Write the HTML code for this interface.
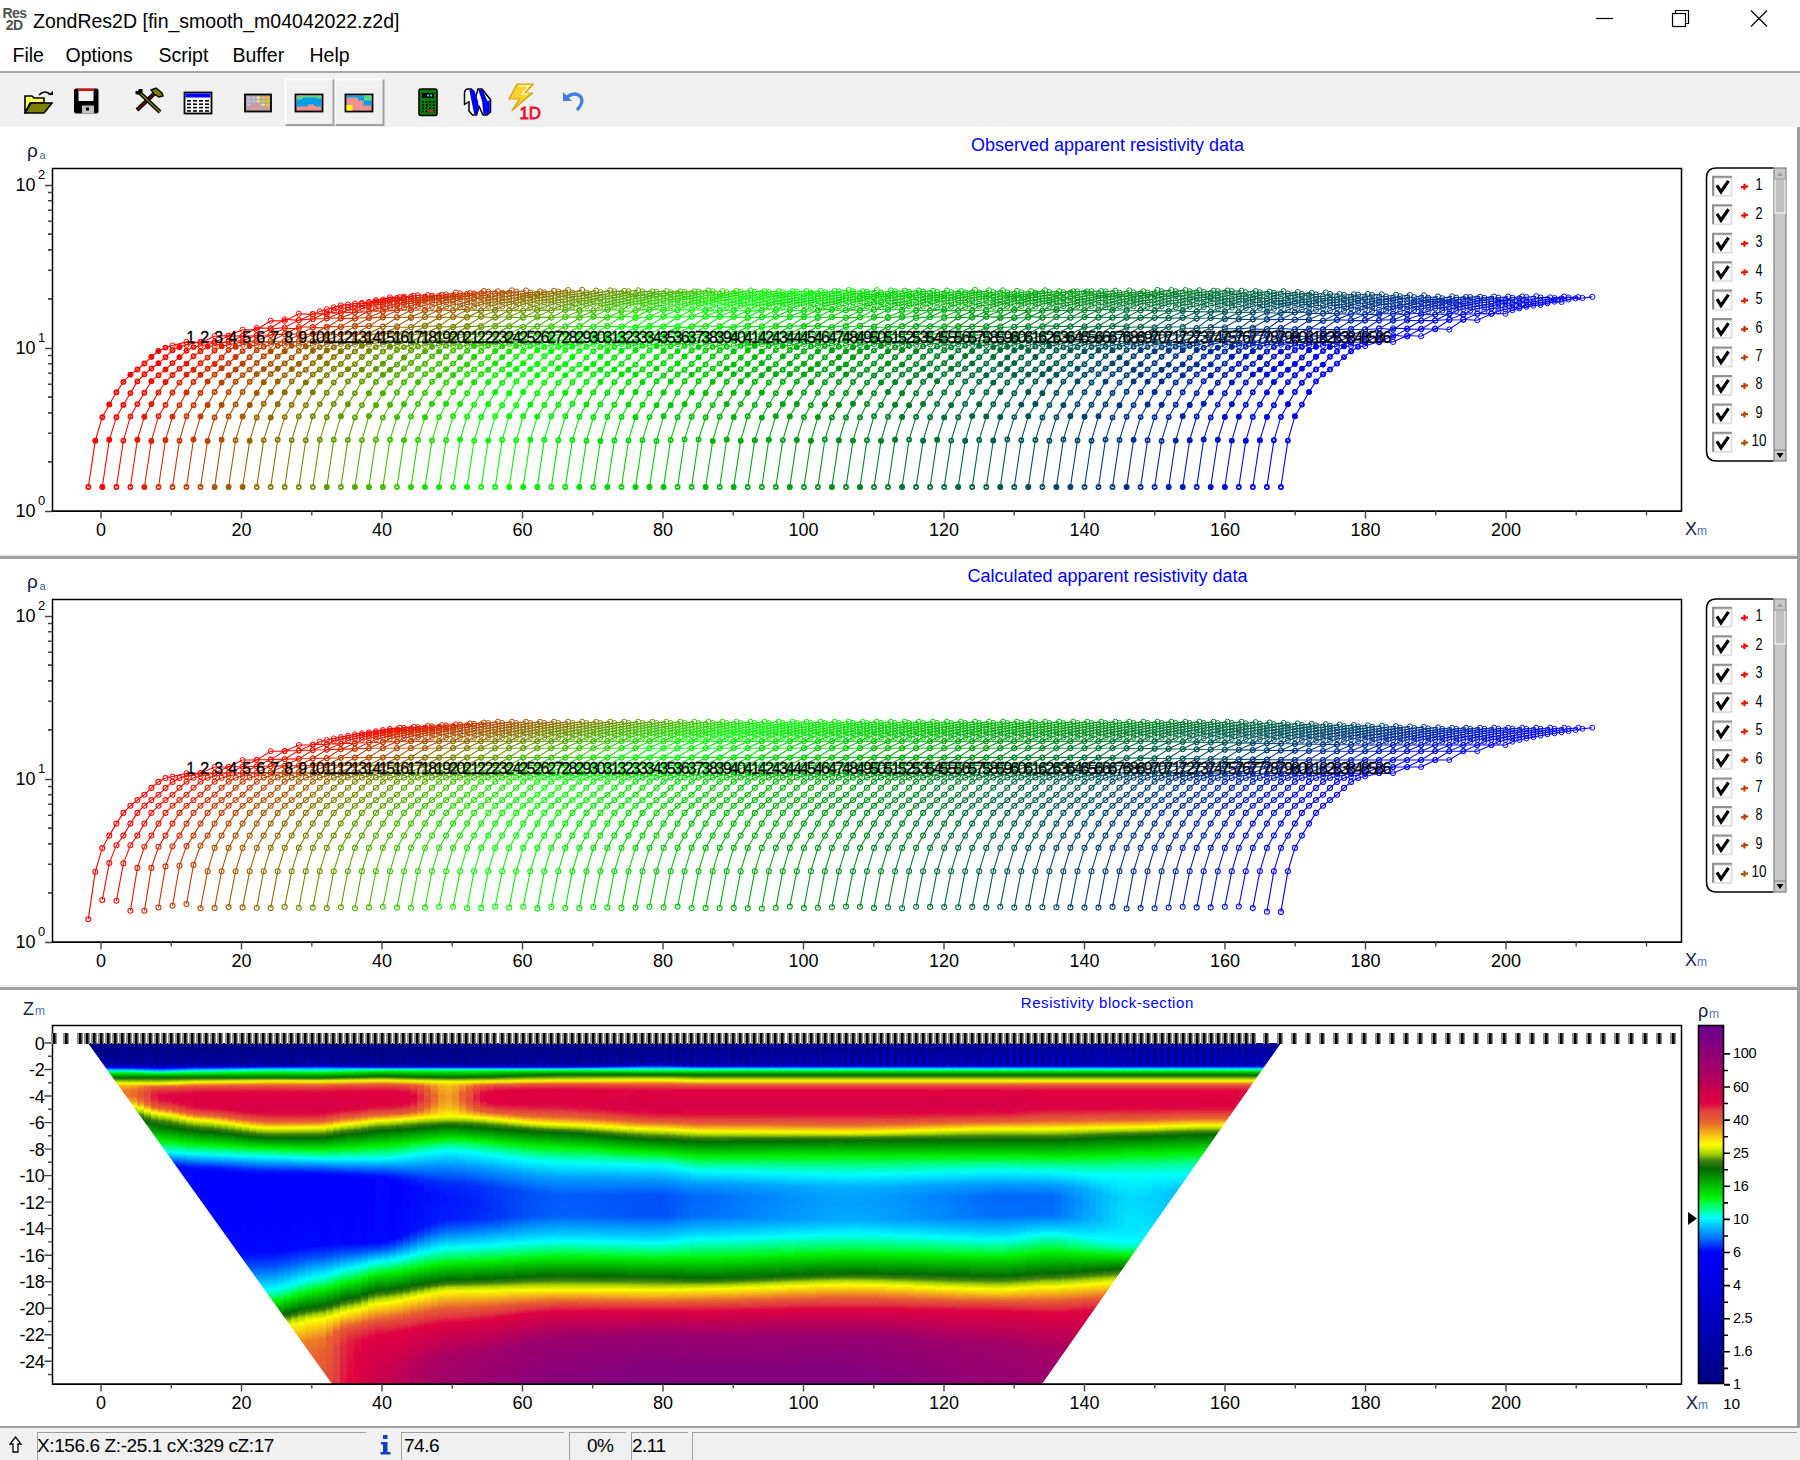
<!DOCTYPE html><html><head><meta charset="utf-8"><style>
html,body{margin:0;padding:0;width:1800px;height:1460px;overflow:hidden;background:#fff;}
body{position:relative;font-family:'Liberation Sans', sans-serif;}
.a{position:absolute;white-space:pre;}
svg{position:absolute;left:0;top:0;}
</style></head><body>
<div class="a" style="left:2.5px;top:6.5px;width:26px;font-size:14px;line-height:12px;color:#505050;font-weight:bold;letter-spacing:-0.6px">Res<br>&nbsp;2D</div>
<div class="a" style="left:33px;top:8.5px;font-size:19.5px;line-height:24px;color:#000">ZondRes2D [fin_smooth_m04042022.z2d]</div>
<div class="a" style="left:12.5px;top:43.3px;font-size:19.5px;line-height:24px;color:#000">File</div>
<div class="a" style="left:65.5px;top:43.3px;font-size:19.5px;line-height:24px;color:#000">Options</div>
<div class="a" style="left:158.5px;top:43.3px;font-size:19.5px;line-height:24px;color:#000">Script</div>
<div class="a" style="left:232.5px;top:43.3px;font-size:19.5px;line-height:24px;color:#000">Buffer</div>
<div class="a" style="left:309.5px;top:43.3px;font-size:19.5px;line-height:24px;color:#000">Help</div>
<div class="a" style="left:0;top:71px;width:1800px;height:2px;background:#a8a8a8"></div>
<div class="a" style="left:0;top:73px;width:1800px;height:54px;background:#f0f0f0"></div>
<div class="a" style="left:1797px;top:127px;width:3px;height:1300px;background:#a0a0a0"></div>
<div class="a" style="left:0;top:554px;width:1797px;height:2px;background:#f0f0f0"></div>
<div class="a" style="left:0;top:556px;width:1797px;height:3px;background:#a0a0a0"></div>
<div class="a" style="left:0;top:985px;width:1797px;height:2px;background:#f0f0f0"></div>
<div class="a" style="left:0;top:987px;width:1797px;height:3px;background:#a0a0a0"></div>
<div class="a" style="left:0;top:1426px;width:1800px;height:2px;background:#a0a0a0"></div>
<div class="a" style="left:0;top:1428px;width:1800px;height:32px;background:#f0f0f0"></div>
<div class="a" style="left:37px;top:1432px;width:329px;height:28px;border-left:1px solid #a0a0a0;border-top:1px solid #a0a0a0;box-sizing:border-box"></div>
<div class="a" style="left:401px;top:1432px;width:163px;height:28px;border-left:1px solid #a0a0a0;border-top:1px solid #a0a0a0;box-sizing:border-box"></div>
<div class="a" style="left:569px;top:1432px;width:57px;height:28px;border-left:1px solid #a0a0a0;border-top:1px solid #a0a0a0;box-sizing:border-box"></div>
<div class="a" style="left:631px;top:1432px;width:57px;height:28px;border-left:1px solid #a0a0a0;border-top:1px solid #a0a0a0;box-sizing:border-box"></div>
<div class="a" style="left:692px;top:1432px;width:1105px;height:28px;border-left:1px solid #a0a0a0;border-top:1px solid #a0a0a0;box-sizing:border-box"></div>
<div class="a" style="font-size:19px;line-height:22px;color:#000;top:1435px;left:37px;letter-spacing:-0.4px">X:156.6 Z:-25.1 cX:329 cZ:17</div>
<div class="a" style="font-size:19px;line-height:22px;color:#000;top:1435px;left:404px;letter-spacing:-0.5px">74.6</div>
<div class="a" style="font-size:19px;line-height:22px;color:#000;top:1435px;left:587px;letter-spacing:-0.5px">0%</div>
<div class="a" style="font-size:19px;line-height:22px;color:#000;top:1435px;left:632px;letter-spacing:-0.5px">2.11</div>
<div class="a" style="left:88px;top:1043px;width:1193px;height:341px;overflow:hidden;clip-path:polygon(0 0,1193px 0,954px 341px,244px 341px)">
<div class="a" style="left:0px;top:0;width:7px;height:341px;background:linear-gradient(#000099 0px,#0000b4 20px,#0000f7 24px,#002cfa 25px,#008cff 26px,#00cfff 27px,#00ffd9 28px,#00f513 30px,#00d600 31px,#007c00 34px,#0d6d03 35px,#317a0c 36px,#a0d000 38px,#edf600 40px,#fdf404 41px,#f8d20f 44px,#f8cf10 49px,#fcfe00 55px,#a7d300 59px,#4a890e 62px,#076a02 66px,#00f104 82px,#00ffa9 90px,#00fffd 94px,#005cfb 105px,#000bfe 111px,#0000fe 118px,#0008fe 213px,#005cfb 225px,#00fff7 243px,#00ff72 249px,#00f30d 253px,#00e100 255px,#006900 267px,#508d0d 273px,#a6d300 277px,#fffc01 284px,#eb7b29 302px,#e85e31 318px,#e75b32 341px)"></div>
<div class="a" style="left:7px;top:0;width:7px;height:341px;background:linear-gradient(#000099 0px,#0000b3 20px,#0000f6 24px,#0025fb 25px,#0089ff 26px,#00ceff 27px,#00ffd9 28px,#00f412 30px,#00d500 31px,#007c00 34px,#0d6d03 35px,#307a0c 36px,#9ccd01 38px,#ecf500 40px,#fdf304 41px,#f7c912 44px,#f4bb17 48px,#fbe30a 54px,#fffe00 56px,#a8d400 60px,#377d0e 64px,#006c00 68px,#00f000 83px,#00ffa4 91px,#00fff9 95px,#005afb 106px,#0009fe 112px,#0000fe 130px,#0008fe 213px,#0051fa 224px,#00f5ff 242px,#00fffd 243px,#00ff7a 249px,#00ef00 254px,#006c00 267px,#4a890e 273px,#b2d900 278px,#fffd01 284px,#eb792a 302px,#e75d31 317px,#e65a33 341px)"></div>
<div class="a" style="left:14px;top:0;width:7px;height:341px;background:linear-gradient(#000099 0px,#0000b3 20px,#0000f4 24px,#001cfc 25px,#0085ff 26px,#00cdff 27px,#00ffd8 28px,#00f410 30px,#00b600 32px,#007c00 34px,#0d6d03 35px,#307a0c 36px,#99ca01 38px,#ebf500 40px,#fdf204 41px,#f5bc17 44px,#f1a71e 49px,#f9d70e 55px,#f7fb00 58px,#9acb01 62px,#3f8010 65px,#036901 69px,#00f106 85px,#00ffab 93px,#00fdff 97px,#005efb 107px,#0008fe 113px,#0008fe 213px,#0058fb 225px,#00f1ff 242px,#00fff2 244px,#00ff6b 250px,#00f207 254px,#036901 268px,#428210 273px,#aed700 278px,#fffe00 284px,#eb772a 302px,#e75d31 313px,#e65834 341px)"></div>
<div class="a" style="left:21px;top:0;width:7px;height:341px;background:linear-gradient(#000099 0px,#0000b2 20px,#0000f2 24px,#0011fd 25px,#0081ff 26px,#00cbff 27px,#00ffd7 28px,#00f30e 30px,#00b500 32px,#007c00 34px,#0d6d03 35px,#2f7a0c 36px,#5d980b 37px,#97c802 38px,#eaf400 40px,#fdf105 41px,#f5bc17 43px,#ee9323 48px,#f1a51e 53px,#fce808 58px,#fefa02 59px,#a9d500 63px,#3a7e0e 67px,#006900 71px,#00ec00 86px,#00ff40 90px,#00faff 99px,#0051fa 109px,#0008fe 114px,#0007fe 213px,#0056fa 225px,#00fffa 244px,#00ff77 250px,#00ee00 255px,#006a00 268px,#3c7f0f 273px,#a9d400 278px,#fefe00 284px,#ea6f2c 303px,#e75a33 315px,#e55535 341px)"></div>
<div class="a" style="left:28px;top:0;width:7px;height:341px;background:linear-gradient(#000098 0px,#0000b2 20px,#0006fe 25px,#007afe 26px,#00caff 27px,#00ffd6 28px,#00ff69 29px,#00f30d 30px,#00b500 32px,#007c00 34px,#0d6d03 35px,#5c970b 37px,#95c702 38px,#e9f400 40px,#fdf105 41px,#f3b31a 43px,#ec8327 48px,#ee8c25 53px,#f6c713 58px,#fefe00 61px,#9ece00 65px,#44830f 68px,#006d00 73px,#00ee00 88px,#00ff8a 95px,#00fffa 100px,#006afd 109px,#0013fd 114px,#0000ff 117px,#0007fe 213px,#0054fa 225px,#00f3ff 243px,#00ffef 245px,#00ff67 251px,#00f105 255px,#056a01 269px,#49870f 274px,#a4d200 278px,#fbfd00 284px,#e9682e 304px,#e55436 330px,#e55336 341px)"></div>
<div class="a" style="left:35px;top:0;width:7px;height:341px;background:linear-gradient(#000098 0px,#0000b1 20px,#0000ff 25px,#0075fe 26px,#00c9ff 27px,#00ffd6 28px,#00ff67 29px,#00f30b 30px,#009900 33px,#0d6d03 35px,#5b970b 37px,#94c602 38px,#e9f400 40px,#fdf105 41px,#f2ae1b 43px,#eb782a 48px,#eb7a29 53px,#f5bf16 59px,#fffd01 62px,#a2d100 66px,#48870f 69px,#006b00 74px,#00ec00 89px,#00ff57 94px,#00fff5 101px,#00b0ff 106px,#000ffd 115px,#0000fe 119px,#0007fe 213px,#0052fa 225px,#00f0ff 243px,#00fff5 245px,#00ff70 251px,#00f30c 255px,#00d600 258px,#016900 269px,#438210 274px,#a1d000 278px,#f9fc00 284px,#f2af1b 294px,#e86130 305px,#e45237 341px)"></div>
<div class="a" style="left:42px;top:0;width:7px;height:341px;background:linear-gradient(#000098 0px,#0000b1 20px,#0000fe 25px,#006dfd 26px,#00c3ff 27px,#00ffdd 28px,#00f40f 30px,#00b500 32px,#007c00 34px,#0d6d03 35px,#5b960c 37px,#93c502 38px,#e8f400 40px,#fdf005 41px,#f1a81d 43px,#ea6c2d 48px,#e96a2d 53px,#f1a71e 59px,#fffe00 63px,#a0d000 67px,#46850f 70px,#006c00 75px,#00ed00 90px,#00ff59 95px,#00fff8 102px,#0062fc 111px,#000bfe 116px,#0000fe 123px,#0007fe 213px,#0051fa 225px,#00eeff 243px,#00fff9 245px,#00ff76 251px,#00ed00 256px,#006900 269px,#3f7f10 274px,#9ccd01 278px,#fffc01 285px,#e9642f 304px,#e45137 335px,#e45038 341px)"></div>
<div class="a" style="left:49px;top:0;width:7px;height:341px;background:linear-gradient(#000098 0px,#0000b0 20px,#0000fc 25px,#00fff9 28px,#00f71f 30px,#00d800 31px,#007a00 34px,#0f6e04 35px,#5b960c 37px,#91c402 38px,#e7f300 40px,#fdef05 41px,#ef9a21 43px,#e9662e 46px,#e55336 52px,#e9652f 57px,#ef9b21 61px,#fffd01 65px,#9fcf00 69px,#46850f 72px,#006b00 77px,#00ee00 92px,#00ff75 98px,#00ffff 104px,#0058fb 113px,#0006fe 118px,#0006fe 213px,#004ffa 225px,#00f3ff 244px,#00fff0 246px,#00ff69 252px,#00f106 256px,#056a01 270px,#49880e 275px,#a5d200 279px,#fdfe00 285px,#e86030 304px,#e34d39 338px,#e34d3a 341px)"></div>
<div class="a" style="left:56px;top:0;width:7px;height:341px;background:linear-gradient(#000097 0px,#0000b0 20px,#0000e9 24px,#0000fa 25px,#0045f9 26px,#00ecff 28px,#00ffa7 29px,#00fc34 30px,#00de00 31px,#007900 34px,#116f04 35px,#5c970b 37px,#90c303 38px,#e6f300 40px,#fcee06 41px,#ee8c25 43px,#e96b2d 44px,#e1443e 50px,#e45138 58px,#ea722b 62px,#f5bd16 65px,#fdf304 67px,#f5fa00 68px,#8fc103 72px,#3c7f0f 75px,#046a01 79px,#00f207 95px,#00ff9f 102px,#00fffd 106px,#0057fa 115px,#000ffd 119px,#0000fe 123px,#0006fe 213px,#004cf9 225px,#00fffa 246px,#00ff79 252px,#00ef00 257px,#006a00 270px,#3d7f0f 275px,#aad500 280px,#fffd01 286px,#e86030 303px,#e24a3b 327px,#e2483c 341px)"></div>
<div class="a" style="left:63px;top:0;width:7px;height:341px;background:linear-gradient(#000097 0px,#0000af 20px,#0000e6 24px,#0000f8 25px,#0035f9 26px,#0091ff 27px,#00d6ff 28px,#00ffc5 29px,#00ff4b 30px,#00e500 31px,#007700 34px,#136f05 35px,#347b0d 36px,#badd00 39px,#e6f200 40px,#fced06 41px,#ec8227 43px,#e75d31 44px,#e01a40 52px,#e02340 56px,#e65933 63px,#ea742b 65px,#fced06 69px,#fdfe00 70px,#96c702 74px,#408010 77px,#006d00 82px,#00f106 97px,#00ff88 103px,#00feff 108px,#0068fc 116px,#0018fc 120px,#0000ff 123px,#0006fe 213px,#004af9 225px,#00f2ff 245px,#00fff2 247px,#00ff6d 253px,#00f20a 257px,#00c000 262px,#046901 271px,#45840f 276px,#a1d000 280px,#fbfd00 286px,#f2a91d 295px,#e75b32 304px,#e1453d 331px,#e1443e 341px)"></div>
<div class="a" style="left:70px;top:0;width:7px;height:341px;background:linear-gradient(#000097 0px,#0000af 20px,#0000e6 24px,#0000f8 25px,#002ffa 26px,#008cff 27px,#00ceff 28px,#00ffd1 29px,#00ff56 30px,#00e700 31px,#007700 34px,#157005 35px,#357c0d 36px,#bbdd00 39px,#e7f300 40px,#fcec06 41px,#ec7d29 43px,#e65a33 44px,#e02340 49px,#e00240 53px,#e01c40 58px,#e44e39 63px,#e96a2d 66px,#fce808 70px,#fffd01 71px,#9bcc01 75px,#44840f 78px,#006a00 83px,#00f105 98px,#00ffa1 105px,#00fdff 109px,#0065fc 117px,#0016fd 121px,#0000fe 124px,#0005fe 213px,#0049f9 225px,#00efff 245px,#00fff7 247px,#00ff75 253px,#00ed00 258px,#006800 271px,#3f8010 276px,#acd600 281px,#fefb01 287px,#e75e31 303px,#e1453d 321px,#e1423f 341px)"></div>
<div class="a" style="left:77px;top:0;width:7px;height:341px;background:linear-gradient(#000097 0px,#0000af 20px,#0000fa 25px,#003df8 26px,#0095ff 27px,#00d9ff 28px,#00ffc2 29px,#00ff49 30px,#00e400 31px,#007700 34px,#157005 35px,#367c0d 36px,#99ca01 38px,#f1f800 40px,#fbe409 41px,#eb772a 43px,#e65834 44px,#e02f40 48px,#e00140 52px,#e00640 57px,#e34e39 64px,#ea6d2d 67px,#fceb07 71px,#ffff00 72px,#97c901 76px,#418110 79px,#006d00 84px,#00ee00 98px,#00ff66 103px,#00fff9 109px,#006ffd 117px,#000ffd 122px,#0000fe 126px,#0005fe 213px,#0050fa 226px,#00ecff 245px,#00fffc 247px,#00ff7d 253px,#00f000 258px,#006b00 271px,#3c7e0f 276px,#a9d400 281px,#fffc01 287px,#e75d32 303px,#e1433e 321px,#e04040 341px)"></div>
<div class="a" style="left:84px;top:0;width:7px;height:341px;background:linear-gradient(#000096 0px,#0000af 20px,#0000fd 25px,#00e9ff 28px,#00ffad 29px,#00fd39 30px,#00e000 31px,#007700 34px,#167005 35px,#387d0e 36px,#a4d200 38px,#fffe00 40px,#f9d80d 41px,#ea6e2d 43px,#e34c3a 45px,#df0041 52px,#e00540 59px,#e34b3b 65px,#e8632f 68px,#fbe309 72px,#fef902 73px,#a0d000 77px,#48860f 80px,#006a00 85px,#00f000 99px,#00ff8a 105px,#00fbff 110px,#004ffa 119px,#000cfe 123px,#0000fe 129px,#0008fe 214px,#0056fa 227px,#00f2ff 246px,#00fff2 248px,#00ff6e 254px,#00f20a 258px,#00c000 263px,#046a01 272px,#47860f 277px,#a4d200 281px,#fffe00 287px,#e75c32 303px,#e0413f 319px,#e03840 341px)"></div>
<div class="a" style="left:91px;top:0;width:7px;height:341px;background:linear-gradient(#000096 0px,#0000b0 20px,#0003ff 25px,#0068fc 26px,#00faff 28px,#00fa2a 30px,#00dc00 31px,#007700 34px,#177006 35px,#3b7e0f 36px,#afd700 38px,#deef00 39px,#fdf304 40px,#e9642f 43px,#e01740 49px,#de0041 52px,#e00440 61px,#e2463d 66px,#e75c32 69px,#f4b519 72px,#fdf005 74px,#f8fc00 75px,#8fc103 79px,#3c7e0f 82px,#026900 86px,#00f103 100px,#00ffac 107px,#00fff7 110px,#005ffb 119px,#000afe 124px,#0000fe 134px,#0008fe 214px,#0054fa 227px,#00eeff 246px,#00fffa 248px,#00ff7a 254px,#00ef00 259px,#006900 272px,#3f8010 277px,#9ece00 281px,#fefe00 287px,#f09f20 296px,#e75b33 303px,#e03740 322px,#e02f40 341px)"></div>
<div class="a" style="left:98px;top:0;width:7px;height:341px;background:linear-gradient(#000096 0px,#0000b0 20px,#0000f4 24px,#0019fc 25px,#007dff 26px,#00ffef 28px,#00f71e 30px,#00d900 31px,#007700 34px,#187106 35px,#3e7f0f 36px,#81b705 37px,#eef700 39px,#fbe708 40px,#e85e31 43px,#e03140 47px,#e00440 50px,#e00740 63px,#e2493c 68px,#e9662f 71px,#fbe708 75px,#fffc01 76px,#9acb01 80px,#408010 83px,#066a01 87px,#00f208 101px,#00ffb7 108px,#00fcff 111px,#0057fb 120px,#0008fe 125px,#0008fe 214px,#0052fa 227px,#00f3ff 247px,#00fff0 249px,#00ff6c 255px,#00f209 259px,#009800 268px,#066a01 273px,#4d8b0e 278px,#aad500 282px,#fafd00 287px,#f2ac1c 295px,#e75e31 302px,#e02f40 322px,#e02640 341px)"></div>
<div class="a" style="left:105px;top:0;width:7px;height:341px;background:linear-gradient(#000096 0px,#0000b0 20px,#0000f7 24px,#0029fa 25px,#0089ff 26px,#00cbff 27px,#00ffde 28px,#00f516 30px,#00d700 31px,#007700 34px,#187106 35px,#418110 36px,#8bbf03 37px,#fbfd00 39px,#f3b01b 41px,#e75b32 43px,#e01c40 48px,#e00040 50px,#dc0043 62px,#e00240 64px,#e2483c 69px,#e9642f 72px,#fbe608 76px,#fffc01 77px,#9acb01 81px,#408010 84px,#056a01 88px,#00ed00 101px,#00ff76 106px,#00fff9 111px,#004df9 121px,#0004ff 126px,#0008fe 214px,#0050fa 227px,#00f0ff 247px,#00fff6 249px,#00ff75 255px,#00ed00 260px,#026900 273px,#47860f 278px,#a6d300 282px,#f8fb00 287px,#f6c713 293px,#e75d31 302px,#e02a40 321px,#e02040 341px)"></div>
<div class="a" style="left:112px;top:0;width:7px;height:341px;background:linear-gradient(#000096 0px,#0000b0 20px,#0000f8 24px,#0030fa 25px,#008eff 26px,#00d0ff 27px,#00ffd6 28px,#00f412 30px,#00d600 31px,#007700 34px,#197106 35px,#43830f 36px,#8fc203 37px,#fffe00 39px,#f2ab1c 41px,#e75a33 43px,#e01b40 48px,#e00040 50px,#db0044 62px,#e00940 65px,#e1443e 69px,#e75c32 72px,#fdf205 77px,#f6fa00 78px,#8abe04 82px,#397d0e 85px,#006b00 89px,#00ea00 101px,#00fd39 104px,#00fff4 111px,#00d1ff 114px,#0011fd 125px,#0000fe 128px,#0008fe 214px,#0051fa 227px,#00e6ff 246px,#00fff7 249px,#00ff76 255px,#00ee00 260px,#016800 273px,#45840f 278px,#a5d300 282px,#fefa02 288px,#e75e31 302px,#e02b40 321px,#e02140 341px)"></div>
<div class="a" style="left:119px;top:0;width:7px;height:341px;background:linear-gradient(#000096 0px,#0000b0 20px,#0000f8 24px,#0034f9 25px,#0092ff 26px,#00d6ff 27px,#00ffcf 28px,#00f30e 30px,#00b500 32px,#007700 34px,#197106 35px,#45840f 36px,#92c502 37px,#fffc01 39px,#eb7a29 42px,#e65a33 43px,#e00040 50px,#da0044 62px,#e00340 65px,#e2483c 70px,#e9652f 73px,#fbe509 77px,#fefa02 78px,#9bcc01 82px,#408010 85px,#036901 89px,#00f105 102px,#00ffbc 109px,#00f8ff 112px,#0015fd 125px,#0000ff 128px,#0006fe 213px,#004bf9 226px,#00f1ff 247px,#00fff4 249px,#00ff74 255px,#00ed00 260px,#016800 273px,#46850f 278px,#a7d300 282px,#f9fc00 287px,#f5bb17 294px,#e75c32 303px,#e03240 324px,#e02b40 341px)"></div>
<div class="a" style="left:126px;top:0;width:7px;height:341px;background:linear-gradient(#000095 0px,#0000b0 20px,#0000f9 24px,#003bf9 25px,#0097ff 26px,#00ddff 27px,#00ffc5 28px,#00ff5e 29px,#00f209 30px,#007700 34px,#197106 35px,#47860f 36px,#97c802 37px,#fef902 39px,#eb772a 42px,#e65934 43px,#df0040 50px,#db0044 63px,#e00840 66px,#e1433e 70px,#e75a33 73px,#f3b01b 76px,#ffff00 79px,#93c502 83px,#3b7e0f 86px,#006a00 90px,#00ee00 102px,#00ff7e 107px,#00fcff 112px,#001afc 125px,#0000fe 129px,#0007fe 213px,#0055fa 227px,#00f3ff 247px,#00fff1 249px,#00ff71 255px,#00ec00 260px,#016800 273px,#47860f 278px,#a8d400 282px,#fafd00 287px,#f3b11a 295px,#e85e31 303px,#e0423f 319px,#e03840 341px)"></div>
<div class="a" style="left:133px;top:0;width:7px;height:341px;background:linear-gradient(#000095 0px,#0000b0 20px,#0000fa 24px,#0043f8 25px,#009eff 26px,#00e6ff 27px,#00ffba 28px,#00ff55 29px,#00f103 30px,#007700 34px,#1a7206 35px,#4a880e 36px,#9ccd01 37px,#d6eb00 38px,#fef603 39px,#eb742b 42px,#e34b3a 44px,#df0040 50px,#db0043 64px,#e00040 66px,#e1453d 71px,#e75d32 74px,#fced06 79px,#fcfe00 80px,#8ec103 84px,#387d0e 87px,#006e00 91px,#00ea00 102px,#00f823 104px,#00fffb 112px,#0014fd 126px,#0000ff 129px,#0006fe 212px,#0049f9 225px,#00ecff 246px,#00fffe 248px,#00ff86 254px,#00f30d 259px,#00e100 261px,#016800 273px,#49870f 278px,#abd500 282px,#fcfe00 287px,#e85f31 304px,#e2463d 322px,#e1433f 341px)"></div>
<div class="a" style="left:140px;top:0;width:7px;height:341px;background:linear-gradient(#000095 0px,#0000b0 20px,#0000fb 24px,#00f0ff 27px,#00ffad 28px,#00ff4a 29px,#00ef00 30px,#007700 34px,#1a7207 35px,#4d8b0e 36px,#a1d100 37px,#dcee00 38px,#fdf205 39px,#ea712c 42px,#e34a3b 44px,#df0041 50px,#d80045 63px,#e00240 67px,#e2463d 72px,#e85e31 75px,#fcee06 80px,#fcfd00 81px,#8dc003 85px,#4c8a0e 87px,#056a01 91px,#00ef00 103px,#00ffa4 109px,#00fff3 112px,#00d2ff 115px,#001afc 126px,#0000fe 130px,#0007fe 212px,#0054fa 226px,#00eeff 246px,#00fffa 248px,#00ff82 254px,#00f20a 259px,#00c200 264px,#016800 273px,#4b890e 278px,#add700 282px,#feff00 287px,#e86030 305px,#e34a3b 332px,#e2493b 341px)"></div>
<div class="a" style="left:147px;top:0;width:7px;height:341px;background:linear-gradient(#000095 0px,#0000b0 20px,#0000fc 24px,#00f9ff 27px,#00ff40 29px,#00ec00 30px,#007700 34px,#1b7207 35px,#518e0d 36px,#a6d300 37px,#e2f100 38px,#fcee06 39px,#ea6d2d 42px,#e24a3b 44px,#df0041 50px,#d80045 64px,#e00440 68px,#e2473d 73px,#e85f30 76px,#fcee06 81px,#fcfe00 82px,#8bbf03 86px,#49880e 88px,#026900 92px,#00ea00 103px,#00f925 105px,#00fbff 113px,#0021fb 126px,#0000ff 130px,#0006fe 211px,#0050fa 225px,#00f1ff 246px,#00fff7 248px,#00ff7e 254px,#00f208 259px,#016800 273px,#4d8b0e 278px,#9dce00 281px,#fffe00 287px,#e9662e 306px,#e45138 330px,#e45038 341px)"></div>
<div class="a" style="left:154px;top:0;width:7px;height:341px;background:linear-gradient(#000095 0px,#0000b1 20px,#0000fd 24px,#00b5ff 26px,#00fffa 27px,#00fd38 29px,#00ea00 30px,#007800 34px,#1b7207 35px,#55910d 36px,#abd500 37px,#e8f400 38px,#fce907 39px,#e96a2e 42px,#e01440 48px,#df0041 50px,#d70046 64px,#e00740 69px,#e2483c 74px,#e86230 77px,#fcee06 82px,#fcfd00 83px,#89bd04 87px,#45840f 89px,#006a00 93px,#00ef00 104px,#00ffac 110px,#00fffd 113px,#001bfc 127px,#0000ff 131px,#0008fe 211px,#0053fa 225px,#00eaff 245px,#00fff3 248px,#00ff62 255px,#00f106 259px,#016800 273px,#4f8d0d 278px,#a1d000 281px,#fffe00 287px,#eb772a 305px,#e75d32 315px,#e65635 341px)"></div>
<div class="a" style="left:161px;top:0;width:7px;height:341px;background:linear-gradient(#000095 0px,#0000b1 20px,#0000fe 24px,#006bfd 25px,#00bcff 26px,#00ffee 27px,#00fc32 29px,#00e800 30px,#007800 34px,#1c7207 35px,#59940c 36px,#b0d800 37px,#eef700 38px,#fbe609 39px,#e9672e 42px,#e02140 47px,#de0041 50px,#d70046 65px,#e00040 69px,#e2493c 75px,#e9672e 78px,#fdf005 83px,#f9fc00 84px,#a6d300 87px,#3f8010 90px,#006e00 94px,#00ea00 104px,#00fa29 106px,#00fff5 113px,#00b1ff 118px,#0015fd 128px,#0000fe 132px,#0006fe 210px,#004ffa 224px,#00ecff 245px,#00ffff 247px,#00ff76 254px,#00f104 259px,#016800 273px,#3a7e0f 277px,#a3d200 281px,#fffd01 287px,#ec8228 305px,#e85f30 321px,#e75c32 341px)"></div>
<div class="a" style="left:168px;top:0;width:7px;height:341px;background:linear-gradient(#000095 0px,#0000b1 20px,#0000ff 24px,#0073fe 25px,#00c3ff 26px,#00ffe4 27px,#00fa2c 29px,#00e600 30px,#007800 34px,#1c7307 35px,#5c970b 36px,#b4da00 37px,#f4f900 38px,#fbe20a 39px,#e9642f 42px,#e02040 47px,#de0041 50px,#d60047 65px,#e00340 70px,#e1453e 75px,#e75c32 78px,#fef503 84px,#f1f800 85px,#9ece00 88px,#3a7e0e 91px,#036901 94px,#00f104 105px,#00ff9a 110px,#00ffee 113px,#00f9ff 114px,#0019fc 128px,#0000ff 132px,#0008fe 210px,#0051fa 224px,#00eeff 245px,#00fffc 247px,#00ff74 254px,#00f002 259px,#016800 273px,#3b7e0f 277px,#a6d300 281px,#f7fb00 286px,#f7c713 295px,#ec8327 307px,#e9652f 329px,#e86230 341px)"></div>
<div class="a" style="left:175px;top:0;width:7px;height:341px;background:linear-gradient(#000095 0px,#0000b1 20px,#0004ff 24px,#007afe 25px,#00c9ff 26px,#00ffdd 27px,#00f928 29px,#00e500 30px,#007800 34px,#1d7307 35px,#5f990b 36px,#b7db00 37px,#f8fb00 38px,#f4b619 40px,#e8622f 42px,#e01f40 47px,#e00240 49px,#d40048 64px,#df0040 70px,#e2483c 76px,#e8622f 79px,#fcea07 84px,#fffd01 85px,#8dc003 89px,#45840f 91px,#006d00 95px,#00ee00 105px,#00ff94 110px,#00fcff 114px,#001dfc 128px,#0000ff 132px,#0006fe 209px,#004cf9 223px,#00efff 245px,#00fffa 247px,#00ff71 254px,#00f001 259px,#016800 273px,#3b7e0f 277px,#a7d400 281px,#f9fc00 286px,#ed8b25 307px,#ea6d2d 329px,#e96a2e 341px)"></div>
<div class="a" style="left:182px;top:0;width:7px;height:341px;background:linear-gradient(#000094 0px,#0000b1 20px,#0008fe 24px,#007dff 25px,#00cbff 26px,#00ffdb 27px,#00f928 29px,#00e500 30px,#007800 34px,#1d7307 35px,#5f9a0b 36px,#b8dc00 37px,#f9fc00 38px,#f4b519 40px,#e8622f 42px,#e01f40 47px,#e00240 49px,#d40048 64px,#e00840 71px,#e2473d 76px,#e85f30 79px,#fbe608 84px,#fefa02 85px,#93c502 89px,#4b890e 91px,#006b00 95px,#00ec00 105px,#00ff70 109px,#00feff 114px,#001efc 128px,#0000ff 132px,#0007fe 209px,#004ffa 223px,#00f4ff 245px,#00fff2 247px,#00ff66 254px,#00ec00 259px,#066a01 273px,#428210 277px,#99ca01 280px,#fdfe00 286px,#ee8f24 306px,#ea6f2c 328px,#e96c2d 341px)"></div>
<div class="a" style="left:189px;top:0;width:7px;height:341px;background:linear-gradient(#000094 0px,#0000b1 20px,#0000f1 23px,#000dfe 24px,#007fff 25px,#00caff 26px,#00ffde 27px,#00fa2a 29px,#00e600 30px,#007800 34px,#1c7207 35px,#5e990b 36px,#b7db00 37px,#f8fc00 38px,#f4b619 40px,#e8632f 42px,#e02040 47px,#de0041 50px,#d50047 65px,#e00840 71px,#e2473c 76px,#e86030 79px,#fce808 84px,#fefb01 85px,#91c402 89px,#4a880e 91px,#006b00 95px,#00eb00 105px,#00fa2c 107px,#00fffb 114px,#0014fd 129px,#0000fe 133px,#0006fe 208px,#0050fa 222px,#00f0ff 243px,#00fffa 245px,#00ff73 252px,#00f105 257px,#086b02 272px,#46850f 276px,#9dce00 279px,#ffff00 285px,#ee8f24 304px,#ea6d2d 326px,#e9692e 341px)"></div>
<div class="a" style="left:196px;top:0;width:7px;height:341px;background:linear-gradient(#000094 0px,#0000b1 20px,#0000f3 23px,#0013fd 24px,#0081ff 25px,#00c9ff 26px,#00ffe2 27px,#00fb2e 29px,#00e700 30px,#007900 34px,#1b7207 35px,#5d980b 36px,#b6db00 37px,#f7fb00 38px,#f4b718 40px,#e8642f 42px,#e02040 47px,#de0041 50px,#d50047 65px,#e00840 71px,#e2473c 76px,#e86130 79px,#fcea07 84px,#fffd01 85px,#8fc203 89px,#49870f 91px,#006a00 95px,#00e800 105px,#00f926 107px,#00fff4 114px,#00d2ff 117px,#0015fd 129px,#0000fe 133px,#0006fe 207px,#0054fa 221px,#00fff9 243px,#00ff75 250px,#00f209 255px,#00a200 264px,#026900 270px,#3c7f0f 274px,#a9d400 278px,#fafd00 283px,#ed8a25 303px,#e9692e 326px,#e9662f 341px)"></div>
<div class="a" style="left:203px;top:0;width:7px;height:341px;background:linear-gradient(#000094 0px,#0000b2 20px,#0000f4 23px,#001afc 24px,#0083ff 25px,#00c7ff 26px,#00ffe6 27px,#00fc32 29px,#00e900 30px,#007a00 34px,#1a7207 35px,#5b960c 36px,#b5da00 37px,#f6fb00 38px,#f4b818 40px,#e9652f 42px,#e02140 47px,#de0041 50px,#d50047 65px,#e00840 71px,#e2473c 76px,#e8622f 79px,#fcec07 84px,#ffff00 85px,#8dc003 89px,#47860f 91px,#006a00 95px,#00f104 106px,#00ff97 111px,#00fbff 115px,#0022fb 128px,#0000ff 132px,#0007fe 206px,#0052fa 219px,#00fcff 240px,#00ff9b 246px,#00f207 253px,#006900 268px,#397d0e 272px,#a4d200 276px,#f7fb00 281px,#f7c813 290px,#ec8028 303px,#e8632f 332px,#e86130 341px)"></div>
<div class="a" style="left:210px;top:0;width:7px;height:341px;background:linear-gradient(#000094 0px,#0000b2 20px,#0000f5 23px,#0021fb 24px,#0085ff 25px,#00c6ff 26px,#00ffea 27px,#00fd36 29px,#00ea00 30px,#007a00 34px,#197206 35px,#59950c 36px,#b4da00 37px,#f5fa00 38px,#fbe20a 39px,#e9662f 42px,#e02240 47px,#de0041 50px,#d50047 65px,#e00840 71px,#e2483c 76px,#e9642f 79px,#fcee06 84px,#fcfe00 85px,#8abe04 89px,#46850f 91px,#006a00 95px,#00ef00 106px,#00ffab 112px,#00fffd 115px,#0017fd 129px,#0000fe 133px,#0007fe 205px,#0058fb 218px,#00fffe 238px,#00ff6a 246px,#00f105 251px,#006b00 266px,#48870f 271px,#9fcf00 274px,#fffe00 280px,#ed8527 299px,#e8632f 319px,#e85f31 341px)"></div>
<div class="a" style="left:217px;top:0;width:7px;height:341px;background:linear-gradient(#000094 0px,#0000b3 20px,#0000f6 23px,#0026fb 24px,#0086ff 25px,#00c4ff 26px,#00ffee 27px,#00fe3a 29px,#00ec00 30px,#007b00 34px,#197106 35px,#58940c 36px,#b3d900 37px,#f4fa00 38px,#fbe30a 39px,#e9672e 42px,#e02240 47px,#df0041 50px,#d50048 65px,#e00840 71px,#e2483c 76px,#e9662f 79px,#fdf005 84px,#f9fc00 85px,#88bc04 89px,#45840f 91px,#006900 95px,#00ed00 106px,#00ff67 110px,#00fff5 115px,#00aeff 120px,#0018fc 129px,#0000fe 133px,#0008fe 204px,#004cf9 215px,#00fffd 236px,#00ff55 245px,#00f207 249px,#046a01 265px,#3e7f10 269px,#aad500 273px,#fcfe00 278px,#ec7f28 298px,#e85f30 320px,#e75d31 341px)"></div>
<div class="a" style="left:224px;top:0;width:7px;height:341px;background:linear-gradient(#000094 0px,#0000b3 20px,#0000e5 22px,#0000f7 23px,#002afa 24px,#0087ff 25px,#00fff1 27px,#00fe3c 29px,#00ed00 30px,#007b00 34px,#187106 35px,#56930c 36px,#b2d900 37px,#f3f900 38px,#fbe30a 39px,#e9682e 42px,#e01440 48px,#dc0042 51px,#d60047 66px,#e00840 71px,#e2483c 76px,#e9672e 79px,#fdf205 84px,#f7fb00 85px,#86bb04 89px,#44840f 91px,#006900 95px,#00eb00 106px,#00ff43 109px,#00ffef 115px,#00e6ff 117px,#0019fc 129px,#0000fe 133px,#0007fe 203px,#0056fa 215px,#00fdff 234px,#00ff74 242px,#00ef00 248px,#076b02 264px,#428210 268px,#99ca01 271px,#ffff00 277px,#ec8028 296px,#e85f30 315px,#e75c32 341px)"></div>
<div class="a" style="left:231px;top:0;width:7px;height:341px;background:linear-gradient(#000094 0px,#0000b3 20px,#0000f7 23px,#002afa 24px,#0087ff 25px,#00fff0 27px,#00fe3b 29px,#00ec00 30px,#007a00 34px,#197206 35px,#59950c 36px,#b3da00 37px,#f4fa00 38px,#fbe30a 39px,#e9672e 42px,#e02240 47px,#df0041 50px,#d50047 65px,#df0040 70px,#e2493b 76px,#ea6c2d 79px,#fae10a 83px,#fef503 84px,#f1f800 85px,#a2d100 88px,#3f8010 91px,#006b00 95px,#00eb00 106px,#00ff42 109px,#00ffed 115px,#00faff 116px,#001afc 129px,#0000fe 133px,#0005fe 202px,#004af9 213px,#00fdff 233px,#00ff74 241px,#00ef00 247px,#056a01 263px,#3f8010 267px,#abd500 271px,#fdfe00 276px,#eb7c29 295px,#e85e31 310px,#e65933 341px)"></div>
<div class="a" style="left:238px;top:0;width:7px;height:341px;background:linear-gradient(#000094 0px,#0000b2 20px,#0000f5 23px,#0021fb 24px,#0086ff 25px,#00c8ff 26px,#00ffe6 27px,#00fb30 29px,#00e700 30px,#007500 34px,#217408 35px,#659f0a 36px,#badd00 37px,#f9fc00 38px,#f3b519 40px,#e86130 42px,#e01140 48px,#de0041 50px,#d50047 64px,#e00940 70px,#e1423f 74px,#e9672e 78px,#fdf204 83px,#f6fb00 84px,#86bb04 88px,#45840f 90px,#006800 94px,#00ef00 106px,#00ff9f 112px,#00faff 116px,#0012fd 130px,#0000fe 134px,#0006fe 202px,#0053fa 213px,#00fbff 231px,#00ff8a 238px,#00f001 245px,#026901 261px,#3b7e0f 265px,#a5d200 269px,#fafd00 274px,#e8632f 294px,#e44f38 328px,#e44e39 341px)"></div>
<div class="a" style="left:245px;top:0;width:7px;height:341px;background:linear-gradient(#000094 0px,#0000b1 20px,#0000f2 23px,#0013fd 24px,#0083ff 25px,#00cfff 26px,#00ffd7 27px,#00f821 29px,#00e000 30px,#006d00 34px,#2a780b 35px,#c3e100 37px,#fffe00 38px,#e75d31 42px,#e00d40 48px,#dd0042 50px,#d70046 64px,#e00040 68px,#e24a3b 74px,#e96a2d 77px,#fadf0b 81px,#f4f900 83px,#a4d200 86px,#428210 89px,#006800 93px,#00ea00 105px,#00f821 107px,#00fbff 116px,#0018fc 130px,#0000fe 134px,#0008fe 202px,#0056fa 212px,#00ffff 229px,#00f71d 241px,#00ed00 243px,#076b02 259px,#3f8010 263px,#aad500 267px,#ffff00 272px,#e85e31 289px,#e1453e 306px,#e03e40 341px)"></div>
<div class="a" style="left:252px;top:0;width:7px;height:341px;background:linear-gradient(#000094 0px,#0000b0 20px,#0004ff 24px,#0080ff 25px,#00d6ff 26px,#00ffc9 27px,#00ff63 28px,#00f412 29px,#00da00 30px,#036901 34px,#337b0d 35px,#cae500 37px,#fefa02 38px,#e75a33 42px,#df0041 49px,#d80046 63px,#e00040 67px,#e1443e 72px,#e96b2d 76px,#fadf0b 80px,#f3f900 82px,#a4d200 85px,#428210 88px,#016800 92px,#00ee00 105px,#00ff72 110px,#00fbff 116px,#001dfc 130px,#0000ff 134px,#0005fe 201px,#004df9 210px,#00fffb 227px,#00f517 239px,#00ea00 241px,#006a00 256px,#43830f 261px,#acd600 265px,#fffd01 270px,#e75d31 285px,#e02a40 303px,#e01840 341px)"></div>
<div class="a" style="left:259px;top:0;width:7px;height:341px;background:linear-gradient(#000094 0px,#0000b0 20px,#0000fe 24px,#007eff 25px,#00daff 26px,#00ffc0 27px,#00ff59 28px,#00f208 29px,#086b02 34px,#387d0e 35px,#8abe04 36px,#cfe700 37px,#fef802 38px,#eb762b 41px,#e65834 42px,#df0041 49px,#d90045 63px,#e00940 67px,#e2483c 72px,#e86130 75px,#fced06 80px,#feff00 81px,#90c303 85px,#4f8c0e 87px,#086b02 91px,#00f102 105px,#00ffa7 112px,#00fcff 116px,#0014fd 131px,#0000fe 135px,#0006fe 201px,#0055fa 210px,#00faff 225px,#00ff70 233px,#00ef00 239px,#016800 255px,#4b890e 260px,#9dce00 263px,#f8fb00 268px,#f6c613 274px,#e75c32 283px,#e01940 299px,#e00240 339px,#e00240 341px)"></div>
<div class="a" style="left:266px;top:0;width:7px;height:341px;background:linear-gradient(#000094 0px,#0000af 20px,#0000fd 24px,#0079fe 25px,#00deff 26px,#00ffb7 27px,#00ff4e 28px,#00ef00 29px,#008100 33px,#0e6d04 34px,#3d7f0f 35px,#91c402 36px,#d2e900 37px,#fef603 38px,#ea722b 41px,#e34a3b 43px,#df0041 49px,#d80045 62px,#e00440 66px,#e1463d 71px,#e75c32 74px,#fef802 80px,#b7db00 83px,#7bb106 85px,#3d7f0f 87px,#006a00 91px,#00eb00 104px,#00fc33 107px,#00fcff 116px,#0017fc 131px,#0000ff 135px,#0008fe 201px,#0050fa 209px,#00fdff 224px,#00f61a 236px,#00eb00 238px,#086b02 254px,#3f8010 258px,#a7d400 262px,#ffff00 267px,#e75b32 282px,#e01140 298px,#de0041 312px,#dc0043 341px)"></div>
<div class="a" style="left:273px;top:0;width:7px;height:341px;background:linear-gradient(#000094 0px,#0000af 20px,#0000fb 24px,#00e5ff 26px,#00ffa9 27px,#00fe3d 28px,#00e900 29px,#007a00 33px,#177106 34px,#48860f 35px,#9ccd01 36px,#d8ec00 37px,#fdf304 38px,#ea6d2d 41px,#e2493b 43px,#de0041 49px,#da0044 62px,#e00340 65px,#e1453d 70px,#ea6d2d 74px,#fbe20a 78px,#fef703 79px,#d3e900 81px,#9fcf00 83px,#3e7f0f 86px,#006900 90px,#00f000 104px,#00ff97 111px,#00fbff 116px,#0012fd 132px,#0000fe 136px,#0004ff 200px,#0050fa 208px,#00fcff 222px,#00fa29 233px,#00f104 235px,#006900 251px,#46850f 256px,#add600 260px,#fffc01 265px,#e75c32 280px,#e03040 289px,#df0041 299px,#d40048 341px)"></div>
<div class="a" style="left:280px;top:0;width:7px;height:341px;background:linear-gradient(#000094 0px,#0000af 20px,#0000f8 24px,#0065fc 25px,#00edff 26px,#00ff98 27px,#00fa2c 28px,#00e200 29px,#007200 33px,#207408 34px,#55920c 35px,#a5d200 36px,#deef00 37px,#fdf005 38px,#e9682e 41px,#e01140 47px,#de0041 49px,#de0041 63px,#e01e40 66px,#e1453e 69px,#e96b2d 73px,#fae00b 77px,#fef503 78px,#f1f800 79px,#a0d000 82px,#3e7f0f 85px,#006900 89px,#00ec00 103px,#00ff59 108px,#00fbff 116px,#0016fd 132px,#0000ff 136px,#0006fe 200px,#004ffa 207px,#00fbff 220px,#00f925 231px,#00f000 233px,#026901 249px,#4f8c0e 254px,#a0d000 257px,#f9fc00 262px,#f3af1b 270px,#e75c32 278px,#e02f40 287px,#df0041 295px,#cd004d 341px)"></div>
<div class="a" style="left:287px;top:0;width:7px;height:341px;background:linear-gradient(#000094 0px,#0000ae 20px,#0000f6 24px,#005bfb 25px,#00f4ff 26px,#00ff8b 27px,#00f820 28px,#00dc00 29px,#006d00 33px,#267609 34px,#5e990b 35px,#a9d500 36px,#e2f000 37px,#fcee06 38px,#e8642f 41px,#e02040 46px,#e00240 48px,#dc0043 61px,#e00c40 64px,#e2493c 69px,#e86130 72px,#fdee06 77px,#fbfd00 78px,#88bc04 82px,#45840f 84px,#036901 88px,#00ef00 103px,#00ff9f 111px,#00fbff 116px,#004efa 128px,#0008fe 134px,#0007fe 200px,#004af9 206px,#00fffe 219px,#00f61a 230px,#00eb00 232px,#006a00 247px,#46850f 252px,#add600 256px,#fffc01 261px,#e75a33 277px,#e02b40 286px,#e00040 292px,#c80050 337px,#c70050 341px)"></div>
<div class="a" style="left:294px;top:0;width:7px;height:341px;background:linear-gradient(#000094 0px,#0000ae 20px,#0000f5 24px,#0059fb 25px,#00f4ff 26px,#00ff8a 27px,#00f720 28px,#00dc00 29px,#006f00 33px,#247509 34px,#5b960c 35px,#a7d300 36px,#dfef00 37px,#fdf005 38px,#e9652f 41px,#e02040 46px,#e00240 48px,#dc0043 61px,#e00f40 64px,#e1443e 68px,#e9672e 72px,#fdf404 77px,#f3f900 78px,#a1d100 81px,#3e7f0f 84px,#006900 88px,#00e200 101px,#00f105 103px,#00ffa7 111px,#00fff7 115px,#0051fa 128px,#0005fe 135px,#0008fe 199px,#0058fb 206px,#00fcff 218px,#00f820 229px,#00ee00 231px,#066a02 247px,#3e7f0f 251px,#a6d300 255px,#ffff00 260px,#e75c32 276px,#e02e40 285px,#df0041 292px,#c60051 335px,#c50052 341px)"></div>
<div class="a" style="left:301px;top:0;width:7px;height:341px;background:linear-gradient(#000094 0px,#0000ae 20px,#0000f5 24px,#0059fb 25px,#00f4ff 26px,#00ff8b 27px,#00f821 28px,#00dd00 29px,#007200 33px,#207408 34px,#528f0d 35px,#a1d000 36px,#d8ec00 37px,#fdf404 38px,#e9692e 41px,#e2493c 43px,#e00440 48px,#dd0042 61px,#e01340 64px,#e2463d 68px,#e75c32 71px,#fefb01 77px,#94c602 81px,#4f8d0d 83px,#086b02 87px,#00ef00 102px,#00ffa1 110px,#00fcff 115px,#001cfc 133px,#0000ff 139px,#0004ff 196px,#0045f9 203px,#00feff 217px,#00f822 228px,#00ef00 230px,#036901 246px,#3b7e0f 250px,#a4d200 254px,#feff00 259px,#e75d32 275px,#e03040 284px,#df0041 291px,#c30053 333px,#c10054 341px)"></div>
<div class="a" style="left:308px;top:0;width:7px;height:341px;background:linear-gradient(#000094 0px,#0000ae 20px,#0000f5 24px,#0059fb 25px,#00f4ff 26px,#00ff8c 27px,#00f824 28px,#00df00 29px,#007600 33px,#1a7206 34px,#47860f 35px,#96c702 36px,#fef902 38px,#ea702c 41px,#e34a3b 43px,#df0040 49px,#e00140 62px,#e1443e 67px,#e8622f 71px,#fdf105 76px,#f7fb00 77px,#a4d200 80px,#3f8010 83px,#006800 87px,#00ed00 101px,#00ff89 108px,#00fffe 114px,#001dfc 134px,#0001ff 141px,#0009fe 194px,#0048f9 201px,#00f7ff 215px,#00ffd2 218px,#00f71f 227px,#00ee00 229px,#046901 245px,#3d7f0f 249px,#a8d400 253px,#fffd01 258px,#e75c32 274px,#e02f40 283px,#e00040 289px,#c00055 329px,#bd0057 341px)"></div>
<div class="a" style="left:315px;top:0;width:7px;height:341px;background:linear-gradient(#000094 0px,#0000ae 20px,#0000f5 24px,#005afb 25px,#00f4ff 26px,#00ff8e 27px,#00f926 28px,#00e000 29px,#007a00 33px,#146f05 34px,#3d7f0f 35px,#8abd04 36px,#fffe00 38px,#f1a81d 40px,#e65a33 42px,#e02240 47px,#df0040 50px,#e00440 61px,#e2493b 67px,#e75e31 70px,#fbe708 75px,#fffc01 76px,#92c402 80px,#4d8b0e 82px,#066a02 86px,#00ec00 100px,#00ff73 106px,#00fffc 113px,#001ffc 135px,#0004ff 143px,#000bfe 191px,#0044f8 198px,#00fffe 214px,#00f619 226px,#00eb00 228px,#076a02 244px,#418110 248px,#aed700 252px,#f9fc00 256px,#f1a61e 265px,#e75b33 273px,#e03640 281px,#df0041 288px,#bc0057 326px,#b8005a 341px)"></div>
<div class="a" style="left:322px;top:0;width:7px;height:341px;background:linear-gradient(#000094 0px,#0000ae 20px,#0000f5 24px,#005afb 25px,#00f4ff 26px,#00ff90 27px,#00f928 28px,#00e200 29px,#007f00 33px,#0d6d03 34px,#377d0e 35px,#bedf00 37px,#f6fa00 38px,#fbe20a 39px,#e86030 42px,#e02940 48px,#e00040 53px,#e00b40 59px,#e34c3a 66px,#e85e31 69px,#fdf404 75px,#f3f900 76px,#a1d000 79px,#3d7f0f 82px,#006b00 86px,#00ec00 99px,#00ff47 103px,#00fffb 112px,#0028fb 135px,#0007fe 144px,#000efd 188px,#004df9 196px,#00feff 212px,#00f823 224px,#00f000 226px,#006a00 242px,#4b8a0e 247px,#a3d200 250px,#fffd01 255px,#e75d31 271px,#e03340 280px,#e00040 286px,#b8005a 322px,#b2005d 341px)"></div>
<div class="a" style="left:329px;top:0;width:7px;height:341px;background:linear-gradient(#000094 0px,#0000af 20px,#0000f5 24px,#005afb 25px,#00f4ff 26px,#00fa2b 28px,#00e300 29px,#066a01 34px,#307a0c 35px,#b6db00 37px,#edf600 38px,#fcea07 39px,#eb752b 42px,#e75e31 43px,#e02540 55px,#e9682e 68px,#f5c015 72px,#feff00 75px,#8ec103 79px,#48870f 81px,#026900 85px,#00f208 99px,#00ffa0 106px,#00fffb 111px,#0031fa 135px,#000bfe 145px,#0012fd 185px,#004bf9 193px,#00fcff 210px,#00ff50 220px,#00ed00 225px,#016800 241px,#3c7f0f 245px,#add600 249px,#fafd00 253px,#e75b32 270px,#e03840 278px,#df0041 285px,#b4005c 319px,#ac0061 341px)"></div>
<div class="a" style="left:336px;top:0;width:7px;height:341px;background:linear-gradient(#000094 0px,#0000af 20px,#0000f5 24px,#005afb 25px,#00f4ff 26px,#00fb2d 28px,#00e400 29px,#006800 34px,#2a780b 35px,#b0d800 37px,#e5f200 38px,#fdf105 39px,#eb792a 43px,#e65635 48px,#e45038 59px,#e96b2d 65px,#f2ac1c 70px,#fef902 74px,#bbdd00 77px,#a1d100 78px,#3c7e0f 81px,#006e00 85px,#00f105 98px,#00ff9f 105px,#00fff9 110px,#008dff 124px,#0027fb 138px,#000efd 149px,#0015fd 182px,#0053fa 191px,#00fff8 209px,#00f514 222px,#00ea00 224px,#046a01 240px,#428210 244px,#a0d000 247px,#fffd01 252px,#e75e31 268px,#e03540 277px,#e00040 283px,#b0005e 317px,#a70064 341px)"></div>
<div class="a" style="left:343px;top:0;width:7px;height:341px;background:linear-gradient(#000094 0px,#0000af 20px,#0000f5 24px,#005afb 25px,#00f4ff 26px,#00fb2f 28px,#00e600 29px,#006d00 34px,#257609 35px,#619b0b 36px,#acd600 37px,#e0f000 38px,#fef703 39px,#ef9822 43px,#e9672e 52px,#ea732b 60px,#f4ba17 69px,#fcfe00 74px,#96c802 78px,#4d8b0e 80px,#006900 84px,#00f000 97px,#00ff86 103px,#00fff7 109px,#0087ff 125px,#0029fb 139px,#0011fd 151px,#001afc 180px,#0057fb 189px,#00fffe 207px,#00f821 220px,#00f000 222px,#066a01 239px,#48860f 243px,#a5d300 246px,#f7fb00 250px,#f5be16 257px,#e75d32 267px,#e03340 276px,#df0041 282px,#ac0061 316px,#a20067 341px)"></div>
<div class="a" style="left:350px;top:0;width:7px;height:341px;background:linear-gradient(#000094 0px,#0000af 20px,#0000f5 24px,#005afb 25px,#00f4ff 26px,#00fb31 28px,#00e700 29px,#007000 34px,#217408 35px,#5a960c 36px,#aad500 37px,#ddee00 38px,#fefb01 39px,#f3b11a 43px,#ee8e25 53px,#f0a21f 62px,#fbe509 71px,#f4fa00 74px,#8ec103 78px,#418110 80px,#086b02 83px,#00ec00 96px,#00ff7e 102px,#00fff2 108px,#00f4ff 110px,#0099ff 122px,#002afa 140px,#0013fd 153px,#001cfc 178px,#0061fc 188px,#00fffa 206px,#00f821 219px,#00f000 221px,#046a01 238px,#47860f 242px,#a6d300 245px,#f8fc00 249px,#e75d32 266px,#e03340 275px,#df0041 281px,#aa0062 314px,#9f0069 341px)"></div>
<div class="a" style="left:357px;top:0;width:7px;height:341px;background:linear-gradient(#000094 0px,#0000af 20px,#0000f5 24px,#005afb 25px,#00f4ff 26px,#00fc32 28px,#00e700 29px,#007300 34px,#1d7307 35px,#54910d 36px,#a6d300 37px,#dbed00 38px,#fffd01 39px,#f4ba17 43px,#ef9b21 54px,#f4ba17 64px,#fffe00 73px,#a8d400 77px,#3b7e0f 80px,#036901 83px,#00f000 96px,#00ff89 102px,#00fff9 108px,#0093ff 123px,#0029fa 141px,#0015fd 155px,#001cfc 176px,#005bfb 186px,#00fffc 205px,#00f515 219px,#00eb00 221px,#006900 237px,#3e7f0f 241px,#9fcf00 244px,#f4fa00 248px,#fce808 251px,#e75e31 265px,#e03640 274px,#df0040 280px,#a80063 313px,#9d006a 341px)"></div>
<div class="a" style="left:364px;top:0;width:7px;height:341px;background:linear-gradient(#000094 0px,#0000af 20px,#0000f5 24px,#005afb 25px,#00f4ff 26px,#00fb31 28px,#00e700 29px,#007100 34px,#1f7408 35px,#56930c 36px,#a6d300 37px,#fffc01 39px,#f2af1b 43px,#ed8926 53px,#f09f20 62px,#fbe509 71px,#fefc01 73px,#c2e100 76px,#87bb04 78px,#3d7f0f 80px,#056a01 83px,#00ef00 96px,#00ff85 102px,#00fff6 108px,#00b9ff 117px,#002cfa 141px,#0017fc 154px,#001ffc 176px,#005ffb 186px,#00fff7 205px,#00f821 218px,#00f001 220px,#026901 237px,#428210 241px,#a3d200 244px,#f7fb00 248px,#f5bd16 255px,#e75d32 265px,#e03240 274px,#df0041 280px,#a60064 313px,#9c006b 341px)"></div>
<div class="a" style="left:371px;top:0;width:7px;height:341px;background:linear-gradient(#000095 0px,#0000af 20px,#0000f5 24px,#005afb 25px,#00f4ff 26px,#00fb2f 28px,#00e600 29px,#006d00 34px,#237509 35px,#5a960c 36px,#a6d300 37px,#fefa02 39px,#ef9523 43px,#e8622f 51px,#e9692e 59px,#f2ac1c 68px,#fef603 73px,#f7fb00 74px,#8cbf03 78px,#418110 80px,#006d00 84px,#00eb00 96px,#00ff4c 100px,#00ffde 107px,#00fffd 109px,#009eff 122px,#002ffa 141px,#001afc 155px,#0022fb 176px,#0063fc 186px,#00fdff 204px,#00ff4f 215px,#00ef00 220px,#056a01 237px,#47850f 241px,#a6d300 244px,#f8fc00 248px,#e75c32 265px,#e03840 273px,#df0040 279px,#a50065 312px,#9b006c 341px)"></div>
<div class="a" style="left:378px;top:0;width:7px;height:341px;background:linear-gradient(#000095 0px,#0000af 20px,#0000f5 24px,#005afb 25px,#00f4ff 26px,#00fa2d 28px,#00e400 29px,#006900 34px,#28770a 35px,#5f9a0b 36px,#a7d300 37px,#fef703 39px,#eb752b 43px,#e65735 47px,#e34a3b 57px,#e9692e 65px,#ef9b21 69px,#fffd01 74px,#94c602 78px,#4b890e 80px,#006800 84px,#00f000 97px,#00ff85 103px,#00fff4 109px,#00ebff 112px,#008bff 126px,#0030fa 142px,#001dfc 156px,#0026fb 176px,#0068fc 186px,#00fffc 204px,#00f618 218px,#00e500 221px,#086b02 237px,#4c8a0e 241px,#a9d400 244px,#fafd00 248px,#e75a33 265px,#e03340 273px,#de0041 279px,#a30066 312px,#9a006d 341px)"></div>
<div class="a" style="left:385px;top:0;width:7px;height:341px;background:linear-gradient(#000095 0px,#0000af 20px,#0000f5 24px,#005afb 25px,#00f4ff 26px,#00fa2a 28px,#00e200 29px,#066a02 34px,#2e790b 35px,#aad500 37px,#ddee00 38px,#fdf304 39px,#eb752b 42px,#e75d32 43px,#e01e40 54px,#e85f31 67px,#ee9323 70px,#fdf404 74px,#f5fa00 75px,#a2d100 78px,#3a7e0f 81px,#006f00 85px,#00eb00 97px,#00fc33 100px,#00ffd8 108px,#00faff 111px,#00a1ff 123px,#0032fa 143px,#0022fb 157px,#002bfa 176px,#0077fe 187px,#00fbff 203px,#00ff78 212px,#00f102 219px,#006a00 236px,#3a7e0e 240px,#acd600 244px,#fdfe00 248px,#e75d32 264px,#e03740 272px,#df0041 278px,#a20067 311px,#99006e 341px)"></div>
<div class="a" style="left:392px;top:0;width:7px;height:341px;background:linear-gradient(#000095 0px,#0000af 20px,#0000f5 24px,#005afb 25px,#00f4ff 26px,#00ff8f 27px,#00f926 28px,#00e000 29px,#007d00 33px,#0e6d03 34px,#347b0d 35px,#aed700 37px,#e1f000 38px,#fdef05 39px,#e86230 42px,#e00a40 50px,#e00040 57px,#e44e39 66px,#e8632f 69px,#fefb01 75px,#8fc203 79px,#46850f 81px,#006900 85px,#00ee00 98px,#00ff7d 104px,#00fffa 111px,#0096ff 126px,#0034f9 144px,#0026fb 160px,#0031fa 176px,#00a1ff 192px,#00fffd 203px,#00f61c 217px,#00ee00 219px,#026901 236px,#3d7f0f 240px,#b0d800 244px,#ffff00 248px,#e75b33 264px,#e02f40 272px,#df0041 277px,#9f0068 311px,#97006f 341px)"></div>
<div class="a" style="left:399px;top:0;width:7px;height:341px;background:linear-gradient(#000095 0px,#0000b0 20px,#0000f5 24px,#0059fb 25px,#00f4ff 26px,#00ff8c 27px,#00f822 28px,#00de00 29px,#007600 33px,#167005 34px,#3a7e0f 35px,#b3da00 37px,#e7f300 38px,#fceb07 39px,#e75b33 42px,#e02a40 46px,#e00040 49px,#e00140 60px,#e2473d 66px,#e9662f 70px,#fcee06 75px,#fbfd00 76px,#a4d200 79px,#3b7e0f 82px,#006f00 86px,#00f103 99px,#00ff96 106px,#00fffc 112px,#0096ff 127px,#0037f9 145px,#002bfa 166px,#003bf9 177px,#00e0ff 199px,#00fff6 203px,#00f515 217px,#00eb00 219px,#066a02 236px,#438210 240px,#9ece00 243px,#fffd01 248px,#e75d32 263px,#e03240 271px,#df0041 276px,#9f0069 308px,#950071 341px)"></div>
<div class="a" style="left:406px;top:0;width:7px;height:341px;background:linear-gradient(#000095 0px,#0000b0 20px,#0000f5 24px,#0059fb 25px,#00f4ff 26px,#00ff8a 27px,#00f71e 28px,#00db00 29px,#007000 33px,#428110 35px,#badd00 37px,#edf600 38px,#fbe609 39px,#eb7a29 41px,#e65735 42px,#e01f40 46px,#e00040 48px,#e00040 61px,#e2483c 67px,#e75c32 70px,#f1a61e 73px,#fdf504 76px,#f1f800 77px,#98c901 80px,#4c8a0e 82px,#006800 86px,#00eb00 99px,#00fb31 102px,#00ffcf 110px,#00fffc 113px,#009cff 127px,#003af9 146px,#0034f9 173px,#0061fc 182px,#00efff 200px,#00fffd 202px,#00f71d 216px,#00ef00 218px,#006a00 235px,#4a890e 240px,#a3d100 243px,#fffc01 248px,#e75b33 263px,#e03440 270px,#df0040 275px,#9d006a 308px,#930072 341px)"></div>
<div class="a" style="left:413px;top:0;width:7px;height:341px;background:linear-gradient(#000095 0px,#0000b0 20px,#0000f5 24px,#0059fb 25px,#00f4ff 26px,#00ff87 27px,#00f619 28px,#00d800 29px,#006800 33px,#4e8c0e 35px,#8dc003 36px,#f3f900 38px,#fbe10a 39px,#ea732b 41px,#e55436 42px,#e02b40 45px,#df0041 48px,#df0041 61px,#e1443e 67px,#e86030 71px,#fbe708 76px,#fefb02 77px,#add700 80px,#3f8010 83px,#006d00 87px,#00ee00 100px,#00ff89 107px,#00fffd 114px,#009dff 128px,#003ef8 147px,#003cf8 174px,#009bff 189px,#00fdff 201px,#00ff68 211px,#00f106 217px,#026901 235px,#3a7e0f 239px,#a7d300 243px,#f6fa00 247px,#fadb0c 251px,#e75d32 262px,#e03640 269px,#df0040 274px,#9d006a 305px,#910074 341px)"></div>
<div class="a" style="left:420px;top:0;width:7px;height:341px;background:linear-gradient(#000096 0px,#0000b0 20px,#0000f5 24px,#0059fb 25px,#00f4ff 26px,#00ff84 27px,#00f514 28px,#00d500 29px,#086b02 33px,#5a960c 35px,#97c802 36px,#fafc00 38px,#fadc0c 39px,#ea6c2d 41px,#e2463d 43px,#e00540 47px,#db0043 59px,#e00340 62px,#e2483c 68px,#e96b2d 72px,#fced06 77px,#fdfe00 78px,#a4d200 81px,#387d0e 84px,#036901 87px,#00f001 101px,#00ff8c 108px,#00fffd 115px,#009dff 129px,#0042f8 148px,#0043f8 174px,#00bbff 193px,#00fffb 201px,#00ff4e 212px,#00ef00 217px,#076b02 235px,#3e7f10 239px,#abd500 243px,#f9fc00 247px,#f1a61e 255px,#e65a33 262px,#e03840 268px,#df0040 273px,#9c006b 304px,#900075 341px)"></div>
<div class="a" style="left:427px;top:0;width:7px;height:341px;background:linear-gradient(#000096 0px,#0000b0 20px,#0000f5 24px,#0059fb 25px,#00f4ff 26px,#00ff80 27px,#00f40f 28px,#00b300 30px,#007a00 32px,#116e04 33px,#347b0d 34px,#a0d000 36px,#fffe00 38px,#f9d70e 39px,#e9662e 41px,#e01340 46px,#de0042 48px,#de0041 61px,#e01840 64px,#e1463d 68px,#e86030 72px,#fdf404 78px,#f4f900 79px,#98c901 82px,#48870f 84px,#006c00 88px,#00f106 102px,#00ff8f 109px,#00fffe 116px,#009eff 130px,#0048f9 148px,#0049f9 174px,#00d2ff 195px,#00feff 200px,#00ff57 211px,#00ec00 217px,#006900 234px,#44840f 239px,#afd700 243px,#fcfd00 247px,#f0a21f 255px,#e75c32 261px,#e02e40 268px,#df0040 272px,#9b006c 302px,#8e0077 341px)"></div>
<div class="a" style="left:434px;top:0;width:7px;height:341px;background:linear-gradient(#000096 0px,#0000b0 20px,#0000f5 24px,#0058fb 25px,#00f4ff 26px,#00ff7d 27px,#00f20a 28px,#007400 32px,#3a7e0f 34px,#a6d300 36px,#fefb01 38px,#f8d30f 39px,#e86130 41px,#e01140 46px,#dd0042 48px,#de0041 61px,#e01640 64px,#e1443e 68px,#e96c2d 73px,#fbe708 78px,#fefa02 79px,#add600 82px,#3c7e0f 85px,#046a01 88px,#00ed00 102px,#00ff80 109px,#00ffff 117px,#009eff 131px,#004cf9 149px,#004ffa 174px,#00d7ff 195px,#00fffa 200px,#00fe3e 212px,#00f000 216px,#036901 234px,#4b890e 239px,#9ece00 242px,#feff00 247px,#e65933 261px,#e03040 267px,#e00040 271px,#9a006d 301px,#8c0078 341px)"></div>
<div class="a" style="left:441px;top:0;width:7px;height:341px;background:linear-gradient(#000096 0px,#0000b1 20px,#0000f5 24px,#0058fb 25px,#00f4ff 26px,#00ff7a 27px,#00f105 28px,#006e00 32px,#408010 34px,#acd600 36px,#fef703 38px,#f8ce11 39px,#e85e31 41px,#e00040 47px,#db0044 59px,#e00840 63px,#e2473c 69px,#e8622f 73px,#fdef05 79px,#fbfd00 80px,#a1d000 83px,#4e8c0e 85px,#0d6d03 88px,#007700 90px,#00f001 103px,#00ff98 111px,#00feff 118px,#00a4ff 131px,#0052fa 149px,#0052fa 173px,#00d3ff 194px,#00feff 199px,#00ff6b 209px,#00ed00 216px,#076a02 234px,#3b7e0f 238px,#a2d100 242px,#fffe00 247px,#e75c32 260px,#e03440 266px,#e00040 270px,#99006d 300px,#8a0079 341px)"></div>
<div class="a" style="left:448px;top:0;width:7px;height:341px;background:linear-gradient(#000096 0px,#0000b1 20px,#0000f5 24px,#0058fb 25px,#00f4ff 26px,#00ff77 27px,#00f000 28px,#006800 32px,#49870f 34px,#b1d800 36px,#fdf404 38px,#f7c912 39px,#e75c32 41px,#e00e40 46px,#dd0042 48px,#df0040 62px,#e2463d 69px,#e75e31 73px,#fef802 80px,#cfe700 82px,#8dc003 84px,#3d7f0f 86px,#046901 89px,#00ec00 103px,#00ff66 109px,#00fff7 118px,#0099ff 134px,#0053fa 151px,#0057fb 173px,#00cfff 193px,#00fffb 199px,#00ff53 210px,#00f103 215px,#006a00 233px,#3e7f0f 238px,#a5d200 242px,#fffc01 247px,#ed8726 256px,#e65933 260px,#e03940 265px,#e00340 269px,#99006e 299px,#89007a 341px)"></div>
<div class="a" style="left:455px;top:0;width:7px;height:341px;background:linear-gradient(#000096 0px,#0000b1 20px,#0000f5 24px,#0058fb 25px,#00f4ff 26px,#00ff74 27px,#00ee00 28px,#066a02 32px,#518e0d 34px,#b5da00 36px,#e0f000 37px,#fdf105 38px,#e75b33 41px,#df0040 47px,#dc0043 60px,#e01040 64px,#e1453e 69px,#e9682e 74px,#fdf005 80px,#fbfd00 81px,#a0d000 84px,#4b890e 86px,#0a6c03 89px,#008500 92px,#00f001 104px,#00ff94 112px,#00fffc 119px,#009dff 134px,#0057fb 151px,#005bfb 173px,#00d3ff 193px,#00fff6 199px,#00f71e 213px,#00ef00 215px,#016800 233px,#408010 238px,#a7d300 242px,#fefb01 247px,#eb752b 257px,#e1453d 263px,#df0041 269px,#98006e 298px,#87007b 341px)"></div>
<div class="a" style="left:462px;top:0;width:7px;height:341px;background:linear-gradient(#000097 0px,#0000b1 20px,#0000f5 24px,#0058fb 25px,#00f4ff 26px,#00ff72 27px,#00ec00 28px,#008000 31px,#0b6c03 32px,#57930c 34px,#b8dc00 36px,#e3f100 37px,#fdef05 38px,#e65a33 41px,#df0041 47px,#dc0043 60px,#e00f40 64px,#e1443e 69px,#e8632f 74px,#fefb01 81px,#abd600 84px,#387d0e 87px,#006900 90px,#00e500 103px,#00f30c 105px,#00ffae 114px,#00fdff 120px,#00a0ff 134px,#0059fb 152px,#005ffb 173px,#00cdff 192px,#00ffff 198px,#00ff5a 209px,#00ee00 215px,#036901 233px,#44830f 238px,#a9d400 242px,#fefa02 247px,#ea712c 257px,#e02a40 265px,#e00140 268px,#98006e 297px,#86007c 341px)"></div>
<div class="a" style="left:469px;top:0;width:7px;height:341px;background:linear-gradient(#000097 0px,#0000b1 20px,#0000f5 24px,#0058fb 25px,#00f4ff 26px,#00ff70 27px,#00eb00 28px,#007e00 31px,#0e6d04 32px,#5b960c 34px,#8fc203 35px,#e6f200 37px,#fcee06 38px,#e65934 41px,#df0041 47px,#dc0043 60px,#e00e40 64px,#e1433e 69px,#e86030 74px,#fef603 81px,#f0f800 82px,#8fc203 85px,#3d7f0f 87px,#026901 90px,#00f207 105px,#00ffa9 114px,#00fffd 120px,#009dff 135px,#005bfb 152px,#0061fc 173px,#00d7ff 193px,#00fffd 198px,#00ff57 209px,#00ed00 215px,#046a01 233px,#46850f 238px,#aad500 242px,#fefa02 247px,#e65933 259px,#e03440 264px,#df0040 268px,#99006e 296px,#86007c 341px)"></div>
<div class="a" style="left:476px;top:0;width:7px;height:341px;background:linear-gradient(#000097 0px,#0000b2 20px,#0000f7 24px,#0063fc 25px,#00f4ff 26px,#00ff73 27px,#00ec00 28px,#007e00 31px,#0e6d04 32px,#5b970b 34px,#bbdd00 36px,#e7f300 37px,#fced06 38px,#e65933 41px,#e01d40 45px,#df0041 47px,#db0043 60px,#e00b40 64px,#e2473d 70px,#e75e31 74px,#fdf304 81px,#f6fb00 82px,#99ca01 85px,#438210 87px,#076b02 90px,#00f103 105px,#00ffa6 114px,#00fffc 120px,#009dff 135px,#005bfb 152px,#0061fc 173px,#00ceff 192px,#00fffe 198px,#00ff58 209px,#00ed00 215px,#046a01 233px,#45850f 238px,#a9d500 242px,#fefa02 247px,#e65933 259px,#e03440 264px,#df0040 268px,#97006f 297px,#85007d 341px)"></div>
<div class="a" style="left:483px;top:0;width:7px;height:341px;background:linear-gradient(#000097 0px,#0000b2 20px,#0000f9 24px,#0070fd 25px,#00f4ff 26px,#00ff76 27px,#00ee00 28px,#007e00 31px,#0e6d04 32px,#5c970b 34px,#91c303 35px,#e8f400 37px,#fcec06 38px,#e65a33 41px,#df0040 47px,#dc0043 61px,#e00740 64px,#e1453d 70px,#e9692e 75px,#fdee06 81px,#fefe00 82px,#a4d200 85px,#508d0d 87px,#0d6d03 90px,#007700 92px,#00ef00 105px,#00ff91 113px,#00fffa 120px,#0099ff 136px,#005afb 152px,#0060fb 173px,#00cdff 192px,#00ffff 198px,#00ff5a 209px,#00ee00 215px,#036901 233px,#44840f 238px,#a9d400 242px,#fefa02 247px,#e65a33 259px,#e03440 264px,#df0040 268px,#98006e 296px,#85007d 341px)"></div>
<div class="a" style="left:490px;top:0;width:7px;height:341px;background:linear-gradient(#000098 0px,#0000b3 20px,#0000fb 24px,#00f4ff 26px,#00ff7a 27px,#00ef00 28px,#007e00 31px,#0e6d04 32px,#5d980b 34px,#93c502 35px,#eaf400 37px,#fceb07 38px,#e75a33 41px,#e00040 47px,#da0044 60px,#e00c40 65px,#e2483c 71px,#e86230 75px,#fefa02 82px,#aed700 85px,#3c7e0f 88px,#036901 91px,#00ec00 105px,#00ff67 111px,#00fff8 120px,#0099ff 136px,#0059fb 152px,#005ffb 173px,#00d5ff 193px,#00feff 198px,#00ff6d 208px,#00ee00 215px,#036901 233px,#438210 238px,#a8d400 242px,#fefb01 247px,#ea6f2c 257px,#e03540 264px,#df0040 268px,#98006f 296px,#85007d 341px)"></div>
<div class="a" style="left:497px;top:0;width:7px;height:341px;background:linear-gradient(#000098 0px,#0000b4 20px,#0000fe 24px,#0088ff 25px,#00f4ff 26px,#00ff7e 27px,#00f103 28px,#007e00 31px,#0e6d04 32px,#5e990b 34px,#94c602 35px,#ecf500 37px,#fcea07 38px,#e75b33 41px,#e00040 47px,#d90045 60px,#e00640 65px,#e1463d 71px,#e75d31 75px,#fdf404 82px,#f5fa00 83px,#9ccc01 86px,#4a880e 88px,#006c00 92px,#00f002 106px,#00ff99 114px,#00fdff 121px,#009eff 135px,#0059fb 152px,#005efb 173px,#00d4ff 193px,#00fff6 199px,#00ff4c 210px,#00ef00 215px,#026900 233px,#418110 238px,#a7d300 242px,#fefb01 247px,#ee8d25 255px,#e65a33 259px,#e03540 264px,#df0040 268px,#97006f 296px,#84007e 341px)"></div>
<div class="a" style="left:504px;top:0;width:7px;height:341px;background:linear-gradient(#000098 0px,#0000b5 20px,#0000f0 23px,#000cfe 24px,#0090ff 25px,#00f4ff 26px,#00ff82 27px,#00f207 28px,#007e00 31px,#0f6d04 32px,#327b0d 33px,#97c802 35px,#eef600 37px,#fce908 38px,#e75c32 41px,#e01140 46px,#de0042 48px,#db0044 62px,#e00040 65px,#e2483c 72px,#e8642f 76px,#fffe00 83px,#aad500 86px,#3b7e0f 89px,#046a01 92px,#00ed00 106px,#00ff80 113px,#00ffff 121px,#00a4ff 134px,#0058fb 152px,#005dfb 173px,#00d2ff 193px,#00fff8 199px,#00ff4f 210px,#00f000 215px,#016800 233px,#408010 238px,#a5d300 242px,#fffc01 247px,#ee8e25 255px,#e75a33 259px,#e03540 264px,#df0040 268px,#97006f 296px,#83007e 341px)"></div>
<div class="a" style="left:511px;top:0;width:7px;height:341px;background:linear-gradient(#000098 0px,#0000b6 20px,#0000f3 23px,#0021fb 24px,#0097ff 25px,#00f4ff 26px,#00ff86 27px,#00f30b 28px,#007f00 31px,#0f6d04 32px,#337b0d 33px,#99ca01 35px,#f0f800 37px,#fce808 38px,#e75c32 41px,#e00340 47px,#d80045 61px,#e00440 66px,#e1453d 72px,#e75d31 76px,#fef603 83px,#d4ea00 85px,#9acb01 87px,#4b890e 89px,#006a00 93px,#00f103 107px,#00ff9f 115px,#00fffc 121px,#009fff 135px,#0057fa 152px,#005bfb 173px,#00d1ff 193px,#00fffa 199px,#00ff63 209px,#00f002 215px,#006800 233px,#3f7f10 238px,#a4d200 242px,#fffd01 247px,#ea712c 257px,#e03540 264px,#df0040 268px,#960070 296px,#82007f 341px)"></div>
<div class="a" style="left:518px;top:0;width:7px;height:341px;background:linear-gradient(#000099 0px,#0000b8 20px,#0000f7 23px,#0034f9 24px,#009dff 25px,#00f4ff 26px,#00ff8a 27px,#00f30f 28px,#00a300 30px,#007f00 31px,#0f6e04 32px,#337b0d 33px,#9bcc01 35px,#f2f900 37px,#fbe608 38px,#e75d31 41px,#e00540 47px,#d70046 61px,#e00740 67px,#e2473c 73px,#e9642f 77px,#fdee06 83px,#feff00 84px,#a9d500 87px,#3d7f0f 90px,#006f00 94px,#00ed00 107px,#00ff85 114px,#00fff9 121px,#0095ff 137px,#0054fa 153px,#005afb 173px,#00cfff 193px,#00fffc 199px,#00ff54 210px,#00f104 215px,#006900 233px,#3e7f0f 238px,#a3d100 242px,#fffd01 247px,#ee8f24 255px,#e75b33 259px,#e03640 264px,#df0041 268px,#97006f 295px,#82007f 341px)"></div>
<div class="a" style="left:525px;top:0;width:7px;height:341px;background:linear-gradient(#000099 0px,#0000b4 19px,#0000ba 20px,#0000fa 23px,#0044f8 24px,#00f4ff 26px,#00ff8d 27px,#00f412 28px,#00cb00 29px,#007f00 31px,#0f6e04 32px,#337b0d 33px,#9dce00 35px,#f5fa00 37px,#fbe509 38px,#e75e31 41px,#e00640 47px,#d70046 62px,#e00040 67px,#e1443e 73px,#e75d31 77px,#fef802 84px,#d3e900 86px,#9acb01 88px,#4f8c0e 90px,#016800 94px,#00f103 108px,#00ffa5 116px,#00fcff 122px,#009bff 136px,#0055fa 152px,#0059fb 173px,#00cdff 193px,#00ffff 199px,#00ff57 210px,#00f106 215px,#006a00 233px,#3c7f0f 238px,#a1d100 242px,#fffe00 247px,#ee9024 255px,#e75b33 259px,#e03640 264px,#df0041 268px,#960070 295px,#810080 341px)"></div>
<div class="a" style="left:532px;top:0;width:7px;height:341px;background:linear-gradient(#000099 0px,#0000b5 19px,#0000bc 20px,#0000fc 23px,#00f4ff 26px,#00ff90 27px,#00f515 28px,#00cc00 29px,#007f00 31px,#0f6e04 32px,#347b0d 33px,#a0d000 35px,#f7fb00 37px,#fbe409 38px,#e85e31 41px,#e00840 47px,#d60046 62px,#e00440 68px,#e2463d 74px,#e9642f 78px,#fdf005 84px,#fbfd00 85px,#a9d400 88px,#3f8010 91px,#006c00 95px,#00ed00 108px,#00ff8b 115px,#00feff 122px,#009cff 136px,#0054fa 152px,#0057fb 173px,#00d4ff 194px,#00feff 199px,#00ff6b 209px,#00ed00 216px,#006b00 233px,#3b7e0f 238px,#a0d000 242px,#ffff00 247px,#ee9124 255px,#e75b32 259px,#e03640 264px,#df0041 268px,#960070 295px,#800080 341px)"></div>
<div class="a" style="left:539px;top:0;width:7px;height:341px;background:linear-gradient(#000099 0px,#0000b5 19px,#0000bf 20px,#0000ff 23px,#0060fb 24px,#00f4ff 26px,#00ff93 27px,#00f618 28px,#00cd00 29px,#007f00 31px,#0f6e04 32px,#347c0d 33px,#a1d100 35px,#f9fc00 37px,#fbe30a 38px,#e85f31 41px,#e00940 47px,#d30049 56px,#df0040 68px,#e2493c 75px,#e75e31 78px,#fefa02 85px,#98c901 89px,#508d0d 91px,#147005 94px,#007100 96px,#00f105 109px,#00ff98 116px,#00fffd 122px,#009cff 136px,#0053fa 152px,#0056fa 173px,#00d3ff 194px,#00fff6 200px,#00ff4a 211px,#00ed00 216px,#086b02 234px,#4f8c0e 239px,#9ece00 242px,#feff00 247px,#f3b11a 253px,#e75b32 259px,#e03740 264px,#df0041 268px,#950071 295px,#800081 341px)"></div>
<div class="a" style="left:546px;top:0;width:7px;height:341px;background:linear-gradient(#00009a 0px,#0000b6 19px,#0000c2 20px,#0000f2 22px,#000bfe 23px,#0069fd 24px,#00f4ff 26px,#00ff95 27px,#00f61a 28px,#00ce00 29px,#007f00 31px,#0f6e04 32px,#357c0d 33px,#a3d100 35px,#fbfd00 37px,#f4b818 39px,#e85f30 41px,#e01940 46px,#df0041 48px,#d50048 62px,#e00240 69px,#e2463d 75px,#e9672e 79px,#fdf404 85px,#f6fa00 86px,#a5d300 89px,#3f8010 92px,#006b00 96px,#00ee00 109px,#00ff7d 115px,#00fffa 122px,#009dff 136px,#0052fa 152px,#0055fa 173px,#00d2ff 194px,#00fff8 200px,#00ff5e 210px,#00ee00 216px,#076b02 234px,#4d8b0e 239px,#9ccd01 242px,#fdfe00 247px,#f3b11a 253px,#e75b32 259px,#e03740 264px,#df0041 268px,#960070 294px,#7f0081 341px)"></div>
<div class="a" style="left:553px;top:0;width:7px;height:341px;background:linear-gradient(#00009a 0px,#0000b7 19px,#0000c4 20px,#0000f4 22px,#0018fc 23px,#0071fd 24px,#00f4ff 26px,#00ff97 27px,#00f71c 28px,#00cf00 29px,#007f00 31px,#0f6e04 32px,#357c0d 33px,#a4d200 35px,#fcfe00 37px,#f4b718 39px,#e85f30 41px,#e01a40 46px,#df0040 48px,#d50047 63px,#e00840 70px,#e1443e 75px,#e85f30 79px,#fcee06 85px,#ffff00 86px,#91c303 90px,#4b8a0e 92px,#046901 96px,#00eb00 109px,#00fc33 112px,#00ffd8 120px,#00fbff 123px,#00a3ff 135px,#0052fa 152px,#0054fa 173px,#00d0ff 194px,#00fffa 200px,#00ff4e 211px,#00ef00 216px,#066a01 234px,#4c8a0e 239px,#afd800 243px,#fcfe00 247px,#f3b21a 253px,#e75c32 259px,#e03740 264px,#df0041 268px,#940071 295px,#7e0082 341px)"></div>
<div class="a" style="left:560px;top:0;width:7px;height:341px;background:linear-gradient(#00009a 0px,#0000b9 19px,#0000f6 22px,#0021fb 23px,#0077fe 24px,#00f4ff 26px,#00ff98 27px,#00f71e 28px,#00cf00 29px,#007f00 31px,#0f6e04 32px,#357c0d 33px,#a5d200 35px,#fefe00 37px,#f4b718 39px,#e86030 41px,#e00b40 47px,#db0043 50px,#d70046 65px,#e00440 70px,#e2473c 76px,#ea6f2c 80px,#fce908 85px,#fefb01 86px,#9ccc01 90px,#3b7e0f 93px,#006d00 97px,#00f104 110px,#00ff9d 117px,#00fcff 123px,#009dff 136px,#004ffa 153px,#0053fa 173px,#00cfff 194px,#00fffb 200px,#00ff62 210px,#00f000 216px,#056a01 234px,#4a890e 239px,#aed700 243px,#fcfd00 247px,#f3b31a 253px,#e75c32 259px,#e03740 264px,#df0041 268px,#960070 294px,#7e0082 341px)"></div>
<div class="a" style="left:567px;top:0;width:7px;height:341px;background:linear-gradient(#00009a 0px,#0000ba 19px,#0000f8 22px,#0027fb 23px,#007bfe 24px,#00f4ff 26px,#00ff99 27px,#00f71f 28px,#00cf00 29px,#008000 31px,#0f6e04 32px,#357c0d 33px,#a5d300 35px,#ffff00 37px,#f4b619 39px,#e86030 41px,#e00c40 47px,#db0043 50px,#d60046 65px,#e00040 70px,#e2463d 76px,#e96a2e 80px,#fbe509 85px,#fef703 86px,#d6ea00 88px,#a2d100 90px,#3f8010 93px,#006a00 97px,#00f000 110px,#00ff84 116px,#00fff3 122px,#00ecff 125px,#0093ff 138px,#004ffa 153px,#0053fa 173px,#00d7ff 195px,#00fffc 200px,#00ff63 210px,#00f000 216px,#056a01 234px,#4a880e 239px,#aed700 243px,#fbfd00 247px,#f3b31a 253px,#e75c32 259px,#e03740 264px,#df0041 268px,#950071 294px,#7e0082 341px)"></div>
<div class="a" style="left:574px;top:0;width:7px;height:341px;background:linear-gradient(#00009b 0px,#0000b9 19px,#0000f6 22px,#0021fb 23px,#0077fe 24px,#00f4ff 26px,#00ff99 27px,#00f71f 28px,#00d000 29px,#008000 31px,#0e6d04 32px,#347c0d 33px,#a3d200 35px,#fcfe00 37px,#f4b918 39px,#e86130 41px,#e00c40 47px,#db0043 50px,#d60046 65px,#e00040 70px,#e1453d 76px,#e9662e 80px,#fbe10a 85px,#f6fb00 87px,#a7d400 90px,#44830f 93px,#016800 97px,#00ed00 110px,#00ff7b 116px,#00fffb 123px,#009bff 137px,#0051fa 153px,#0055fa 173px,#00d2ff 194px,#00fff8 200px,#00ff4e 211px,#00f000 216px,#036901 234px,#48870f 239px,#aed700 243px,#fdfe00 247px,#f3b21a 253px,#e75c32 259px,#e03740 264px,#df0041 268px,#950070 294px,#7e0082 341px)"></div>
<div class="a" style="left:581px;top:0;width:7px;height:341px;background:linear-gradient(#00009b 0px,#0000b8 19px,#0000c4 20px,#0000f3 22px,#0012fd 23px,#006efd 24px,#00f4ff 26px,#00ff97 27px,#00f71e 28px,#00d000 29px,#008200 31px,#0c6c03 32px,#327b0c 33px,#9ecf00 35px,#f6fa00 37px,#fbe609 38px,#e9642f 41px,#e01b40 46px,#df0040 48px,#d40048 63px,#e00040 70px,#e1453e 76px,#e86130 80px,#fcee06 86px,#ffff00 87px,#94c602 91px,#4e8c0e 93px,#056a01 97px,#00f000 111px,#00ff95 118px,#00fffc 124px,#009aff 138px,#0056fa 153px,#005afb 173px,#00d8ff 194px,#00fffc 199px,#00ff5a 210px,#00ef00 216px,#006800 234px,#45840f 239px,#afd800 243px,#ffff00 247px,#ec8128 256px,#e55536 260px,#e03740 264px,#df0041 268px,#940071 295px,#7e0082 341px)"></div>
<div class="a" style="left:588px;top:0;width:7px;height:341px;background:linear-gradient(#00009b 0px,#0000b7 19px,#0000c1 20px,#0000ff 23px,#0060fc 24px,#00f4ff 26px,#00ff95 27px,#00f71d 28px,#00d000 29px,#008400 31px,#096b02 32px,#2e790c 33px,#5d980b 34px,#97c802 35px,#eef700 37px,#fceb07 38px,#e9682e 41px,#e01b40 46px,#df0040 48px,#d40048 63px,#e00040 70px,#e1443e 76px,#e75e31 80px,#fef803 87px,#d6eb00 89px,#a2d100 91px,#3d7f0f 94px,#006b00 98px,#00f105 112px,#00ff94 119px,#00fff9 125px,#0095ff 140px,#005bfb 153px,#0061fc 173px,#00d7ff 193px,#00fffe 198px,#00ff54 210px,#00ee00 216px,#006b00 234px,#428110 239px,#9acb01 242px,#fffc01 247px,#e75a33 259px,#e03640 264px,#df0041 268px,#960070 294px,#7f0081 341px)"></div>
<div class="a" style="left:595px;top:0;width:7px;height:341px;background:linear-gradient(#00009c 0px,#0000b7 19px,#0000be 20px,#0000fc 23px,#00f4ff 26px,#00ff93 27px,#00f61b 28px,#00d000 29px,#066a01 32px,#56920c 34px,#8fc203 35px,#e7f300 37px,#fdf005 38px,#ea6d2d 41px,#e2473d 43px,#df0040 48px,#d40048 63px,#e00940 71px,#e2483c 77px,#e96a2e 81px,#fdf005 87px,#fdfe00 88px,#8ec103 92px,#48860f 94px,#016900 98px,#00ec00 112px,#00ff6b 118px,#00fff6 126px,#00b9ff 135px,#0063fc 152px,#0067fc 173px,#00ceff 191px,#00ffff 197px,#00ff3f 211px,#00ee00 216px,#056a01 235px,#3f8010 239px,#9bcc01 242px,#f3f900 246px,#fcee06 248px,#e65933 259px,#e03540 264px,#df0041 268px,#960070 294px,#7f0081 341px)"></div>
<div class="a" style="left:602px;top:0;width:7px;height:341px;background:linear-gradient(#00009c 0px,#0000bc 20px,#0000f9 23px,#003ff8 24px,#00a2ff 25px,#00f4ff 26px,#00ff90 27px,#00f619 28px,#00d000 29px,#036901 32px,#518e0d 34px,#89bd04 35px,#e1f000 37px,#fdf404 38px,#f09f20 40px,#ea702c 41px,#e2473c 43px,#df0041 48px,#d40048 63px,#e00940 71px,#e2473d 77px,#e9642f 81px,#fcea07 87px,#fefb02 88px,#9bcc01 92px,#387d0e 95px,#066a02 98px,#00ef00 113px,#00ff95 121px,#00fcff 128px,#00a0ff 140px,#0066fc 153px,#006dfd 173px,#00cdff 190px,#00fff7 197px,#00f515 214px,#00e700 217px,#026901 235px,#3d7f0f 239px,#9bcc01 242px,#f7fb00 246px,#f6c514 251px,#e85f31 258px,#e03540 264px,#df0041 268px,#950071 295px,#7f0081 341px)"></div>
<div class="a" style="left:609px;top:0;width:7px;height:341px;background:linear-gradient(#00009c 0px,#0000bb 20px,#0000f7 23px,#0035f9 24px,#009eff 25px,#00f4ff 26px,#00ff8f 27px,#00f618 28px,#00d000 29px,#026901 32px,#4e8b0e 34px,#b4da00 36px,#fef603 38px,#f0a21f 40px,#ea722b 41px,#e2483c 43px,#df0041 48px,#d40048 63px,#e00840 71px,#e2463d 77px,#e86230 81px,#fef703 88px,#d7eb00 90px,#a2d100 92px,#3c7e0f 95px,#006d00 99px,#00ec00 113px,#00ff65 119px,#00fffb 128px,#0097ff 142px,#0068fc 154px,#0070fd 173px,#00d0ff 190px,#00fffe 196px,#00f514 214px,#00e700 217px,#007100 234px,#0e6d03 236px,#3c7f0f 239px,#9ccd01 242px,#f9fc00 246px,#f3b31a 252px,#e65834 259px,#e03440 264px,#df0041 268px,#950070 295px,#800081 341px)"></div>
<div class="a" style="left:616px;top:0;width:7px;height:341px;background:linear-gradient(#00009d 0px,#0000bc 20px,#0000f7 23px,#0035f9 24px,#009eff 25px,#00f4ff 26px,#00ff8f 27px,#00f618 28px,#00d000 29px,#026901 32px,#4e8b0e 34px,#b4da00 36px,#fef603 38px,#f0a21f 40px,#ea722b 41px,#e2483c 43px,#df0041 48px,#d40048 63px,#e00840 71px,#e2463d 77px,#e86130 81px,#fef703 88px,#d7eb00 90px,#a2d100 92px,#3b7e0f 95px,#006d00 99px,#00ec00 113px,#00ff65 119px,#00fffa 128px,#0092ff 143px,#006afd 154px,#0072fd 173px,#00c9ff 189px,#00fffd 196px,#00f71f 213px,#00ec00 216px,#007a00 233px,#026900 235px,#3e7f10 239px,#a0d000 242px,#fbfd00 246px,#f0a21f 253px,#e65834 259px,#e03340 264px,#df0041 268px,#950071 295px,#800081 341px)"></div>
<div class="a" style="left:623px;top:0;width:7px;height:341px;background:linear-gradient(#00009d 0px,#0000bc 20px,#0000f7 23px,#0035f9 24px,#009eff 25px,#00f4ff 26px,#00ff8f 27px,#00f618 28px,#00d000 29px,#026901 32px,#4e8b0e 34px,#b4da00 36px,#fef603 38px,#f0a21f 40px,#ea722b 41px,#e2483c 43px,#df0041 48px,#d40048 63px,#e00840 71px,#e2463d 77px,#e86130 81px,#fef603 88px,#d8ec00 90px,#a3d100 92px,#3b7e0f 95px,#006e00 99px,#00f208 114px,#00ffad 123px,#00faff 129px,#0099ff 142px,#006cfd 154px,#0074fe 173px,#00caff 189px,#00fffb 196px,#00f71d 213px,#00ec00 216px,#007800 233px,#046901 235px,#418110 239px,#a3d200 242px,#feff00 246px,#e75d31 258px,#e03240 264px,#df0041 268px,#950071 295px,#800081 341px)"></div>
<div class="a" style="left:630px;top:0;width:7px;height:341px;background:linear-gradient(#00009d 0px,#0000bc 20px,#0000f7 23px,#0035f9 24px,#009eff 25px,#00f4ff 26px,#00ff8f 27px,#00f618 28px,#00d000 29px,#026901 32px,#4e8b0e 34px,#b4da00 36px,#fef603 38px,#f0a21f 40px,#ea722b 41px,#e2483c 43px,#df0041 48px,#d40048 63px,#e00840 71px,#e2463d 77px,#e86030 81px,#fef603 88px,#f4fa00 89px,#a3d100 92px,#3b7e0f 95px,#006e00 99px,#00f208 114px,#00ffab 123px,#00fbff 129px,#009aff 142px,#006efd 154px,#0076fe 173px,#00ccff 189px,#00fff9 196px,#00f61b 213px,#00eb00 216px,#066a02 235px,#47860f 239px,#a8d400 242px,#fffd01 246px,#e75c32 258px,#e03140 264px,#df0041 268px,#950071 295px,#800081 341px)"></div>
<div class="a" style="left:637px;top:0;width:7px;height:341px;background:linear-gradient(#00009e 0px,#0000bd 20px,#0000f7 23px,#0035f9 24px,#009eff 25px,#00f4ff 26px,#00ff8f 27px,#00f618 28px,#00d000 29px,#026901 32px,#4e8b0e 34px,#b4da00 36px,#fef603 38px,#f0a21f 40px,#ea722b 41px,#e2483c 43px,#df0041 48px,#d40048 63px,#e00840 71px,#e2463d 77px,#e86030 81px,#fdf503 88px,#f5fa00 89px,#a3d200 92px,#3a7e0f 95px,#006f00 99px,#00f208 114px,#00ffaa 123px,#00fdff 129px,#00a1ff 141px,#0071fd 154px,#0078fe 173px,#00c6ff 188px,#00fff7 196px,#00f619 213px,#00ef00 215px,#007500 233px,#096b02 235px,#4e8b0e 239px,#acd600 242px,#fefb01 246px,#e75c32 258px,#e02f40 264px,#de0041 268px,#950071 295px,#800081 341px)"></div>
<div class="a" style="left:644px;top:0;width:7px;height:341px;background:linear-gradient(#00009e 0px,#0000bd 20px,#0000f7 23px,#0035f9 24px,#009eff 25px,#00f4ff 26px,#00ff8f 27px,#00f618 28px,#00d000 29px,#026901 32px,#4e8b0e 34px,#b4da00 36px,#fef603 38px,#f0a21f 40px,#ea722b 41px,#e2483c 43px,#df0041 48px,#d40048 63px,#e00740 71px,#e1463d 77px,#e85f30 81px,#fdf404 88px,#f6fb00 89px,#a4d200 92px,#3a7e0e 95px,#066a01 98px,#00f208 114px,#00ffa8 123px,#00feff 129px,#009dff 142px,#0075fe 154px,#007fff 174px,#00c8ff 188px,#00ffff 195px,#00f516 213px,#00e800 216px,#007200 233px,#0c6d03 235px,#3a7e0f 238px,#b2d900 242px,#f6fa00 245px,#f9d40e 249px,#e75b33 258px,#e02d40 264px,#de0041 268px,#950071 295px,#800081 341px)"></div>
<div class="a" style="left:651px;top:0;width:7px;height:341px;background:linear-gradient(#00009e 0px,#0000bd 20px,#0000f7 23px,#0035f9 24px,#009eff 25px,#00f4ff 26px,#00ff8f 27px,#00f618 28px,#00d000 29px,#026901 32px,#4e8b0e 34px,#b4da00 36px,#fef603 38px,#f0a21f 40px,#ea722b 41px,#e2483c 43px,#df0041 48px,#d40048 63px,#e00740 71px,#e1463d 77px,#e85f30 81px,#fdf304 88px,#f8fb00 89px,#a4d200 92px,#397e0e 95px,#056a01 98px,#00f208 114px,#00ffa7 123px,#00fffe 129px,#009fff 142px,#0078fe 155px,#0081ff 174px,#00caff 188px,#00fffd 195px,#00f720 212px,#00ed00 215px,#026901 234px,#3e7f10 238px,#a0d000 241px,#fbfd00 245px,#f1a41f 252px,#e65a33 258px,#e03a40 263px,#e00240 267px,#950071 295px,#800081 341px)"></div>
<div class="a" style="left:658px;top:0;width:7px;height:341px;background:linear-gradient(#00009f 0px,#0000be 20px,#0000f7 23px,#0035f9 24px,#009eff 25px,#00f4ff 26px,#00ff8f 27px,#00f618 28px,#00d000 29px,#026901 32px,#4e8b0e 34px,#b4da00 36px,#fef603 38px,#f0a21f 40px,#ea722b 41px,#e2483c 43px,#df0041 48px,#d40048 63px,#e00740 71px,#e1463d 77px,#e85f31 81px,#fdf204 88px,#f9fc00 89px,#a5d200 92px,#397d0e 95px,#046a01 98px,#00f208 114px,#00ffa5 123px,#00fffc 129px,#009cff 143px,#007cff 154px,#0084ff 174px,#00cdff 188px,#00fffa 195px,#00f71c 212px,#00eb00 215px,#007700 232px,#146f05 235px,#46850f 238px,#a7d300 241px,#fffe00 245px,#e85e31 257px,#e03840 263px,#e00040 267px,#950071 295px,#800081 341px)"></div>
<div class="a" style="left:665px;top:0;width:7px;height:341px;background:linear-gradient(#00009f 0px,#0000be 20px,#0000f7 23px,#0035f9 24px,#009eff 25px,#00f4ff 26px,#00ff8f 27px,#00f618 28px,#00d000 29px,#026901 32px,#4e8b0e 34px,#b4da00 36px,#fef603 38px,#f0a21f 40px,#ea722b 41px,#e2483c 43px,#df0041 48px,#d40048 63px,#e00740 71px,#e1453d 77px,#e85e31 81px,#fdf105 88px,#fbfd00 89px,#a5d300 92px,#387d0e 95px,#036901 98px,#00f208 114px,#00ffb3 124px,#00fbff 130px,#00a3ff 142px,#0080ff 153px,#0089ff 175px,#00d7ff 189px,#00fff6 195px,#00f619 212px,#00ef00 214px,#007400 232px,#187106 235px,#4f8c0e 238px,#add700 241px,#fefb01 245px,#e75d31 257px,#e03540 263px,#e00040 267px,#960070 294px,#800081 341px)"></div>
<div class="a" style="left:672px;top:0;width:7px;height:341px;background:linear-gradient(#00009f 0px,#0000be 20px,#0000f7 23px,#0035f9 24px,#009eff 25px,#00f4ff 26px,#00ff8f 27px,#00f618 28px,#00d000 29px,#026901 32px,#4e8b0e 34px,#b4da00 36px,#fef603 38px,#f0a21f 40px,#ea722b 41px,#e2483c 43px,#df0041 48px,#d40048 63px,#e00640 71px,#e1453d 77px,#e75e31 81px,#fdf005 88px,#fcfe00 89px,#a6d300 92px,#387d0e 95px,#026900 98px,#00ec00 113px,#00ff80 121px,#00fcff 130px,#00a0ff 143px,#0083ff 154px,#008cff 175px,#00d2ff 188px,#00ffff 194px,#00f515 212px,#00e800 215px,#007100 232px,#0e6d03 234px,#3c7e0f 237px,#9bcc01 240px,#f7fb00 244px,#f6c713 249px,#e75c32 257px,#e03340 263px,#df0040 267px,#960070 294px,#800081 341px)"></div>
<div class="a" style="left:679px;top:0;width:7px;height:341px;background:linear-gradient(#0000a0 0px,#0000bf 20px,#0000f7 23px,#0035f9 24px,#009eff 25px,#00f4ff 26px,#00ff8f 27px,#00f618 28px,#00d000 29px,#026901 32px,#4e8b0e 34px,#b4da00 36px,#fef603 38px,#f0a21f 40px,#ea722b 41px,#e2483c 43px,#df0041 48px,#d40048 63px,#e00640 71px,#e1453d 77px,#e75d31 81px,#fefe00 89px,#a7d300 92px,#377d0e 95px,#016800 98px,#00dd00 111px,#00f208 114px,#00ffaf 124px,#00feff 130px,#00a2ff 143px,#0086ff 154px,#008eff 175px,#00d4ff 188px,#00fffb 194px,#00f71f 211px,#00ec00 214px,#046a01 233px,#428110 237px,#a4d200 240px,#fdfe00 244px,#e75b33 257px,#e03140 263px,#df0041 267px,#960070 294px,#800081 341px)"></div>
<div class="a" style="left:686px;top:0;width:7px;height:341px;background:linear-gradient(#0000a0 0px,#0000bf 20px,#0000f7 23px,#0035f9 24px,#009eff 25px,#00f4ff 26px,#00ff8f 27px,#00f618 28px,#00d000 29px,#026901 32px,#4e8b0e 34px,#b4da00 36px,#fef603 38px,#f0a21f 40px,#ea722b 41px,#e2483c 43px,#df0041 48px,#d40048 63px,#e00640 71px,#e1453e 77px,#ea6d2d 82px,#ffff00 89px,#a7d400 92px,#377c0e 95px,#006800 98px,#00ce00 109px,#00f208 114px,#00ffad 124px,#00fffe 130px,#00a4ff 143px,#0089ff 154px,#0091ff 175px,#00cfff 187px,#00fff8 194px,#00f61b 211px,#00ea00 214px,#086b02 233px,#4c8a0e 237px,#abd500 240px,#fffd01 244px,#e85f30 256px,#e02f40 263px,#df0041 267px,#960070 294px,#800081 341px)"></div>
<div class="a" style="left:693px;top:0;width:7px;height:341px;background:linear-gradient(#0000a0 0px,#0000bf 20px,#0000f7 23px,#0035f9 24px,#009eff 25px,#00f4ff 26px,#00ff8f 27px,#00f618 28px,#00d000 29px,#026901 32px,#4e8b0e 34px,#b4da00 36px,#fef603 38px,#f0a21f 40px,#ea722b 41px,#e2483c 43px,#df0041 48px,#d40048 63px,#e00540 71px,#e1453e 77px,#e96b2d 82px,#fffe00 89px,#a8d400 92px,#367c0e 95px,#006900 98px,#00d600 110px,#00f208 114px,#00ffab 124px,#00fffc 130px,#00a2ff 144px,#008cff 155px,#0096ff 176px,#00d9ff 188px,#00feff 193px,#00ff4d 207px,#00ef00 213px,#007200 231px,#0c6d03 233px,#3a7e0f 236px,#b2d900 240px,#f4fa00 243px,#fbe20a 246px,#e85e31 256px,#e03a40 262px,#de0041 267px,#960070 294px,#800081 341px)"></div>
<div class="a" style="left:700px;top:0;width:7px;height:341px;background:linear-gradient(#0000a1 0px,#0000c0 20px,#0000f7 23px,#0035f9 24px,#009eff 25px,#00f4ff 26px,#00ff8f 27px,#00f618 28px,#00d000 29px,#026901 32px,#4e8b0e 34px,#b4da00 36px,#fef603 38px,#f0a21f 40px,#ea722b 41px,#e2483c 43px,#df0041 48px,#d40048 63px,#e00540 71px,#e1453e 77px,#e96a2d 82px,#fffd01 89px,#a9d400 92px,#357c0d 95px,#006a00 98px,#00d600 110px,#00f208 114px,#00ffaa 124px,#00fbff 131px,#00a4ff 144px,#008fff 155px,#0099ff 176px,#00dcff 188px,#00fffd 193px,#00ff49 207px,#00ed00 213px,#036901 232px,#3f8010 236px,#a1d100 239px,#fafd00 243px,#ec8028 253px,#e55237 258px,#e02a40 263px,#e00240 266px,#940071 295px,#800081 341px)"></div>
<div class="a" style="left:707px;top:0;width:7px;height:341px;background:linear-gradient(#0000a1 0px,#0000c0 20px,#0000f7 23px,#0035f9 24px,#009eff 25px,#00f4ff 26px,#00ff8f 27px,#00f618 28px,#00d000 29px,#026901 32px,#4e8b0e 34px,#b4da00 36px,#fef603 38px,#f0a21f 40px,#ea722b 41px,#e2483c 43px,#df0041 48px,#d40048 63px,#e00540 71px,#e1443e 77px,#e9692e 82px,#fffc01 89px,#a9d500 92px,#55910d 94px,#207408 96px,#006b00 98px,#00de00 111px,#00f208 114px,#00ffa8 124px,#00fcff 131px,#00a6ff 144px,#0092ff 156px,#009bff 176px,#00deff 188px,#00fffa 193px,#00f71e 210px,#00eb00 213px,#076a02 232px,#48860f 236px,#a8d400 239px,#fffe00 243px,#e75c32 256px,#e03640 262px,#e00040 266px,#940071 295px,#800081 341px)"></div>
<div class="a" style="left:714px;top:0;width:7px;height:341px;background:linear-gradient(#0000a1 0px,#0000c1 20px,#0000f7 23px,#0035f9 24px,#009eff 25px,#00f4ff 26px,#00ff8f 27px,#00f618 28px,#00d000 29px,#026901 32px,#4e8b0e 34px,#b4da00 36px,#fef603 38px,#f0a21f 40px,#ea722b 41px,#e2483c 43px,#df0041 48px,#d40048 63px,#e00540 71px,#e1443e 77px,#e9682e 82px,#fefb01 89px,#aad500 92px,#54910d 94px,#1f7408 96px,#006c00 98px,#00de00 111px,#00f209 114px,#00ffa7 124px,#00feff 131px,#00a8ff 144px,#0095ff 155px,#009eff 176px,#00d9ff 187px,#00fff7 193px,#00f61a 210px,#00f000 212px,#007400 230px,#0a6c03 232px,#387d0e 235px,#aed700 239px,#fefb01 243px,#e75b33 256px,#e03440 262px,#e00040 266px,#950071 294px,#800081 341px)"></div>
<div class="a" style="left:721px;top:0;width:7px;height:341px;background:linear-gradient(#0000a2 0px,#0000c1 20px,#0000f7 23px,#0035f9 24px,#009eff 25px,#00f4ff 26px,#00ff8f 27px,#00f618 28px,#00d000 29px,#026901 32px,#4e8b0e 34px,#b4da00 36px,#fef603 38px,#f0a21f 40px,#ea722b 41px,#e2483c 43px,#df0041 48px,#d40048 63px,#e00440 71px,#e1443e 77px,#e9672e 82px,#fefa02 89px,#abd500 92px,#53900d 94px,#1e7308 96px,#006c00 98px,#00d000 109px,#00f209 114px,#00ffa6 124px,#00ffff 131px,#00aaff 144px,#0097ff 155px,#00a0ff 176px,#00dbff 187px,#00ffff 192px,#00ff5c 205px,#00ee00 212px,#007100 230px,#0e6d04 232px,#3c7f0f 235px,#9bcc01 238px,#f6fb00 242px,#f7ca12 247px,#e65a33 256px,#e03240 262px,#df0040 266px,#950071 294px,#800081 341px)"></div>
<div class="a" style="left:728px;top:0;width:7px;height:341px;background:linear-gradient(#0000a2 0px,#0000c1 20px,#0000f7 23px,#0035f9 24px,#009eff 25px,#00f4ff 26px,#00ff8f 27px,#00f618 28px,#00d000 29px,#026901 32px,#4e8b0e 34px,#b4da00 36px,#fef603 38px,#f0a21f 40px,#ea722b 41px,#e2483c 43px,#df0041 48px,#d40048 63px,#e00440 71px,#e1443e 77px,#e9672e 82px,#fef902 89px,#cce600 91px,#81b605 93px,#53900d 94px,#1e7307 96px,#006d00 98px,#00df00 111px,#00f209 114px,#00ffa5 124px,#00fffd 131px,#00acff 144px,#009aff 156px,#00a2ff 176px,#00ddff 187px,#00fffd 192px,#00ff59 205px,#00ed00 212px,#046901 231px,#408010 235px,#a2d100 238px,#fbfd00 242px,#ee8f24 251px,#e65934 256px,#e03040 262px,#df0041 266px,#950071 294px,#800081 341px)"></div>
<div class="a" style="left:735px;top:0;width:7px;height:341px;background:linear-gradient(#0000a2 0px,#0000c2 20px,#0000f7 23px,#0035f9 24px,#009eff 25px,#00f4ff 26px,#00ff8f 27px,#00f618 28px,#00d000 29px,#026901 32px,#4e8b0e 34px,#b4da00 36px,#fef603 38px,#f0a21f 40px,#ea722b 41px,#e2483c 43px,#df0041 48px,#d40048 63px,#e00440 71px,#e1443e 77px,#e9662f 82px,#fef802 89px,#cde600 91px,#82b705 93px,#538f0d 94px,#1d7307 96px,#006e00 98px,#00d800 110px,#00f20a 114px,#00ffa4 124px,#00faff 132px,#00aaff 145px,#009cff 159px,#00a7ff 177px,#00e6ff 188px,#00fffa 192px,#00ff56 205px,#00f104 211px,#007600 229px,#157005 232px,#47860f 235px,#a7d400 238px,#ffff00 242px,#e75d31 255px,#e03c40 261px,#df0041 266px,#950071 294px,#800081 341px)"></div>
<div class="a" style="left:742px;top:0;width:7px;height:341px;background:linear-gradient(#0000a3 0px,#0000c2 20px,#0000f7 23px,#0035f9 24px,#009eff 25px,#00f4ff 26px,#00ff8f 27px,#00f618 28px,#00d000 29px,#026901 32px,#4e8b0e 34px,#b4da00 36px,#fef603 38px,#f0a21f 40px,#ea722b 41px,#e2483c 43px,#df0041 48px,#d40048 63px,#e00440 71px,#e1443e 77px,#e9652f 82px,#fef803 89px,#cee700 91px,#82b705 93px,#528f0d 94px,#096b02 97px,#00b900 106px,#00ee00 113px,#00ff86 122px,#00fffa 131px,#00abff 145px,#009eff 160px,#00a8ff 177px,#00fff9 192px,#00ff53 205px,#00f002 211px,#007400 229px,#177106 232px,#4d8b0e 235px,#acd600 238px,#fffd01 242px,#e75d32 255px,#e03a40 261px,#df0041 266px,#950071 294px,#800081 341px)"></div>
<div class="a" style="left:749px;top:0;width:7px;height:341px;background:linear-gradient(#0000a3 0px,#0000c2 20px,#0000f7 23px,#0035f9 24px,#009eff 25px,#00f4ff 26px,#00ff8f 27px,#00f618 28px,#00d000 29px,#026901 32px,#4e8b0e 34px,#b4da00 36px,#fef603 38px,#f0a21f 40px,#ea722b 41px,#e2483c 43px,#df0041 48px,#d40048 63px,#e00440 71px,#e1443e 77px,#e9652f 82px,#fef703 89px,#eff700 90px,#add600 92px,#528f0d 94px,#086b02 97px,#00ee00 113px,#00ff86 122px,#00fcff 132px,#00acff 145px,#009fff 161px,#00aaff 177px,#00e9ff 188px,#00fff7 192px,#00ff60 204px,#00f000 211px,#007300 229px,#0b6c03 231px,#397d0e 234px,#afd800 238px,#fefb01 242px,#e75c32 255px,#e03940 261px,#df0041 266px,#960070 293px,#800081 341px)"></div>
<div class="a" style="left:756px;top:0;width:7px;height:341px;background:linear-gradient(#0000a3 0px,#0000c3 20px,#0000f7 23px,#0035f9 24px,#009eff 25px,#00f4ff 26px,#00ff8f 27px,#00f618 28px,#00d000 29px,#026901 32px,#4e8b0e 34px,#b4da00 36px,#fef603 38px,#f0a21f 40px,#ea722b 41px,#e2483c 43px,#df0041 48px,#d40048 63px,#e00440 71px,#e1443e 77px,#e9642f 82px,#fef703 89px,#eff700 90px,#add700 92px,#528f0d 94px,#1b7207 96px,#006f00 98px,#00d800 110px,#00ee00 113px,#00ff86 122px,#00fcff 132px,#00adff 145px,#00a1ff 160px,#00abff 177px,#00eaff 188px,#00fff6 192px,#00ff50 205px,#00ef00 211px,#007200 229px,#0d6d03 231px,#3b7e0f 234px,#b2d900 238px,#f4fa00 241px,#fbe309 244px,#e75c32 255px,#e03840 261px,#de0041 266px,#950071 294px,#800081 341px)"></div>
<div class="a" style="left:763px;top:0;width:7px;height:341px;background:linear-gradient(#0000a4 0px,#0000c3 20px,#0000f7 23px,#0035f9 24px,#009eff 25px,#00f4ff 26px,#00ff8f 27px,#00f618 28px,#00d000 29px,#026901 32px,#4e8b0e 34px,#b4da00 36px,#fef603 38px,#f0a21f 40px,#ea722b 41px,#e2483c 43px,#df0041 48px,#d40048 63px,#e00440 71px,#e1443e 77px,#e9652f 82px,#fef703 89px,#cee700 91px,#81b605 93px,#508e0d 94px,#1b7207 96px,#006f00 98px,#00d800 110px,#00ee00 113px,#00ff86 122px,#00fcff 132px,#00adff 145px,#00a0ff 160px,#00aaff 177px,#00feff 191px,#00ff6d 203px,#00ef00 211px,#007200 229px,#0d6d03 231px,#3b7e0f 234px,#b2d900 238px,#fefa02 242px,#e75c32 255px,#e03940 261px,#de0041 266px,#950071 294px,#800081 341px)"></div>
<div class="a" style="left:770px;top:0;width:7px;height:341px;background:linear-gradient(#0000a4 0px,#0000c3 20px,#0000f7 23px,#0035f9 24px,#009eff 25px,#00f4ff 26px,#00ff8f 27px,#00f618 28px,#00d000 29px,#026901 32px,#4e8b0e 34px,#b4da00 36px,#fef603 38px,#f0a21f 40px,#ea722b 41px,#e2483c 43px,#df0041 48px,#d40048 63px,#e00440 71px,#e1443e 77px,#e9662e 82px,#fef902 89px,#cbe500 91px,#aad500 92px,#4e8c0e 94px,#076b02 97px,#00ee00 113px,#00ff86 122px,#00fff9 131px,#00acff 145px,#009fff 160px,#00a9ff 177px,#00fff7 192px,#00ff60 204px,#00f000 211px,#007200 229px,#0c6c03 231px,#397e0e 234px,#afd700 238px,#fffc01 242px,#e75c32 255px,#e03940 261px,#df0041 266px,#97006f 293px,#800080 341px)"></div>
<div class="a" style="left:777px;top:0;width:7px;height:341px;background:linear-gradient(#0000a5 0px,#0000c4 20px,#0000f7 23px,#0035f9 24px,#009eff 25px,#00f4ff 26px,#00ff8f 27px,#00f618 28px,#00d000 29px,#026901 32px,#4e8b0e 34px,#b4da00 36px,#fef603 38px,#f0a21f 40px,#ea722b 41px,#e2483c 43px,#df0041 48px,#d40048 63px,#e00540 71px,#e1443e 77px,#e9682e 82px,#fefb01 89px,#a7d300 92px,#4c8a0e 94px,#076b02 97px,#00ee00 113px,#00ff86 122px,#00fffa 131px,#00abff 145px,#009dff 159px,#00a8ff 177px,#00e7ff 188px,#00fff9 192px,#00ff53 205px,#00f001 211px,#007300 229px,#0b6c03 231px,#4f8c0e 235px,#abd600 238px,#fffe00 242px,#e75d32 255px,#e03b40 261px,#df0041 266px,#960070 294px,#810080 341px)"></div>
<div class="a" style="left:784px;top:0;width:7px;height:341px;background:linear-gradient(#0000a5 0px,#0000c4 20px,#0000f7 23px,#0035f9 24px,#009eff 25px,#00f4ff 26px,#00ff8f 27px,#00f618 28px,#00d000 29px,#026901 32px,#4e8b0e 34px,#b4da00 36px,#fef603 38px,#f0a21f 40px,#ea722b 41px,#e2483c 43px,#df0041 48px,#d40048 63px,#e00540 71px,#e1453e 77px,#e96b2d 82px,#fffd01 89px,#a4d200 92px,#49880e 94px,#076b02 97px,#00ee00 113px,#00ff87 122px,#00fffc 131px,#00a9ff 145px,#009bff 159px,#00a6ff 177px,#00f4ff 190px,#00fff0 193px,#00ff54 205px,#00f002 211px,#006b00 230px,#4a890e 235px,#a7d400 238px,#fefe00 242px,#e75e31 255px,#e03c40 261px,#df0041 266px,#97006f 294px,#82007f 341px)"></div>
<div class="a" style="left:791px;top:0;width:7px;height:341px;background:linear-gradient(#0000a5 0px,#0000c5 20px,#0000f7 23px,#0035f9 24px,#009eff 25px,#00f4ff 26px,#00ff8f 27px,#00f618 28px,#00d000 29px,#026901 32px,#4e8b0e 34px,#b4da00 36px,#fef603 38px,#f0a21f 40px,#ea722b 41px,#e2483c 43px,#df0041 48px,#d40048 63px,#e00640 71px,#e1453d 77px,#ea6d2d 82px,#fdef06 88px,#fdfe00 89px,#a0d000 92px,#46850f 94px,#076b02 97px,#00ed00 113px,#00ff88 122px,#00fffd 131px,#00acff 144px,#0099ff 155px,#00a1ff 176px,#00ddff 187px,#00fffd 192px,#00ff56 205px,#00f103 211px,#086b02 231px,#45840f 235px,#a3d200 238px,#f9fc00 242px,#f2ac1c 249px,#e65933 256px,#e03040 262px,#df0040 266px,#960070 295px,#83007e 341px)"></div>
<div class="a" style="left:798px;top:0;width:7px;height:341px;background:linear-gradient(#0000a6 0px,#0000c5 20px,#0000f7 23px,#0035f9 24px,#009eff 25px,#00f4ff 26px,#00ff8f 27px,#00f618 28px,#00d000 29px,#026901 32px,#4e8b0e 34px,#b4da00 36px,#fef603 38px,#f0a21f 40px,#ea722b 41px,#e2483c 43px,#df0041 48px,#d40048 63px,#e00740 71px,#e1463d 77px,#e85e31 81px,#fdf204 88px,#f8fc00 89px,#9bcb01 92px,#43830f 94px,#076a02 97px,#00ed00 113px,#00ff89 122px,#00ffff 131px,#00aaff 144px,#0097ff 155px,#009fff 176px,#00dbff 187px,#00ffff 192px,#00ff67 204px,#00ec00 212px,#066a01 231px,#408010 235px,#9ece00 238px,#f4fa00 242px,#fbe309 245px,#e75a33 256px,#e03140 262px,#e00040 266px,#97006f 295px,#84007e 341px)"></div>
<div class="a" style="left:805px;top:0;width:7px;height:341px;background:linear-gradient(#0000a6 0px,#0000c5 20px,#0000f7 23px,#0035f9 24px,#009eff 25px,#00f4ff 26px,#00ff8f 27px,#00f618 28px,#00d000 29px,#026901 32px,#4e8b0e 34px,#b4da00 36px,#fef603 38px,#f0a21f 40px,#ea722b 41px,#e2483c 43px,#df0041 48px,#d40048 63px,#e00840 71px,#e2463d 77px,#e86030 81px,#fef503 88px,#f3f900 89px,#95c702 92px,#408010 94px,#066a02 97px,#00ed00 113px,#00ff8a 122px,#00fdff 131px,#00a8ff 144px,#0094ff 155px,#009dff 176px,#00d8ff 187px,#00fff7 193px,#00ff5b 205px,#00ed00 212px,#046901 231px,#3d7f0f 235px,#afd800 239px,#fffd01 243px,#e75b33 256px,#e03340 262px,#e00040 266px,#98006e 295px,#85007d 341px)"></div>
<div class="a" style="left:812px;top:0;width:7px;height:341px;background:linear-gradient(#0000a6 0px,#0000c6 20px,#0000f7 23px,#0035f9 24px,#009eff 25px,#00f4ff 26px,#00ff8f 27px,#00f618 28px,#00d000 29px,#026901 32px,#4e8b0e 34px,#b4da00 36px,#fef603 38px,#f0a21f 40px,#ea722b 41px,#e2483c 43px,#df0041 48px,#d40048 63px,#e00940 71px,#e2473d 77px,#e8622f 81px,#fef902 88px,#d0e800 90px,#8fc203 92px,#3e7f10 94px,#066a02 97px,#00ed00 113px,#00ff8b 122px,#00fcff 131px,#00aaff 143px,#0091ff 154px,#009bff 176px,#00d6ff 187px,#00fffa 193px,#00ff4e 206px,#00ee00 212px,#026901 231px,#3a7e0f 235px,#aad500 239px,#fdfe00 243px,#ed8c25 252px,#e65635 257px,#e03540 262px,#e00140 266px,#98006e 296px,#86007c 341px)"></div>
<div class="a" style="left:819px;top:0;width:7px;height:341px;background:linear-gradient(#0000a7 0px,#0000c6 20px,#0000f7 23px,#0035f9 24px,#009eff 25px,#00f4ff 26px,#00ff8f 27px,#00f618 28px,#00d000 29px,#026901 32px,#4e8b0e 34px,#b4da00 36px,#fef603 38px,#f0a21f 40px,#ea722b 41px,#e2483c 43px,#df0041 48px,#d40048 63px,#e00040 70px,#e2473c 77px,#e9662f 81px,#fffc01 88px,#add700 91px,#3d7f0f 94px,#066a02 97px,#00ed00 113px,#00ff8c 122px,#00fffa 130px,#00a4ff 144px,#008eff 155px,#0098ff 176px,#00dbff 188px,#00fffd 193px,#00ff51 206px,#00ef00 212px,#007100 230px,#0d6d03 232px,#4c8a0e 236px,#a5d200 239px,#f8fb00 243px,#f4ba17 249px,#e75d31 256px,#e03740 262px,#de0041 267px,#99006e 296px,#87007b 341px)"></div>
<div class="a" style="left:826px;top:0;width:7px;height:341px;background:linear-gradient(#0000a7 0px,#0000c6 20px,#0000f7 23px,#0035f9 24px,#009eff 25px,#00f4ff 26px,#00ff8f 27px,#00f618 28px,#00d000 29px,#026901 32px,#4e8b0e 34px,#b4da00 36px,#fef603 38px,#f0a21f 40px,#ea722b 41px,#e2483c 43px,#df0041 48px,#d40048 63px,#e00040 70px,#e1433e 76px,#e9692e 81px,#fdef06 87px,#feff00 88px,#a9d400 91px,#3b7e0f 94px,#066a02 97px,#00ed00 113px,#00ff8e 122px,#00fffc 130px,#00a1ff 144px,#008bff 155px,#0093ff 175px,#00d1ff 187px,#00feff 193px,#00ff63 205px,#00f000 212px,#007200 230px,#0b6c03 232px,#46850f 236px,#9fcf00 239px,#fefb01 244px,#e65934 257px,#e03940 262px,#df0041 267px,#99006e 297px,#89007a 341px)"></div>
<div class="a" style="left:833px;top:0;width:7px;height:341px;background:linear-gradient(#0000a7 0px,#0000c7 20px,#0000f7 23px,#0035f9 24px,#009eff 25px,#00f4ff 26px,#00ff8f 27px,#00f618 28px,#00d000 29px,#026901 32px,#4e8b0e 34px,#b4da00 36px,#fef603 38px,#f0a21f 40px,#ea722b 41px,#e2483c 43px,#df0041 48px,#d40048 63px,#e00140 70px,#e1443e 76px,#ea6d2d 81px,#fdf204 87px,#f8fc00 88px,#a4d200 91px,#3a7e0e 94px,#066a01 97px,#00ed00 113px,#00ff7f 121px,#00ffff 130px,#00a4ff 143px,#0088ff 154px,#0093ff 176px,#00d6ff 188px,#00fff9 194px,#00fd39 208px,#00f002 212px,#006b00 231px,#408010 236px,#aed700 240px,#ffff00 244px,#e65a33 257px,#e02d40 263px,#df0041 267px,#99006d 298px,#8a007a 341px)"></div>
<div class="a" style="left:840px;top:0;width:7px;height:341px;background:linear-gradient(#0000a8 0px,#0000c7 20px,#0000f7 23px,#0035f9 24px,#009eff 25px,#00f4ff 26px,#00ff8f 27px,#00f618 28px,#00d000 29px,#026901 32px,#4e8b0e 34px,#b4da00 36px,#fef603 38px,#f0a21f 40px,#ea722b 41px,#e2483c 43px,#df0041 48px,#d30048 62px,#e00140 70px,#e1443e 76px,#e85e31 80px,#fef603 87px,#f3f900 88px,#a0d000 91px,#387d0e 94px,#066a01 97px,#00ed00 113px,#00ff80 121px,#00fdff 130px,#00a2ff 143px,#0085ff 154px,#008dff 175px,#00d3ff 188px,#00fffc 194px,#00ff4a 207px,#00f104 212px,#076a02 232px,#3d7f0f 236px,#a9d400 240px,#fafc00 244px,#f4b818 250px,#e75b33 257px,#e02f40 263px,#df0041 267px,#99006d 299px,#8b0079 341px)"></div>
<div class="a" style="left:847px;top:0;width:7px;height:341px;background:linear-gradient(#0000a8 0px,#0000c7 20px,#0000f7 23px,#0035f9 24px,#009eff 25px,#00f4ff 26px,#00ff8f 27px,#00f618 28px,#00d000 29px,#026901 32px,#4e8b0e 34px,#b4da00 36px,#fef603 38px,#f0a21f 40px,#ea722b 41px,#e2483c 43px,#df0041 48px,#d30048 62px,#e00240 70px,#e1453d 76px,#e86030 80px,#fefa02 87px,#9bcc01 91px,#518f0d 93px,#157005 96px,#006f00 98px,#00ee00 113px,#00ff82 121px,#00fcff 130px,#00a5ff 142px,#0082ff 153px,#008bff 175px,#00d1ff 188px,#00ffff 194px,#00ff5d 206px,#00ed00 213px,#056a01 232px,#508d0d 237px,#a4d200 240px,#fefa02 245px,#e75c32 257px,#e03140 263px,#e00040 267px,#9b006c 298px,#8c0078 341px)"></div>
<div class="a" style="left:854px;top:0;width:7px;height:341px;background:linear-gradient(#0000a8 0px,#0000c8 20px,#0000f7 23px,#0035f9 24px,#009eff 25px,#00f4ff 26px,#00ff8f 27px,#00f618 28px,#00d000 29px,#026901 32px,#4e8b0e 34px,#b4da00 36px,#fef603 38px,#f0a21f 40px,#ea722b 41px,#e2483c 43px,#df0041 48px,#d40048 62px,#e00340 70px,#e1463d 76px,#e8632f 80px,#fcec06 86px,#fffd01 87px,#95c702 91px,#4e8c0e 93px,#066a01 97px,#00ee00 113px,#00ff83 121px,#00fffa 129px,#009eff 143px,#007fff 154px,#0088ff 175px,#00d6ff 189px,#00fff7 195px,#00ff50 207px,#00ee00 213px,#036901 232px,#4a880e 237px,#9ece00 240px,#fffe00 245px,#ee9323 253px,#e65734 258px,#e03340 263px,#e00040 267px,#9b006c 300px,#8e0077 341px)"></div>
<div class="a" style="left:861px;top:0;width:7px;height:341px;background:linear-gradient(#0000a9 0px,#0000c8 20px,#0000f7 23px,#0035f9 24px,#009eff 25px,#00f4ff 26px,#00ff8f 27px,#00f618 28px,#00d000 29px,#026901 32px,#4e8b0e 34px,#b4da00 36px,#fef603 38px,#f0a21f 40px,#ea722b 41px,#e2483c 43px,#df0041 48px,#d40048 62px,#e00440 70px,#e2463d 76px,#e9662e 80px,#fdf005 86px,#fdfe00 87px,#91c303 91px,#4b890e 93px,#056a01 97px,#00ee00 113px,#00ff85 121px,#00fffc 129px,#00a1ff 142px,#007bfe 154px,#0083ff 174px,#00cbff 188px,#00fffa 195px,#00ff53 207px,#00ef00 213px,#016800 232px,#44830f 237px,#add700 241px,#fcfe00 245px,#f1a51e 252px,#e65834 258px,#e03540 263px,#e00140 267px,#9c006b 300px,#8f0076 341px)"></div>
<div class="a" style="left:868px;top:0;width:7px;height:341px;background:linear-gradient(#0000a9 0px,#0000c8 20px,#0000f7 23px,#0035f9 24px,#009eff 25px,#00f4ff 26px,#00ff8f 27px,#00f618 28px,#00d000 29px,#026901 32px,#4e8b0e 34px,#b4da00 36px,#fef603 38px,#f0a21f 40px,#ea722b 41px,#e2483c 43px,#df0041 48px,#d40048 62px,#e00540 70px,#e2473d 76px,#e9692e 80px,#fdf304 86px,#f8fc00 87px,#8cbf03 91px,#48870f 93px,#056a01 97px,#00ee00 113px,#00ff87 121px,#00ffff 129px,#009fff 142px,#0077fe 154px,#0081ff 174px,#00c9ff 188px,#00fffd 195px,#00ff56 207px,#00f000 213px,#006900 232px,#3f8010 237px,#a9d400 241px,#f7fb00 245px,#f9d60e 249px,#e65933 258px,#e03740 263px,#de0041 268px,#9c006b 301px,#900075 341px)"></div>
<div class="a" style="left:875px;top:0;width:7px;height:341px;background:linear-gradient(#0000a9 0px,#0000c9 20px,#0000f7 23px,#0035f9 24px,#009eff 25px,#00f4ff 26px,#00ff8f 27px,#00f618 28px,#00d000 29px,#026901 32px,#4e8b0e 34px,#b4da00 36px,#fef603 38px,#f0a21f 40px,#ea722b 41px,#e2483c 43px,#df0041 48px,#d40048 62px,#e00640 70px,#e2473c 76px,#ea6d2d 80px,#fbe409 85px,#f4f900 87px,#a7d400 90px,#46850f 93px,#056a01 97px,#00ee00 113px,#00ff77 120px,#00feff 129px,#009dff 142px,#0074fe 154px,#007eff 174px,#00c7ff 188px,#00ffff 195px,#00ff49 208px,#00f001 213px,#006a00 232px,#3d7f0f 237px,#a5d200 241px,#fefb01 246px,#ee8e25 254px,#e75a33 258px,#e03940 263px,#df0041 268px,#9d006a 301px,#910074 341px)"></div>
<div class="a" style="left:882px;top:0;width:7px;height:341px;background:linear-gradient(#0000aa 0px,#0000c9 20px,#0000f7 23px,#0035f9 24px,#009eff 25px,#00f4ff 26px,#00ff8f 27px,#00f618 28px,#00d000 29px,#026901 32px,#4e8b0e 34px,#b4da00 36px,#fef603 38px,#f0a21f 40px,#ea722b 41px,#e2483c 43px,#df0041 48px,#d40048 62px,#e00740 70px,#e2483c 76px,#e75d31 79px,#fbe708 85px,#fef802 86px,#bdde00 89px,#85b905 91px,#44830f 93px,#056a01 97px,#00ee00 113px,#00ff78 120px,#00fcff 129px,#00a1ff 141px,#0070fd 154px,#0078fe 173px,#00c5ff 188px,#00fff6 196px,#00ff4b 208px,#00f103 213px,#086b02 233px,#3b7e0f 237px,#a1d000 241px,#fffe00 246px,#ee9024 254px,#e75b32 258px,#e02c40 264px,#df0041 268px,#9d006a 302px,#920073 341px)"></div>
<div class="a" style="left:889px;top:0;width:7px;height:341px;background:linear-gradient(#0000aa 0px,#0000c9 20px,#0000f7 23px,#0035f9 24px,#009eff 25px,#00f4ff 26px,#00ff8f 27px,#00f618 28px,#00d000 29px,#026901 32px,#4e8b0e 34px,#b4da00 36px,#fef603 38px,#f0a21f 40px,#ea722b 41px,#e2483c 43px,#df0041 48px,#d40048 62px,#e00840 70px,#e1433e 75px,#e85e31 79px,#fcea07 85px,#fefb01 86px,#a2d100 90px,#428210 93px,#056a01 97px,#00ef00 113px,#00ff8b 121px,#00fff8 128px,#0095ff 143px,#006efd 154px,#0075fe 173px,#00cbff 189px,#00fff9 196px,#00f513 212px,#00e500 215px,#076b02 233px,#4d8a0e 238px,#9ccd01 241px,#fdfe00 246px,#f3b21a 252px,#e75c32 258px,#e02d40 264px,#df0041 268px,#9e006a 302px,#930073 341px)"></div>
<div class="a" style="left:896px;top:0;width:7px;height:341px;background:linear-gradient(#0000aa 0px,#0000ca 20px,#0000f7 23px,#0035f9 24px,#009eff 25px,#00f4ff 26px,#00ff8f 27px,#00f618 28px,#00d000 29px,#026901 32px,#4e8b0e 34px,#b4da00 36px,#fef603 38px,#f0a21f 40px,#ea722b 41px,#e2483c 43px,#df0041 48px,#d40048 62px,#e00840 70px,#e1443e 75px,#e85f30 79px,#fcec06 85px,#fffd01 86px,#a0d000 90px,#408010 93px,#056a01 97px,#00ef00 113px,#00ff8d 121px,#00fff9 128px,#0093ff 143px,#006bfd 154px,#0073fe 173px,#00c9ff 189px,#00fffb 196px,#00ff50 208px,#00ec00 214px,#066a01 233px,#49880e 238px,#add700 242px,#fafc00 246px,#f3b519 252px,#e75d32 258px,#e02e40 264px,#df0041 268px,#9e0069 303px,#940072 341px)"></div>
<div class="a" style="left:903px;top:0;width:7px;height:341px;background:linear-gradient(#0000ab 0px,#0000ca 20px,#0000f7 23px,#0035f9 24px,#009eff 25px,#00f4ff 26px,#00ff8f 27px,#00f618 28px,#00d000 29px,#026901 32px,#4e8b0e 34px,#b4da00 36px,#fef603 38px,#f0a21f 40px,#ea722b 41px,#e2483c 43px,#df0041 48px,#d40048 62px,#e00940 70px,#e1443e 75px,#e86030 79px,#fcee06 85px,#fffe00 86px,#9dce00 90px,#408010 93px,#056a01 97px,#00ef00 113px,#00ff8e 121px,#00fffb 128px,#0092ff 143px,#0069fc 154px,#0071fd 173px,#00c8ff 189px,#00fffc 196px,#00ff51 208px,#00ed00 214px,#056a01 233px,#47860f 238px,#abd500 242px,#f7fb00 246px,#f9d50e 250px,#e75d31 258px,#e02f40 264px,#df0040 268px,#9f0069 303px,#940071 341px)"></div>
<div class="a" style="left:910px;top:0;width:7px;height:341px;background:linear-gradient(#0000ab 0px,#0000ca 20px,#0000f7 23px,#0035f9 24px,#009eff 25px,#00f4ff 26px,#00ff8f 27px,#00f618 28px,#00d000 29px,#026901 32px,#4e8b0e 34px,#b4da00 36px,#fef603 38px,#f0a21f 40px,#ea722b 41px,#e2483c 43px,#df0041 48px,#d40048 62px,#e00040 69px,#e1443e 75px,#e86130 79px,#fdef06 85px,#ffff00 86px,#9ccd01 90px,#3f8010 93px,#056a01 97px,#00ef00 113px,#00ff8e 121px,#00fffb 128px,#0097ff 142px,#0068fc 154px,#0070fd 173px,#00d0ff 190px,#00fffc 196px,#00ff51 208px,#00ed00 214px,#056a01 233px,#46850f 238px,#aad500 242px,#f6fb00 246px,#f9d60e 250px,#e75e31 258px,#e03040 264px,#e00040 268px,#9f0069 303px,#950071 341px)"></div>
<div class="a" style="left:917px;top:0;width:7px;height:341px;background:linear-gradient(#0000ab 0px,#0000cb 20px,#0000e5 22px,#0000f7 23px,#0035f9 24px,#009eff 25px,#00f4ff 26px,#00ff8f 27px,#00f618 28px,#00d000 29px,#026901 32px,#4e8b0e 34px,#b4da00 36px,#fef603 38px,#f0a120 40px,#ea722c 41px,#e2483c 43px,#df0040 48px,#d40048 62px,#e00140 69px,#e1453d 75px,#e8632f 79px,#fdef05 85px,#ffff00 86px,#9ccd01 90px,#3f8010 93px,#056a01 97px,#00ee00 113px,#00ff7a 120px,#00fffa 128px,#0092ff 143px,#0068fc 154px,#0071fd 173px,#00ccff 189px,#00fff6 196px,#00f71e 211px,#00ea00 214px,#086b02 233px,#4d8b0e 238px,#b0d800 242px,#fbfd00 246px,#f4b519 252px,#e75e31 258px,#e03240 264px,#e00040 268px,#9f0069 304px,#950071 341px)"></div>
<div class="a" style="left:924px;top:0;width:7px;height:341px;background:linear-gradient(#0000ac 0px,#0000cb 20px,#0000e5 22px,#0000f7 23px,#0035f9 24px,#009eff 25px,#00f4ff 26px,#00ff8f 27px,#00f618 28px,#00d000 29px,#026901 32px,#4e8b0e 34px,#b4da00 36px,#fef603 38px,#f0a020 40px,#ea712c 41px,#e2483c 43px,#df0040 48px,#d50047 62px,#e00740 69px,#e2473d 75px,#e9662f 79px,#fdef05 85px,#ffff00 86px,#9dcd01 90px,#408010 93px,#056a01 97px,#00ee00 113px,#00ff78 120px,#00fff8 128px,#008dff 144px,#0068fc 154px,#0071fd 173px,#00d1ff 189px,#00fff9 195px,#00f823 210px,#00ed00 213px,#006800 232px,#3f8010 237px,#a5d200 241px,#fffd01 246px,#ee9323 254px,#e65734 259px,#e03540 264px,#df0041 269px,#a00068 304px,#960070 341px)"></div>
<div class="a" style="left:931px;top:0;width:7px;height:341px;background:linear-gradient(#0000ac 0px,#0000cb 20px,#0000e5 22px,#0000f7 23px,#0035f9 24px,#009eff 25px,#00f4ff 26px,#00ff8f 27px,#00f618 28px,#00d000 29px,#026901 32px,#4d8b0e 34px,#b4da00 36px,#fef603 38px,#f0a020 40px,#ea702c 41px,#e2483c 43px,#e00040 48px,#d70046 62px,#e00240 68px,#e1443e 74px,#e9692e 79px,#fdef05 85px,#ffff00 86px,#9dce00 90px,#408010 93px,#056a01 97px,#00ed00 113px,#00ff88 121px,#00fcff 129px,#0099ff 142px,#0068fc 154px,#0072fd 173px,#00cfff 188px,#00fffb 194px,#00f619 210px,#00ef00 212px,#066a01 232px,#4a880e 237px,#aed700 241px,#f9fc00 245px,#f5bc17 251px,#e75d31 258px,#e03740 264px,#df0040 269px,#a00068 306px,#97006f 341px)"></div>
<div class="a" style="left:938px;top:0;width:7px;height:341px;background:linear-gradient(#0000ac 0px,#0000cc 20px,#0000e5 22px,#0000f7 23px,#0035f9 24px,#009eff 25px,#00f4ff 26px,#00ff8f 27px,#00f618 28px,#00d000 29px,#026901 32px,#4d8b0e 34px,#b4da00 36px,#fef603 38px,#f09f20 40px,#ea6f2c 41px,#e2483c 43px,#e00040 48px,#d80045 62px,#e00840 68px,#e1463d 74px,#e75d32 78px,#ffff00 86px,#9ece00 90px,#408010 93px,#056a01 97px,#00ed00 113px,#00ff85 121px,#00feff 129px,#0099ff 142px,#0068fc 154px,#006ffd 172px,#00cdff 187px,#00fffb 193px,#00f61b 209px,#00f000 211px,#007100 230px,#0b6c03 232px,#3e7f10 236px,#a5d200 240px,#fffd01 245px,#ec8028 255px,#e55237 260px,#e02d40 265px,#e00040 269px,#a10067 307px,#98006e 341px)"></div>
<div class="a" style="left:945px;top:0;width:7px;height:341px;background:linear-gradient(#0000ad 0px,#0000cc 20px,#0000e5 22px,#0000f7 23px,#0035f9 24px,#009eff 25px,#00f4ff 26px,#00ff8f 27px,#00f618 28px,#00d000 29px,#026901 32px,#4d8b0e 34px,#b4da00 36px,#fef603 38px,#f09e21 40px,#ea6e2c 41px,#e2483c 43px,#e00140 48px,#d90045 62px,#e00440 67px,#e1433f 73px,#e85e31 78px,#fdf005 85px,#ffff00 86px,#9fcf00 90px,#408010 93px,#056a01 97px,#00f208 114px,#00ffb5 124px,#00fffe 129px,#009aff 142px,#0068fc 154px,#006ffd 172px,#00caff 186px,#00fffd 192px,#00f71f 208px,#00ec00 211px,#056a01 231px,#49870f 236px,#aed700 240px,#f8fc00 244px,#f3b31a 251px,#e75d32 258px,#e03040 265px,#df0041 270px,#a30066 307px,#9a006d 341px)"></div>
<div class="a" style="left:952px;top:0;width:7px;height:341px;background:linear-gradient(#0000ad 0px,#0000cc 20px,#0000e5 22px,#0000f7 23px,#0035f9 24px,#009eff 25px,#00f4ff 26px,#00ff8f 27px,#00f618 28px,#00d000 29px,#026901 32px,#4d8b0e 34px,#b3da00 36px,#fef603 38px,#f09d21 40px,#ea6d2d 41px,#e2483c 43px,#e00240 48px,#db0043 63px,#e00940 67px,#e1443e 73px,#e86030 78px,#fdf005 85px,#ffff00 86px,#9fcf00 90px,#408010 93px,#056a01 97px,#00f206 114px,#00ffb3 124px,#00fffc 129px,#0095ff 143px,#0068fc 154px,#0070fd 172px,#00d0ff 186px,#00feff 191px,#00f516 208px,#00e800 211px,#007300 229px,#157005 232px,#3c7e0f 235px,#a2d100 239px,#ffff00 244px,#e75c32 258px,#e03240 265px,#df0040 270px,#a40065 307px,#9a006c 341px)"></div>
<div class="a" style="left:959px;top:0;width:7px;height:341px;background:linear-gradient(#0000ad 0px,#0000cd 20px,#0000e5 22px,#0000f7 23px,#0035f9 24px,#009eff 25px,#00f4ff 26px,#00ff8f 27px,#00f618 28px,#00d000 29px,#026901 32px,#4d8b0e 34px,#b3da00 36px,#fef603 38px,#f09d21 40px,#ea6d2d 41px,#e2493c 43px,#e00340 48px,#da0044 62px,#e00c40 67px,#e1453d 73px,#e86130 78px,#fdf005 85px,#ffff00 86px,#9fcf00 90px,#408010 93px,#056a01 97px,#00f106 114px,#00ffa2 123px,#00fffb 129px,#0095ff 143px,#0068fc 154px,#0070fd 172px,#00d3ff 186px,#00fffc 191px,#00f71f 207px,#00ec00 210px,#007100 229px,#0b6c03 231px,#3f8010 235px,#a7d300 239px,#fffd01 244px,#e75c32 258px,#e03340 265px,#e00040 270px,#a50065 307px,#9b006c 341px)"></div>
<div class="a" style="left:966px;top:0;width:7px;height:341px;background:linear-gradient(#0000ad 0px,#0000cd 20px,#0000e5 22px,#0000f7 23px,#0035f9 24px,#009eff 25px,#00f4ff 26px,#00ff8f 27px,#00f618 28px,#00d000 29px,#026901 32px,#4d8b0e 34px,#b3da00 36px,#fef603 38px,#f09d21 40px,#ea6d2d 41px,#e2493c 43px,#e00340 48px,#da0044 62px,#e00c40 67px,#e1453d 73px,#e86230 78px,#fdf105 85px,#fdfe00 86px,#9ccc01 90px,#3e7f0f 93px,#026901 97px,#00f106 114px,#00ffa0 123px,#00fbff 130px,#009aff 143px,#006ffd 154px,#0077fe 172px,#00c8ff 185px,#00feff 191px,#00f515 208px,#00e800 211px,#026901 230px,#44840f 235px,#abd600 239px,#fefb02 244px,#e75b33 258px,#e03040 265px,#df0041 270px,#a50065 308px,#9b006c 341px)"></div>
<div class="a" style="left:973px;top:0;width:7px;height:341px;background:linear-gradient(#0000ae 0px,#0000cd 20px,#0000e5 22px,#0000f7 23px,#0035f9 24px,#009eff 25px,#00f4ff 26px,#00ff8f 27px,#00f618 28px,#00d000 29px,#026901 32px,#4d8b0e 34px,#b3da00 36px,#fef603 38px,#f09d21 40px,#ea6d2d 41px,#e2493c 43px,#e00340 48px,#db0044 62px,#e00c40 67px,#e1463d 73px,#e8632f 78px,#fdf304 85px,#fafd00 86px,#96c802 90px,#3b7e0f 93px,#006900 97px,#00f207 114px,#00ffad 124px,#00feff 130px,#00a0ff 143px,#007afe 155px,#0083ff 173px,#00cfff 186px,#00fffc 192px,#00f61a 208px,#00ef00 210px,#066a02 230px,#4e8b0e 235px,#9ecf00 238px,#fbfd00 243px,#f1a51e 251px,#e65933 258px,#e03840 264px,#df0041 270px,#a60064 308px,#9c006b 341px)"></div>
<div class="a" style="left:980px;top:0;width:7px;height:341px;background:linear-gradient(#0000ae 0px,#0000cd 20px,#0000e5 22px,#0000f7 23px,#0035f9 24px,#009eff 25px,#00f4ff 26px,#00ff8f 27px,#00f618 28px,#00d000 29px,#026901 32px,#4d8b0e 34px,#b3da00 36px,#fef603 38px,#f09d21 40px,#ea6d2d 41px,#e2493c 43px,#e00340 48px,#db0044 62px,#e00d40 67px,#e1463d 73px,#e9652f 78px,#fdf503 85px,#f7fb00 86px,#90c203 90px,#4d8b0e 92px,#096b02 96px,#00b200 105px,#00f208 114px,#00ffaa 124px,#00faff 131px,#00a2ff 144px,#0084ff 156px,#008fff 174px,#00d6ff 187px,#00fff8 193px,#00ff5e 204px,#00f103 210px,#006900 229px,#3f8010 234px,#a7d300 238px,#fffd01 243px,#e75c32 257px,#e03340 264px,#e00040 269px,#a80063 307px,#9d006a 341px)"></div>
<div class="a" style="left:987px;top:0;width:7px;height:341px;background:linear-gradient(#0000ae 0px,#0000ce 20px,#0000d1 21px,#0000f7 23px,#0035f9 24px,#009eff 25px,#00f4ff 26px,#00ff8f 27px,#00f618 28px,#00d000 29px,#026901 32px,#4d8b0e 34px,#b3da00 36px,#fef603 38px,#f09d21 40px,#ea6d2d 41px,#e2493c 43px,#e00340 48px,#db0044 62px,#e00d40 67px,#e2463d 73px,#e9672e 78px,#fef703 85px,#d9ec00 87px,#88bc04 90px,#44840f 92px,#046a01 96px,#00ee00 113px,#00ff89 122px,#00feff 131px,#00a7ff 145px,#008fff 157px,#009aff 175px,#00dbff 188px,#00fff7 194px,#00ff6a 204px,#00ed00 211px,#056a01 229px,#4c8a0e 234px,#9ccd01 237px,#fafc00 242px,#f3b419 249px,#e65933 257px,#e03840 263px,#df0041 269px,#a90063 308px,#9e0069 341px)"></div>
<div class="a" style="left:994px;top:0;width:7px;height:341px;background:linear-gradient(#0000ae 0px,#0000ce 20px,#0000d1 21px,#0000f7 23px,#0035f9 24px,#009eff 25px,#00f4ff 26px,#00ff8f 27px,#00f618 28px,#00d000 29px,#026901 32px,#4d8b0e 34px,#b3da00 36px,#fef603 38px,#f09d21 40px,#ea6d2d 41px,#e2493c 43px,#e00340 48px,#db0044 62px,#e00440 66px,#e2473d 73px,#e96a2e 78px,#fefa02 85px,#a2d100 89px,#3d7f0f 92px,#006900 96px,#00e100 111px,#00ef00 113px,#00ff98 123px,#00fffa 131px,#00acff 146px,#009aff 159px,#00a6ff 176px,#00e5ff 190px,#00fff6 195px,#00ff77 204px,#00f000 211px,#006900 228px,#408010 233px,#a7d400 237px,#fffd01 242px,#e75c32 256px,#e03240 263px,#e00040 268px,#ab0062 308px,#9f0068 341px)"></div>
<div class="a" style="left:1001px;top:0;width:7px;height:341px;background:linear-gradient(#0000af 0px,#0000ce 20px,#0000d1 21px,#0000f7 23px,#0035f9 24px,#009eff 25px,#00f4ff 26px,#00ff8f 27px,#00f618 28px,#00d000 29px,#026901 32px,#4d8b0e 34px,#b3da00 36px,#fef603 38px,#f09d21 40px,#ea6d2d 41px,#e2493c 43px,#e00340 48px,#db0044 62px,#e00540 66px,#e2473c 73px,#e96c2d 78px,#fcec06 84px,#fffc01 85px,#99ca01 89px,#387d0e 92px,#006d00 96px,#00f001 113px,#00ff97 123px,#00ffff 132px,#00b0ff 148px,#00a6ff 170px,#00d0ff 186px,#00feff 195px,#00ff96 203px,#00f105 211px,#056a01 228px,#4e8c0e 233px,#9ecf00 236px,#fafd00 241px,#f1a51e 249px,#e65934 256px,#e03740 262px,#df0041 268px,#ac0061 309px,#a10067 341px)"></div>
<div class="a" style="left:1008px;top:0;width:7px;height:341px;background:linear-gradient(#0000af 0px,#0000cf 20px,#0000d1 21px,#0000f7 23px,#0035f9 24px,#009eff 25px,#00f4ff 26px,#00ff8f 27px,#00f618 28px,#00d000 29px,#026901 32px,#4d8b0e 34px,#b3da00 36px,#fef603 38px,#f09d21 40px,#ea6d2d 41px,#e2493c 43px,#e00340 48px,#db0044 62px,#e00540 66px,#e2483c 73px,#e85e31 77px,#ffff00 85px,#90c303 89px,#47860f 91px,#036901 95px,#00f105 113px,#00ff8b 122px,#00fffc 132px,#00b6ff 150px,#00b9ff 177px,#00feff 196px,#00ffa4 203px,#00f71d 210px,#00ec00 212px,#006900 227px,#428210 232px,#a9d400 236px,#fffc01 241px,#e75b33 255px,#e03140 262px,#e00040 267px,#ad0060 309px,#a30066 341px)"></div>
<div class="a" style="left:1015px;top:0;width:7px;height:341px;background:linear-gradient(#0000af 0px,#0000d1 21px,#0000f7 23px,#0035f9 24px,#009eff 25px,#00f4ff 26px,#00ff8f 27px,#00f618 28px,#00d000 29px,#026901 32px,#4d8b0e 34px,#b3da00 36px,#fef603 38px,#f09d21 40px,#ea6d2d 41px,#e2493c 43px,#e00340 48px,#db0043 62px,#e00640 66px,#e2483c 73px,#e85f31 77px,#fdf105 84px,#fbfd00 85px,#aad500 88px,#3f7f10 91px,#006a00 95px,#00e700 111px,#00f618 114px,#00ffca 127px,#00feff 133px,#00bdff 152px,#00c6ff 179px,#00ffff 197px,#00ffb0 203px,#00f410 211px,#00e500 213px,#056a01 227px,#508d0d 232px,#a0d000 235px,#fbfd00 240px,#f1a51e 248px,#e65834 255px,#e03640 261px,#df0041 267px,#af005f 309px,#a50065 341px)"></div>
<div class="a" style="left:1022px;top:0;width:7px;height:341px;background:linear-gradient(#0000af 0px,#0000d1 21px,#0000f7 23px,#0035f9 24px,#009eff 25px,#00f4ff 26px,#00ff8f 27px,#00f618 28px,#00d000 29px,#026901 32px,#4d8b0e 34px,#b3da00 36px,#fef603 38px,#f09d21 40px,#ea6d2d 41px,#e2493c 43px,#e00340 48px,#db0043 62px,#e00640 66px,#e1443e 72px,#e86030 77px,#fdf304 84px,#f7fb00 85px,#a4d200 88px,#3a7e0e 91px,#006d00 95px,#00f000 112px,#00ff91 122px,#00fff8 132px,#00c6ff 154px,#00d4ff 182px,#00fffe 198px,#00ffaa 204px,#00f515 211px,#00f000 212px,#006a00 226px,#418110 231px,#a8d400 235px,#fffd01 240px,#e75b32 254px,#e03140 261px,#df0041 267px,#b0005e 310px,#a70064 341px)"></div>
<div class="a" style="left:1029px;top:0;width:7px;height:341px;background:linear-gradient(#0000b0 0px,#0000d1 21px,#0000f7 23px,#0035f9 24px,#009eff 25px,#00f4ff 26px,#00ff8f 27px,#00f618 28px,#00d000 29px,#026901 32px,#4d8b0e 34px,#b3da00 36px,#fef603 38px,#f09d21 40px,#ea6d2d 41px,#e2493c 43px,#e00340 48px,#db0043 62px,#e00740 66px,#e1443e 72px,#e86130 77px,#fef503 84px,#f4fa00 85px,#a0d000 88px,#518e0d 90px,#136f05 93px,#006f00 95px,#00f103 112px,#00ffa2 123px,#00ffff 133px,#00d1ff 154px,#00deff 184px,#00fffb 199px,#00ffa1 205px,#00f102 212px,#036901 226px,#4b8a0e 231px,#9bcc01 234px,#f7fb00 239px,#f3b519 246px,#e65933 254px,#e02d40 261px,#e00040 266px,#b0005e 312px,#a80063 341px)"></div>
<div class="a" style="left:1036px;top:0;width:7px;height:341px;background:linear-gradient(#0000b0 0px,#0000d1 21px,#0000f7 23px,#0035f9 24px,#009eff 25px,#00f4ff 26px,#00ff8f 27px,#00f618 28px,#00d000 29px,#026901 32px,#4d8b0e 34px,#b3da00 36px,#fef603 38px,#f09d21 40px,#ea6d2d 41px,#e2493c 43px,#e00340 48px,#db0043 62px,#e00740 66px,#e1443e 72px,#e86230 77px,#fef703 84px,#f2f800 85px,#9bcc01 88px,#4c8a0e 90px,#016800 94px,#00e600 110px,#00f515 113px,#00ffbb 125px,#00ffff 133px,#00d8ff 155px,#00e8ff 189px,#00feff 199px,#00ffba 204px,#00f61c 211px,#00f105 212px,#066a02 226px,#3c7f0f 230px,#a2d100 234px,#fcfe00 239px,#f1a31f 247px,#e75d32 253px,#e03540 260px,#df0040 266px,#b1005e 312px,#a90062 341px)"></div>
<div class="a" style="left:1043px;top:0;width:7px;height:341px;background:linear-gradient(#0000b0 0px,#0000d1 21px,#0000f7 23px,#0035f9 24px,#009eff 25px,#00f4ff 26px,#00ff8f 27px,#00f618 28px,#00d000 29px,#026901 32px,#4d8b0e 34px,#b3da00 36px,#fef603 38px,#f09d21 40px,#ea6d2d 41px,#e2493c 43px,#e00340 48px,#db0043 62px,#e00740 66px,#e1453e 72px,#e8632f 77px,#fef802 84px,#d3e900 86px,#97c802 88px,#48860f 90px,#006800 94px,#00e000 109px,#00f208 112px,#00ff99 122px,#00fff9 132px,#00d8ff 156px,#00eaff 190px,#00fffc 199px,#00ffa0 205px,#00f514 211px,#00ef00 212px,#006b00 225px,#3f8010 230px,#a6d300 234px,#fffe00 239px,#e75b32 253px,#e03140 260px,#df0041 266px,#b1005e 313px,#aa0062 341px)"></div>
<div class="a" style="left:1050px;top:0;width:7px;height:341px;background:linear-gradient(#0000b0 0px,#0000d1 21px,#0000f7 23px,#0035f9 24px,#009eff 25px,#00f4ff 26px,#00ff8f 27px,#00f618 28px,#00d000 29px,#026901 32px,#4d8b0e 34px,#b3da00 36px,#fef603 38px,#f09d21 40px,#ea6d2d 41px,#e2493c 43px,#e00340 48px,#db0043 62px,#e00840 66px,#e1453d 72px,#e9652f 77px,#fefa02 84px,#b2d900 87px,#428210 90px,#006a00 94px,#00e700 110px,#00f20a 112px,#00ff9a 122px,#00fffa 132px,#00d5ff 155px,#00e6ff 187px,#00fffb 198px,#00ffa0 204px,#00f618 210px,#00f001 211px,#036901 225px,#4a880e 230px,#add600 234px,#fefb01 239px,#e75e31 252px,#e03540 259px,#df0040 265px,#b2005d 313px,#ab0062 341px)"></div>
<div class="a" style="left:1057px;top:0;width:7px;height:341px;background:linear-gradient(#0000b1 0px,#0000d1 21px,#0000f7 23px,#0035f9 24px,#009eff 25px,#00f4ff 26px,#00ff8f 27px,#00f618 28px,#00d000 29px,#026901 32px,#4d8b0e 34px,#b3da00 36px,#fef603 38px,#f09d21 40px,#ea6d2d 41px,#e2493c 43px,#e00340 48px,#db0043 62px,#e00940 66px,#e1463d 72px,#e9682e 77px,#fffe00 84px,#acd600 87px,#3d7f0f 90px,#006c00 94px,#00e800 110px,#00f30c 112px,#00ffb3 124px,#00fdff 133px,#00d1ff 155px,#00e2ff 184px,#00ffff 196px,#00ffac 202px,#00f515 209px,#00f000 210px,#006900 224px,#3f8010 229px,#a3d200 233px,#fdfe00 238px,#f0a020 246px,#e75a33 252px,#e02c40 259px,#df0040 264px,#b3005c 312px,#ac0061 341px)"></div>
<div class="a" style="left:1064px;top:0;width:7px;height:341px;background:linear-gradient(#0000b1 0px,#0000d1 21px,#0000f7 23px,#0035f9 24px,#009eff 25px,#00f4ff 26px,#00ff8f 27px,#00f618 28px,#00d000 29px,#026901 32px,#4d8b0e 34px,#b3da00 36px,#fef603 38px,#f09d21 40px,#ea6d2d 41px,#e2493c 43px,#e00340 48px,#db0043 62px,#e00a40 66px,#e2463d 72px,#ea6c2d 77px,#fdf105 83px,#fbfd00 84px,#a5d200 87px,#397d0e 90px,#066a01 93px,#00f000 111px,#00ff90 121px,#00fff6 131px,#00d1ff 149px,#00d4ff 176px,#00fff7 195px,#00ff8e 202px,#00f30f 208px,#00e400 210px,#086b02 224px,#4e8c0e 229px,#aed700 233px,#fefb01 238px,#ea6f2c 249px,#e02c40 258px,#e00040 263px,#b5005b 310px,#ad0060 341px)"></div>
<div class="a" style="left:1071px;top:0;width:7px;height:341px;background:linear-gradient(#0000b1 0px,#0000d1 21px,#0000f7 23px,#0035f9 24px,#009eff 25px,#00f4ff 26px,#00ff8f 27px,#00f618 28px,#00d000 29px,#026901 32px,#4d8b0e 34px,#b3da00 36px,#fef603 38px,#f09d21 40px,#ea6d2d 41px,#e2493c 43px,#e00340 48px,#db0043 62px,#e00040 65px,#e2473d 72px,#e85e31 76px,#fef503 83px,#f4f900 84px,#9dcd01 87px,#4e8b0e 89px,#026900 93px,#00f103 111px,#00ff9f 122px,#00ffff 132px,#00c8ff 152px,#00d4ff 177px,#00fff7 193px,#00ffa5 199px,#00f61a 206px,#00ea00 208px,#056a01 223px,#47860f 228px,#a7d300 232px,#ffff00 237px,#ef9b21 245px,#e75c32 250px,#e02b40 257px,#df0040 262px,#b5005b 312px,#ae005f 341px)"></div>
<div class="a" style="left:1078px;top:0;width:7px;height:341px;background:linear-gradient(#0000b1 0px,#0000d1 21px,#0000f7 23px,#0035f9 24px,#009eff 25px,#00f4ff 26px,#00ff8f 27px,#00f618 28px,#00d000 29px,#026901 32px,#4d8b0e 34px,#b3da00 36px,#fef603 38px,#f09d21 40px,#ea6d2d 41px,#e2493c 43px,#e00340 48px,#db0043 62px,#e00c40 66px,#e2483c 72px,#e86030 76px,#fefa02 83px,#b3d900 86px,#44830f 89px,#006900 93px,#00d900 107px,#00f207 111px,#00ff95 121px,#00fffa 131px,#00c3ff 151px,#00cfff 175px,#00fff7 191px,#00ff97 198px,#00ef00 206px,#036901 222px,#408010 227px,#a1d000 231px,#f8fb00 236px,#f7cc11 241px,#e75c32 249px,#e03640 255px,#df0040 261px,#b7005a 311px,#b0005f 341px)"></div>
<div class="a" style="left:1085px;top:0;width:7px;height:341px;background:linear-gradient(#0000b1 0px,#0000d1 21px,#0000f7 23px,#0035f9 24px,#009eff 25px,#00f4ff 26px,#00ff8f 27px,#00f618 28px,#00d000 29px,#026901 32px,#4d8b0e 34px,#b3da00 36px,#fef603 38px,#f09d21 40px,#ea6d2d 41px,#e2493c 43px,#e00340 48px,#db0043 62px,#e00d40 66px,#e1443e 71px,#e8642f 76px,#fffe00 83px,#abd600 86px,#3d7f0f 89px,#006c00 93px,#00e100 108px,#00f20a 111px,#00ff97 121px,#00fffd 131px,#00bfff 150px,#00c8ff 172px,#00fff7 189px,#00ff8a 197px,#00f209 204px,#00ab00 213px,#016800 221px,#3c7e0f 226px,#abd500 231px,#fffd01 236px,#f1a31f 243px,#e75d31 248px,#e03640 254px,#df0041 260px,#b7005a 313px,#b1005e 341px)"></div>
<div class="a" style="left:1092px;top:0;width:7px;height:341px;background:linear-gradient(#0000b2 0px,#0000d1 21px,#0000f7 23px,#0035f9 24px,#009eff 25px,#00f4ff 26px,#00ff8f 27px,#00f618 28px,#00d000 29px,#026901 32px,#4d8b0e 34px,#b3da00 36px,#fef603 38px,#f09d21 40px,#ea6d2d 41px,#e2493c 43px,#e00340 48px,#db0043 62px,#e00e40 66px,#e1443e 71px,#e9672e 76px,#fdf005 82px,#fbfd00 83px,#a5d200 86px,#397d0e 89px,#066a01 92px,#00ef00 110px,#00ff8c 120px,#00ffff 131px,#00bcff 149px,#00c4ff 171px,#00fff9 187px,#00ff90 195px,#00f103 203px,#006a00 220px,#46850f 226px,#a3d200 230px,#f9fc00 235px,#f4b918 241px,#e85f31 247px,#e03740 253px,#df0041 259px,#b80059 314px,#b2005d 341px)"></div>
<div class="a" style="left:1099px;top:0;width:7px;height:341px;background:linear-gradient(#0000b2 0px,#0000d1 21px,#0000f7 23px,#0035f9 24px,#009eff 25px,#00f4ff 26px,#00ff8f 27px,#00f618 28px,#00d000 29px,#026901 32px,#4d8b0e 34px,#b3da00 36px,#fef603 38px,#f09d21 40px,#ea6d2d 41px,#e2493c 43px,#e00340 48px,#db0043 62px,#e00e40 66px,#e1453e 71px,#e96a2d 76px,#fdf404 82px,#f6fa00 83px,#9fcf00 86px,#508d0d 88px,#036901 92px,#00f000 110px,#00ff8e 120px,#00fff9 130px,#00baff 148px,#00c1ff 170px,#00fffd 185px,#00ff9a 193px,#00f412 201px,#00e900 203px,#046a01 220px,#3e7f0f 225px,#abd500 230px,#fffe00 235px,#f3b11a 241px,#e75b33 247px,#e02d40 253px,#e00040 258px,#b90059 313px,#b3005c 341px)"></div>
<div class="a" style="left:1106px;top:0;width:7px;height:341px;background:linear-gradient(#0000b2 0px,#0000d1 21px,#0000f7 23px,#0035f9 24px,#009eff 25px,#00f4ff 26px,#00ff8f 27px,#00f618 28px,#00d000 29px,#026901 32px,#4d8b0e 34px,#b3da00 36px,#fef603 38px,#f09d21 40px,#ea6d2d 41px,#e2493c 43px,#e00340 48px,#dc0043 62px,#e00f40 66px,#e1453d 71px,#ea6c2d 76px,#fef603 82px,#f2f800 83px,#99cb01 86px,#4b890e 88px,#016800 92px,#00de00 107px,#00f102 110px,#00ff9d 121px,#00fcff 131px,#00b8ff 148px,#00beff 169px,#00fffd 184px,#00ff8a 193px,#00f104 201px,#006900 219px,#44830f 225px,#a0d000 229px,#fefb01 235px,#f2ab1c 241px,#e65834 247px,#e03340 252px,#e00040 257px,#b90059 315px,#b4005c 341px)"></div>
<div class="a" style="left:1113px;top:0;width:7px;height:341px;background:linear-gradient(#0000b2 0px,#0000d1 21px,#0000f7 23px,#0035f9 24px,#009eff 25px,#00f4ff 26px,#00ff8f 27px,#00f618 28px,#00d000 29px,#026901 32px,#4d8b0e 34px,#b3da00 36px,#fef603 38px,#f09d21 40px,#ea6d2d 41px,#e2493c 43px,#e00340 48px,#dc0043 62px,#e00f40 66px,#e1453d 71px,#ea6d2d 76px,#fef703 82px,#d4ea00 84px,#98c901 86px,#4a880e 88px,#016800 92px,#00d000 105px,#00f103 110px,#00ff9d 121px,#00fffb 130px,#00b9ff 147px,#00beff 169px,#00fffa 184px,#00ff86 193px,#00f001 201px,#006900 219px,#46850f 225px,#a1d100 229px,#fefa02 235px,#ef9922 242px,#e65734 247px,#e03140 252px,#e00040 257px,#ba0059 314px,#b4005c 341px)"></div>
<div class="a" style="left:1120px;top:0;width:7px;height:341px;background:linear-gradient(#0000b2 0px,#0000d1 21px,#0000f7 23px,#0035f9 24px,#009eff 25px,#00f4ff 26px,#00ff8f 27px,#00f618 28px,#00d000 29px,#026901 32px,#4d8b0e 34px,#b3da00 36px,#fef603 38px,#f09d21 40px,#ea6d2d 41px,#e2493c 43px,#e00340 48px,#dc0043 62px,#e00f40 66px,#e1453d 71px,#ea6d2d 76px,#fef703 82px,#d4ea00 84px,#98c901 86px,#4a880e 88px,#016800 92px,#00d000 105px,#00f103 110px,#00ff9d 121px,#00fffb 130px,#00b9ff 147px,#00beff 169px,#00fffa 184px,#00ff86 193px,#00f001 201px,#006900 219px,#46850f 225px,#a1d100 229px,#fefa02 235px,#ef9922 242px,#e65734 247px,#e03140 252px,#e00040 257px,#ba0059 314px,#b4005c 341px)"></div>
<div class="a" style="left:1127px;top:0;width:7px;height:341px;background:linear-gradient(#0000b2 0px,#0000d1 21px,#0000f7 23px,#0035f9 24px,#009eff 25px,#00f4ff 26px,#00ff8f 27px,#00f618 28px,#00d000 29px,#026901 32px,#4d8b0e 34px,#b3da00 36px,#fef603 38px,#f09d21 40px,#ea6d2d 41px,#e2493c 43px,#e00340 48px,#dc0043 62px,#e00f40 66px,#e1453d 71px,#ea6d2d 76px,#fef703 82px,#d4ea00 84px,#98c901 86px,#4a880e 88px,#016800 92px,#00d000 105px,#00f103 110px,#00ff9d 121px,#00fffb 130px,#00b9ff 147px,#00beff 169px,#00fffa 184px,#00ff86 193px,#00f001 201px,#006900 219px,#46850f 225px,#a1d100 229px,#fefa02 235px,#ef9922 242px,#e65734 247px,#e03140 252px,#e00040 257px,#ba0059 314px,#b4005c 341px)"></div>
<div class="a" style="left:1134px;top:0;width:7px;height:341px;background:linear-gradient(#0000b3 0px,#0000d1 21px,#0000f7 23px,#0035f9 24px,#009eff 25px,#00f4ff 26px,#00ff8f 27px,#00f618 28px,#00d000 29px,#026901 32px,#4d8b0e 34px,#b3da00 36px,#fef603 38px,#f09d21 40px,#ea6d2d 41px,#e2493c 43px,#e00340 48px,#dc0043 62px,#e00f40 66px,#e1453d 71px,#ea6d2d 76px,#fef703 82px,#d4ea00 84px,#98c901 86px,#4a880e 88px,#016800 92px,#00d000 105px,#00f103 110px,#00ff9d 121px,#00fffb 130px,#00b9ff 147px,#00beff 169px,#00fffa 184px,#00ff86 193px,#00f001 201px,#006900 219px,#46850f 225px,#a1d100 229px,#fefa02 235px,#ef9922 242px,#e65734 247px,#e03140 252px,#e00040 257px,#ba0059 314px,#b4005c 341px)"></div>
<div class="a" style="left:1141px;top:0;width:7px;height:341px;background:linear-gradient(#0000b3 0px,#0000d1 21px,#0000f7 23px,#0035f9 24px,#009eff 25px,#00f4ff 26px,#00ff8f 27px,#00f618 28px,#00d000 29px,#026901 32px,#4d8b0e 34px,#b3da00 36px,#fef603 38px,#f09d21 40px,#ea6d2d 41px,#e2493c 43px,#e00340 48px,#dc0043 62px,#e00f40 66px,#e1453d 71px,#ea6d2d 76px,#fef703 82px,#d4ea00 84px,#98c901 86px,#4a880e 88px,#016800 92px,#00d000 105px,#00f103 110px,#00ff9d 121px,#00fffb 130px,#00b9ff 147px,#00beff 169px,#00fffa 184px,#00ff86 193px,#00f001 201px,#006900 219px,#46850f 225px,#a1d100 229px,#fefa02 235px,#ef9922 242px,#e65734 247px,#e03140 252px,#e00040 257px,#ba0059 314px,#b4005c 341px)"></div>
<div class="a" style="left:1148px;top:0;width:7px;height:341px;background:linear-gradient(#0000b3 0px,#0000d1 21px,#0000f7 23px,#0035f9 24px,#009eff 25px,#00f4ff 26px,#00ff8f 27px,#00f618 28px,#00d000 29px,#026901 32px,#4d8b0e 34px,#b3da00 36px,#fef603 38px,#f09d21 40px,#ea6d2d 41px,#e2493c 43px,#e00340 48px,#dc0043 62px,#e00f40 66px,#e1453d 71px,#ea6d2d 76px,#fef703 82px,#d4ea00 84px,#98c901 86px,#4a880e 88px,#016800 92px,#00d000 105px,#00f103 110px,#00ff9d 121px,#00fffb 130px,#00b9ff 147px,#00beff 169px,#00fffa 184px,#00ff86 193px,#00f001 201px,#006900 219px,#46850f 225px,#a1d100 229px,#fefa02 235px,#ef9922 242px,#e65734 247px,#e03140 252px,#e00040 257px,#ba0059 314px,#b4005c 341px)"></div>
<div class="a" style="left:1155px;top:0;width:7px;height:341px;background:linear-gradient(#0000b3 0px,#0000d1 21px,#0000f7 23px,#0035f9 24px,#009eff 25px,#00f4ff 26px,#00ff8f 27px,#00f618 28px,#00d000 29px,#026901 32px,#4d8b0e 34px,#b3da00 36px,#fef603 38px,#f09d21 40px,#ea6d2d 41px,#e2493c 43px,#e00340 48px,#dc0043 62px,#e00f40 66px,#e1453d 71px,#ea6d2d 76px,#fef703 82px,#d4ea00 84px,#98c901 86px,#4a880e 88px,#016800 92px,#00d000 105px,#00f103 110px,#00ff9d 121px,#00fffb 130px,#00b9ff 147px,#00beff 169px,#00fffa 184px,#00ff86 193px,#00f001 201px,#006900 219px,#46850f 225px,#a1d100 229px,#fefa02 235px,#ef9922 242px,#e65734 247px,#e03140 252px,#e00040 257px,#ba0059 314px,#b4005c 341px)"></div>
<div class="a" style="left:1162px;top:0;width:7px;height:341px;background:linear-gradient(#0000b3 0px,#0000d1 21px,#0000f7 23px,#0035f9 24px,#009eff 25px,#00f4ff 26px,#00ff8f 27px,#00f618 28px,#00d000 29px,#026901 32px,#4d8b0e 34px,#b3da00 36px,#fef603 38px,#f09d21 40px,#ea6d2d 41px,#e2493c 43px,#e00340 48px,#dc0043 62px,#e00f40 66px,#e1453d 71px,#ea6d2d 76px,#fef703 82px,#d4ea00 84px,#98c901 86px,#4a880e 88px,#016800 92px,#00d000 105px,#00f103 110px,#00ff9d 121px,#00fffb 130px,#00b9ff 147px,#00beff 169px,#00fffa 184px,#00ff86 193px,#00f001 201px,#006900 219px,#46850f 225px,#a1d100 229px,#fefa02 235px,#ef9922 242px,#e65734 247px,#e03140 252px,#e00040 257px,#ba0059 314px,#b4005c 341px)"></div>
<div class="a" style="left:1169px;top:0;width:7px;height:341px;background:linear-gradient(#0000b3 0px,#0000d1 21px,#0000f7 23px,#0035f9 24px,#009eff 25px,#00f4ff 26px,#00ff8f 27px,#00f618 28px,#00d000 29px,#026901 32px,#4d8b0e 34px,#b3da00 36px,#fef603 38px,#f09d21 40px,#ea6d2d 41px,#e2493c 43px,#e00340 48px,#dc0043 62px,#e00f40 66px,#e1453d 71px,#ea6d2d 76px,#fef703 82px,#d4ea00 84px,#98c901 86px,#4a880e 88px,#016800 92px,#00d000 105px,#00f103 110px,#00ff9d 121px,#00fffb 130px,#00b9ff 147px,#00beff 169px,#00fffa 184px,#00ff86 193px,#00f001 201px,#006900 219px,#46850f 225px,#a1d100 229px,#fefa02 235px,#ef9922 242px,#e65734 247px,#e03140 252px,#e00040 257px,#ba0059 314px,#b4005c 341px)"></div>
<div class="a" style="left:1176px;top:0;width:7px;height:341px;background:linear-gradient(#0000b3 0px,#0000d1 21px,#0000f7 23px,#0035f9 24px,#009eff 25px,#00f4ff 26px,#00ff8f 27px,#00f618 28px,#00d000 29px,#026901 32px,#4d8b0e 34px,#b3da00 36px,#fef603 38px,#f09d21 40px,#ea6d2d 41px,#e2493c 43px,#e00340 48px,#dc0043 62px,#e00f40 66px,#e1453d 71px,#ea6d2d 76px,#fef703 82px,#d4ea00 84px,#98c901 86px,#4a880e 88px,#016800 92px,#00d000 105px,#00f103 110px,#00ff9d 121px,#00fffb 130px,#00b9ff 147px,#00beff 169px,#00fffa 184px,#00ff86 193px,#00f001 201px,#006900 219px,#46850f 225px,#a1d100 229px,#fefa02 235px,#ef9922 242px,#e65734 247px,#e03140 252px,#e00040 257px,#ba0059 314px,#b4005c 341px)"></div>
<div class="a" style="left:1183px;top:0;width:7px;height:341px;background:linear-gradient(#0000b3 0px,#0000d1 21px,#0000f7 23px,#0035f9 24px,#009eff 25px,#00f4ff 26px,#00ff8f 27px,#00f618 28px,#00d000 29px,#026901 32px,#4d8b0e 34px,#b3da00 36px,#fef603 38px,#f09d21 40px,#ea6d2d 41px,#e2493c 43px,#e00340 48px,#dc0043 62px,#e00f40 66px,#e1453d 71px,#ea6d2d 76px,#fef703 82px,#d4ea00 84px,#98c901 86px,#4a880e 88px,#016800 92px,#00d000 105px,#00f103 110px,#00ff9d 121px,#00fffb 130px,#00b9ff 147px,#00beff 169px,#00fffa 184px,#00ff86 193px,#00f001 201px,#006900 219px,#46850f 225px,#a1d100 229px,#fefa02 235px,#ef9922 242px,#e65734 247px,#e03140 252px,#e00040 257px,#ba0059 314px,#b4005c 341px)"></div>
<div class="a" style="left:1190px;top:0;width:7px;height:341px;background:linear-gradient(#0000b3 0px,#0000d1 21px,#0000f7 23px,#0035f9 24px,#009eff 25px,#00f4ff 26px,#00ff8f 27px,#00f618 28px,#00d000 29px,#026901 32px,#4d8b0e 34px,#b3da00 36px,#fef603 38px,#f09d21 40px,#ea6d2d 41px,#e2493c 43px,#e00340 48px,#dc0043 62px,#e00f40 66px,#e1453d 71px,#ea6d2d 76px,#fef703 82px,#d4ea00 84px,#98c901 86px,#4a880e 88px,#016800 92px,#00d000 105px,#00f103 110px,#00ff9d 121px,#00fffb 130px,#00b9ff 147px,#00beff 169px,#00fffa 184px,#00ff86 193px,#00f001 201px,#006900 219px,#46850f 225px,#a1d100 229px,#fefa02 235px,#ef9922 242px,#e65734 247px,#e03140 252px,#e00040 257px,#ba0059 314px,#b4005c 341px)"></div>
<div class="a" style="left:0;top:0;width:1193px;height:24px;background:repeating-linear-gradient(90deg,rgba(0,0,30,0) 0px,rgba(0,0,30,0.32) 3.5px,rgba(0,0,30,0) 7.025px);background-position:-11.5px 0"></div>
</div>
<div class="a" style="left:1699px;top:1026px;width:24px;height:358px;background:linear-gradient(#6a0090 0px,#a80063 47px,#d50047 70px,#e00040 77px,#e04040 85px,#e8632f 96px,#fbe20a 114px,#ffff00 119px,#a1d000 128px,#3d7f0f 135px,#006800 143px,#00a700 155px,#00f000 171px,#00ff5b 179px,#00fffd 192px,#00b4ff 202px,#0074fe 212px,#0028fb 221px,#0000ff 226px,#000082 357px)"></div>
<svg width="1800" height="1460" viewBox="0 0 1800 1460" font-family="Liberation Sans, sans-serif"><g stroke="#000" stroke-width="1.2" fill="none">
<line x1="1596" y1="18.5" x2="1613" y2="18.5"/>
<rect x="1672.5" y="13.5" width="13" height="13"/>
<path d="M1675.5 13.5 V10.5 H1688.5 V23.5 H1685.5"/>
<path d="M1751 10.5 L1767 26.5 M1767 10.5 L1751 26.5"/>
</g>
<g>
<path d="M25 96 h7 l2 2 h10 v5 H30 l-5 10z" fill="#ffff60" stroke="#000" stroke-width="1.6"/>
<path d="M25 113 L31 103 H52 L44 113z" fill="#808000" stroke="#000" stroke-width="1.6"/>
<path d="M39 95 q6 -6 12 0" fill="none" stroke="#000" stroke-width="1.6"/><path d="M48 95 h5 v-4z" fill="#000"/>
</g>
<rect x="74" y="88.5" width="24.5" height="25" rx="2" fill="#000"/>
<rect x="78.5" y="89" width="15" height="12" fill="#f4f4f4"/><rect x="78.5" y="89" width="15" height="2" fill="#ff0000"/>
<rect x="82" y="105.5" width="12" height="8" fill="#c0c0c0"/><rect x="86" y="107.5" width="3" height="3" fill="#000"/>
<path d="M137 110 L156 92" stroke="#000" stroke-width="4"/><path d="M137 110 L156 92" stroke="#800000" stroke-width="1.6"/>
<path d="M140 93 L160 112" stroke="#000" stroke-width="4"/><path d="M140 93 L160 112" stroke="#808000" stroke-width="1.6"/>
<path d="M151 90 l5 -2 l6 5 l1 3 l-4 1 l-5 -3z" fill="#808000" stroke="#000" stroke-width="1.4"/>
<path d="M135.5 94 v-3 h3 v-2 h4 v3 l-3 3z" fill="#000"/>
<rect x="184.5" y="92.5" width="27" height="21" fill="#fff" stroke="#000" stroke-width="1.8"/>
<rect x="185.5" y="93.5" width="25" height="4" fill="#0000ff"/>
<g fill="#000"><rect x="187" y="100.0" width="4" height="1.6"/><rect x="193" y="100.0" width="4" height="1.6"/><rect x="199" y="100.0" width="4" height="1.6"/><rect x="205" y="100.0" width="4" height="1.6"/><rect x="187" y="103.4" width="4" height="1.6"/><rect x="193" y="103.4" width="4" height="1.6"/><rect x="199" y="103.4" width="4" height="1.6"/><rect x="205" y="103.4" width="4" height="1.6"/><rect x="187" y="106.8" width="4" height="1.6"/><rect x="193" y="106.8" width="4" height="1.6"/><rect x="199" y="106.8" width="4" height="1.6"/><rect x="205" y="106.8" width="4" height="1.6"/><rect x="187" y="110.2" width="4" height="1.6"/><rect x="193" y="110.2" width="4" height="1.6"/><rect x="199" y="110.2" width="4" height="1.6"/><rect x="205" y="110.2" width="4" height="1.6"/></g>
<rect x="245" y="94.5" width="26" height="17" fill="#a8a8a8" stroke="#000" stroke-width="1.8"/>
<g><rect x="247.0" y="96.5" width="3.4" height="2.4" fill="#c8c0f0"/><rect x="251.8" y="96.5" width="3.4" height="2.4" fill="#c8c0f0"/><rect x="256.6" y="96.5" width="3.4" height="2.4" fill="#f0e0a0"/><rect x="261.4" y="96.5" width="3.4" height="2.4" fill="#f8c020"/><rect x="266.2" y="96.5" width="3.4" height="2.4" fill="#f8c020"/><rect x="247.0" y="100.1" width="3.4" height="2.4" fill="#c8c0f0"/><rect x="251.8" y="100.1" width="3.4" height="2.4" fill="#c8c0f0"/><rect x="256.6" y="100.1" width="3.4" height="2.4" fill="#f0e0a0"/><rect x="261.4" y="100.1" width="3.4" height="2.4" fill="#f8c020"/><rect x="266.2" y="100.1" width="3.4" height="2.4" fill="#f8c020"/><rect x="247.0" y="103.7" width="3.4" height="2.4" fill="#c8c0f0"/><rect x="251.8" y="103.7" width="3.4" height="2.4" fill="#f09090"/><rect x="256.6" y="103.7" width="3.4" height="2.4" fill="#f09090"/><rect x="261.4" y="103.7" width="3.4" height="2.4" fill="#f0e0a0"/><rect x="266.2" y="103.7" width="3.4" height="2.4" fill="#f8c020"/><rect x="247.0" y="107.3" width="3.4" height="2.4" fill="#f09090"/><rect x="251.8" y="107.3" width="3.4" height="2.4" fill="#f09090"/><rect x="256.6" y="107.3" width="3.4" height="2.4" fill="#f09090"/><rect x="261.4" y="107.3" width="3.4" height="2.4" fill="#f09090"/><rect x="266.2" y="107.3" width="3.4" height="2.4" fill="#f09090"/></g>
<path d="M285.5 125 V79.5 H333.5" fill="none" stroke="#fff" stroke-width="1.5"/>
<path d="M285.5 125 H333.5 V79.5" fill="none" stroke="#a0a0a0" stroke-width="2"/>
<path d="M335.5 125 V79.5 H383.5" fill="none" stroke="#fff" stroke-width="1.5"/>
<path d="M335.5 125 H383.5 V79.5" fill="none" stroke="#a0a0a0" stroke-width="2"/>
<g><rect x="295.5" y="94.5" width="27" height="17" fill="#f09090" stroke="#000" stroke-width="1.8"/>
<path d="M296.5 95.5 h25 v3 h-4 l-2 -1 h-12 l-2 2 h-5z" fill="#60d880"/>
<path d="M296.5 99.5 h5 l2 -2 h12 l2 1 h4 v8 h-6 l-2 -2 h-5 l-2 2 h-10z" fill="#00a0e8"/></g>
<g><rect x="345.5" y="94.5" width="27" height="17" fill="#f09090" stroke="#000" stroke-width="1.8"/>
<path d="M346.5 95.5 h25 v10 h-8 v-5 h-5 v-3 h-12z" fill="#00a0e8"/>
<path d="M364 95.5 h7.5 v5 h-7.5z" fill="#60d880"/>
<rect x="346.5" y="105" width="6" height="5.5" fill="#ffff00"/></g>
<rect x="419" y="89" width="18" height="26.5" rx="2" fill="#008000" stroke="#000" stroke-width="1.6"/>
<rect x="422" y="93" width="12" height="5" fill="#000"/><rect x="427" y="94.5" width="2" height="2" fill="#20d0d0"/><rect x="430" y="94.5" width="2" height="2" fill="#20d0d0"/>
<g fill="#000"><rect x="422.0" y="101.0" width="1.8" height="1.8"/><rect x="425.6" y="101.0" width="1.8" height="1.8"/><rect x="429.2" y="101.0" width="1.8" height="1.8"/><rect x="432.8" y="101.0" width="1.8" height="1.8"/><rect x="422.0" y="104.2" width="1.8" height="1.8"/><rect x="425.6" y="104.2" width="1.8" height="1.8"/><rect x="429.2" y="104.2" width="1.8" height="1.8"/><rect x="432.8" y="104.2" width="1.8" height="1.8"/><rect x="422.0" y="107.4" width="1.8" height="1.8"/><rect x="425.6" y="107.4" width="1.8" height="1.8"/><rect x="429.2" y="107.4" width="1.8" height="1.8"/><rect x="432.8" y="107.4" width="1.8" height="1.8"/><rect x="422.0" y="110.6" width="1.8" height="1.8"/><rect x="425.6" y="110.6" width="1.8" height="1.8"/><rect x="429.2" y="110.6" width="1.8" height="1.8"/><rect x="432.8" y="110.6" width="1.8" height="1.8"/></g>
<rect x="428.5" y="110.5" width="5" height="1.8" fill="#ff2020"/>
<path d="M464.5 104.5 V93 Q465 89 468 89 H471.5 L475.5 97.5 L478 89 H482 L485.5 93.5 L490.5 99.5 V112 L487 115 H483 L479 106 L476.5 115 H472.5 L469 111 V101.5 Z" fill="#fff" stroke="#000" stroke-width="1.5" stroke-linejoin="round"/>
<path d="M469.3 89.8 H474 L478 101 L479 109.5 L476.5 114.2 H474.3 L471.5 101 Z M478.3 89.8 H482.5 L487.5 101 L489.8 100.5 V111.8 L487 114.2 H483.5 L482 101 Z" fill="#0000f0"/>
<path d="M517 84 H533.5 L525 93 H532.5 L512 110.5 L519.5 99 H509 Z" fill="#f8d030" stroke="#d8a000" stroke-width="1.2" stroke-linejoin="round"/>
<path d="M519 86 H529 L522 94 H528" fill="none" stroke="#fff8c0" stroke-width="1.5"/>
<text x="519.5" y="118.8" font-size="16" fill="#f01030" font-family="Liberation Sans" transform="translate(519.5 0) scale(1.05 1) translate(-519.5 0)" stroke="#f01030" stroke-width="0.8">1D</text>
<path d="M567 97 q8 -6 14 0 q3 6 -4 13" fill="none" stroke="#4080e0" stroke-width="3.2"/>
<path d="M563 92 v9 h9z" fill="#4080e0"/>
<defs><marker id="o0" markerWidth="10" markerHeight="10" refX="5" refY="5" markerUnits="userSpaceOnUse"><circle cx="5" cy="5" r="2.1" fill="none" stroke="#ff0000" stroke-width="1.7"/></marker><marker id="ou0" markerWidth="10" markerHeight="10" refX="5" refY="5" markerUnits="userSpaceOnUse"><circle cx="5" cy="5" r="2.6" fill="none" stroke="#ff0000" stroke-width="1.0"/></marker><marker id="o1" markerWidth="10" markerHeight="10" refX="5" refY="5" markerUnits="userSpaceOnUse"><circle cx="5" cy="5" r="2.1" fill="none" stroke="#f60900" stroke-width="1.7"/></marker><marker id="ou1" markerWidth="10" markerHeight="10" refX="5" refY="5" markerUnits="userSpaceOnUse"><circle cx="5" cy="5" r="2.6" fill="none" stroke="#f60900" stroke-width="1.0"/></marker><marker id="o2" markerWidth="10" markerHeight="10" refX="5" refY="5" markerUnits="userSpaceOnUse"><circle cx="5" cy="5" r="2.1" fill="none" stroke="#ed1200" stroke-width="1.7"/></marker><marker id="ou2" markerWidth="10" markerHeight="10" refX="5" refY="5" markerUnits="userSpaceOnUse"><circle cx="5" cy="5" r="2.6" fill="none" stroke="#ed1200" stroke-width="1.0"/></marker><marker id="o3" markerWidth="10" markerHeight="10" refX="5" refY="5" markerUnits="userSpaceOnUse"><circle cx="5" cy="5" r="2.1" fill="none" stroke="#e41b00" stroke-width="1.7"/></marker><marker id="ou3" markerWidth="10" markerHeight="10" refX="5" refY="5" markerUnits="userSpaceOnUse"><circle cx="5" cy="5" r="2.6" fill="none" stroke="#e41b00" stroke-width="1.0"/></marker><marker id="o4" markerWidth="10" markerHeight="10" refX="5" refY="5" markerUnits="userSpaceOnUse"><circle cx="5" cy="5" r="2.1" fill="none" stroke="#db2400" stroke-width="1.7"/></marker><marker id="ou4" markerWidth="10" markerHeight="10" refX="5" refY="5" markerUnits="userSpaceOnUse"><circle cx="5" cy="5" r="2.6" fill="none" stroke="#db2400" stroke-width="1.0"/></marker><marker id="o5" markerWidth="10" markerHeight="10" refX="5" refY="5" markerUnits="userSpaceOnUse"><circle cx="5" cy="5" r="2.1" fill="none" stroke="#d12e00" stroke-width="1.7"/></marker><marker id="ou5" markerWidth="10" markerHeight="10" refX="5" refY="5" markerUnits="userSpaceOnUse"><circle cx="5" cy="5" r="2.6" fill="none" stroke="#d12e00" stroke-width="1.0"/></marker><marker id="o6" markerWidth="10" markerHeight="10" refX="5" refY="5" markerUnits="userSpaceOnUse"><circle cx="5" cy="5" r="2.1" fill="none" stroke="#c83700" stroke-width="1.7"/></marker><marker id="ou6" markerWidth="10" markerHeight="10" refX="5" refY="5" markerUnits="userSpaceOnUse"><circle cx="5" cy="5" r="2.6" fill="none" stroke="#c83700" stroke-width="1.0"/></marker><marker id="o7" markerWidth="10" markerHeight="10" refX="5" refY="5" markerUnits="userSpaceOnUse"><circle cx="5" cy="5" r="2.1" fill="none" stroke="#bf4000" stroke-width="1.7"/></marker><marker id="ou7" markerWidth="10" markerHeight="10" refX="5" refY="5" markerUnits="userSpaceOnUse"><circle cx="5" cy="5" r="2.6" fill="none" stroke="#bf4000" stroke-width="1.0"/></marker><marker id="o8" markerWidth="10" markerHeight="10" refX="5" refY="5" markerUnits="userSpaceOnUse"><circle cx="5" cy="5" r="2.1" fill="none" stroke="#b64900" stroke-width="1.7"/></marker><marker id="ou8" markerWidth="10" markerHeight="10" refX="5" refY="5" markerUnits="userSpaceOnUse"><circle cx="5" cy="5" r="2.6" fill="none" stroke="#b64900" stroke-width="1.0"/></marker><marker id="o9" markerWidth="10" markerHeight="10" refX="5" refY="5" markerUnits="userSpaceOnUse"><circle cx="5" cy="5" r="2.1" fill="none" stroke="#ad5200" stroke-width="1.7"/></marker><marker id="ou9" markerWidth="10" markerHeight="10" refX="5" refY="5" markerUnits="userSpaceOnUse"><circle cx="5" cy="5" r="2.6" fill="none" stroke="#ad5200" stroke-width="1.0"/></marker><marker id="o10" markerWidth="10" markerHeight="10" refX="5" refY="5" markerUnits="userSpaceOnUse"><circle cx="5" cy="5" r="2.1" fill="none" stroke="#a45b00" stroke-width="1.7"/></marker><marker id="ou10" markerWidth="10" markerHeight="10" refX="5" refY="5" markerUnits="userSpaceOnUse"><circle cx="5" cy="5" r="2.6" fill="none" stroke="#a45b00" stroke-width="1.0"/></marker><marker id="o11" markerWidth="10" markerHeight="10" refX="5" refY="5" markerUnits="userSpaceOnUse"><circle cx="5" cy="5" r="2.1" fill="none" stroke="#9b6400" stroke-width="1.7"/></marker><marker id="ou11" markerWidth="10" markerHeight="10" refX="5" refY="5" markerUnits="userSpaceOnUse"><circle cx="5" cy="5" r="2.6" fill="none" stroke="#9b6400" stroke-width="1.0"/></marker><marker id="o12" markerWidth="10" markerHeight="10" refX="5" refY="5" markerUnits="userSpaceOnUse"><circle cx="5" cy="5" r="2.1" fill="none" stroke="#926d00" stroke-width="1.7"/></marker><marker id="ou12" markerWidth="10" markerHeight="10" refX="5" refY="5" markerUnits="userSpaceOnUse"><circle cx="5" cy="5" r="2.6" fill="none" stroke="#926d00" stroke-width="1.0"/></marker><marker id="o13" markerWidth="10" markerHeight="10" refX="5" refY="5" markerUnits="userSpaceOnUse"><circle cx="5" cy="5" r="2.1" fill="none" stroke="#897600" stroke-width="1.7"/></marker><marker id="ou13" markerWidth="10" markerHeight="10" refX="5" refY="5" markerUnits="userSpaceOnUse"><circle cx="5" cy="5" r="2.6" fill="none" stroke="#897600" stroke-width="1.0"/></marker><marker id="o14" markerWidth="10" markerHeight="10" refX="5" refY="5" markerUnits="userSpaceOnUse"><circle cx="5" cy="5" r="2.1" fill="none" stroke="#808000" stroke-width="1.7"/></marker><marker id="ou14" markerWidth="10" markerHeight="10" refX="5" refY="5" markerUnits="userSpaceOnUse"><circle cx="5" cy="5" r="2.6" fill="none" stroke="#808000" stroke-width="1.0"/></marker><marker id="o15" markerWidth="10" markerHeight="10" refX="5" refY="5" markerUnits="userSpaceOnUse"><circle cx="5" cy="5" r="2.1" fill="none" stroke="#768900" stroke-width="1.7"/></marker><marker id="ou15" markerWidth="10" markerHeight="10" refX="5" refY="5" markerUnits="userSpaceOnUse"><circle cx="5" cy="5" r="2.6" fill="none" stroke="#768900" stroke-width="1.0"/></marker><marker id="o16" markerWidth="10" markerHeight="10" refX="5" refY="5" markerUnits="userSpaceOnUse"><circle cx="5" cy="5" r="2.1" fill="none" stroke="#6d9200" stroke-width="1.7"/></marker><marker id="ou16" markerWidth="10" markerHeight="10" refX="5" refY="5" markerUnits="userSpaceOnUse"><circle cx="5" cy="5" r="2.6" fill="none" stroke="#6d9200" stroke-width="1.0"/></marker><marker id="o17" markerWidth="10" markerHeight="10" refX="5" refY="5" markerUnits="userSpaceOnUse"><circle cx="5" cy="5" r="2.1" fill="none" stroke="#649b00" stroke-width="1.7"/></marker><marker id="ou17" markerWidth="10" markerHeight="10" refX="5" refY="5" markerUnits="userSpaceOnUse"><circle cx="5" cy="5" r="2.6" fill="none" stroke="#649b00" stroke-width="1.0"/></marker><marker id="o18" markerWidth="10" markerHeight="10" refX="5" refY="5" markerUnits="userSpaceOnUse"><circle cx="5" cy="5" r="2.1" fill="none" stroke="#5ba400" stroke-width="1.7"/></marker><marker id="ou18" markerWidth="10" markerHeight="10" refX="5" refY="5" markerUnits="userSpaceOnUse"><circle cx="5" cy="5" r="2.6" fill="none" stroke="#5ba400" stroke-width="1.0"/></marker><marker id="o19" markerWidth="10" markerHeight="10" refX="5" refY="5" markerUnits="userSpaceOnUse"><circle cx="5" cy="5" r="2.1" fill="none" stroke="#52ad00" stroke-width="1.7"/></marker><marker id="ou19" markerWidth="10" markerHeight="10" refX="5" refY="5" markerUnits="userSpaceOnUse"><circle cx="5" cy="5" r="2.6" fill="none" stroke="#52ad00" stroke-width="1.0"/></marker><marker id="o20" markerWidth="10" markerHeight="10" refX="5" refY="5" markerUnits="userSpaceOnUse"><circle cx="5" cy="5" r="2.1" fill="none" stroke="#49b600" stroke-width="1.7"/></marker><marker id="ou20" markerWidth="10" markerHeight="10" refX="5" refY="5" markerUnits="userSpaceOnUse"><circle cx="5" cy="5" r="2.6" fill="none" stroke="#49b600" stroke-width="1.0"/></marker><marker id="o21" markerWidth="10" markerHeight="10" refX="5" refY="5" markerUnits="userSpaceOnUse"><circle cx="5" cy="5" r="2.1" fill="none" stroke="#40bf00" stroke-width="1.7"/></marker><marker id="ou21" markerWidth="10" markerHeight="10" refX="5" refY="5" markerUnits="userSpaceOnUse"><circle cx="5" cy="5" r="2.6" fill="none" stroke="#40bf00" stroke-width="1.0"/></marker><marker id="o22" markerWidth="10" markerHeight="10" refX="5" refY="5" markerUnits="userSpaceOnUse"><circle cx="5" cy="5" r="2.1" fill="none" stroke="#37c800" stroke-width="1.7"/></marker><marker id="ou22" markerWidth="10" markerHeight="10" refX="5" refY="5" markerUnits="userSpaceOnUse"><circle cx="5" cy="5" r="2.6" fill="none" stroke="#37c800" stroke-width="1.0"/></marker><marker id="o23" markerWidth="10" markerHeight="10" refX="5" refY="5" markerUnits="userSpaceOnUse"><circle cx="5" cy="5" r="2.1" fill="none" stroke="#2ed100" stroke-width="1.7"/></marker><marker id="ou23" markerWidth="10" markerHeight="10" refX="5" refY="5" markerUnits="userSpaceOnUse"><circle cx="5" cy="5" r="2.6" fill="none" stroke="#2ed100" stroke-width="1.0"/></marker><marker id="o24" markerWidth="10" markerHeight="10" refX="5" refY="5" markerUnits="userSpaceOnUse"><circle cx="5" cy="5" r="2.1" fill="none" stroke="#24db00" stroke-width="1.7"/></marker><marker id="ou24" markerWidth="10" markerHeight="10" refX="5" refY="5" markerUnits="userSpaceOnUse"><circle cx="5" cy="5" r="2.6" fill="none" stroke="#24db00" stroke-width="1.0"/></marker><marker id="o25" markerWidth="10" markerHeight="10" refX="5" refY="5" markerUnits="userSpaceOnUse"><circle cx="5" cy="5" r="2.1" fill="none" stroke="#1be400" stroke-width="1.7"/></marker><marker id="ou25" markerWidth="10" markerHeight="10" refX="5" refY="5" markerUnits="userSpaceOnUse"><circle cx="5" cy="5" r="2.6" fill="none" stroke="#1be400" stroke-width="1.0"/></marker><marker id="o26" markerWidth="10" markerHeight="10" refX="5" refY="5" markerUnits="userSpaceOnUse"><circle cx="5" cy="5" r="2.1" fill="none" stroke="#12ed00" stroke-width="1.7"/></marker><marker id="ou26" markerWidth="10" markerHeight="10" refX="5" refY="5" markerUnits="userSpaceOnUse"><circle cx="5" cy="5" r="2.6" fill="none" stroke="#12ed00" stroke-width="1.0"/></marker><marker id="o27" markerWidth="10" markerHeight="10" refX="5" refY="5" markerUnits="userSpaceOnUse"><circle cx="5" cy="5" r="2.1" fill="none" stroke="#09f600" stroke-width="1.7"/></marker><marker id="ou27" markerWidth="10" markerHeight="10" refX="5" refY="5" markerUnits="userSpaceOnUse"><circle cx="5" cy="5" r="2.6" fill="none" stroke="#09f600" stroke-width="1.0"/></marker><marker id="o28" markerWidth="10" markerHeight="10" refX="5" refY="5" markerUnits="userSpaceOnUse"><circle cx="5" cy="5" r="2.1" fill="none" stroke="#00ff00" stroke-width="1.7"/></marker><marker id="ou28" markerWidth="10" markerHeight="10" refX="5" refY="5" markerUnits="userSpaceOnUse"><circle cx="5" cy="5" r="2.6" fill="none" stroke="#00ff00" stroke-width="1.0"/></marker><marker id="o29" markerWidth="10" markerHeight="10" refX="5" refY="5" markerUnits="userSpaceOnUse"><circle cx="5" cy="5" r="2.1" fill="none" stroke="#00fb00" stroke-width="1.7"/></marker><marker id="ou29" markerWidth="10" markerHeight="10" refX="5" refY="5" markerUnits="userSpaceOnUse"><circle cx="5" cy="5" r="2.6" fill="none" stroke="#00fb00" stroke-width="1.0"/></marker><marker id="o30" markerWidth="10" markerHeight="10" refX="5" refY="5" markerUnits="userSpaceOnUse"><circle cx="5" cy="5" r="2.1" fill="none" stroke="#00f600" stroke-width="1.7"/></marker><marker id="ou30" markerWidth="10" markerHeight="10" refX="5" refY="5" markerUnits="userSpaceOnUse"><circle cx="5" cy="5" r="2.6" fill="none" stroke="#00f600" stroke-width="1.0"/></marker><marker id="o31" markerWidth="10" markerHeight="10" refX="5" refY="5" markerUnits="userSpaceOnUse"><circle cx="5" cy="5" r="2.1" fill="none" stroke="#00f200" stroke-width="1.7"/></marker><marker id="ou31" markerWidth="10" markerHeight="10" refX="5" refY="5" markerUnits="userSpaceOnUse"><circle cx="5" cy="5" r="2.6" fill="none" stroke="#00f200" stroke-width="1.0"/></marker><marker id="o32" markerWidth="10" markerHeight="10" refX="5" refY="5" markerUnits="userSpaceOnUse"><circle cx="5" cy="5" r="2.1" fill="none" stroke="#00ed00" stroke-width="1.7"/></marker><marker id="ou32" markerWidth="10" markerHeight="10" refX="5" refY="5" markerUnits="userSpaceOnUse"><circle cx="5" cy="5" r="2.6" fill="none" stroke="#00ed00" stroke-width="1.0"/></marker><marker id="o33" markerWidth="10" markerHeight="10" refX="5" refY="5" markerUnits="userSpaceOnUse"><circle cx="5" cy="5" r="2.1" fill="none" stroke="#00e900" stroke-width="1.7"/></marker><marker id="ou33" markerWidth="10" markerHeight="10" refX="5" refY="5" markerUnits="userSpaceOnUse"><circle cx="5" cy="5" r="2.6" fill="none" stroke="#00e900" stroke-width="1.0"/></marker><marker id="o34" markerWidth="10" markerHeight="10" refX="5" refY="5" markerUnits="userSpaceOnUse"><circle cx="5" cy="5" r="2.1" fill="none" stroke="#00e401" stroke-width="1.7"/></marker><marker id="ou34" markerWidth="10" markerHeight="10" refX="5" refY="5" markerUnits="userSpaceOnUse"><circle cx="5" cy="5" r="2.6" fill="none" stroke="#00e401" stroke-width="1.0"/></marker><marker id="o35" markerWidth="10" markerHeight="10" refX="5" refY="5" markerUnits="userSpaceOnUse"><circle cx="5" cy="5" r="2.1" fill="none" stroke="#00e001" stroke-width="1.7"/></marker><marker id="ou35" markerWidth="10" markerHeight="10" refX="5" refY="5" markerUnits="userSpaceOnUse"><circle cx="5" cy="5" r="2.6" fill="none" stroke="#00e001" stroke-width="1.0"/></marker><marker id="o36" markerWidth="10" markerHeight="10" refX="5" refY="5" markerUnits="userSpaceOnUse"><circle cx="5" cy="5" r="2.1" fill="none" stroke="#00db02" stroke-width="1.7"/></marker><marker id="ou36" markerWidth="10" markerHeight="10" refX="5" refY="5" markerUnits="userSpaceOnUse"><circle cx="5" cy="5" r="2.6" fill="none" stroke="#00db02" stroke-width="1.0"/></marker><marker id="o37" markerWidth="10" markerHeight="10" refX="5" refY="5" markerUnits="userSpaceOnUse"><circle cx="5" cy="5" r="2.1" fill="none" stroke="#00d702" stroke-width="1.7"/></marker><marker id="ou37" markerWidth="10" markerHeight="10" refX="5" refY="5" markerUnits="userSpaceOnUse"><circle cx="5" cy="5" r="2.6" fill="none" stroke="#00d702" stroke-width="1.0"/></marker><marker id="o38" markerWidth="10" markerHeight="10" refX="5" refY="5" markerUnits="userSpaceOnUse"><circle cx="5" cy="5" r="2.1" fill="none" stroke="#00d203" stroke-width="1.7"/></marker><marker id="ou38" markerWidth="10" markerHeight="10" refX="5" refY="5" markerUnits="userSpaceOnUse"><circle cx="5" cy="5" r="2.6" fill="none" stroke="#00d203" stroke-width="1.0"/></marker><marker id="o39" markerWidth="10" markerHeight="10" refX="5" refY="5" markerUnits="userSpaceOnUse"><circle cx="5" cy="5" r="2.1" fill="none" stroke="#00ce04" stroke-width="1.7"/></marker><marker id="ou39" markerWidth="10" markerHeight="10" refX="5" refY="5" markerUnits="userSpaceOnUse"><circle cx="5" cy="5" r="2.6" fill="none" stroke="#00ce04" stroke-width="1.0"/></marker><marker id="o40" markerWidth="10" markerHeight="10" refX="5" refY="5" markerUnits="userSpaceOnUse"><circle cx="5" cy="5" r="2.1" fill="none" stroke="#00c904" stroke-width="1.7"/></marker><marker id="ou40" markerWidth="10" markerHeight="10" refX="5" refY="5" markerUnits="userSpaceOnUse"><circle cx="5" cy="5" r="2.6" fill="none" stroke="#00c904" stroke-width="1.0"/></marker><marker id="o41" markerWidth="10" markerHeight="10" refX="5" refY="5" markerUnits="userSpaceOnUse"><circle cx="5" cy="5" r="2.1" fill="none" stroke="#00c505" stroke-width="1.7"/></marker><marker id="ou41" markerWidth="10" markerHeight="10" refX="5" refY="5" markerUnits="userSpaceOnUse"><circle cx="5" cy="5" r="2.6" fill="none" stroke="#00c505" stroke-width="1.0"/></marker><marker id="o42" markerWidth="10" markerHeight="10" refX="5" refY="5" markerUnits="userSpaceOnUse"><circle cx="5" cy="5" r="2.1" fill="none" stroke="#00c007" stroke-width="1.7"/></marker><marker id="ou42" markerWidth="10" markerHeight="10" refX="5" refY="5" markerUnits="userSpaceOnUse"><circle cx="5" cy="5" r="2.6" fill="none" stroke="#00c007" stroke-width="1.0"/></marker><marker id="o43" markerWidth="10" markerHeight="10" refX="5" refY="5" markerUnits="userSpaceOnUse"><circle cx="5" cy="5" r="2.1" fill="none" stroke="#00bc08" stroke-width="1.7"/></marker><marker id="ou43" markerWidth="10" markerHeight="10" refX="5" refY="5" markerUnits="userSpaceOnUse"><circle cx="5" cy="5" r="2.6" fill="none" stroke="#00bc08" stroke-width="1.0"/></marker><marker id="o44" markerWidth="10" markerHeight="10" refX="5" refY="5" markerUnits="userSpaceOnUse"><circle cx="5" cy="5" r="2.1" fill="none" stroke="#00b709" stroke-width="1.7"/></marker><marker id="ou44" markerWidth="10" markerHeight="10" refX="5" refY="5" markerUnits="userSpaceOnUse"><circle cx="5" cy="5" r="2.6" fill="none" stroke="#00b709" stroke-width="1.0"/></marker><marker id="o45" markerWidth="10" markerHeight="10" refX="5" refY="5" markerUnits="userSpaceOnUse"><circle cx="5" cy="5" r="2.1" fill="none" stroke="#00b30b" stroke-width="1.7"/></marker><marker id="ou45" markerWidth="10" markerHeight="10" refX="5" refY="5" markerUnits="userSpaceOnUse"><circle cx="5" cy="5" r="2.6" fill="none" stroke="#00b30b" stroke-width="1.0"/></marker><marker id="o46" markerWidth="10" markerHeight="10" refX="5" refY="5" markerUnits="userSpaceOnUse"><circle cx="5" cy="5" r="2.1" fill="none" stroke="#00ae0d" stroke-width="1.7"/></marker><marker id="ou46" markerWidth="10" markerHeight="10" refX="5" refY="5" markerUnits="userSpaceOnUse"><circle cx="5" cy="5" r="2.6" fill="none" stroke="#00ae0d" stroke-width="1.0"/></marker><marker id="o47" markerWidth="10" markerHeight="10" refX="5" refY="5" markerUnits="userSpaceOnUse"><circle cx="5" cy="5" r="2.1" fill="none" stroke="#00aa0f" stroke-width="1.7"/></marker><marker id="ou47" markerWidth="10" markerHeight="10" refX="5" refY="5" markerUnits="userSpaceOnUse"><circle cx="5" cy="5" r="2.6" fill="none" stroke="#00aa0f" stroke-width="1.0"/></marker><marker id="o48" markerWidth="10" markerHeight="10" refX="5" refY="5" markerUnits="userSpaceOnUse"><circle cx="5" cy="5" r="2.1" fill="none" stroke="#00a611" stroke-width="1.7"/></marker><marker id="ou48" markerWidth="10" markerHeight="10" refX="5" refY="5" markerUnits="userSpaceOnUse"><circle cx="5" cy="5" r="2.6" fill="none" stroke="#00a611" stroke-width="1.0"/></marker><marker id="o49" markerWidth="10" markerHeight="10" refX="5" refY="5" markerUnits="userSpaceOnUse"><circle cx="5" cy="5" r="2.1" fill="none" stroke="#00a113" stroke-width="1.7"/></marker><marker id="ou49" markerWidth="10" markerHeight="10" refX="5" refY="5" markerUnits="userSpaceOnUse"><circle cx="5" cy="5" r="2.6" fill="none" stroke="#00a113" stroke-width="1.0"/></marker><marker id="o50" markerWidth="10" markerHeight="10" refX="5" refY="5" markerUnits="userSpaceOnUse"><circle cx="5" cy="5" r="2.1" fill="none" stroke="#009d15" stroke-width="1.7"/></marker><marker id="ou50" markerWidth="10" markerHeight="10" refX="5" refY="5" markerUnits="userSpaceOnUse"><circle cx="5" cy="5" r="2.6" fill="none" stroke="#009d15" stroke-width="1.0"/></marker><marker id="o51" markerWidth="10" markerHeight="10" refX="5" refY="5" markerUnits="userSpaceOnUse"><circle cx="5" cy="5" r="2.1" fill="none" stroke="#009818" stroke-width="1.7"/></marker><marker id="ou51" markerWidth="10" markerHeight="10" refX="5" refY="5" markerUnits="userSpaceOnUse"><circle cx="5" cy="5" r="2.6" fill="none" stroke="#009818" stroke-width="1.0"/></marker><marker id="o52" markerWidth="10" markerHeight="10" refX="5" refY="5" markerUnits="userSpaceOnUse"><circle cx="5" cy="5" r="2.1" fill="none" stroke="#00941b" stroke-width="1.7"/></marker><marker id="ou52" markerWidth="10" markerHeight="10" refX="5" refY="5" markerUnits="userSpaceOnUse"><circle cx="5" cy="5" r="2.6" fill="none" stroke="#00941b" stroke-width="1.0"/></marker><marker id="o53" markerWidth="10" markerHeight="10" refX="5" refY="5" markerUnits="userSpaceOnUse"><circle cx="5" cy="5" r="2.1" fill="none" stroke="#008f1e" stroke-width="1.7"/></marker><marker id="ou53" markerWidth="10" markerHeight="10" refX="5" refY="5" markerUnits="userSpaceOnUse"><circle cx="5" cy="5" r="2.6" fill="none" stroke="#008f1e" stroke-width="1.0"/></marker><marker id="o54" markerWidth="10" markerHeight="10" refX="5" refY="5" markerUnits="userSpaceOnUse"><circle cx="5" cy="5" r="2.1" fill="none" stroke="#008b21" stroke-width="1.7"/></marker><marker id="ou54" markerWidth="10" markerHeight="10" refX="5" refY="5" markerUnits="userSpaceOnUse"><circle cx="5" cy="5" r="2.6" fill="none" stroke="#008b21" stroke-width="1.0"/></marker><marker id="o55" markerWidth="10" markerHeight="10" refX="5" refY="5" markerUnits="userSpaceOnUse"><circle cx="5" cy="5" r="2.1" fill="none" stroke="#008625" stroke-width="1.7"/></marker><marker id="ou55" markerWidth="10" markerHeight="10" refX="5" refY="5" markerUnits="userSpaceOnUse"><circle cx="5" cy="5" r="2.6" fill="none" stroke="#008625" stroke-width="1.0"/></marker><marker id="o56" markerWidth="10" markerHeight="10" refX="5" refY="5" markerUnits="userSpaceOnUse"><circle cx="5" cy="5" r="2.1" fill="none" stroke="#008228" stroke-width="1.7"/></marker><marker id="ou56" markerWidth="10" markerHeight="10" refX="5" refY="5" markerUnits="userSpaceOnUse"><circle cx="5" cy="5" r="2.6" fill="none" stroke="#008228" stroke-width="1.0"/></marker><marker id="o57" markerWidth="10" markerHeight="10" refX="5" refY="5" markerUnits="userSpaceOnUse"><circle cx="5" cy="5" r="2.1" fill="none" stroke="#007d2c" stroke-width="1.7"/></marker><marker id="ou57" markerWidth="10" markerHeight="10" refX="5" refY="5" markerUnits="userSpaceOnUse"><circle cx="5" cy="5" r="2.6" fill="none" stroke="#007d2c" stroke-width="1.0"/></marker><marker id="o58" markerWidth="10" markerHeight="10" refX="5" refY="5" markerUnits="userSpaceOnUse"><circle cx="5" cy="5" r="2.1" fill="none" stroke="#007930" stroke-width="1.7"/></marker><marker id="ou58" markerWidth="10" markerHeight="10" refX="5" refY="5" markerUnits="userSpaceOnUse"><circle cx="5" cy="5" r="2.6" fill="none" stroke="#007930" stroke-width="1.0"/></marker><marker id="o59" markerWidth="10" markerHeight="10" refX="5" refY="5" markerUnits="userSpaceOnUse"><circle cx="5" cy="5" r="2.1" fill="none" stroke="#007434" stroke-width="1.7"/></marker><marker id="ou59" markerWidth="10" markerHeight="10" refX="5" refY="5" markerUnits="userSpaceOnUse"><circle cx="5" cy="5" r="2.6" fill="none" stroke="#007434" stroke-width="1.0"/></marker><marker id="o60" markerWidth="10" markerHeight="10" refX="5" refY="5" markerUnits="userSpaceOnUse"><circle cx="5" cy="5" r="2.1" fill="none" stroke="#007039" stroke-width="1.7"/></marker><marker id="ou60" markerWidth="10" markerHeight="10" refX="5" refY="5" markerUnits="userSpaceOnUse"><circle cx="5" cy="5" r="2.6" fill="none" stroke="#007039" stroke-width="1.0"/></marker><marker id="o61" markerWidth="10" markerHeight="10" refX="5" refY="5" markerUnits="userSpaceOnUse"><circle cx="5" cy="5" r="2.1" fill="none" stroke="#006b3e" stroke-width="1.7"/></marker><marker id="ou61" markerWidth="10" markerHeight="10" refX="5" refY="5" markerUnits="userSpaceOnUse"><circle cx="5" cy="5" r="2.6" fill="none" stroke="#006b3e" stroke-width="1.0"/></marker><marker id="o62" markerWidth="10" markerHeight="10" refX="5" refY="5" markerUnits="userSpaceOnUse"><circle cx="5" cy="5" r="2.1" fill="none" stroke="#006743" stroke-width="1.7"/></marker><marker id="ou62" markerWidth="10" markerHeight="10" refX="5" refY="5" markerUnits="userSpaceOnUse"><circle cx="5" cy="5" r="2.6" fill="none" stroke="#006743" stroke-width="1.0"/></marker><marker id="o63" markerWidth="10" markerHeight="10" refX="5" refY="5" markerUnits="userSpaceOnUse"><circle cx="5" cy="5" r="2.1" fill="none" stroke="#006248" stroke-width="1.7"/></marker><marker id="ou63" markerWidth="10" markerHeight="10" refX="5" refY="5" markerUnits="userSpaceOnUse"><circle cx="5" cy="5" r="2.6" fill="none" stroke="#006248" stroke-width="1.0"/></marker><marker id="o64" markerWidth="10" markerHeight="10" refX="5" refY="5" markerUnits="userSpaceOnUse"><circle cx="5" cy="5" r="2.1" fill="none" stroke="#005e4d" stroke-width="1.7"/></marker><marker id="ou64" markerWidth="10" markerHeight="10" refX="5" refY="5" markerUnits="userSpaceOnUse"><circle cx="5" cy="5" r="2.6" fill="none" stroke="#005e4d" stroke-width="1.0"/></marker><marker id="o65" markerWidth="10" markerHeight="10" refX="5" refY="5" markerUnits="userSpaceOnUse"><circle cx="5" cy="5" r="2.1" fill="none" stroke="#005953" stroke-width="1.7"/></marker><marker id="ou65" markerWidth="10" markerHeight="10" refX="5" refY="5" markerUnits="userSpaceOnUse"><circle cx="5" cy="5" r="2.6" fill="none" stroke="#005953" stroke-width="1.0"/></marker><marker id="o66" markerWidth="10" markerHeight="10" refX="5" refY="5" markerUnits="userSpaceOnUse"><circle cx="5" cy="5" r="2.1" fill="none" stroke="#005559" stroke-width="1.7"/></marker><marker id="ou66" markerWidth="10" markerHeight="10" refX="5" refY="5" markerUnits="userSpaceOnUse"><circle cx="5" cy="5" r="2.6" fill="none" stroke="#005559" stroke-width="1.0"/></marker><marker id="o67" markerWidth="10" markerHeight="10" refX="5" refY="5" markerUnits="userSpaceOnUse"><circle cx="5" cy="5" r="2.1" fill="none" stroke="#00515f" stroke-width="1.7"/></marker><marker id="ou67" markerWidth="10" markerHeight="10" refX="5" refY="5" markerUnits="userSpaceOnUse"><circle cx="5" cy="5" r="2.6" fill="none" stroke="#00515f" stroke-width="1.0"/></marker><marker id="o68" markerWidth="10" markerHeight="10" refX="5" refY="5" markerUnits="userSpaceOnUse"><circle cx="5" cy="5" r="2.1" fill="none" stroke="#004c66" stroke-width="1.7"/></marker><marker id="ou68" markerWidth="10" markerHeight="10" refX="5" refY="5" markerUnits="userSpaceOnUse"><circle cx="5" cy="5" r="2.6" fill="none" stroke="#004c66" stroke-width="1.0"/></marker><marker id="o69" markerWidth="10" markerHeight="10" refX="5" refY="5" markerUnits="userSpaceOnUse"><circle cx="5" cy="5" r="2.1" fill="none" stroke="#00486c" stroke-width="1.7"/></marker><marker id="ou69" markerWidth="10" markerHeight="10" refX="5" refY="5" markerUnits="userSpaceOnUse"><circle cx="5" cy="5" r="2.6" fill="none" stroke="#00486c" stroke-width="1.0"/></marker><marker id="o70" markerWidth="10" markerHeight="10" refX="5" refY="5" markerUnits="userSpaceOnUse"><circle cx="5" cy="5" r="2.1" fill="none" stroke="#004373" stroke-width="1.7"/></marker><marker id="ou70" markerWidth="10" markerHeight="10" refX="5" refY="5" markerUnits="userSpaceOnUse"><circle cx="5" cy="5" r="2.6" fill="none" stroke="#004373" stroke-width="1.0"/></marker><marker id="o71" markerWidth="10" markerHeight="10" refX="5" refY="5" markerUnits="userSpaceOnUse"><circle cx="5" cy="5" r="2.1" fill="none" stroke="#003f7b" stroke-width="1.7"/></marker><marker id="ou71" markerWidth="10" markerHeight="10" refX="5" refY="5" markerUnits="userSpaceOnUse"><circle cx="5" cy="5" r="2.6" fill="none" stroke="#003f7b" stroke-width="1.0"/></marker><marker id="o72" markerWidth="10" markerHeight="10" refX="5" refY="5" markerUnits="userSpaceOnUse"><circle cx="5" cy="5" r="2.1" fill="none" stroke="#003a82" stroke-width="1.7"/></marker><marker id="ou72" markerWidth="10" markerHeight="10" refX="5" refY="5" markerUnits="userSpaceOnUse"><circle cx="5" cy="5" r="2.6" fill="none" stroke="#003a82" stroke-width="1.0"/></marker><marker id="o73" markerWidth="10" markerHeight="10" refX="5" refY="5" markerUnits="userSpaceOnUse"><circle cx="5" cy="5" r="2.1" fill="none" stroke="#00368a" stroke-width="1.7"/></marker><marker id="ou73" markerWidth="10" markerHeight="10" refX="5" refY="5" markerUnits="userSpaceOnUse"><circle cx="5" cy="5" r="2.6" fill="none" stroke="#00368a" stroke-width="1.0"/></marker><marker id="o74" markerWidth="10" markerHeight="10" refX="5" refY="5" markerUnits="userSpaceOnUse"><circle cx="5" cy="5" r="2.1" fill="none" stroke="#003192" stroke-width="1.7"/></marker><marker id="ou74" markerWidth="10" markerHeight="10" refX="5" refY="5" markerUnits="userSpaceOnUse"><circle cx="5" cy="5" r="2.6" fill="none" stroke="#003192" stroke-width="1.0"/></marker><marker id="o75" markerWidth="10" markerHeight="10" refX="5" refY="5" markerUnits="userSpaceOnUse"><circle cx="5" cy="5" r="2.1" fill="none" stroke="#002d9a" stroke-width="1.7"/></marker><marker id="ou75" markerWidth="10" markerHeight="10" refX="5" refY="5" markerUnits="userSpaceOnUse"><circle cx="5" cy="5" r="2.6" fill="none" stroke="#002d9a" stroke-width="1.0"/></marker><marker id="o76" markerWidth="10" markerHeight="10" refX="5" refY="5" markerUnits="userSpaceOnUse"><circle cx="5" cy="5" r="2.1" fill="none" stroke="#0028a3" stroke-width="1.7"/></marker><marker id="ou76" markerWidth="10" markerHeight="10" refX="5" refY="5" markerUnits="userSpaceOnUse"><circle cx="5" cy="5" r="2.6" fill="none" stroke="#0028a3" stroke-width="1.0"/></marker><marker id="o77" markerWidth="10" markerHeight="10" refX="5" refY="5" markerUnits="userSpaceOnUse"><circle cx="5" cy="5" r="2.1" fill="none" stroke="#0024ac" stroke-width="1.7"/></marker><marker id="ou77" markerWidth="10" markerHeight="10" refX="5" refY="5" markerUnits="userSpaceOnUse"><circle cx="5" cy="5" r="2.6" fill="none" stroke="#0024ac" stroke-width="1.0"/></marker><marker id="o78" markerWidth="10" markerHeight="10" refX="5" refY="5" markerUnits="userSpaceOnUse"><circle cx="5" cy="5" r="2.1" fill="none" stroke="#001fb5" stroke-width="1.7"/></marker><marker id="ou78" markerWidth="10" markerHeight="10" refX="5" refY="5" markerUnits="userSpaceOnUse"><circle cx="5" cy="5" r="2.6" fill="none" stroke="#001fb5" stroke-width="1.0"/></marker><marker id="o79" markerWidth="10" markerHeight="10" refX="5" refY="5" markerUnits="userSpaceOnUse"><circle cx="5" cy="5" r="2.1" fill="none" stroke="#001bbf" stroke-width="1.7"/></marker><marker id="ou79" markerWidth="10" markerHeight="10" refX="5" refY="5" markerUnits="userSpaceOnUse"><circle cx="5" cy="5" r="2.6" fill="none" stroke="#001bbf" stroke-width="1.0"/></marker><marker id="o80" markerWidth="10" markerHeight="10" refX="5" refY="5" markerUnits="userSpaceOnUse"><circle cx="5" cy="5" r="2.1" fill="none" stroke="#0016c9" stroke-width="1.7"/></marker><marker id="ou80" markerWidth="10" markerHeight="10" refX="5" refY="5" markerUnits="userSpaceOnUse"><circle cx="5" cy="5" r="2.6" fill="none" stroke="#0016c9" stroke-width="1.0"/></marker><marker id="o81" markerWidth="10" markerHeight="10" refX="5" refY="5" markerUnits="userSpaceOnUse"><circle cx="5" cy="5" r="2.1" fill="none" stroke="#0012d3" stroke-width="1.7"/></marker><marker id="ou81" markerWidth="10" markerHeight="10" refX="5" refY="5" markerUnits="userSpaceOnUse"><circle cx="5" cy="5" r="2.6" fill="none" stroke="#0012d3" stroke-width="1.0"/></marker><marker id="o82" markerWidth="10" markerHeight="10" refX="5" refY="5" markerUnits="userSpaceOnUse"><circle cx="5" cy="5" r="2.1" fill="none" stroke="#000dde" stroke-width="1.7"/></marker><marker id="ou82" markerWidth="10" markerHeight="10" refX="5" refY="5" markerUnits="userSpaceOnUse"><circle cx="5" cy="5" r="2.6" fill="none" stroke="#000dde" stroke-width="1.0"/></marker><marker id="o83" markerWidth="10" markerHeight="10" refX="5" refY="5" markerUnits="userSpaceOnUse"><circle cx="5" cy="5" r="2.1" fill="none" stroke="#0009e8" stroke-width="1.7"/></marker><marker id="ou83" markerWidth="10" markerHeight="10" refX="5" refY="5" markerUnits="userSpaceOnUse"><circle cx="5" cy="5" r="2.6" fill="none" stroke="#0009e8" stroke-width="1.0"/></marker><marker id="o84" markerWidth="10" markerHeight="10" refX="5" refY="5" markerUnits="userSpaceOnUse"><circle cx="5" cy="5" r="2.1" fill="none" stroke="#0004f4" stroke-width="1.7"/></marker><marker id="ou84" markerWidth="10" markerHeight="10" refX="5" refY="5" markerUnits="userSpaceOnUse"><circle cx="5" cy="5" r="2.6" fill="none" stroke="#0004f4" stroke-width="1.0"/></marker><marker id="o85" markerWidth="10" markerHeight="10" refX="5" refY="5" markerUnits="userSpaceOnUse"><circle cx="5" cy="5" r="2.1" fill="none" stroke="#0000ff" stroke-width="1.7"/></marker><marker id="ou85" markerWidth="10" markerHeight="10" refX="5" refY="5" markerUnits="userSpaceOnUse"><circle cx="5" cy="5" r="2.6" fill="none" stroke="#0000ff" stroke-width="1.0"/></marker></defs>
<g fill="none" stroke-width="1.1">
<path d="M88.3 487.0 95.3 440.7 102.3 417.3 109.3 404.4 116.4 392.2 123.4 381.9 130.4 374.6 137.4 369.5 144.4 363.5 151.4 356.8 158.4 351.0 165.5 347.6" stroke="#ff0000" marker-start="url(#o0)" marker-mid="url(#o0)" marker-end="url(#o0)"/>
<path d="M165.5 347.6 172.5 345.5 186.5 341.9 200.5 342.6 214.6 336.2 228.6 335.6 242.6 329.7 256.7 329.8 270.7 320.7 284.7 320.9 298.8 313.7 312.8 314.4 319.8 311.4 326.8 309.3 333.8 307.4 340.8 305.4 347.9 304.6 354.9 303.6 361.9 303.0 368.9 302.0 375.9 300.2 382.9 299.6 389.9 297.4 399.7 297.2" stroke="#ff0000" marker-mid="url(#ou0)" marker-end="url(#ou0)"/>
<path d="M95.3 440.7h0M109.3 404.4h0M130.4 374.6h0M151.4 356.8h0M158.4 351.0h0" stroke="#ff0000" stroke-width="5.2" stroke-linecap="round"/>
<path d="M102.3 487.0 109.3 439.8 116.4 417.2 123.4 404.9 130.4 393.1 137.4 381.4 144.4 374.3 151.4 368.5 158.5 363.3 165.5 357.2 172.5 350.3 179.5 347.0" stroke="#f60900" marker-start="url(#o1)" marker-mid="url(#o1)" marker-end="url(#o1)"/>
<path d="M179.5 347.0 186.5 344.9 200.5 341.8 214.6 341.9 228.6 336.3 242.6 335.9 256.7 327.9 270.7 328.3 284.7 319.3 298.8 320.4 312.8 314.0 326.8 314.0 333.8 310.6 340.8 308.8 347.9 307.5 354.9 305.9 361.9 303.7 368.9 303.3 375.9 301.6 382.9 300.9 389.9 299.5 397.0 298.1 404.0 296.7 413.7 295.7" stroke="#f60900" marker-mid="url(#ou1)" marker-end="url(#ou1)"/>
<path d="M102.3 487.0h0M109.3 439.8h0M158.5 363.3h0M179.5 347.0h0" stroke="#f60900" stroke-width="5.2" stroke-linecap="round"/>
<path d="M116.4 487.0 123.4 440.6 130.4 416.4 137.4 404.1 144.4 392.7 151.4 381.2 158.5 375.2 165.5 369.5 172.5 363.1 179.5 357.1 186.5 350.8 193.5 347.1" stroke="#ed1200" marker-start="url(#o2)" marker-mid="url(#o2)" marker-end="url(#o2)"/>
<path d="M193.5 347.1 200.5 346.0 214.6 342.7 228.6 341.7 242.6 336.1 256.7 335.9 270.7 329.1 284.7 327.5 298.8 320.1 312.8 318.9 326.8 312.4 340.8 313.1 347.9 310.1 354.9 308.6 361.9 305.9 368.9 305.3 375.9 302.6 382.9 302.7 389.9 300.5 397.0 299.8 404.0 298.0 411.0 296.6 418.0 295.3 427.8 295.1" stroke="#ed1200" marker-mid="url(#ou2)" marker-end="url(#ou2)"/>
<path d="M151.4 381.2h0M165.5 369.5h0M179.5 357.1h0" stroke="#ed1200" stroke-width="5.2" stroke-linecap="round"/>
<path d="M130.4 487.0 137.4 439.7 144.4 416.7 151.4 404.1 158.5 392.4 165.5 382.0 172.5 375.0 179.5 368.7 186.5 363.6 193.5 356.3 200.5 351.3 207.6 346.5" stroke="#e41b00" marker-start="url(#o3)" marker-mid="url(#o3)" marker-end="url(#o3)"/>
<path d="M207.6 346.5 214.6 345.8 228.6 341.1 242.6 340.9 256.7 335.2 270.7 335.0 284.7 328.5 298.8 328.5 312.8 319.0 326.8 318.5 340.8 312.8 354.9 312.3 361.9 308.6 368.9 306.9 375.9 304.7 382.9 304.4 389.9 301.9 397.0 300.8 404.0 300.3 411.0 299.2 418.0 298.0 425.0 296.8 432.0 295.8 441.8 294.8" stroke="#e41b00" marker-mid="url(#ou3)" marker-end="url(#ou3)"/>
<path d="M137.4 439.7h0M144.4 416.7h0M151.4 404.1h0M165.5 382.0h0M186.5 363.6h0M207.6 346.5h0" stroke="#e41b00" stroke-width="5.2" stroke-linecap="round"/>
<path d="M144.4 487.0 151.4 440.9 158.5 416.2 165.5 404.9 172.5 392.5 179.5 382.6 186.5 374.6 193.5 369.8 200.5 363.2 207.6 357.6 214.6 350.6 221.6 346.2" stroke="#db2400" marker-start="url(#o4)" marker-mid="url(#o4)" marker-end="url(#o4)"/>
<path d="M221.6 346.2 228.6 344.9 242.6 341.9 256.7 340.8 270.7 334.9 284.7 334.1 298.8 327.0 312.8 327.0 326.8 318.1 340.8 318.0 354.9 312.4 368.9 311.7 375.9 308.9 382.9 307.2 389.9 305.5 397.0 304.1 404.0 302.1 411.0 300.9 418.0 300.0 425.0 298.3 432.0 296.5 439.1 295.8 446.1 294.5 455.8 292.7" stroke="#db2400" marker-mid="url(#ou4)" marker-end="url(#ou4)"/>
<path d="M144.4 487.0h0M151.4 440.9h0M186.5 374.6h0M193.5 369.8h0M221.6 346.2h0" stroke="#db2400" stroke-width="5.2" stroke-linecap="round"/>
<path d="M158.5 487.0 165.5 440.0 172.5 416.6 179.5 405.1 186.5 392.5 193.5 382.0 200.5 374.8 207.6 368.8 214.6 364.0 221.6 357.5 228.6 350.1 235.6 346.8" stroke="#d12e00" marker-start="url(#o5)" marker-mid="url(#o5)" marker-end="url(#o5)"/>
<path d="M235.6 346.8 242.6 344.7 256.7 341.8 270.7 341.5 284.7 334.1 298.8 334.0 312.8 327.5 326.8 327.7 340.8 318.6 354.9 318.4 368.9 310.9 382.9 311.0 389.9 307.9 397.0 305.8 404.0 303.8 411.0 303.4 418.0 301.5 425.0 299.7 432.0 298.6 439.1 297.8 446.1 296.7 453.1 295.4 460.1 293.4 469.9 293.1" stroke="#d12e00" marker-mid="url(#ou5)" marker-end="url(#ou5)"/>
<path d="M165.5 440.0h0M172.5 416.6h0M186.5 392.5h0M200.5 374.8h0M214.6 364.0h0M235.6 346.8h0" stroke="#d12e00" stroke-width="5.2" stroke-linecap="round"/>
<path d="M172.5 487.0 179.5 440.7 186.5 416.2 193.5 405.3 200.5 392.9 207.6 381.5 214.6 374.6 221.6 368.3 228.6 363.2 235.6 357.0 242.6 351.1 249.6 346.1" stroke="#c83700" marker-start="url(#o6)" marker-mid="url(#o6)" marker-end="url(#o6)"/>
<path d="M249.6 346.1 256.7 345.3 270.7 341.2 284.7 341.2 298.8 335.2 312.8 333.9 326.8 326.6 340.8 326.7 354.9 318.5 368.9 317.3 382.9 311.5 397.0 310.1 404.0 307.6 411.0 305.9 418.0 303.4 425.0 301.6 432.0 300.0 439.1 298.6 446.1 297.6 453.1 296.9 460.1 296.1 467.1 293.8 474.1 293.5 483.9 291.0" stroke="#c83700" marker-mid="url(#ou6)" marker-end="url(#ou6)"/>
<path d="M207.6 381.5h0M221.6 368.3h0M235.6 357.0h0M249.6 346.1h0" stroke="#c83700" stroke-width="5.2" stroke-linecap="round"/>
<path d="M186.5 487.0 193.5 439.5 200.5 416.4 207.6 404.9 214.6 392.0 221.6 382.6 228.6 375.3 235.6 369.5 242.6 363.7 249.6 357.3 256.7 350.3 263.7 346.7" stroke="#bf4000" marker-start="url(#o7)" marker-mid="url(#o7)" marker-end="url(#o7)"/>
<path d="M263.7 346.7 270.7 344.7 284.7 341.3 298.8 341.7 312.8 333.9 326.8 334.5 340.8 327.2 354.9 325.8 368.9 318.1 382.9 316.9 397.0 310.5 411.0 309.8 418.0 306.7 425.0 305.5 432.0 302.7 439.1 301.8 446.1 300.4 453.1 299.0 460.1 297.5 467.1 295.9 474.1 294.5 481.1 293.2 488.2 291.8 497.9 291.3" stroke="#bf4000" marker-mid="url(#ou7)" marker-end="url(#ou7)"/>
<path d="M193.5 439.5h0M200.5 416.4h0M207.6 404.9h0M221.6 382.6h0M228.6 375.3h0M235.6 369.5h0M242.6 363.7h0" stroke="#bf4000" stroke-width="5.2" stroke-linecap="round"/>
<path d="M200.5 487.0 207.6 440.9 214.6 417.5 221.6 404.9 228.6 392.1 235.6 381.7 242.6 375.1 249.6 369.6 256.7 363.0 263.7 356.3 270.7 351.3 277.7 345.9" stroke="#b64900" marker-start="url(#o8)" marker-mid="url(#o8)" marker-end="url(#o8)"/>
<path d="M277.7 345.9 284.7 345.1 298.8 341.0 312.8 341.2 326.8 335.0 340.8 334.2 354.9 326.6 368.9 326.1 382.9 317.5 397.0 317.2 411.0 310.3 425.0 310.0 432.0 306.7 439.1 304.4 446.1 302.4 453.1 301.6 460.1 299.3 467.1 298.6 474.1 297.7 481.1 296.5 488.2 294.3 495.2 293.2 502.2 292.6 511.9 290.4" stroke="#b64900" marker-mid="url(#ou8)" marker-end="url(#ou8)"/>
<path d="M207.6 440.9h0M221.6 404.9h0M270.7 351.3h0" stroke="#b64900" stroke-width="5.2" stroke-linecap="round"/>
<path d="M214.6 487.0 221.6 439.7 228.6 416.4 235.6 404.4 242.6 392.0 249.7 381.8 256.7 374.1 263.7 369.1 270.7 363.9 277.7 356.5 284.7 351.2 291.7 345.8" stroke="#ad5200" marker-start="url(#o9)" marker-mid="url(#o9)" marker-end="url(#o9)"/>
<path d="M291.7 345.8 298.8 345.7 312.8 341.2 326.8 340.4 340.8 334.2 354.9 333.9 368.9 326.0 382.9 326.8 397.0 317.5 411.0 317.1 425.0 310.7 439.1 310.7 446.1 306.6 453.1 304.8 460.1 303.7 467.1 302.1 474.1 299.4 481.1 297.8 488.2 297.9 495.2 296.2 502.2 294.0 509.2 292.9 516.2 291.7 526.0 290.5" stroke="#ad5200" marker-mid="url(#ou9)" marker-end="url(#ou9)"/>
<path d="M214.6 487.0h0M221.6 439.7h0M256.7 374.1h0M263.7 369.1h0M284.7 351.2h0M291.7 345.8h0" stroke="#ad5200" stroke-width="5.2" stroke-linecap="round"/>
<path d="M228.6 487.0 235.6 440.2 242.6 416.5 249.7 405.0 256.7 393.0 263.7 382.2 270.7 374.0 277.7 368.7 284.7 363.5 291.7 357.6 298.8 350.9 305.8 346.6" stroke="#a45b00" marker-start="url(#o10)" marker-mid="url(#o10)" marker-end="url(#o10)"/>
<path d="M305.8 346.6 312.8 345.2 326.8 340.7 340.8 341.3 354.9 334.6 368.9 333.6 382.9 326.5 397.0 326.3 411.0 318.0 425.0 316.8 439.1 309.7 453.1 310.6 460.1 307.2 467.1 304.5 474.1 303.3 481.1 302.2 488.2 299.8 495.2 298.7 502.2 297.3 509.2 296.1 516.2 294.8 523.2 293.9 530.3 292.6 540.0 291.4" stroke="#a45b00" marker-mid="url(#ou10)" marker-end="url(#ou10)"/>
<path d="M228.6 487.0h0M242.6 416.5h0M249.7 405.0h0M256.7 393.0h0M263.7 382.2h0M277.7 368.7h0M305.8 346.6h0" stroke="#a45b00" stroke-width="5.2" stroke-linecap="round"/>
<path d="M242.6 487.0 249.7 440.8 256.7 417.5 263.7 403.8 270.7 392.1 277.7 381.5 284.7 375.1 291.7 369.1 298.8 363.9 305.8 357.2 312.8 350.8 319.8 347.1" stroke="#9b6400" marker-start="url(#o11)" marker-mid="url(#o11)" marker-end="url(#o11)"/>
<path d="M319.8 347.1 326.8 344.3 340.8 341.5 354.9 341.7 368.9 334.6 382.9 333.4 397.0 327.3 411.0 327.2 425.0 317.0 439.1 316.9 453.1 310.3 467.1 309.4 474.1 306.8 481.1 304.5 488.2 302.5 495.2 301.7 502.2 300.5 509.2 298.6 516.2 297.7 523.2 296.3 530.3 294.7 537.3 294.1 544.3 292.4 554.0 290.8" stroke="#9b6400" marker-mid="url(#ou11)" marker-end="url(#ou11)"/>
<path d="M242.6 487.0h0M249.7 440.8h0M270.7 392.1h0M277.7 381.5h0M291.7 369.1h0M298.8 363.9h0M312.8 350.8h0" stroke="#9b6400" stroke-width="5.2" stroke-linecap="round"/>
<path d="M256.7 487.0 263.7 440.1 270.7 417.5 277.7 404.2 284.7 392.3 291.7 381.5 298.8 374.2 305.8 369.8 312.8 363.2 319.8 356.9 326.8 350.5 333.8 347.2" stroke="#926d00" marker-start="url(#o12)" marker-mid="url(#o12)" marker-end="url(#o12)"/>
<path d="M333.8 347.2 340.8 344.2 354.9 340.7 368.9 340.9 382.9 333.6 397.0 333.9 411.0 327.2 425.0 325.6 439.1 317.4 453.1 317.2 467.1 309.8 481.1 310.6 488.2 305.9 495.2 305.3 502.2 302.4 509.2 302.1 516.2 300.6 523.2 298.1 530.3 296.5 537.3 295.3 544.3 294.2 551.3 293.8 558.3 291.6 568.1 290.1" stroke="#926d00" marker-mid="url(#ou12)" marker-end="url(#ou12)"/>
<path d="M270.7 417.5h0M277.7 404.2h0M284.7 392.3h0M319.8 356.9h0M326.8 350.5h0" stroke="#926d00" stroke-width="5.2" stroke-linecap="round"/>
<path d="M270.7 487.0 277.7 439.8 284.7 417.1 291.7 404.7 298.8 392.0 305.8 382.4 312.8 374.5 319.8 369.5 326.8 363.4 333.8 356.9 340.8 351.2 347.9 346.7" stroke="#897600" marker-start="url(#o13)" marker-mid="url(#o13)" marker-end="url(#o13)"/>
<path d="M347.9 346.7 354.9 344.3 368.9 341.6 382.9 340.5 397.0 333.8 411.0 334.5 425.0 326.3 439.1 326.1 453.1 316.6 467.1 317.6 481.1 310.6 495.2 309.9 502.2 306.5 509.2 304.8 516.2 302.7 523.2 301.8 530.3 299.8 537.3 298.0 544.3 297.4 551.3 295.8 558.3 294.2 565.3 292.7 572.3 292.5 582.1 289.9" stroke="#897600" marker-mid="url(#ou13)" marker-end="url(#ou13)"/>
<path d="M298.8 392.0h0M305.8 382.4h0M326.8 363.4h0M340.8 351.2h0" stroke="#897600" stroke-width="5.2" stroke-linecap="round"/>
<path d="M284.7 487.0 291.7 440.1 298.8 416.5 305.8 405.2 312.8 392.3 319.8 381.6 326.8 375.2 333.8 368.7 340.8 364.0 347.9 356.7 354.9 351.4 361.9 345.9" stroke="#808000" marker-start="url(#o14)" marker-mid="url(#o14)" marker-end="url(#o14)"/>
<path d="M361.9 345.9 368.9 344.4 382.9 341.7 397.0 340.2 411.0 334.7 425.0 333.4 439.1 326.9 453.1 326.8 467.1 316.8 481.1 316.5 495.2 310.7 509.2 310.6 516.2 307.0 523.2 304.3 530.3 302.9 537.3 300.9 544.3 300.0 551.3 298.7 558.3 297.5 565.3 295.4 572.3 294.5 579.4 293.8 586.4 292.6 596.1 290.6" stroke="#808000" marker-mid="url(#ou14)" marker-end="url(#ou14)"/>
<path d="M312.8 392.3h0M319.8 381.6h0M361.9 345.9h0" stroke="#808000" stroke-width="5.2" stroke-linecap="round"/>
<path d="M298.8 487.0 305.8 440.3 312.8 416.2 319.8 404.1 326.8 392.8 333.8 382.5 340.8 374.6 347.9 369.3 354.9 364.1 361.9 357.0 368.9 351.0 375.9 347.1" stroke="#768900" marker-start="url(#o15)" marker-mid="url(#o15)" marker-end="url(#o15)"/>
<path d="M375.9 347.1 382.9 344.5 397.0 341.4 411.0 341.6 425.0 334.8 439.1 333.5 453.1 327.4 467.1 326.0 481.1 316.7 495.2 317.6 509.2 310.5 523.2 310.8 530.3 307.1 537.3 305.4 544.3 302.2 551.3 301.7 558.3 300.2 565.3 299.0 572.3 296.6 579.4 296.0 586.4 294.6 593.4 293.6 600.4 292.2 610.2 290.4" stroke="#768900" marker-mid="url(#ou15)" marker-end="url(#ou15)"/>
<path d="M347.9 369.3h0M368.9 351.0h0" stroke="#768900" stroke-width="5.2" stroke-linecap="round"/>
<path d="M312.8 487.0 319.8 439.8 326.8 417.3 333.8 403.9 340.8 393.0 347.9 381.5 354.9 374.8 361.9 369.6 368.9 363.4 375.9 357.1 382.9 351.4 390.0 346.8" stroke="#6d9200" marker-start="url(#o16)" marker-mid="url(#o16)" marker-end="url(#o16)"/>
<path d="M390.0 346.8 397.0 344.6 411.0 340.8 425.0 341.8 439.1 334.1 453.1 334.6 467.1 326.9 481.1 325.9 495.2 317.1 509.2 316.8 523.2 310.6 537.3 309.7 544.3 306.7 551.3 304.8 558.3 302.5 565.3 302.0 572.3 299.9 579.4 299.0 586.4 297.9 593.4 296.3 600.4 295.0 607.4 293.7 614.4 291.4 624.2 291.0" stroke="#6d9200" marker-mid="url(#ou16)" marker-end="url(#ou16)"/>
<path d="M361.9 369.6h0M390.0 346.8h0" stroke="#6d9200" stroke-width="5.2" stroke-linecap="round"/>
<path d="M326.8 487.0 333.8 439.8 340.9 416.2 347.9 404.2 354.9 393.1 361.9 381.5 368.9 375.1 375.9 368.9 382.9 363.7 390.0 357.1 397.0 350.0 404.0 347.1" stroke="#649b00" marker-start="url(#o17)" marker-mid="url(#o17)" marker-end="url(#o17)"/>
<path d="M404.0 347.1 411.0 345.1 425.0 340.9 439.1 340.4 453.1 334.4 467.1 334.6 481.2 327.4 495.2 325.8 509.2 317.1 523.2 317.7 537.3 310.1 551.3 310.5 558.3 306.8 565.3 305.1 572.3 303.2 579.4 300.8 586.4 300.7 593.4 298.9 600.4 297.8 607.4 296.3 614.4 295.4 621.5 293.4 628.5 291.3 638.2 290.3" stroke="#649b00" marker-mid="url(#ou17)" marker-end="url(#ou17)"/>
<path d="M326.8 487.0h0M340.9 416.2h0M347.9 404.2h0M375.9 368.9h0M382.9 363.7h0" stroke="#649b00" stroke-width="5.2" stroke-linecap="round"/>
<path d="M340.9 487.0 347.9 439.9 354.9 417.5 361.9 405.1 368.9 393.2 375.9 381.9 382.9 374.7 390.0 369.7 397.0 364.5 404.0 357.5 411.0 350.4 418.0 346.5" stroke="#5ba400" marker-start="url(#o18)" marker-mid="url(#o18)" marker-end="url(#o18)"/>
<path d="M418.0 346.5 425.0 345.5 439.1 340.9 453.1 340.8 467.1 334.7 481.2 333.9 495.2 326.6 509.2 326.1 523.2 317.0 537.3 316.2 551.3 310.2 565.3 309.5 572.3 306.9 579.4 304.9 586.4 303.3 593.4 301.0 600.4 299.5 607.4 299.0 614.4 297.4 621.5 296.5 628.5 294.6 635.5 294.1 642.5 291.6 652.3 291.4" stroke="#5ba400" marker-mid="url(#ou18)" marker-end="url(#ou18)"/>
<path d="M368.9 393.2h0M382.9 374.7h0M390.0 369.7h0M404.0 357.5h0" stroke="#5ba400" stroke-width="5.2" stroke-linecap="round"/>
<path d="M354.9 487.0 361.9 440.1 368.9 416.1 375.9 405.2 382.9 393.2 390.0 382.7 397.0 374.9 404.0 368.5 411.0 363.0 418.0 356.3 425.0 351.3 432.0 346.8" stroke="#52ad00" marker-start="url(#o19)" marker-mid="url(#o19)" marker-end="url(#o19)"/>
<path d="M432.0 346.8 439.1 345.1 453.1 341.9 467.1 341.7 481.2 334.3 495.2 334.1 509.2 326.4 523.2 327.1 537.3 317.4 551.3 317.4 565.3 310.1 579.4 310.0 586.4 306.0 593.4 304.5 600.4 303.2 607.4 302.2 614.4 300.4 621.5 299.3 628.5 297.4 635.5 295.3 642.5 295.4 649.5 293.6 656.5 291.8 666.3 291.1" stroke="#52ad00" marker-mid="url(#ou19)" marker-end="url(#ou19)"/>
<path d="M354.9 487.0h0M368.9 416.1h0M375.9 405.2h0M382.9 393.2h0M425.0 351.3h0M432.0 346.8h0" stroke="#52ad00" stroke-width="5.2" stroke-linecap="round"/>
<path d="M368.9 487.0 375.9 439.7 382.9 417.6 390.0 404.7 397.0 392.5 404.0 382.2 411.0 374.9 418.0 368.7 425.0 363.7 432.0 356.4 439.1 351.4 446.1 345.9" stroke="#49b600" marker-start="url(#o20)" marker-mid="url(#o20)" marker-end="url(#o20)"/>
<path d="M446.1 345.9 453.1 345.7 467.1 340.9 481.2 341.4 495.2 334.8 509.2 333.7 523.2 326.8 537.3 326.6 551.3 317.5 565.3 316.8 579.4 311.0 593.4 310.6 600.4 306.4 607.4 305.1 614.4 303.3 621.5 301.8 628.5 299.7 635.5 298.8 642.5 297.5 649.5 296.1 656.5 294.3 663.5 293.6 670.6 292.4 680.3 291.4" stroke="#49b600" marker-mid="url(#ou20)" marker-end="url(#ou20)"/>
<path d="M368.9 487.0h0M390.0 404.7h0M439.1 351.4h0" stroke="#49b600" stroke-width="5.2" stroke-linecap="round"/>
<path d="M382.9 487.0 390.0 439.7 397.0 417.1 404.0 404.2 411.0 392.9 418.0 382.1 425.0 374.1 432.0 369.6 439.1 363.8 446.1 356.8 453.1 350.6 460.1 346.8" stroke="#40bf00" marker-start="url(#o21)" marker-mid="url(#o21)" marker-end="url(#o21)"/>
<path d="M460.1 346.8 467.1 345.4 481.2 341.9 495.2 341.4 509.2 335.1 523.2 333.7 537.3 326.2 551.3 326.3 565.3 317.1 579.4 317.1 593.4 310.7 607.4 309.6 614.4 306.6 621.5 304.4 628.5 302.7 635.5 301.4 642.5 300.1 649.5 298.1 656.5 296.4 663.5 295.6 670.6 294.2 677.6 293.2 684.6 291.9 694.3 291.4" stroke="#40bf00" marker-mid="url(#ou21)" marker-end="url(#ou21)"/>
<path d="M382.9 487.0h0M397.0 417.1h0M404.0 404.2h0M418.0 382.1h0" stroke="#40bf00" stroke-width="5.2" stroke-linecap="round"/>
<path d="M397.0 487.0 404.0 440.1 411.0 416.6 418.0 403.9 425.0 392.9 432.0 381.8 439.1 375.3 446.1 369.1 453.1 363.6 460.1 357.2 467.1 350.9 474.1 346.0" stroke="#37c800" marker-start="url(#o22)" marker-mid="url(#o22)" marker-end="url(#o22)"/>
<path d="M474.1 346.0 481.2 345.6 495.2 342.1 509.2 340.3 523.2 333.8 537.3 333.6 551.3 326.9 565.3 326.7 579.4 317.8 593.4 316.3 607.4 309.7 621.5 310.2 628.5 305.8 635.5 304.0 642.5 303.4 649.5 301.3 656.5 300.1 663.5 299.0 670.6 297.5 677.6 296.2 684.6 294.7 691.6 293.2 698.6 291.6 708.4 290.6" stroke="#37c800" marker-mid="url(#ou22)" marker-end="url(#ou22)"/>
<path d="M404.0 440.1h0M439.1 375.3h0M446.1 369.1h0M460.1 357.2h0M474.1 346.0h0" stroke="#37c800" stroke-width="5.2" stroke-linecap="round"/>
<path d="M411.0 487.0 418.0 439.9 425.0 417.2 432.0 403.8 439.1 393.2 446.1 382.4 453.1 375.0 460.1 369.2 467.1 364.5 474.1 356.9 481.2 350.9 488.2 345.8" stroke="#2ed100" marker-start="url(#o23)" marker-mid="url(#o23)" marker-end="url(#o23)"/>
<path d="M488.2 345.8 495.2 344.2 509.2 341.7 523.2 340.7 537.3 334.1 551.3 333.9 565.3 326.6 579.4 326.7 593.4 317.0 607.4 317.6 621.5 311.1 635.5 310.8 642.5 307.1 649.5 304.6 656.5 303.2 663.5 301.0 670.6 299.3 677.6 299.2 684.6 296.5 691.6 296.3 698.6 294.1 705.6 292.8 712.6 291.3 722.4 291.2" stroke="#2ed100" marker-mid="url(#ou23)" marker-end="url(#ou23)"/>
<path d="M411.0 487.0h0M425.0 417.2h0M432.0 403.8h0M439.1 393.2h0M453.1 375.0h0M467.1 364.5h0M474.1 356.9h0" stroke="#2ed100" stroke-width="5.2" stroke-linecap="round"/>
<path d="M425.0 487.0 432.0 440.4 439.1 417.1 446.1 403.8 453.1 392.0 460.1 382.7 467.1 374.2 474.1 369.4 481.2 363.7 488.2 357.5 495.2 351.0 502.2 346.3" stroke="#24db00" marker-start="url(#o24)" marker-mid="url(#o24)" marker-end="url(#o24)"/>
<path d="M502.2 346.3 509.2 344.3 523.2 341.0 537.3 341.5 551.3 335.2 565.3 334.5 579.4 326.2 593.4 326.8 607.4 316.9 621.5 317.4 635.5 310.1 649.5 309.6 656.5 306.1 663.5 305.4 670.6 302.5 677.6 300.8 684.6 299.4 691.6 298.1 698.6 297.1 705.6 295.5 712.6 294.9 719.7 294.1 726.7 292.5 736.4 291.0" stroke="#24db00" marker-mid="url(#ou24)" marker-end="url(#ou24)"/>
<path d="M425.0 487.0h0M446.1 403.8h0M460.1 382.7h0M495.2 351.0h0M502.2 346.3h0" stroke="#24db00" stroke-width="5.2" stroke-linecap="round"/>
<path d="M439.1 487.0 446.1 440.2 453.1 416.3 460.1 404.0 467.1 393.2 474.1 382.2 481.2 374.2 488.2 369.8 495.2 363.4 502.2 357.1 509.2 351.4 516.2 345.9" stroke="#1be400" marker-start="url(#o25)" marker-mid="url(#o25)" marker-end="url(#o25)"/>
<path d="M516.2 345.9 523.2 345.1 537.3 341.9 551.3 341.6 565.3 333.8 579.4 334.1 593.4 326.7 607.4 325.9 621.5 316.5 635.5 317.0 649.5 309.9 663.5 309.7 670.6 306.4 677.6 304.5 684.6 303.7 691.6 301.4 698.6 299.3 705.6 298.0 712.6 297.9 719.7 296.2 726.7 294.9 733.7 293.1 740.7 291.7 750.5 290.5" stroke="#1be400" marker-mid="url(#ou25)" marker-end="url(#ou25)"/>
<path d="M439.1 487.0h0M460.1 404.0h0M474.1 382.2h0M488.2 369.8h0M495.2 363.4h0M502.2 357.1h0M509.2 351.4h0M516.2 345.9h0" stroke="#1be400" stroke-width="5.2" stroke-linecap="round"/>
<path d="M453.1 487.0 460.1 439.5 467.1 416.5 474.1 404.6 481.2 393.1 488.2 382.1 495.2 375.1 502.2 369.4 509.2 364.5 516.2 356.6 523.2 351.0 530.3 346.1" stroke="#12ed00" marker-start="url(#o26)" marker-mid="url(#o26)" marker-end="url(#o26)"/>
<path d="M530.3 346.1 537.3 345.1 551.3 340.6 565.3 341.0 579.4 334.7 593.4 333.7 607.4 326.3 621.5 326.9 635.5 318.1 649.5 316.7 663.5 310.0 677.6 310.3 684.6 305.8 691.6 304.5 698.6 302.9 705.6 301.3 712.7 299.5 719.7 297.9 726.7 297.2 733.7 295.8 740.7 294.9 747.7 293.3 754.7 291.7 764.5 291.3" stroke="#12ed00" marker-mid="url(#ou26)" marker-end="url(#ou26)"/>
<path d="M460.1 439.5h0M488.2 382.1h0M509.2 364.5h0" stroke="#12ed00" stroke-width="5.2" stroke-linecap="round"/>
<path d="M467.1 487.0 474.1 440.7 481.2 417.0 488.2 404.3 495.2 392.2 502.2 382.7 509.2 374.4 516.2 369.0 523.2 363.3 530.3 356.7 537.3 350.2 544.3 346.9" stroke="#09f600" marker-start="url(#o27)" marker-mid="url(#o27)" marker-end="url(#o27)"/>
<path d="M544.3 346.9 551.3 345.2 565.3 341.9 579.4 341.3 593.4 335.1 607.4 334.5 621.5 326.5 635.5 327.1 649.5 317.3 663.5 316.3 677.6 309.7 691.6 310.0 698.6 306.1 705.6 304.8 712.7 302.6 719.7 300.9 726.7 299.8 733.7 299.2 740.7 296.8 747.7 296.2 754.7 295.2 761.8 293.0 768.8 292.1 778.5 291.3" stroke="#09f600" marker-mid="url(#ou27)" marker-end="url(#ou27)"/>
<path d="M467.1 487.0h0M488.2 404.3h0M495.2 392.2h0M509.2 374.4h0M516.2 369.0h0M523.2 363.3h0M537.3 350.2h0" stroke="#09f600" stroke-width="5.2" stroke-linecap="round"/>
<path d="M481.2 487.0 488.2 440.6 495.2 416.2 502.2 405.3 509.2 393.2 516.2 381.4 523.2 374.3 530.3 369.1 537.3 364.0 544.3 356.3 551.3 351.3 558.3 346.9" stroke="#00ff00" marker-start="url(#o28)" marker-mid="url(#o28)" marker-end="url(#o28)"/>
<path d="M558.3 346.9 565.3 345.4 579.4 341.7 593.4 341.3 607.4 335.2 621.5 334.4 635.5 327.6 649.5 325.9 663.5 316.7 677.6 317.4 691.6 310.0 705.6 310.0 712.7 306.7 719.7 305.3 726.7 302.9 733.7 302.2 740.7 299.4 747.7 297.7 754.7 297.9 761.8 296.4 768.8 294.6 775.8 293.5 782.8 292.3 792.6 291.4" stroke="#00ff00" marker-mid="url(#ou28)" marker-end="url(#ou28)"/>
<path d="M488.2 440.6h0M509.2 393.2h0M530.3 369.1h0M537.3 364.0h0M551.3 351.3h0" stroke="#00ff00" stroke-width="5.2" stroke-linecap="round"/>
<path d="M495.2 487.0 502.2 439.7 509.2 416.2 516.2 405.3 523.2 391.9 530.3 382.5 537.3 375.1 544.3 369.1 551.3 363.5 558.3 357.3 565.3 350.1 572.4 346.6" stroke="#00fb00" marker-start="url(#o29)" marker-mid="url(#o29)" marker-end="url(#o29)"/>
<path d="M572.4 346.6 579.4 344.2 593.4 341.0 607.4 341.8 621.5 335.2 635.5 333.5 649.5 326.9 663.5 326.4 677.6 317.0 691.6 316.5 705.6 310.5 719.7 310.8 726.7 307.1 733.7 304.7 740.7 302.9 747.7 302.2 754.7 299.5 761.8 298.8 768.8 296.6 775.8 295.9 782.8 295.4 789.8 293.6 796.8 291.8 806.6 291.1" stroke="#00fb00" marker-mid="url(#ou29)" marker-end="url(#ou29)"/>
<path d="M509.2 416.2h0M523.2 391.9h0M537.3 375.1h0M572.4 346.6h0" stroke="#00fb00" stroke-width="5.2" stroke-linecap="round"/>
<path d="M509.2 487.0 516.2 440.3 523.2 416.2 530.3 404.6 537.3 393.3 544.3 382.6 551.3 374.7 558.3 368.3 565.3 364.2 572.4 357.0 579.4 350.9 586.4 346.8" stroke="#00f600" marker-start="url(#o30)" marker-mid="url(#o30)" marker-end="url(#o30)"/>
<path d="M586.4 346.8 593.4 344.4 607.4 340.6 621.5 340.3 635.5 334.1 649.5 334.4 663.5 326.7 677.6 326.1 691.6 316.8 705.6 316.3 719.7 310.7 733.7 310.0 740.7 306.1 747.7 305.5 754.7 303.5 761.8 301.7 768.8 300.2 775.8 298.3 782.8 296.8 789.8 296.2 796.8 295.4 803.8 293.8 810.9 292.6 820.6 290.9" stroke="#00f600" marker-mid="url(#ou30)" marker-end="url(#ou30)"/>
<path d="M509.2 487.0h0M530.3 404.6h0M558.3 368.3h0M565.3 364.2h0M572.4 357.0h0" stroke="#00f600" stroke-width="5.2" stroke-linecap="round"/>
<path d="M523.2 487.0 530.3 439.8 537.3 416.6 544.3 405.0 551.3 393.2 558.3 382.7 565.3 375.1 572.4 369.1 579.4 364.6 586.4 357.4 593.4 351.2 600.4 346.9" stroke="#00f200" marker-start="url(#o31)" marker-mid="url(#o31)" marker-end="url(#o31)"/>
<path d="M600.4 346.9 607.4 345.5 621.5 341.1 635.5 341.3 649.5 335.1 663.5 334.3 677.6 327.4 691.6 327.1 705.6 316.7 719.7 316.4 733.7 310.8 747.7 310.8 754.7 306.7 761.8 305.2 768.8 303.3 775.8 301.4 782.8 300.4 789.8 298.9 796.8 298.0 803.8 296.4 810.9 293.9 817.9 293.6 824.9 292.4 834.6 291.0" stroke="#00f200" marker-mid="url(#ou31)" marker-end="url(#ou31)"/>
<path d="M523.2 487.0h0M530.3 439.8h0M537.3 416.6h0M565.3 375.1h0" stroke="#00f200" stroke-width="5.2" stroke-linecap="round"/>
<path d="M537.3 487.0 544.3 439.8 551.3 416.1 558.3 404.7 565.3 392.8 572.4 382.3 579.4 374.4 586.4 368.8 593.4 364.1 600.4 356.7 607.4 350.9 614.4 347.0" stroke="#00ed00" marker-start="url(#o32)" marker-mid="url(#o32)" marker-end="url(#o32)"/>
<path d="M614.4 347.0 621.5 344.2 635.5 342.1 649.5 341.2 663.5 334.9 677.6 333.3 691.6 326.3 705.6 326.4 719.7 316.9 733.7 316.8 747.7 311.1 761.8 310.6 768.8 306.3 775.8 304.1 782.8 303.4 789.8 301.9 796.8 300.1 803.8 298.2 810.9 297.8 817.9 296.3 824.9 294.7 831.9 293.5 838.9 291.5 848.7 290.1" stroke="#00ed00" marker-mid="url(#ou32)" marker-end="url(#ou32)"/>
<path d="M537.3 487.0h0M565.3 392.8h0M586.4 368.8h0M593.4 364.1h0M600.4 356.7h0M607.4 350.9h0" stroke="#00ed00" stroke-width="5.2" stroke-linecap="round"/>
<path d="M551.3 487.0 558.3 440.3 565.3 416.3 572.4 403.8 579.4 391.8 586.4 381.9 593.4 374.2 600.4 369.7 607.4 363.6 614.4 357.5 621.5 350.7 628.5 346.2" stroke="#00e900" marker-start="url(#o33)" marker-mid="url(#o33)" marker-end="url(#o33)"/>
<path d="M628.5 346.2 635.5 345.0 649.5 341.0 663.5 340.6 677.6 334.8 691.6 334.5 705.6 326.2 719.7 326.2 733.7 317.1 747.7 317.2 761.8 310.0 775.8 309.5 782.8 306.7 789.8 304.7 796.8 303.0 803.8 301.6 810.9 300.6 817.9 298.4 824.9 297.7 831.9 296.0 838.9 295.0 845.9 292.8 853.0 291.3 862.7 291.3" stroke="#00e900" marker-mid="url(#ou33)" marker-end="url(#ou33)"/>
<path d="M579.4 391.8h0M600.4 369.7h0M607.4 363.6h0M621.5 350.7h0" stroke="#00e900" stroke-width="5.2" stroke-linecap="round"/>
<path d="M565.3 487.0 572.4 439.9 579.4 416.8 586.4 404.5 593.4 392.4 600.4 381.9 607.4 374.2 614.4 369.5 621.5 363.9 628.5 357.1 635.5 350.4 642.5 345.9" stroke="#00e401" marker-start="url(#o34)" marker-mid="url(#o34)" marker-end="url(#o34)"/>
<path d="M642.5 345.9 649.5 345.5 663.6 340.9 677.6 341.5 691.6 335.0 705.6 334.4 719.7 326.9 733.7 327.1 747.7 318.0 761.8 317.2 775.8 310.3 789.8 309.5 796.8 305.9 803.9 305.1 810.9 302.8 817.9 301.0 824.9 300.4 831.9 298.9 838.9 297.7 845.9 296.0 853.0 293.9 860.0 293.4 867.0 291.9 876.7 290.2" stroke="#00e401" marker-mid="url(#ou34)" marker-end="url(#ou34)"/>
<path d="M586.4 404.5h0M600.4 381.9h0M614.4 369.5h0M635.5 350.4h0" stroke="#00e401" stroke-width="5.2" stroke-linecap="round"/>
<path d="M579.4 487.0 586.4 440.8 593.4 417.3 600.4 404.4 607.4 392.7 614.4 382.1 621.5 374.3 628.5 369.8 635.5 364.6 642.5 356.4 649.5 350.6 656.5 346.0" stroke="#00e001" marker-start="url(#o35)" marker-mid="url(#o35)" marker-end="url(#o35)"/>
<path d="M656.5 346.0 663.6 345.1 677.6 341.8 691.6 340.4 705.6 333.7 719.7 334.1 733.7 327.3 747.7 325.7 761.8 317.1 775.8 316.6 789.8 310.2 803.9 310.8 810.9 307.1 817.9 305.2 824.9 303.0 831.9 302.1 838.9 299.9 845.9 297.9 853.0 297.3 860.0 296.7 867.0 294.7 874.0 294.1 881.0 292.7 890.8 290.5" stroke="#00e001" marker-mid="url(#ou35)" marker-end="url(#ou35)"/>
<path d="M579.4 487.0h0M621.5 374.3h0M628.5 369.8h0M656.5 346.0h0" stroke="#00e001" stroke-width="5.2" stroke-linecap="round"/>
<path d="M593.4 487.0 600.4 441.0 607.4 416.7 614.4 404.7 621.5 392.1 628.5 382.2 635.5 374.5 642.5 369.5 649.5 363.7 656.5 357.0 663.6 350.9 670.6 346.2" stroke="#00db02" marker-start="url(#o36)" marker-mid="url(#o36)" marker-end="url(#o36)"/>
<path d="M670.6 346.2 677.6 344.3 691.6 341.6 705.6 340.4 719.7 333.8 733.7 334.0 747.7 326.7 761.8 326.2 775.8 316.7 789.8 316.4 803.9 311.0 817.9 310.8 824.9 306.1 831.9 304.5 838.9 302.6 845.9 300.9 853.0 299.6 860.0 298.0 867.0 296.4 874.0 296.6 881.0 294.5 888.0 294.1 895.0 291.4 904.8 290.8" stroke="#00db02" marker-mid="url(#ou36)" marker-end="url(#ou36)"/>
<path d="M600.4 441.0h0M621.5 392.1h0M635.5 374.5h0M663.6 350.9h0" stroke="#00db02" stroke-width="5.2" stroke-linecap="round"/>
<path d="M607.4 487.0 614.4 440.4 621.5 416.9 628.5 404.5 635.5 392.0 642.5 382.1 649.5 374.7 656.5 368.6 663.6 363.2 670.6 356.4 677.6 351.1 684.6 345.9" stroke="#00d702" marker-start="url(#o37)" marker-mid="url(#o37)" marker-end="url(#o37)"/>
<path d="M684.6 345.9 691.6 344.5 705.6 341.0 719.7 341.5 733.7 334.0 747.7 333.5 761.8 327.5 775.8 325.7 789.8 317.3 803.9 316.4 817.9 309.9 831.9 309.4 838.9 306.2 845.9 305.2 853.0 302.3 860.0 301.4 867.0 299.4 874.0 298.1 881.0 296.7 888.0 296.0 895.0 294.7 902.1 293.6 909.1 291.8 918.8 290.6" stroke="#00d702" marker-mid="url(#ou37)" marker-end="url(#ou37)"/>
<path d="M607.4 487.0h0M628.5 404.5h0M635.5 392.0h0M642.5 382.1h0M656.5 368.6h0M677.6 351.1h0" stroke="#00d702" stroke-width="5.2" stroke-linecap="round"/>
<path d="M621.5 487.0 628.5 440.4 635.5 417.2 642.5 404.8 649.5 393.2 656.5 381.2 663.6 375.5 670.6 369.3 677.6 363.4 684.6 356.4 691.6 350.5 698.6 347.1" stroke="#00d203" marker-start="url(#o38)" marker-mid="url(#o38)" marker-end="url(#o38)"/>
<path d="M698.6 347.1 705.6 344.4 719.7 341.1 733.7 340.8 747.7 334.4 761.8 334.0 775.8 326.6 789.8 326.4 803.9 317.1 817.9 316.8 831.9 309.9 845.9 310.3 853.0 307.4 860.0 305.5 867.0 303.4 874.0 301.8 881.0 300.7 888.0 297.9 895.0 297.0 902.1 295.8 909.1 295.2 916.1 293.3 923.1 291.6 932.9 290.8" stroke="#00d203" marker-mid="url(#ou38)" marker-end="url(#ou38)"/>
<path d="M635.5 417.2h0M677.6 363.4h0M684.6 356.4h0M698.6 347.1h0" stroke="#00d203" stroke-width="5.2" stroke-linecap="round"/>
<path d="M635.5 487.0 642.5 440.1 649.5 417.1 656.5 405.3 663.6 392.5 670.6 381.5 677.6 374.5 684.6 369.8 691.6 364.0 698.6 357.4 705.6 350.5 712.7 346.9" stroke="#00ce04" marker-start="url(#o39)" marker-mid="url(#o39)" marker-end="url(#o39)"/>
<path d="M712.7 346.9 719.7 345.6 733.7 340.7 747.7 341.5 761.8 335.0 775.8 334.8 789.8 326.2 803.9 325.9 817.9 318.0 831.9 316.8 845.9 310.1 860.0 310.3 867.0 306.3 874.0 304.5 881.0 302.8 888.0 301.0 895.0 300.5 902.1 298.8 909.1 296.6 916.1 295.5 923.1 294.0 930.1 293.3 937.1 292.2 946.9 290.6" stroke="#00ce04" marker-mid="url(#ou39)" marker-end="url(#ou39)"/>
<path d="M635.5 487.0h0M656.5 405.3h0M663.6 392.5h0M670.6 381.5h0M698.6 357.4h0" stroke="#00ce04" stroke-width="5.2" stroke-linecap="round"/>
<path d="M649.5 487.0 656.5 440.9 663.6 416.2 670.6 405.2 677.6 392.4 684.6 381.3 691.6 374.6 698.6 369.5 705.6 364.4 712.7 356.4 719.7 350.5 726.7 346.7" stroke="#00c904" marker-start="url(#o40)" marker-mid="url(#o40)" marker-end="url(#o40)"/>
<path d="M726.7 346.7 733.7 345.7 747.7 342.1 761.8 340.3 775.8 334.1 789.8 333.6 803.9 326.6 817.9 325.9 831.9 317.3 845.9 317.7 860.0 310.7 874.0 309.5 881.0 306.9 888.0 305.2 895.0 302.6 902.1 302.0 909.1 300.7 916.1 297.9 923.1 297.1 930.1 296.5 937.1 295.0 944.2 294.1 951.2 292.2 960.9 291.1" stroke="#00c904" marker-mid="url(#ou40)" marker-end="url(#ou40)"/>
<path d="M649.5 487.0h0M663.6 416.2h0M670.6 405.2h0M691.6 374.6h0" stroke="#00c904" stroke-width="5.2" stroke-linecap="round"/>
<path d="M663.6 487.0 670.6 440.0 677.6 417.2 684.6 404.2 691.6 392.4 698.6 381.2 705.6 374.5 712.7 368.6 719.7 363.6 726.7 356.9 733.7 351.4 740.7 345.9" stroke="#00c505" marker-start="url(#o41)" marker-mid="url(#o41)" marker-end="url(#o41)"/>
<path d="M740.7 345.9 747.7 345.6 761.8 341.0 775.8 341.3 789.8 333.9 803.9 334.1 817.9 326.2 831.9 327.1 845.9 317.9 860.0 317.4 874.0 309.8 888.0 309.5 895.0 305.8 902.1 305.1 909.1 303.2 916.1 302.0 923.1 300.2 930.1 297.7 937.1 297.7 944.2 295.2 951.2 295.0 958.2 293.3 965.2 292.5 975.0 290.0" stroke="#00c505" marker-mid="url(#ou41)" marker-end="url(#ou41)"/>
<path d="M663.6 487.0h0M684.6 404.2h0M691.6 392.4h0M733.7 351.4h0" stroke="#00c505" stroke-width="5.2" stroke-linecap="round"/>
<path d="M677.6 487.0 684.6 439.4 691.6 416.7 698.6 405.2 705.6 393.0 712.7 381.7 719.7 374.2 726.7 368.5 733.7 364.5 740.7 357.6 747.7 350.5 754.7 345.9" stroke="#00c007" marker-start="url(#o42)" marker-mid="url(#o42)" marker-end="url(#o42)"/>
<path d="M754.7 345.9 761.8 344.2 775.8 341.8 789.8 340.7 803.9 334.5 817.9 333.7 831.9 327.3 845.9 325.7 860.0 317.2 874.0 316.5 888.0 309.8 902.1 309.8 909.1 306.3 916.1 305.5 923.1 302.6 930.1 301.1 937.1 299.3 944.2 298.2 951.2 297.6 958.2 295.6 965.2 294.3 972.2 292.6 979.2 292.5 989.0 290.4" stroke="#00c007" marker-mid="url(#ou42)" marker-end="url(#ou42)"/>
<path d="M705.6 393.0h0M712.7 381.7h0M719.7 374.2h0M726.7 368.5h0M733.7 364.5h0M740.7 357.6h0M747.7 350.5h0M754.7 345.9h0" stroke="#00c007" stroke-width="5.2" stroke-linecap="round"/>
<path d="M691.6 487.0 698.6 439.4 705.6 417.5 712.7 405.1 719.7 393.4 726.7 381.7 733.7 374.1 740.7 369.1 747.7 363.7 754.8 357.1 761.8 351.4 768.8 346.0" stroke="#00bc08" marker-start="url(#o43)" marker-mid="url(#o43)" marker-end="url(#o43)"/>
<path d="M768.8 346.0 775.8 344.1 789.8 341.1 803.9 341.2 817.9 334.3 831.9 334.3 845.9 327.2 860.0 325.7 874.0 317.6 888.0 317.0 902.1 311.0 916.1 310.8 923.1 306.4 930.1 305.0 937.1 302.3 944.2 300.8 951.2 300.5 958.2 298.0 965.2 297.0 972.2 295.5 979.2 294.0 986.2 293.9 993.3 292.2 1003.0 290.4" stroke="#00bc08" marker-mid="url(#ou43)" marker-end="url(#ou43)"/>
<path d="M733.7 374.1h0M747.7 363.7h0M754.8 357.1h0M761.8 351.4h0" stroke="#00bc08" stroke-width="5.2" stroke-linecap="round"/>
<path d="M705.6 487.0 712.7 440.9 719.7 416.7 726.7 404.2 733.7 392.7 740.7 381.5 747.7 374.7 754.8 369.5 761.8 363.2 768.8 357.2 775.8 350.1 782.8 346.1" stroke="#00b709" marker-start="url(#o44)" marker-mid="url(#o44)" marker-end="url(#o44)"/>
<path d="M782.8 346.1 789.8 345.4 803.9 341.6 817.9 341.1 831.9 334.2 845.9 333.9 860.0 326.3 874.0 326.5 888.0 318.0 902.1 316.4 916.1 310.2 930.1 310.7 937.1 307.4 944.2 304.3 951.2 303.0 958.2 300.8 965.2 300.2 972.2 297.8 979.2 296.9 986.2 296.5 993.3 295.4 1000.3 293.0 1007.3 292.6 1017.0 291.0" stroke="#00b709" marker-mid="url(#ou44)" marker-end="url(#ou44)"/>
<path d="M705.6 487.0h0M712.7 440.9h0M726.7 404.2h0M733.7 392.7h0M740.7 381.5h0M747.7 374.7h0M761.8 363.2h0M782.8 346.1h0" stroke="#00b709" stroke-width="5.2" stroke-linecap="round"/>
<path d="M719.7 487.0 726.7 439.5 733.7 417.2 740.7 404.1 747.7 392.8 754.8 381.7 761.8 375.1 768.8 369.0 775.8 364.3 782.8 356.4 789.8 350.3 796.8 347.2" stroke="#00b30b" marker-start="url(#o45)" marker-mid="url(#o45)" marker-end="url(#o45)"/>
<path d="M796.8 347.2 803.9 344.2 817.9 342.0 831.9 341.0 845.9 334.4 860.0 334.3 874.0 327.2 888.0 327.0 902.1 317.5 916.1 316.3 930.1 310.6 944.2 309.4 951.2 306.5 958.2 304.6 965.2 302.8 972.2 301.1 979.2 299.2 986.2 298.0 993.3 297.2 1000.3 296.5 1007.3 295.3 1014.3 293.9 1021.3 292.5 1031.1 291.2" stroke="#00b30b" marker-mid="url(#ou45)" marker-end="url(#ou45)"/>
<path d="M726.7 439.5h0M733.7 417.2h0M747.7 392.8h0M761.8 375.1h0M768.8 369.0h0M782.8 356.4h0M796.8 347.2h0" stroke="#00b30b" stroke-width="5.2" stroke-linecap="round"/>
<path d="M733.7 487.0 740.7 440.7 747.7 416.3 754.8 404.9 761.8 392.6 768.8 382.5 775.8 374.1 782.8 369.7 789.8 363.6 796.8 356.5 803.9 351.2 810.9 346.5" stroke="#00ae0d" marker-start="url(#o46)" marker-mid="url(#o46)" marker-end="url(#o46)"/>
<path d="M810.9 346.5 817.9 345.6 831.9 341.1 845.9 341.0 860.0 334.9 874.0 334.5 888.0 326.9 902.1 326.6 916.1 318.0 930.1 316.9 944.2 310.4 958.2 310.6 965.2 307.0 972.2 305.0 979.2 303.7 986.2 300.8 993.3 300.5 1000.3 299.1 1007.3 296.5 1014.3 296.6 1021.3 294.9 1028.3 294.1 1035.4 292.6 1045.1 290.3" stroke="#00ae0d" marker-mid="url(#ou46)" marker-end="url(#ou46)"/>
<path d="M733.7 487.0h0M740.7 440.7h0M761.8 392.6h0M775.8 374.1h0M789.8 363.6h0" stroke="#00ae0d" stroke-width="5.2" stroke-linecap="round"/>
<path d="M747.7 487.0 754.8 440.2 761.8 417.6 768.8 404.8 775.8 393.3 782.8 381.7 789.8 374.0 796.8 369.0 803.9 363.8 810.9 356.9 817.9 351.4 824.9 346.0" stroke="#00aa0f" marker-start="url(#o47)" marker-mid="url(#o47)" marker-end="url(#o47)"/>
<path d="M824.9 346.0 831.9 345.4 845.9 340.7 860.0 340.6 874.0 333.7 888.0 334.2 902.1 326.0 916.1 326.8 930.1 317.1 944.2 316.7 958.2 310.7 972.2 310.5 979.2 305.8 986.2 305.1 993.3 303.7 1000.3 301.7 1007.3 300.4 1014.3 297.7 1021.3 296.9 1028.3 296.3 1035.4 294.1 1042.4 293.1 1049.4 292.1 1059.1 291.2" stroke="#00aa0f" marker-mid="url(#ou47)" marker-end="url(#ou47)"/>
<path d="M754.8 440.2h0M761.8 417.6h0M789.8 374.0h0M803.9 363.8h0M817.9 351.4h0" stroke="#00aa0f" stroke-width="5.2" stroke-linecap="round"/>
<path d="M761.8 487.0 768.8 439.7 775.8 416.1 782.8 404.1 789.8 392.7 796.8 381.6 803.9 374.4 810.9 369.2 817.9 364.0 824.9 357.4 831.9 350.4 838.9 346.7" stroke="#00a611" marker-start="url(#o48)" marker-mid="url(#o48)" marker-end="url(#o48)"/>
<path d="M838.9 346.7 845.9 345.2 860.0 342.0 874.0 341.4 888.0 334.9 902.1 334.4 916.1 326.0 930.1 326.4 944.2 318.0 958.2 317.1 972.2 311.0 986.2 309.8 993.3 306.8 1000.3 305.0 1007.3 302.5 1014.3 300.8 1021.3 300.6 1028.3 297.9 1035.4 297.4 1042.4 295.7 1049.4 295.4 1056.4 293.9 1063.4 292.4 1073.2 291.4" stroke="#00a611" marker-mid="url(#ou48)" marker-end="url(#ou48)"/>
<path d="M768.8 439.7h0M775.8 416.1h0M782.8 404.1h0M789.8 392.7h0M803.9 374.4h0M810.9 369.2h0M817.9 364.0h0M831.9 350.4h0" stroke="#00a611" stroke-width="5.2" stroke-linecap="round"/>
<path d="M775.8 487.0 782.8 440.1 789.8 416.5 796.8 404.0 803.9 392.5 810.9 382.2 817.9 374.2 824.9 369.4 831.9 363.0 838.9 357.2 845.9 351.3 853.0 347.2" stroke="#00a113" marker-start="url(#o49)" marker-mid="url(#o49)" marker-end="url(#o49)"/>
<path d="M853.0 347.2 860.0 345.2 874.0 340.9 888.0 340.9 902.1 334.2 916.1 334.6 930.1 326.4 944.2 327.2 958.2 317.3 972.2 317.6 986.2 311.2 1000.3 310.7 1007.3 306.0 1014.3 304.0 1021.3 302.6 1028.3 300.9 1035.4 299.6 1042.4 298.6 1049.4 297.9 1056.4 295.5 1063.4 294.8 1070.4 292.6 1077.4 291.5 1087.2 291.4" stroke="#00a113" marker-mid="url(#ou49)" marker-end="url(#ou49)"/>
<path d="M789.8 416.5h0M796.8 404.0h0M810.9 382.2h0M838.9 357.2h0M845.9 351.3h0M853.0 347.2h0" stroke="#00a113" stroke-width="5.2" stroke-linecap="round"/>
<path d="M789.8 487.0 796.8 439.9 803.9 417.2 810.9 405.2 817.9 392.5 824.9 382.2 831.9 374.7 838.9 368.5 845.9 364.4 853.0 357.3 860.0 351.2 867.0 347.3" stroke="#009d15" marker-start="url(#o50)" marker-mid="url(#o50)" marker-end="url(#o50)"/>
<path d="M867.0 347.3 874.0 344.2 888.0 342.1 902.1 341.1 916.1 334.5 930.1 333.8 944.2 326.3 958.2 327.2 972.2 316.7 986.2 316.3 1000.3 310.8 1014.3 309.6 1021.3 306.0 1028.3 304.2 1035.4 302.9 1042.4 301.0 1049.4 300.7 1056.4 298.4 1063.4 297.8 1070.4 296.7 1077.4 295.4 1084.5 292.6 1091.5 291.3 1101.2 291.1" stroke="#009d15" marker-mid="url(#ou50)" marker-end="url(#ou50)"/>
<path d="M789.8 487.0h0M796.8 439.9h0M838.9 368.5h0M845.9 364.4h0M853.0 357.3h0M860.0 351.2h0M867.0 347.3h0" stroke="#009d15" stroke-width="5.2" stroke-linecap="round"/>
<path d="M803.9 487.0 810.9 440.8 817.9 417.1 824.9 404.5 831.9 393.0 838.9 382.0 846.0 374.5 853.0 369.5 860.0 363.8 867.0 356.7 874.0 350.6 881.0 346.1" stroke="#009818" marker-start="url(#o51)" marker-mid="url(#o51)" marker-end="url(#o51)"/>
<path d="M881.0 346.1 888.0 344.8 902.1 341.6 916.1 341.3 930.1 334.2 944.2 333.5 958.2 326.1 972.2 326.8 986.3 316.9 1000.3 317.1 1014.3 310.4 1028.3 310.4 1035.4 306.5 1042.4 304.2 1049.4 302.4 1056.4 301.2 1063.4 299.3 1070.4 298.5 1077.4 297.3 1084.5 296.3 1091.5 294.9 1098.5 294.0 1105.5 291.5 1115.3 290.8" stroke="#009818" marker-mid="url(#ou51)" marker-end="url(#ou51)"/>
<path d="M810.9 440.8h0M817.9 417.1h0M824.9 404.5h0M846.0 374.5h0M881.0 346.1h0" stroke="#009818" stroke-width="5.2" stroke-linecap="round"/>
<path d="M817.9 487.0 824.9 439.4 831.9 417.4 838.9 404.8 846.0 393.0 853.0 382.0 860.0 374.6 867.0 369.7 874.0 363.6 881.0 356.5 888.0 351.2 895.1 347.2" stroke="#00941b" marker-start="url(#o52)" marker-mid="url(#o52)" marker-end="url(#o52)"/>
<path d="M895.1 347.2 902.1 344.8 916.1 340.6 930.1 340.3 944.2 334.0 958.2 333.8 972.2 326.6 986.3 326.2 1000.3 318.1 1014.3 317.3 1028.3 310.9 1042.4 310.5 1049.4 306.5 1056.4 304.5 1063.4 303.1 1070.4 302.2 1077.4 300.1 1084.5 298.6 1091.5 297.7 1098.5 295.8 1105.5 295.4 1112.5 293.3 1119.5 292.7 1129.3 290.5" stroke="#00941b" marker-mid="url(#ou52)" marker-end="url(#ou52)"/>
<path d="M838.9 404.8h0M888.0 351.2h0" stroke="#00941b" stroke-width="5.2" stroke-linecap="round"/>
<path d="M831.9 487.0 838.9 440.3 846.0 417.5 853.0 403.8 860.0 392.5 867.0 382.6 874.0 375.5 881.0 369.2 888.0 363.5 895.1 357.3 902.1 350.0 909.1 346.0" stroke="#008f1e" marker-start="url(#o53)" marker-mid="url(#o53)" marker-end="url(#o53)"/>
<path d="M909.1 346.0 916.1 344.8 930.1 340.7 944.2 340.8 958.2 334.8 972.2 334.7 986.3 327.3 1000.3 326.3 1014.3 318.1 1028.3 317.5 1042.4 310.9 1056.4 309.4 1063.4 306.2 1070.4 305.0 1077.4 302.8 1084.5 301.5 1091.5 299.9 1098.5 298.0 1105.5 296.6 1112.5 296.6 1119.5 294.7 1126.6 294.0 1133.6 292.5 1143.3 291.4" stroke="#008f1e" marker-mid="url(#ou53)" marker-end="url(#ou53)"/>
<path d="M831.9 487.0h0M838.9 440.3h0M853.0 403.8h0M860.0 392.5h0M888.0 363.5h0M902.1 350.0h0" stroke="#008f1e" stroke-width="5.2" stroke-linecap="round"/>
<path d="M846.0 487.0 853.0 440.6 860.0 417.4 867.0 404.0 874.0 393.2 881.0 382.5 888.0 375.3 895.1 369.4 902.1 364.5 909.1 357.3 916.1 351.3 923.1 346.4" stroke="#008b21" marker-start="url(#o54)" marker-mid="url(#o54)" marker-end="url(#o54)"/>
<path d="M923.1 346.4 930.1 344.2 944.2 342.1 958.2 341.3 972.2 335.1 986.3 334.6 1000.3 327.5 1014.3 326.8 1028.3 316.6 1042.4 317.4 1056.4 310.3 1070.4 310.6 1077.4 305.9 1084.5 304.9 1091.5 302.5 1098.5 300.8 1105.5 300.1 1112.5 299.1 1119.5 296.6 1126.6 295.9 1133.6 294.8 1140.6 293.5 1147.6 292.7 1157.4 290.0" stroke="#008b21" marker-mid="url(#ou54)" marker-end="url(#ou54)"/>
<path d="M853.0 440.6h0M881.0 382.5h0M902.1 364.5h0M916.1 351.3h0" stroke="#008b21" stroke-width="5.2" stroke-linecap="round"/>
<path d="M860.0 487.0 867.0 440.2 874.0 416.3 881.0 405.0 888.0 391.9 895.1 382.1 902.1 374.5 909.1 369.6 916.1 364.1 923.1 356.7 930.1 350.8 937.1 346.6" stroke="#008625" marker-start="url(#o55)" marker-mid="url(#o55)" marker-end="url(#o55)"/>
<path d="M937.1 346.6 944.2 345.5 958.2 341.4 972.2 341.1 986.3 333.8 1000.3 334.8 1014.3 327.1 1028.3 326.1 1042.4 317.8 1056.4 317.0 1070.4 309.7 1084.5 310.0 1091.5 306.0 1098.5 304.8 1105.5 303.7 1112.5 301.9 1119.5 300.0 1126.6 298.9 1133.6 296.6 1140.6 295.5 1147.6 294.9 1154.6 293.9 1161.6 291.4 1171.4 290.1" stroke="#008625" marker-mid="url(#ou55)" marker-end="url(#ou55)"/>
<path d="M860.0 487.0h0M888.0 391.9h0M895.1 382.1h0" stroke="#008625" stroke-width="5.2" stroke-linecap="round"/>
<path d="M874.0 487.0 881.0 440.8 888.0 416.8 895.1 404.8 902.1 393.3 909.1 382.1 916.1 375.0 923.1 368.8 930.1 363.5 937.1 356.2 944.2 350.4 951.2 347.2" stroke="#008228" marker-start="url(#o56)" marker-mid="url(#o56)" marker-end="url(#o56)"/>
<path d="M951.2 347.2 958.2 344.2 972.2 341.4 986.3 340.5 1000.3 334.3 1014.3 334.3 1028.3 327.2 1042.4 327.1 1056.4 317.0 1070.4 317.7 1084.5 310.4 1098.5 310.5 1105.5 307.3 1112.5 305.1 1119.5 302.5 1126.6 301.3 1133.6 299.2 1140.6 299.0 1147.6 296.6 1154.6 295.2 1161.6 294.4 1168.6 294.0 1175.7 291.4 1185.4 290.1" stroke="#008228" marker-mid="url(#ou56)" marker-end="url(#ou56)"/>
<path d="M881.0 440.8h0M895.1 404.8h0M902.1 393.3h0M909.1 382.1h0M923.1 368.8h0" stroke="#008228" stroke-width="5.2" stroke-linecap="round"/>
<path d="M888.0 487.0 895.1 439.7 902.1 416.9 909.1 405.3 916.1 393.3 923.1 381.9 930.1 375.4 937.1 368.4 944.2 363.2 951.2 357.1 958.2 350.4 965.2 345.8" stroke="#007d2c" marker-start="url(#o57)" marker-mid="url(#o57)" marker-end="url(#o57)"/>
<path d="M965.2 345.8 972.2 344.8 986.3 341.9 1000.3 341.5 1014.3 335.0 1028.3 334.0 1042.4 326.1 1056.4 326.1 1070.4 317.5 1084.5 316.8 1098.5 309.7 1112.5 309.6 1119.5 306.3 1126.6 304.9 1133.6 302.6 1140.6 300.9 1147.6 300.2 1154.6 298.8 1161.6 296.5 1168.6 295.8 1175.7 294.6 1182.7 293.2 1189.7 291.4 1199.4 290.3" stroke="#007d2c" marker-mid="url(#ou57)" marker-end="url(#ou57)"/>
<path d="M895.1 439.7h0M902.1 416.9h0M909.1 405.3h0M930.1 375.4h0M951.2 357.1h0" stroke="#007d2c" stroke-width="5.2" stroke-linecap="round"/>
<path d="M902.1 487.0 909.1 439.6 916.1 416.9 923.1 404.0 930.1 393.2 937.1 381.3 944.2 374.1 951.2 368.7 958.2 364.2 965.2 356.1 972.2 351.0 979.2 345.9" stroke="#007930" marker-start="url(#o58)" marker-mid="url(#o58)" marker-end="url(#o58)"/>
<path d="M979.2 345.9 986.3 345.2 1000.3 341.6 1014.3 340.8 1028.3 333.8 1042.4 334.0 1056.4 326.5 1070.4 326.4 1084.5 317.2 1098.5 317.8 1112.5 310.5 1126.6 309.7 1133.6 306.2 1140.6 304.1 1147.6 302.6 1154.6 302.1 1161.6 299.7 1168.6 298.5 1175.7 296.4 1182.7 295.8 1189.7 294.5 1196.7 292.6 1203.7 292.0 1213.5 290.7" stroke="#007930" marker-mid="url(#ou58)" marker-end="url(#ou58)"/>
<path d="M902.1 487.0h0M923.1 404.0h0M937.1 381.3h0M951.2 368.7h0M965.2 356.1h0M972.2 351.0h0M979.2 345.9h0" stroke="#007930" stroke-width="5.2" stroke-linecap="round"/>
<path d="M916.1 487.0 923.1 440.7 930.1 417.3 937.1 403.9 944.2 392.5 951.2 382.2 958.2 374.4 965.2 368.5 972.2 363.5 979.2 357.3 986.3 351.1 993.3 347.1" stroke="#007434" marker-start="url(#o59)" marker-mid="url(#o59)" marker-end="url(#o59)"/>
<path d="M993.3 347.1 1000.3 344.6 1014.3 341.4 1028.3 340.6 1042.4 334.4 1056.4 334.1 1070.4 326.7 1084.5 326.3 1098.5 317.1 1112.5 317.5 1126.6 310.8 1140.6 310.5 1147.6 306.8 1154.6 305.2 1161.6 303.3 1168.6 301.0 1175.7 300.5 1182.7 298.9 1189.7 298.0 1196.7 295.5 1203.7 294.9 1210.7 293.2 1217.7 291.3 1227.5 290.6" stroke="#007434" marker-mid="url(#ou59)" marker-end="url(#ou59)"/>
<path d="M923.1 440.7h0M972.2 363.5h0M993.3 347.1h0" stroke="#007434" stroke-width="5.2" stroke-linecap="round"/>
<path d="M930.1 487.0 937.2 439.7 944.2 417.4 951.2 405.1 958.2 393.3 965.2 381.4 972.2 375.3 979.2 369.8 986.3 363.6 993.3 356.9 1000.3 350.0 1007.3 346.8" stroke="#007039" marker-start="url(#o60)" marker-mid="url(#o60)" marker-end="url(#o60)"/>
<path d="M1007.3 346.8 1014.3 344.9 1028.3 340.5 1042.4 341.6 1056.4 335.2 1070.4 334.3 1084.5 327.4 1098.5 326.2 1112.5 317.6 1126.6 317.0 1140.6 310.0 1154.6 310.8 1161.6 306.3 1168.6 304.3 1175.7 303.0 1182.7 302.2 1189.7 299.7 1196.7 298.1 1203.7 297.4 1210.7 296.7 1217.8 295.0 1224.8 292.7 1231.8 291.2 1241.5 290.8" stroke="#007039" marker-mid="url(#ou60)" marker-end="url(#ou60)"/>
<path d="M937.2 439.7h0M944.2 417.4h0M951.2 405.1h0M993.3 356.9h0M1000.3 350.0h0M1007.3 346.8h0" stroke="#007039" stroke-width="5.2" stroke-linecap="round"/>
<path d="M944.2 487.0 951.2 440.6 958.2 417.3 965.2 403.9 972.2 391.8 979.2 381.8 986.3 375.3 993.3 369.6 1000.3 363.9 1007.3 357.4 1014.3 350.5 1021.3 347.0" stroke="#006b3e" marker-start="url(#o61)" marker-mid="url(#o61)" marker-end="url(#o61)"/>
<path d="M1021.3 347.0 1028.3 345.4 1042.4 340.7 1056.4 341.5 1070.4 335.2 1084.5 334.0 1098.5 326.9 1112.5 326.0 1126.6 317.9 1140.6 317.9 1154.6 310.9 1168.6 310.9 1175.7 307.2 1182.7 305.3 1189.7 304.0 1196.7 301.5 1203.7 299.7 1210.7 298.1 1217.8 297.6 1224.8 296.3 1231.8 294.6 1238.8 294.1 1245.8 292.3 1255.6 291.1" stroke="#006b3e" marker-mid="url(#ou61)" marker-end="url(#ou61)"/>
<path d="M986.3 375.3h0M1000.3 363.9h0M1007.3 357.4h0M1014.3 350.5h0M1021.3 347.0h0" stroke="#006b3e" stroke-width="5.2" stroke-linecap="round"/>
<path d="M958.2 487.0 965.2 440.8 972.2 416.1 979.2 404.3 986.3 392.3 993.3 382.6 1000.3 375.2 1007.3 369.0 1014.3 363.1 1021.3 357.4 1028.3 350.7 1035.4 346.5" stroke="#006743" marker-start="url(#o62)" marker-mid="url(#o62)" marker-end="url(#o62)"/>
<path d="M1035.4 346.5 1042.4 344.6 1056.4 341.5 1070.4 340.7 1084.5 334.1 1098.5 335.1 1112.5 326.4 1126.6 326.3 1140.6 317.6 1154.6 317.9 1168.6 311.5 1182.7 310.4 1189.7 306.7 1196.7 305.9 1203.7 303.6 1210.7 301.5 1217.8 300.9 1224.8 299.1 1231.8 298.6 1238.8 296.0 1245.8 296.1 1252.8 293.7 1259.8 292.4 1269.6 291.8" stroke="#006743" marker-mid="url(#ou62)" marker-end="url(#ou62)"/>
<path d="M958.2 487.0h0M965.2 440.8h0M972.2 416.1h0M979.2 404.3h0M993.3 382.6h0M1007.3 369.0h0M1014.3 363.1h0M1028.3 350.7h0" stroke="#006743" stroke-width="5.2" stroke-linecap="round"/>
<path d="M972.2 487.0 979.2 439.9 986.3 416.4 993.3 404.2 1000.3 392.0 1007.3 382.5 1014.3 374.9 1021.3 369.5 1028.3 363.5 1035.4 356.9 1042.4 350.7 1049.4 346.3" stroke="#006248" marker-start="url(#o63)" marker-mid="url(#o63)" marker-end="url(#o63)"/>
<path d="M1049.4 346.3 1056.4 345.0 1070.4 341.4 1084.5 342.0 1098.5 335.4 1112.5 334.8 1126.6 327.5 1140.6 326.8 1154.6 317.6 1168.6 317.9 1182.7 311.3 1196.7 311.6 1203.7 307.0 1210.7 305.7 1217.8 304.3 1224.8 302.2 1231.8 301.3 1238.8 299.2 1245.8 298.3 1252.8 297.3 1259.8 295.4 1266.9 294.0 1273.9 292.9 1283.6 291.2" stroke="#006248" marker-mid="url(#ou63)" marker-end="url(#ou63)"/>
<path d="M986.3 416.4h0M1000.3 392.0h0M1014.3 374.9h0M1035.4 356.9h0M1049.4 346.3h0" stroke="#006248" stroke-width="5.2" stroke-linecap="round"/>
<path d="M986.3 487.0 993.3 440.5 1000.3 417.0 1007.3 404.6 1014.3 393.2 1021.3 381.7 1028.3 374.5 1035.4 369.5 1042.4 363.2 1049.4 356.8 1056.4 350.5 1063.4 347.2" stroke="#005e4d" marker-start="url(#o64)" marker-mid="url(#o64)" marker-end="url(#o64)"/>
<path d="M1063.4 347.2 1070.4 345.8 1084.5 341.6 1098.5 340.7 1112.5 334.2 1126.6 334.5 1140.6 327.0 1154.6 327.3 1168.6 318.3 1182.7 317.9 1196.7 311.9 1210.7 311.8 1217.8 308.4 1224.8 305.7 1231.8 304.9 1238.8 301.9 1245.8 301.6 1252.8 299.0 1259.8 298.1 1266.9 298.2 1273.9 295.9 1280.9 294.1 1287.9 293.6 1297.7 292.1" stroke="#005e4d" marker-mid="url(#ou64)" marker-end="url(#ou64)"/>
<path d="M993.3 440.5h0M1000.3 417.0h0M1028.3 374.5h0" stroke="#005e4d" stroke-width="5.2" stroke-linecap="round"/>
<path d="M1000.3 487.0 1007.3 439.4 1014.3 417.1 1021.3 404.6 1028.3 392.0 1035.4 381.5 1042.4 374.2 1049.4 369.0 1056.4 363.3 1063.4 356.6 1070.4 350.4 1077.5 347.3" stroke="#005953" marker-start="url(#o65)" marker-mid="url(#o65)" marker-end="url(#o65)"/>
<path d="M1077.5 347.3 1084.5 344.9 1098.5 341.4 1112.5 340.7 1126.6 334.8 1140.6 335.2 1154.6 328.2 1168.6 326.8 1182.7 317.5 1196.7 318.8 1210.7 312.1 1224.8 311.4 1231.8 307.5 1238.8 306.6 1245.8 305.0 1252.8 302.5 1259.8 302.2 1266.9 300.8 1273.9 298.3 1280.9 298.4 1287.9 296.1 1294.9 294.7 1301.9 294.0 1311.7 292.9" stroke="#005953" marker-mid="url(#ou65)" marker-end="url(#ou65)"/>
<path d="M1000.3 487.0h0M1021.3 404.6h0M1028.3 392.0h0M1042.4 374.2h0M1049.4 369.0h0M1070.4 350.4h0" stroke="#005953" stroke-width="5.2" stroke-linecap="round"/>
<path d="M1014.3 487.0 1021.3 440.2 1028.3 416.2 1035.4 404.0 1042.4 393.2 1049.4 381.4 1056.4 374.7 1063.4 369.0 1070.4 363.7 1077.5 356.3 1084.5 351.3 1091.5 347.0" stroke="#005559" marker-start="url(#o66)" marker-mid="url(#o66)" marker-end="url(#o66)"/>
<path d="M1091.5 347.0 1098.5 345.4 1112.5 341.5 1126.6 341.2 1140.6 334.6 1154.6 334.3 1168.6 327.0 1182.7 326.8 1196.7 318.2 1210.7 318.0 1224.8 312.2 1238.8 312.2 1245.8 308.1 1252.8 306.3 1259.8 304.2 1266.9 304.0 1273.9 301.2 1280.9 300.9 1287.9 299.8 1294.9 297.9 1301.9 296.2 1308.9 294.9 1316.0 294.5 1325.7 292.5" stroke="#005559" marker-mid="url(#ou66)" marker-end="url(#ou66)"/>
<path d="M1028.3 416.2h0M1035.4 404.0h0M1042.4 393.2h0M1049.4 381.4h0M1056.4 374.7h0M1084.5 351.3h0" stroke="#005559" stroke-width="5.2" stroke-linecap="round"/>
<path d="M1028.3 487.0 1035.4 439.9 1042.4 417.5 1049.4 405.1 1056.4 392.9 1063.4 381.6 1070.4 374.3 1077.5 368.7 1084.5 364.2 1091.5 356.3 1098.5 350.5 1105.5 346.7" stroke="#00515f" marker-start="url(#o67)" marker-mid="url(#o67)" marker-end="url(#o67)"/>
<path d="M1105.5 346.7 1112.5 345.4 1126.6 342.2 1140.6 342.1 1154.6 335.1 1168.6 335.0 1182.7 328.2 1196.7 328.3 1210.7 317.9 1224.8 319.3 1238.8 312.4 1252.8 312.3 1259.8 307.9 1266.9 307.0 1273.9 304.7 1280.9 303.6 1287.9 302.9 1294.9 301.4 1301.9 299.6 1308.9 298.7 1316.0 296.8 1323.0 296.4 1330.0 294.0 1339.7 294.0" stroke="#00515f" marker-mid="url(#ou67)" marker-end="url(#ou67)"/>
<path d="M1028.3 487.0h0M1077.5 368.7h0M1098.5 350.5h0" stroke="#00515f" stroke-width="5.2" stroke-linecap="round"/>
<path d="M1042.4 487.0 1049.4 440.7 1056.4 417.3 1063.4 405.1 1070.4 392.6 1077.5 381.4 1084.5 374.8 1091.5 369.8 1098.5 363.5 1105.5 356.1 1112.5 350.4 1119.5 347.0" stroke="#004c66" marker-start="url(#o68)" marker-mid="url(#o68)" marker-end="url(#o68)"/>
<path d="M1119.5 347.0 1126.6 344.5 1140.6 342.6 1154.6 341.0 1168.7 334.8 1182.7 335.0 1196.7 328.2 1210.7 327.2 1224.8 318.4 1238.8 318.7 1252.8 312.7 1266.9 311.5 1273.9 308.7 1280.9 306.9 1287.9 304.9 1294.9 303.4 1301.9 302.3 1309.0 301.9 1316.0 299.3 1323.0 298.7 1330.0 297.7 1337.0 296.7 1344.0 295.0 1353.8 294.4" stroke="#004c66" marker-mid="url(#ou68)" marker-end="url(#ou68)"/>
<path d="M1063.4 405.1h0M1077.5 381.4h0M1112.5 350.4h0" stroke="#004c66" stroke-width="5.2" stroke-linecap="round"/>
<path d="M1056.4 487.0 1063.4 439.4 1070.4 416.2 1077.5 404.2 1084.5 392.2 1091.5 382.5 1098.5 374.1 1105.5 368.5 1112.5 363.4 1119.5 357.4 1126.6 350.1 1133.6 346.7" stroke="#00486c" marker-start="url(#o69)" marker-mid="url(#o69)" marker-end="url(#o69)"/>
<path d="M1133.6 346.7 1140.6 344.8 1154.6 341.7 1168.7 342.2 1182.7 334.8 1196.7 335.6 1210.7 327.4 1224.8 327.3 1238.8 319.3 1252.8 319.5 1266.9 312.6 1280.9 313.2 1287.9 309.7 1294.9 307.5 1301.9 305.0 1309.0 304.1 1316.0 302.8 1323.0 300.9 1330.0 300.0 1337.0 299.8 1344.0 298.6 1351.0 296.9 1358.1 294.7 1367.8 294.0" stroke="#00486c" marker-mid="url(#ou69)" marker-end="url(#ou69)"/>
<path d="M1056.4 487.0h0M1070.4 416.2h0M1112.5 363.4h0M1119.5 357.4h0" stroke="#00486c" stroke-width="5.2" stroke-linecap="round"/>
<path d="M1070.4 487.0 1077.5 440.4 1084.5 416.8 1091.5 404.8 1098.5 392.7 1105.5 381.6 1112.5 374.1 1119.5 369.4 1126.6 363.2 1133.6 356.3 1140.6 350.3 1147.6 347.1" stroke="#004373" marker-start="url(#o70)" marker-mid="url(#o70)" marker-end="url(#o70)"/>
<path d="M1147.6 347.1 1154.6 344.6 1168.7 342.4 1182.7 341.2 1196.7 335.2 1210.7 336.0 1224.8 328.8 1238.8 328.7 1252.8 319.1 1266.9 319.0 1280.9 312.4 1294.9 312.5 1301.9 309.4 1309.0 307.8 1316.0 305.5 1323.0 305.2 1330.0 302.8 1337.0 302.3 1344.0 300.3 1351.0 299.8 1358.1 298.5 1365.1 297.2 1372.1 295.1 1381.8 294.4" stroke="#004373" marker-mid="url(#ou70)" marker-end="url(#ou70)"/>
<path d="M1070.4 487.0h0M1084.5 416.8h0M1105.5 381.6h0M1126.6 363.2h0M1140.6 350.3h0" stroke="#004373" stroke-width="5.2" stroke-linecap="round"/>
<path d="M1084.5 487.0 1091.5 440.7 1098.5 416.3 1105.5 404.4 1112.5 393.0 1119.5 382.5 1126.6 375.3 1133.6 369.8 1140.6 364.1 1147.6 356.2 1154.6 351.3 1161.6 347.3" stroke="#003f7b" marker-start="url(#o71)" marker-mid="url(#o71)" marker-end="url(#o71)"/>
<path d="M1161.6 347.3 1168.7 345.8 1182.7 342.6 1196.7 342.5 1210.7 335.5 1224.8 335.0 1238.8 328.9 1252.8 327.7 1266.9 319.7 1280.9 319.4 1294.9 312.4 1309.0 312.2 1316.0 309.7 1323.0 308.5 1330.0 305.5 1337.0 305.1 1344.0 304.0 1351.0 302.2 1358.1 300.4 1365.1 299.1 1372.1 299.3 1379.1 297.0 1386.1 296.5 1395.9 294.8" stroke="#003f7b" marker-mid="url(#ou71)" marker-end="url(#ou71)"/>
<path d="M1098.5 416.3h0M1133.6 369.8h0M1140.6 364.1h0M1154.6 351.3h0" stroke="#003f7b" stroke-width="5.2" stroke-linecap="round"/>
<path d="M1098.5 487.0 1105.5 439.6 1112.5 417.6 1119.5 405.3 1126.6 391.8 1133.6 381.4 1140.6 374.7 1147.6 369.4 1154.6 363.3 1161.6 356.7 1168.7 350.7 1175.7 346.7" stroke="#003a82" marker-start="url(#o72)" marker-mid="url(#o72)" marker-end="url(#o72)"/>
<path d="M1175.7 346.7 1182.7 346.1 1196.7 341.5 1210.7 342.5 1224.8 336.5 1238.8 335.1 1252.8 329.0 1266.9 329.2 1280.9 319.3 1294.9 319.8 1309.0 313.2 1323.0 313.5 1330.0 310.5 1337.0 308.0 1344.0 306.9 1351.0 305.4 1358.1 303.3 1365.1 303.2 1372.1 301.0 1379.1 300.5 1386.1 299.1 1393.1 298.1 1400.1 296.3 1409.9 295.0" stroke="#003a82" marker-mid="url(#ou72)" marker-end="url(#ou72)"/>
<path d="M1119.5 405.3h0M1133.6 381.4h0M1140.6 374.7h0M1168.7 350.7h0" stroke="#003a82" stroke-width="5.2" stroke-linecap="round"/>
<path d="M1112.5 487.0 1119.5 439.9 1126.6 416.7 1133.6 405.1 1140.6 392.2 1147.6 381.6 1154.6 374.7 1161.6 369.7 1168.7 364.6 1175.7 356.1 1182.7 350.3 1189.7 346.1" stroke="#00368a" marker-start="url(#o73)" marker-mid="url(#o73)" marker-end="url(#o73)"/>
<path d="M1189.7 346.1 1196.7 345.2 1210.7 341.6 1224.8 341.5 1238.8 335.4 1252.8 336.2 1266.9 329.0 1280.9 328.0 1294.9 319.7 1309.0 319.4 1323.0 313.6 1337.0 313.3 1344.0 310.7 1351.0 308.2 1358.1 307.5 1365.1 305.3 1372.1 303.5 1379.1 302.0 1386.1 301.7 1393.1 299.9 1400.1 299.6 1407.2 297.5 1414.2 297.3 1423.9 295.3" stroke="#00368a" marker-mid="url(#ou73)" marker-end="url(#ou73)"/>
<path d="M1147.6 381.6h0M1161.6 369.7h0M1168.7 364.6h0M1182.7 350.3h0" stroke="#00368a" stroke-width="5.2" stroke-linecap="round"/>
<path d="M1126.6 487.0 1133.6 439.8 1140.6 417.1 1147.6 404.5 1154.6 392.0 1161.6 381.4 1168.7 375.5 1175.7 369.5 1182.7 364.4 1189.7 357.6 1196.7 350.1 1203.7 347.7" stroke="#003192" marker-start="url(#o74)" marker-mid="url(#o74)" marker-end="url(#o74)"/>
<path d="M1203.7 347.7 1210.7 344.7 1224.8 341.4 1238.8 342.8 1252.8 335.1 1266.9 335.2 1280.9 328.4 1294.9 329.5 1309.0 320.2 1323.0 320.8 1337.0 313.7 1351.0 314.2 1358.1 310.7 1365.1 308.8 1372.1 306.9 1379.1 305.2 1386.1 303.8 1393.1 303.5 1400.1 301.5 1407.2 301.0 1414.2 300.5 1421.2 297.9 1428.2 297.8 1438.0 296.5" stroke="#003192" marker-mid="url(#ou74)" marker-end="url(#ou74)"/>
<path d="M1126.6 487.0h0M1133.6 439.8h0M1147.6 404.5h0M1154.6 392.0h0M1161.6 381.4h0M1182.7 364.4h0M1196.7 350.1h0" stroke="#003192" stroke-width="5.2" stroke-linecap="round"/>
<path d="M1140.6 487.0 1147.6 440.2 1154.6 417.2 1161.6 404.8 1168.7 392.7 1175.7 382.4 1182.7 375.3 1189.7 368.8 1196.7 364.4 1203.7 356.5 1210.7 351.5 1217.8 347.7" stroke="#002d9a" marker-start="url(#o75)" marker-mid="url(#o75)" marker-end="url(#o75)"/>
<path d="M1217.8 347.7 1224.8 344.8 1238.8 342.7 1252.8 342.9 1266.9 336.2 1280.9 335.7 1294.9 329.2 1309.0 329.5 1323.0 320.7 1337.0 319.6 1351.0 313.7 1365.1 314.6 1372.1 310.8 1379.1 309.7 1386.1 306.9 1393.1 306.5 1400.1 305.2 1407.2 304.1 1414.2 301.8 1421.2 301.6 1428.2 299.4 1435.2 299.6 1442.2 298.3 1452.0 296.4" stroke="#002d9a" marker-mid="url(#ou75)" marker-end="url(#ou75)"/>
<path d="M1161.6 404.8h0M1182.7 375.3h0M1196.7 364.4h0M1210.7 351.5h0M1217.8 347.7h0" stroke="#002d9a" stroke-width="5.2" stroke-linecap="round"/>
<path d="M1154.6 487.0 1161.6 440.9 1168.7 417.1 1175.7 404.7 1182.7 392.2 1189.7 381.6 1196.7 374.4 1203.7 368.9 1210.7 364.4 1217.8 356.7 1224.8 351.4 1231.8 346.8" stroke="#0028a3" marker-start="url(#o76)" marker-mid="url(#o76)" marker-end="url(#o76)"/>
<path d="M1231.8 346.8 1238.8 346.0 1252.8 342.0 1266.9 342.4 1280.9 336.6 1294.9 335.5 1309.0 328.6 1323.0 329.3 1337.0 319.9 1351.0 320.3 1365.1 314.3 1379.1 314.8 1386.1 310.7 1393.1 309.4 1400.1 306.8 1407.2 306.5 1414.2 304.2 1421.2 303.0 1428.2 301.9 1435.2 301.6 1442.2 300.8 1449.3 299.6 1456.3 297.8 1466.0 297.0" stroke="#0028a3" marker-mid="url(#ou76)" marker-end="url(#ou76)"/>
<path d="M1210.7 364.4h0M1231.8 346.8h0" stroke="#0028a3" stroke-width="5.2" stroke-linecap="round"/>
<path d="M1168.7 487.0 1175.7 440.6 1182.7 416.2 1189.7 405.0 1196.7 393.1 1203.7 381.3 1210.7 375.4 1217.8 369.5 1224.8 363.6 1231.8 356.7 1238.8 351.1 1245.8 346.8" stroke="#0024ac" marker-start="url(#o77)" marker-mid="url(#o77)" marker-end="url(#o77)"/>
<path d="M1245.8 346.8 1252.8 345.6 1266.9 342.4 1280.9 341.5 1294.9 336.4 1309.0 336.3 1323.0 329.7 1337.0 329.4 1351.0 320.5 1365.1 320.6 1379.1 313.5 1393.1 314.0 1400.2 311.3 1407.2 309.7 1414.2 306.6 1421.2 306.7 1428.2 304.9 1435.2 303.3 1442.2 301.8 1449.3 301.9 1456.3 299.8 1463.3 299.1 1470.3 297.1 1480.1 296.8" stroke="#0024ac" marker-mid="url(#ou77)" marker-end="url(#ou77)"/>
<path d="M1168.7 487.0h0M1175.7 440.6h0M1182.7 416.2h0M1189.7 405.0h0M1210.7 375.4h0M1231.8 356.7h0" stroke="#0024ac" stroke-width="5.2" stroke-linecap="round"/>
<path d="M1182.7 487.0 1189.7 440.2 1196.7 416.5 1203.7 403.8 1210.7 392.5 1217.8 382.7 1224.8 374.9 1231.8 369.0 1238.8 363.8 1245.8 356.5 1252.8 351.2 1259.9 347.1" stroke="#001fb5" marker-start="url(#o78)" marker-mid="url(#o78)" marker-end="url(#o78)"/>
<path d="M1259.9 347.1 1266.9 344.8 1280.9 342.8 1294.9 342.6 1309.0 336.3 1323.0 335.6 1337.0 329.6 1351.0 328.8 1365.1 320.0 1379.1 320.7 1393.1 313.6 1407.2 314.7 1414.2 310.0 1421.2 308.7 1428.2 307.6 1435.2 305.8 1442.2 304.6 1449.3 302.7 1456.3 303.1 1463.3 301.8 1470.3 300.8 1477.3 298.5 1484.3 297.9 1494.1 296.6" stroke="#001fb5" marker-mid="url(#ou78)" marker-end="url(#ou78)"/>
<path d="M1182.7 487.0h0M1189.7 440.2h0M1203.7 403.8h0M1210.7 392.5h0M1245.8 356.5h0M1252.8 351.2h0" stroke="#001fb5" stroke-width="5.2" stroke-linecap="round"/>
<path d="M1196.7 487.0 1203.7 439.4 1210.7 417.5 1217.8 404.6 1224.8 393.2 1231.8 382.4 1238.8 374.7 1245.8 368.3 1252.8 363.9 1259.9 357.2 1266.9 351.5 1273.9 347.0" stroke="#001bbf" marker-start="url(#o79)" marker-mid="url(#o79)" marker-end="url(#o79)"/>
<path d="M1273.9 347.0 1280.9 344.7 1294.9 342.8 1309.0 341.5 1323.0 336.1 1337.0 336.1 1351.0 329.5 1365.1 329.3 1379.1 320.0 1393.1 319.9 1407.2 314.0 1421.2 313.3 1428.2 311.4 1435.2 308.4 1442.2 307.6 1449.3 306.6 1456.3 304.1 1463.3 303.5 1470.3 302.5 1477.3 301.0 1484.3 300.1 1491.3 298.8 1498.4 297.7 1508.1 296.6" stroke="#001bbf" marker-mid="url(#ou79)" marker-end="url(#ou79)"/>
<path d="M1203.7 439.4h0M1231.8 382.4h0M1259.9 357.2h0" stroke="#001bbf" stroke-width="5.2" stroke-linecap="round"/>
<path d="M1210.7 487.0 1217.8 439.8 1224.8 417.0 1231.8 404.2 1238.8 392.4 1245.8 382.5 1252.8 374.4 1259.9 369.6 1266.9 364.0 1273.9 356.6 1280.9 351.6 1287.9 347.4" stroke="#0016c9" marker-start="url(#o80)" marker-mid="url(#o80)" marker-end="url(#o80)"/>
<path d="M1287.9 347.4 1294.9 345.6 1309.0 342.5 1323.0 342.0 1337.0 335.5 1351.0 335.8 1365.1 329.5 1379.1 328.7 1393.1 320.7 1407.2 319.5 1421.2 314.6 1435.2 314.8 1442.2 310.5 1449.3 309.2 1456.3 307.6 1463.3 305.9 1470.3 304.8 1477.3 303.0 1484.3 302.5 1491.3 301.5 1498.4 300.5 1505.4 299.7 1512.4 297.8 1522.1 296.5" stroke="#0016c9" marker-mid="url(#ou80)" marker-end="url(#ou80)"/>
<path d="M1210.7 487.0h0M1217.8 439.8h0M1224.8 417.0h0M1231.8 404.2h0M1252.8 374.4h0M1259.9 369.6h0M1280.9 351.6h0" stroke="#0016c9" stroke-width="5.2" stroke-linecap="round"/>
<path d="M1224.8 487.0 1231.8 440.6 1238.8 416.7 1245.8 404.8 1252.8 392.3 1259.9 382.3 1266.9 374.5 1273.9 369.0 1280.9 363.5 1287.9 356.2 1294.9 350.3 1301.9 347.0" stroke="#0012d3" marker-start="url(#o81)" marker-mid="url(#o81)" marker-end="url(#o81)"/>
<path d="M1301.9 347.0 1309.0 345.0 1323.0 341.6 1337.0 342.5 1351.0 335.7 1365.1 336.7 1379.1 328.3 1393.1 329.6 1407.2 320.4 1421.2 320.7 1435.2 314.3 1449.3 314.3 1456.3 310.7 1463.3 309.1 1470.3 307.2 1477.3 306.2 1484.3 304.7 1491.3 303.7 1498.4 301.9 1505.4 300.6 1512.4 299.9 1519.4 298.3 1526.4 297.2 1536.2 296.2" stroke="#0012d3" marker-mid="url(#ou81)" marker-end="url(#ou81)"/>
<path d="M1224.8 487.0h0M1231.8 440.6h0M1238.8 416.7h0M1266.9 374.5h0M1273.9 369.0h0M1280.9 363.5h0" stroke="#0012d3" stroke-width="5.2" stroke-linecap="round"/>
<path d="M1238.8 487.0 1245.8 440.8 1252.8 416.9 1259.9 404.5 1266.9 392.4 1273.9 381.9 1280.9 374.8 1287.9 369.8 1294.9 363.9 1301.9 357.5 1309.0 350.3 1316.0 346.8" stroke="#000dde" marker-start="url(#o82)" marker-mid="url(#o82)" marker-end="url(#o82)"/>
<path d="M1316.0 346.8 1323.0 345.8 1337.0 342.2 1351.0 342.2 1365.1 335.8 1379.1 336.3 1393.1 328.3 1407.2 328.6 1421.2 320.6 1435.2 320.6 1449.3 313.3 1463.3 314.8 1470.3 310.5 1477.3 308.8 1484.3 307.3 1491.3 306.5 1498.4 304.1 1505.4 303.4 1512.4 303.0 1519.4 301.7 1526.4 300.7 1533.4 298.7 1540.5 297.6 1550.2 297.4" stroke="#000dde" marker-mid="url(#ou82)" marker-end="url(#ou82)"/>
<path d="M1245.8 440.8h0M1266.9 392.4h0M1273.9 381.9h0M1287.9 369.8h0M1294.9 363.9h0M1309.0 350.3h0M1316.0 346.8h0" stroke="#000dde" stroke-width="5.2" stroke-linecap="round"/>
<path d="M1252.8 487.0 1259.9 440.2 1266.9 416.9 1273.9 405.2 1280.9 392.0 1287.9 382.1 1294.9 375.3 1301.9 368.6 1309.0 363.8 1316.0 356.7 1323.0 351.1 1330.0 346.9" stroke="#0009e8" marker-start="url(#o83)" marker-mid="url(#o83)" marker-end="url(#o83)"/>
<path d="M1330.0 346.9 1337.0 346.2 1351.0 342.3 1365.1 342.0 1379.1 335.5 1393.1 336.7 1407.2 329.1 1421.2 329.3 1435.2 320.5 1449.3 319.5 1463.3 314.1 1477.3 313.7 1484.3 311.4 1491.3 308.4 1498.4 307.8 1505.4 306.8 1512.4 304.3 1519.4 303.1 1526.4 302.1 1533.4 302.0 1540.5 300.6 1547.5 299.2 1554.5 298.1 1564.2 296.6" stroke="#0009e8" marker-mid="url(#ou83)" marker-end="url(#ou83)"/>
<path d="M1259.9 440.2h0M1266.9 416.9h0M1280.9 392.0h0M1301.9 368.6h0M1316.0 356.7h0M1330.0 346.9h0" stroke="#0009e8" stroke-width="5.2" stroke-linecap="round"/>
<path d="M1266.9 487.0 1273.9 440.3 1280.9 416.9 1287.9 404.2 1294.9 392.0 1301.9 382.7 1309.0 375.1 1316.0 369.4 1323.0 364.6 1330.0 356.7 1337.0 351.6 1344.0 346.2" stroke="#0004f4" marker-start="url(#o84)" marker-mid="url(#o84)" marker-end="url(#o84)"/>
<path d="M1344.0 346.2 1351.0 346.0 1365.1 342.5 1379.1 342.3 1393.1 335.3 1407.2 336.5 1421.2 328.7 1435.2 329.3 1449.3 320.0 1463.3 319.7 1477.3 313.7 1491.3 313.8 1498.4 311.1 1505.4 309.3 1512.4 307.9 1519.4 306.8 1526.4 305.3 1533.4 303.5 1540.5 302.8 1547.5 301.7 1554.5 299.8 1561.5 298.4 1568.5 297.5 1578.3 297.1" stroke="#0004f4" marker-mid="url(#ou84)" marker-end="url(#ou84)"/>
<path d="M1287.9 404.2h0M1323.0 364.6h0M1344.0 346.2h0" stroke="#0004f4" stroke-width="5.2" stroke-linecap="round"/>
<path d="M1280.9 487.0 1287.9 440.6 1294.9 416.2 1301.9 404.6 1309.0 392.0 1316.0 381.4 1323.0 374.3 1330.0 369.4 1337.0 363.6 1344.0 357.1 1351.1 351.3 1358.1 346.8" stroke="#0000ff" marker-start="url(#o85)" marker-mid="url(#o85)" marker-end="url(#o85)"/>
<path d="M1358.1 346.8 1365.1 346.0 1379.1 341.6 1393.1 341.9 1407.2 335.5 1421.2 336.2 1435.2 328.5 1449.3 329.5 1463.3 319.5 1477.3 320.2 1491.4 313.7 1505.4 313.7 1512.4 310.1 1519.4 308.3 1526.4 306.7 1533.4 305.7 1540.5 304.9 1547.5 303.2 1554.5 301.6 1561.5 301.9 1568.5 299.5 1575.5 298.4 1582.5 298.0 1592.3 296.9" stroke="#0000ff" marker-mid="url(#ou85)" marker-end="url(#ou85)"/>
<path d="M1294.9 416.2h0M1309.0 392.0h0" stroke="#0000ff" stroke-width="5.2" stroke-linecap="round"/>
</g>
<g font-size="16" fill="#000" text-anchor="middle" letter-spacing="-1.6" stroke="#000" stroke-width="0.3">
<text x="189.8" y="343">1</text>
<text x="203.8" y="343">2</text>
<text x="217.9" y="343">3</text>
<text x="231.9" y="343">4</text>
<text x="245.9" y="343">5</text>
<text x="259.9" y="343">6</text>
<text x="274.0" y="343">7</text>
<text x="288.0" y="343">8</text>
<text x="302.0" y="343">9</text>
<text x="316.1" y="343">10</text>
<text x="330.1" y="343">11</text>
<text x="344.1" y="343">12</text>
<text x="358.2" y="343">13</text>
<text x="372.2" y="343">14</text>
<text x="386.2" y="343">15</text>
<text x="400.2" y="343">16</text>
<text x="414.3" y="343">17</text>
<text x="428.3" y="343">18</text>
<text x="442.3" y="343">19</text>
<text x="456.4" y="343">20</text>
<text x="470.4" y="343">21</text>
<text x="484.4" y="343">22</text>
<text x="498.5" y="343">23</text>
<text x="512.5" y="343">24</text>
<text x="526.5" y="343">25</text>
<text x="540.5" y="343">26</text>
<text x="554.6" y="343">27</text>
<text x="568.6" y="343">28</text>
<text x="582.6" y="343">29</text>
<text x="596.7" y="343">30</text>
<text x="610.7" y="343">31</text>
<text x="624.7" y="343">32</text>
<text x="638.8" y="343">33</text>
<text x="652.8" y="343">34</text>
<text x="666.8" y="343">35</text>
<text x="680.8" y="343">36</text>
<text x="694.9" y="343">37</text>
<text x="708.9" y="343">38</text>
<text x="722.9" y="343">39</text>
<text x="737.0" y="343">40</text>
<text x="751.0" y="343">41</text>
<text x="765.0" y="343">42</text>
<text x="779.1" y="343">43</text>
<text x="793.1" y="343">44</text>
<text x="807.1" y="343">45</text>
<text x="821.1" y="343">46</text>
<text x="835.2" y="343">47</text>
<text x="849.2" y="343">48</text>
<text x="863.2" y="343">49</text>
<text x="877.3" y="343">50</text>
<text x="891.3" y="343">51</text>
<text x="905.3" y="343">52</text>
<text x="919.4" y="343">53</text>
<text x="933.4" y="343">54</text>
<text x="947.4" y="343">55</text>
<text x="961.4" y="343">56</text>
<text x="975.5" y="343">57</text>
<text x="989.5" y="343">58</text>
<text x="1003.5" y="343">59</text>
<text x="1017.6" y="343">60</text>
<text x="1031.6" y="343">61</text>
<text x="1045.6" y="343">62</text>
<text x="1059.7" y="343">63</text>
<text x="1073.7" y="343">64</text>
<text x="1087.7" y="343">65</text>
<text x="1101.8" y="343">66</text>
<text x="1115.8" y="343">67</text>
<text x="1129.8" y="343">68</text>
<text x="1143.8" y="343">69</text>
<text x="1157.9" y="343">70</text>
<text x="1171.9" y="343">71</text>
<text x="1185.9" y="343">72</text>
<text x="1200.0" y="343">73</text>
<text x="1214.0" y="343">74</text>
<text x="1228.0" y="343">75</text>
<text x="1242.1" y="343">76</text>
<text x="1256.1" y="343">77</text>
<text x="1270.1" y="343">78</text>
<text x="1284.1" y="343">79</text>
<text x="1298.2" y="343">80</text>
<text x="1312.2" y="343">81</text>
<text x="1326.2" y="343">82</text>
<text x="1340.3" y="343">83</text>
<text x="1354.3" y="343">84</text>
<text x="1368.3" y="343">85</text>
<text x="1382.4" y="343">86</text>
</g>
<path d="M52.5 168.5 H1681.5 V511 H52.5 Z" fill="none" stroke="#000" stroke-width="1.5"/>
<line x1="52" y1="511.5" x2="1682" y2="511.5" stroke="#000" stroke-width="1"/>
<path d="M48 298.9H52 M48 270.2H52 M48 249.9H52 M48 234.1H52 M48 221.2H52 M48 210.2H52 M48 200.8H52 M48 192.5H52 M48 461.9H52 M48 433.2H52 M48 412.9H52 M48 397.1H52 M48 384.2H52 M48 373.2H52 M48 363.8H52 M48 355.5H52 M45 185.5H52 M45 348.5H52 M45 511.5H52" stroke="#444" stroke-width="1.6"/>
<text x="35.5" y="191.0" font-size="18" fill="#000" text-anchor="end" >10</text>
<text x="38.0" y="179.0" font-size="13" fill="#000" text-anchor="start" >2</text>
<text x="35.5" y="354.0" font-size="18" fill="#000" text-anchor="end" >10</text>
<text x="38.0" y="342.0" font-size="13" fill="#000" text-anchor="start" >1</text>
<text x="35.5" y="517.0" font-size="18" fill="#000" text-anchor="end" >10</text>
<text x="38.0" y="505.0" font-size="13" fill="#000" text-anchor="start" >0</text>
<path d="M101.0 511V518.5 M171.2 511V515.5 M241.5 511V518.5 M311.8 511V515.5 M382.0 511V518.5 M452.2 511V515.5 M522.5 511V518.5 M592.8 511V515.5 M663.0 511V518.5 M733.2 511V515.5 M803.5 511V518.5 M873.8 511V515.5 M944.0 511V518.5 M1014.2 511V515.5 M1084.5 511V518.5 M1154.8 511V515.5 M1225.0 511V518.5 M1295.2 511V515.5 M1365.5 511V518.5 M1435.8 511V515.5 M1506.0 511V518.5 M1576.2 511V515.5 M1646.5 511V515.5" stroke="#444" stroke-width="1.4"/>
<text x="101.0" y="536.0" font-size="18" fill="#000" text-anchor="middle" >0</text>
<text x="241.5" y="536.0" font-size="18" fill="#000" text-anchor="middle" >20</text>
<text x="382.0" y="536.0" font-size="18" fill="#000" text-anchor="middle" >40</text>
<text x="522.5" y="536.0" font-size="18" fill="#000" text-anchor="middle" >60</text>
<text x="663.0" y="536.0" font-size="18" fill="#000" text-anchor="middle" >80</text>
<text x="803.5" y="536.0" font-size="18" fill="#000" text-anchor="middle" >100</text>
<text x="944.0" y="536.0" font-size="18" fill="#000" text-anchor="middle" >120</text>
<text x="1084.5" y="536.0" font-size="18" fill="#000" text-anchor="middle" >140</text>
<text x="1225.0" y="536.0" font-size="18" fill="#000" text-anchor="middle" >160</text>
<text x="1365.5" y="536.0" font-size="18" fill="#000" text-anchor="middle" >180</text>
<text x="1506.0" y="536.0" font-size="18" fill="#000" text-anchor="middle" >200</text>
<text x="27.0" y="157.0" font-size="19" fill="#101840" text-anchor="start" >ρ</text>
<text x="39.5" y="159.0" font-size="11" fill="#4060a0" text-anchor="start" >a</text>
<text x="1685.0" y="535.0" font-size="18" fill="#1c2050" text-anchor="start" >X</text>
<text x="1697.0" y="535.0" font-size="12" fill="#5070b0" text-anchor="start" >m</text>
<text x="1107.5" y="150.5" font-size="18" fill="#0000ff" text-anchor="middle" >Observed apparent resistivity data</text>
<path d="M1773.5 168 H1716.5 Q1706.5 168 1706.5 178 V451 Q1706.5 461 1716.5 461 H1773.5" fill="#fff" stroke="#000" stroke-width="1.5"/>
<rect x="1774" y="168" width="12" height="293" fill="#c8c8c8" stroke="#808080" stroke-width="1.2"/>
<rect x="1775" y="179" width="10" height="34" fill="#c0c0c0" stroke="#fff" stroke-width="1"/>
<line x1="1774" y1="179" x2="1786" y2="179" stroke="#808080" stroke-width="1"/>
<path d="M1777 176 L1780 172 L1783 176z" fill="#a0a0a0"/>
<line x1="1774" y1="450" x2="1786" y2="450" stroke="#808080" stroke-width="1"/>
<path d="M1776.5 453 L1780 458 L1783.5 453z" fill="#000"/>
<rect x="1714" y="177.8" width="17.5" height="18" fill="#fff" stroke="#e0e0e0" stroke-width="2"/>
<path d="M1713 195.8 V176.8 H1732" fill="none" stroke="#909090" stroke-width="2"/>
<path d="M1717 185.3 L1721 191.8 L1728.5 180.8" fill="none" stroke="#000" stroke-width="3.2"/>
<path d="M1741 187.3 L1748 186.3 M1744.5 183.8 V189.8" stroke="#ff0000" stroke-width="2.2"/>
<text x="1755.5" y="190.3" font-size="16.5" textLength="7" lengthAdjust="spacingAndGlyphs">1</text>
<rect x="1714" y="206.25" width="17.5" height="18" fill="#fff" stroke="#e0e0e0" stroke-width="2"/>
<path d="M1713 224.25 V205.25 H1732" fill="none" stroke="#909090" stroke-width="2"/>
<path d="M1717 213.75 L1721 220.25 L1728.5 209.25" fill="none" stroke="#000" stroke-width="3.2"/>
<path d="M1741 215.75 L1748 214.75 M1744.5 212.25 V218.25" stroke="#f60900" stroke-width="2.2"/>
<text x="1755.5" y="218.75" font-size="16.5" textLength="7" lengthAdjust="spacingAndGlyphs">2</text>
<rect x="1714" y="234.70000000000002" width="17.5" height="18" fill="#fff" stroke="#e0e0e0" stroke-width="2"/>
<path d="M1713 252.70000000000002 V233.70000000000002 H1732" fill="none" stroke="#909090" stroke-width="2"/>
<path d="M1717 242.20000000000002 L1721 248.70000000000002 L1728.5 237.70000000000002" fill="none" stroke="#000" stroke-width="3.2"/>
<path d="M1741 244.20000000000002 L1748 243.20000000000002 M1744.5 240.70000000000002 V246.70000000000002" stroke="#ed1200" stroke-width="2.2"/>
<text x="1755.5" y="247.20000000000002" font-size="16.5" textLength="7" lengthAdjust="spacingAndGlyphs">3</text>
<rect x="1714" y="263.15" width="17.5" height="18" fill="#fff" stroke="#e0e0e0" stroke-width="2"/>
<path d="M1713 281.15 V262.15 H1732" fill="none" stroke="#909090" stroke-width="2"/>
<path d="M1717 270.65 L1721 277.15 L1728.5 266.15" fill="none" stroke="#000" stroke-width="3.2"/>
<path d="M1741 272.65 L1748 271.65 M1744.5 269.15 V275.15" stroke="#e41b00" stroke-width="2.2"/>
<text x="1755.5" y="275.65" font-size="16.5" textLength="7" lengthAdjust="spacingAndGlyphs">4</text>
<rect x="1714" y="291.6" width="17.5" height="18" fill="#fff" stroke="#e0e0e0" stroke-width="2"/>
<path d="M1713 309.6 V290.6 H1732" fill="none" stroke="#909090" stroke-width="2"/>
<path d="M1717 299.1 L1721 305.6 L1728.5 294.6" fill="none" stroke="#000" stroke-width="3.2"/>
<path d="M1741 301.1 L1748 300.1 M1744.5 297.6 V303.6" stroke="#db2400" stroke-width="2.2"/>
<text x="1755.5" y="304.1" font-size="16.5" textLength="7" lengthAdjust="spacingAndGlyphs">5</text>
<rect x="1714" y="320.05" width="17.5" height="18" fill="#fff" stroke="#e0e0e0" stroke-width="2"/>
<path d="M1713 338.05 V319.05 H1732" fill="none" stroke="#909090" stroke-width="2"/>
<path d="M1717 327.55 L1721 334.05 L1728.5 323.05" fill="none" stroke="#000" stroke-width="3.2"/>
<path d="M1741 329.55 L1748 328.55 M1744.5 326.05 V332.05" stroke="#d12e00" stroke-width="2.2"/>
<text x="1755.5" y="332.55" font-size="16.5" textLength="7" lengthAdjust="spacingAndGlyphs">6</text>
<rect x="1714" y="348.5" width="17.5" height="18" fill="#fff" stroke="#e0e0e0" stroke-width="2"/>
<path d="M1713 366.5 V347.5 H1732" fill="none" stroke="#909090" stroke-width="2"/>
<path d="M1717 356.0 L1721 362.5 L1728.5 351.5" fill="none" stroke="#000" stroke-width="3.2"/>
<path d="M1741 358.0 L1748 357.0 M1744.5 354.5 V360.5" stroke="#c83700" stroke-width="2.2"/>
<text x="1755.5" y="361.0" font-size="16.5" textLength="7" lengthAdjust="spacingAndGlyphs">7</text>
<rect x="1714" y="376.95000000000005" width="17.5" height="18" fill="#fff" stroke="#e0e0e0" stroke-width="2"/>
<path d="M1713 394.95000000000005 V375.95000000000005 H1732" fill="none" stroke="#909090" stroke-width="2"/>
<path d="M1717 384.45000000000005 L1721 390.95000000000005 L1728.5 379.95000000000005" fill="none" stroke="#000" stroke-width="3.2"/>
<path d="M1741 386.45000000000005 L1748 385.45000000000005 M1744.5 382.95000000000005 V388.95000000000005" stroke="#bf4000" stroke-width="2.2"/>
<text x="1755.5" y="389.45000000000005" font-size="16.5" textLength="7" lengthAdjust="spacingAndGlyphs">8</text>
<rect x="1714" y="405.4" width="17.5" height="18" fill="#fff" stroke="#e0e0e0" stroke-width="2"/>
<path d="M1713 423.4 V404.4 H1732" fill="none" stroke="#909090" stroke-width="2"/>
<path d="M1717 412.9 L1721 419.4 L1728.5 408.4" fill="none" stroke="#000" stroke-width="3.2"/>
<path d="M1741 414.9 L1748 413.9 M1744.5 411.4 V417.4" stroke="#b64900" stroke-width="2.2"/>
<text x="1755.5" y="417.9" font-size="16.5" textLength="7" lengthAdjust="spacingAndGlyphs">9</text>
<rect x="1714" y="433.85" width="17.5" height="18" fill="#fff" stroke="#e0e0e0" stroke-width="2"/>
<path d="M1713 451.85 V432.85 H1732" fill="none" stroke="#909090" stroke-width="2"/>
<path d="M1717 441.35 L1721 447.85 L1728.5 436.85" fill="none" stroke="#000" stroke-width="3.2"/>
<path d="M1741 443.35 L1748 442.35 M1744.5 439.85 V445.85" stroke="#ad5200" stroke-width="2.2"/>
<text x="1751.5" y="446.35" font-size="16.5" textLength="15" lengthAdjust="spacingAndGlyphs">10</text>
<defs><marker id="c0" markerWidth="10" markerHeight="10" refX="5" refY="5" markerUnits="userSpaceOnUse"><circle cx="5" cy="5" r="2.5" fill="none" stroke="#ff0000" stroke-width="1.1"/></marker><marker id="cu0" markerWidth="10" markerHeight="10" refX="5" refY="5" markerUnits="userSpaceOnUse"><circle cx="5" cy="5" r="2.5" fill="none" stroke="#ff0000" stroke-width="1.0"/></marker><marker id="c1" markerWidth="10" markerHeight="10" refX="5" refY="5" markerUnits="userSpaceOnUse"><circle cx="5" cy="5" r="2.5" fill="none" stroke="#f60900" stroke-width="1.1"/></marker><marker id="cu1" markerWidth="10" markerHeight="10" refX="5" refY="5" markerUnits="userSpaceOnUse"><circle cx="5" cy="5" r="2.5" fill="none" stroke="#f60900" stroke-width="1.0"/></marker><marker id="c2" markerWidth="10" markerHeight="10" refX="5" refY="5" markerUnits="userSpaceOnUse"><circle cx="5" cy="5" r="2.5" fill="none" stroke="#ed1200" stroke-width="1.1"/></marker><marker id="cu2" markerWidth="10" markerHeight="10" refX="5" refY="5" markerUnits="userSpaceOnUse"><circle cx="5" cy="5" r="2.5" fill="none" stroke="#ed1200" stroke-width="1.0"/></marker><marker id="c3" markerWidth="10" markerHeight="10" refX="5" refY="5" markerUnits="userSpaceOnUse"><circle cx="5" cy="5" r="2.5" fill="none" stroke="#e41b00" stroke-width="1.1"/></marker><marker id="cu3" markerWidth="10" markerHeight="10" refX="5" refY="5" markerUnits="userSpaceOnUse"><circle cx="5" cy="5" r="2.5" fill="none" stroke="#e41b00" stroke-width="1.0"/></marker><marker id="c4" markerWidth="10" markerHeight="10" refX="5" refY="5" markerUnits="userSpaceOnUse"><circle cx="5" cy="5" r="2.5" fill="none" stroke="#db2400" stroke-width="1.1"/></marker><marker id="cu4" markerWidth="10" markerHeight="10" refX="5" refY="5" markerUnits="userSpaceOnUse"><circle cx="5" cy="5" r="2.5" fill="none" stroke="#db2400" stroke-width="1.0"/></marker><marker id="c5" markerWidth="10" markerHeight="10" refX="5" refY="5" markerUnits="userSpaceOnUse"><circle cx="5" cy="5" r="2.5" fill="none" stroke="#d12e00" stroke-width="1.1"/></marker><marker id="cu5" markerWidth="10" markerHeight="10" refX="5" refY="5" markerUnits="userSpaceOnUse"><circle cx="5" cy="5" r="2.5" fill="none" stroke="#d12e00" stroke-width="1.0"/></marker><marker id="c6" markerWidth="10" markerHeight="10" refX="5" refY="5" markerUnits="userSpaceOnUse"><circle cx="5" cy="5" r="2.5" fill="none" stroke="#c83700" stroke-width="1.1"/></marker><marker id="cu6" markerWidth="10" markerHeight="10" refX="5" refY="5" markerUnits="userSpaceOnUse"><circle cx="5" cy="5" r="2.5" fill="none" stroke="#c83700" stroke-width="1.0"/></marker><marker id="c7" markerWidth="10" markerHeight="10" refX="5" refY="5" markerUnits="userSpaceOnUse"><circle cx="5" cy="5" r="2.5" fill="none" stroke="#bf4000" stroke-width="1.1"/></marker><marker id="cu7" markerWidth="10" markerHeight="10" refX="5" refY="5" markerUnits="userSpaceOnUse"><circle cx="5" cy="5" r="2.5" fill="none" stroke="#bf4000" stroke-width="1.0"/></marker><marker id="c8" markerWidth="10" markerHeight="10" refX="5" refY="5" markerUnits="userSpaceOnUse"><circle cx="5" cy="5" r="2.5" fill="none" stroke="#b64900" stroke-width="1.1"/></marker><marker id="cu8" markerWidth="10" markerHeight="10" refX="5" refY="5" markerUnits="userSpaceOnUse"><circle cx="5" cy="5" r="2.5" fill="none" stroke="#b64900" stroke-width="1.0"/></marker><marker id="c9" markerWidth="10" markerHeight="10" refX="5" refY="5" markerUnits="userSpaceOnUse"><circle cx="5" cy="5" r="2.5" fill="none" stroke="#ad5200" stroke-width="1.1"/></marker><marker id="cu9" markerWidth="10" markerHeight="10" refX="5" refY="5" markerUnits="userSpaceOnUse"><circle cx="5" cy="5" r="2.5" fill="none" stroke="#ad5200" stroke-width="1.0"/></marker><marker id="c10" markerWidth="10" markerHeight="10" refX="5" refY="5" markerUnits="userSpaceOnUse"><circle cx="5" cy="5" r="2.5" fill="none" stroke="#a45b00" stroke-width="1.1"/></marker><marker id="cu10" markerWidth="10" markerHeight="10" refX="5" refY="5" markerUnits="userSpaceOnUse"><circle cx="5" cy="5" r="2.5" fill="none" stroke="#a45b00" stroke-width="1.0"/></marker><marker id="c11" markerWidth="10" markerHeight="10" refX="5" refY="5" markerUnits="userSpaceOnUse"><circle cx="5" cy="5" r="2.5" fill="none" stroke="#9b6400" stroke-width="1.1"/></marker><marker id="cu11" markerWidth="10" markerHeight="10" refX="5" refY="5" markerUnits="userSpaceOnUse"><circle cx="5" cy="5" r="2.5" fill="none" stroke="#9b6400" stroke-width="1.0"/></marker><marker id="c12" markerWidth="10" markerHeight="10" refX="5" refY="5" markerUnits="userSpaceOnUse"><circle cx="5" cy="5" r="2.5" fill="none" stroke="#926d00" stroke-width="1.1"/></marker><marker id="cu12" markerWidth="10" markerHeight="10" refX="5" refY="5" markerUnits="userSpaceOnUse"><circle cx="5" cy="5" r="2.5" fill="none" stroke="#926d00" stroke-width="1.0"/></marker><marker id="c13" markerWidth="10" markerHeight="10" refX="5" refY="5" markerUnits="userSpaceOnUse"><circle cx="5" cy="5" r="2.5" fill="none" stroke="#897600" stroke-width="1.1"/></marker><marker id="cu13" markerWidth="10" markerHeight="10" refX="5" refY="5" markerUnits="userSpaceOnUse"><circle cx="5" cy="5" r="2.5" fill="none" stroke="#897600" stroke-width="1.0"/></marker><marker id="c14" markerWidth="10" markerHeight="10" refX="5" refY="5" markerUnits="userSpaceOnUse"><circle cx="5" cy="5" r="2.5" fill="none" stroke="#808000" stroke-width="1.1"/></marker><marker id="cu14" markerWidth="10" markerHeight="10" refX="5" refY="5" markerUnits="userSpaceOnUse"><circle cx="5" cy="5" r="2.5" fill="none" stroke="#808000" stroke-width="1.0"/></marker><marker id="c15" markerWidth="10" markerHeight="10" refX="5" refY="5" markerUnits="userSpaceOnUse"><circle cx="5" cy="5" r="2.5" fill="none" stroke="#768900" stroke-width="1.1"/></marker><marker id="cu15" markerWidth="10" markerHeight="10" refX="5" refY="5" markerUnits="userSpaceOnUse"><circle cx="5" cy="5" r="2.5" fill="none" stroke="#768900" stroke-width="1.0"/></marker><marker id="c16" markerWidth="10" markerHeight="10" refX="5" refY="5" markerUnits="userSpaceOnUse"><circle cx="5" cy="5" r="2.5" fill="none" stroke="#6d9200" stroke-width="1.1"/></marker><marker id="cu16" markerWidth="10" markerHeight="10" refX="5" refY="5" markerUnits="userSpaceOnUse"><circle cx="5" cy="5" r="2.5" fill="none" stroke="#6d9200" stroke-width="1.0"/></marker><marker id="c17" markerWidth="10" markerHeight="10" refX="5" refY="5" markerUnits="userSpaceOnUse"><circle cx="5" cy="5" r="2.5" fill="none" stroke="#649b00" stroke-width="1.1"/></marker><marker id="cu17" markerWidth="10" markerHeight="10" refX="5" refY="5" markerUnits="userSpaceOnUse"><circle cx="5" cy="5" r="2.5" fill="none" stroke="#649b00" stroke-width="1.0"/></marker><marker id="c18" markerWidth="10" markerHeight="10" refX="5" refY="5" markerUnits="userSpaceOnUse"><circle cx="5" cy="5" r="2.5" fill="none" stroke="#5ba400" stroke-width="1.1"/></marker><marker id="cu18" markerWidth="10" markerHeight="10" refX="5" refY="5" markerUnits="userSpaceOnUse"><circle cx="5" cy="5" r="2.5" fill="none" stroke="#5ba400" stroke-width="1.0"/></marker><marker id="c19" markerWidth="10" markerHeight="10" refX="5" refY="5" markerUnits="userSpaceOnUse"><circle cx="5" cy="5" r="2.5" fill="none" stroke="#52ad00" stroke-width="1.1"/></marker><marker id="cu19" markerWidth="10" markerHeight="10" refX="5" refY="5" markerUnits="userSpaceOnUse"><circle cx="5" cy="5" r="2.5" fill="none" stroke="#52ad00" stroke-width="1.0"/></marker><marker id="c20" markerWidth="10" markerHeight="10" refX="5" refY="5" markerUnits="userSpaceOnUse"><circle cx="5" cy="5" r="2.5" fill="none" stroke="#49b600" stroke-width="1.1"/></marker><marker id="cu20" markerWidth="10" markerHeight="10" refX="5" refY="5" markerUnits="userSpaceOnUse"><circle cx="5" cy="5" r="2.5" fill="none" stroke="#49b600" stroke-width="1.0"/></marker><marker id="c21" markerWidth="10" markerHeight="10" refX="5" refY="5" markerUnits="userSpaceOnUse"><circle cx="5" cy="5" r="2.5" fill="none" stroke="#40bf00" stroke-width="1.1"/></marker><marker id="cu21" markerWidth="10" markerHeight="10" refX="5" refY="5" markerUnits="userSpaceOnUse"><circle cx="5" cy="5" r="2.5" fill="none" stroke="#40bf00" stroke-width="1.0"/></marker><marker id="c22" markerWidth="10" markerHeight="10" refX="5" refY="5" markerUnits="userSpaceOnUse"><circle cx="5" cy="5" r="2.5" fill="none" stroke="#37c800" stroke-width="1.1"/></marker><marker id="cu22" markerWidth="10" markerHeight="10" refX="5" refY="5" markerUnits="userSpaceOnUse"><circle cx="5" cy="5" r="2.5" fill="none" stroke="#37c800" stroke-width="1.0"/></marker><marker id="c23" markerWidth="10" markerHeight="10" refX="5" refY="5" markerUnits="userSpaceOnUse"><circle cx="5" cy="5" r="2.5" fill="none" stroke="#2ed100" stroke-width="1.1"/></marker><marker id="cu23" markerWidth="10" markerHeight="10" refX="5" refY="5" markerUnits="userSpaceOnUse"><circle cx="5" cy="5" r="2.5" fill="none" stroke="#2ed100" stroke-width="1.0"/></marker><marker id="c24" markerWidth="10" markerHeight="10" refX="5" refY="5" markerUnits="userSpaceOnUse"><circle cx="5" cy="5" r="2.5" fill="none" stroke="#24db00" stroke-width="1.1"/></marker><marker id="cu24" markerWidth="10" markerHeight="10" refX="5" refY="5" markerUnits="userSpaceOnUse"><circle cx="5" cy="5" r="2.5" fill="none" stroke="#24db00" stroke-width="1.0"/></marker><marker id="c25" markerWidth="10" markerHeight="10" refX="5" refY="5" markerUnits="userSpaceOnUse"><circle cx="5" cy="5" r="2.5" fill="none" stroke="#1be400" stroke-width="1.1"/></marker><marker id="cu25" markerWidth="10" markerHeight="10" refX="5" refY="5" markerUnits="userSpaceOnUse"><circle cx="5" cy="5" r="2.5" fill="none" stroke="#1be400" stroke-width="1.0"/></marker><marker id="c26" markerWidth="10" markerHeight="10" refX="5" refY="5" markerUnits="userSpaceOnUse"><circle cx="5" cy="5" r="2.5" fill="none" stroke="#12ed00" stroke-width="1.1"/></marker><marker id="cu26" markerWidth="10" markerHeight="10" refX="5" refY="5" markerUnits="userSpaceOnUse"><circle cx="5" cy="5" r="2.5" fill="none" stroke="#12ed00" stroke-width="1.0"/></marker><marker id="c27" markerWidth="10" markerHeight="10" refX="5" refY="5" markerUnits="userSpaceOnUse"><circle cx="5" cy="5" r="2.5" fill="none" stroke="#09f600" stroke-width="1.1"/></marker><marker id="cu27" markerWidth="10" markerHeight="10" refX="5" refY="5" markerUnits="userSpaceOnUse"><circle cx="5" cy="5" r="2.5" fill="none" stroke="#09f600" stroke-width="1.0"/></marker><marker id="c28" markerWidth="10" markerHeight="10" refX="5" refY="5" markerUnits="userSpaceOnUse"><circle cx="5" cy="5" r="2.5" fill="none" stroke="#00ff00" stroke-width="1.1"/></marker><marker id="cu28" markerWidth="10" markerHeight="10" refX="5" refY="5" markerUnits="userSpaceOnUse"><circle cx="5" cy="5" r="2.5" fill="none" stroke="#00ff00" stroke-width="1.0"/></marker><marker id="c29" markerWidth="10" markerHeight="10" refX="5" refY="5" markerUnits="userSpaceOnUse"><circle cx="5" cy="5" r="2.5" fill="none" stroke="#00fb00" stroke-width="1.1"/></marker><marker id="cu29" markerWidth="10" markerHeight="10" refX="5" refY="5" markerUnits="userSpaceOnUse"><circle cx="5" cy="5" r="2.5" fill="none" stroke="#00fb00" stroke-width="1.0"/></marker><marker id="c30" markerWidth="10" markerHeight="10" refX="5" refY="5" markerUnits="userSpaceOnUse"><circle cx="5" cy="5" r="2.5" fill="none" stroke="#00f600" stroke-width="1.1"/></marker><marker id="cu30" markerWidth="10" markerHeight="10" refX="5" refY="5" markerUnits="userSpaceOnUse"><circle cx="5" cy="5" r="2.5" fill="none" stroke="#00f600" stroke-width="1.0"/></marker><marker id="c31" markerWidth="10" markerHeight="10" refX="5" refY="5" markerUnits="userSpaceOnUse"><circle cx="5" cy="5" r="2.5" fill="none" stroke="#00f200" stroke-width="1.1"/></marker><marker id="cu31" markerWidth="10" markerHeight="10" refX="5" refY="5" markerUnits="userSpaceOnUse"><circle cx="5" cy="5" r="2.5" fill="none" stroke="#00f200" stroke-width="1.0"/></marker><marker id="c32" markerWidth="10" markerHeight="10" refX="5" refY="5" markerUnits="userSpaceOnUse"><circle cx="5" cy="5" r="2.5" fill="none" stroke="#00ed00" stroke-width="1.1"/></marker><marker id="cu32" markerWidth="10" markerHeight="10" refX="5" refY="5" markerUnits="userSpaceOnUse"><circle cx="5" cy="5" r="2.5" fill="none" stroke="#00ed00" stroke-width="1.0"/></marker><marker id="c33" markerWidth="10" markerHeight="10" refX="5" refY="5" markerUnits="userSpaceOnUse"><circle cx="5" cy="5" r="2.5" fill="none" stroke="#00e900" stroke-width="1.1"/></marker><marker id="cu33" markerWidth="10" markerHeight="10" refX="5" refY="5" markerUnits="userSpaceOnUse"><circle cx="5" cy="5" r="2.5" fill="none" stroke="#00e900" stroke-width="1.0"/></marker><marker id="c34" markerWidth="10" markerHeight="10" refX="5" refY="5" markerUnits="userSpaceOnUse"><circle cx="5" cy="5" r="2.5" fill="none" stroke="#00e401" stroke-width="1.1"/></marker><marker id="cu34" markerWidth="10" markerHeight="10" refX="5" refY="5" markerUnits="userSpaceOnUse"><circle cx="5" cy="5" r="2.5" fill="none" stroke="#00e401" stroke-width="1.0"/></marker><marker id="c35" markerWidth="10" markerHeight="10" refX="5" refY="5" markerUnits="userSpaceOnUse"><circle cx="5" cy="5" r="2.5" fill="none" stroke="#00e001" stroke-width="1.1"/></marker><marker id="cu35" markerWidth="10" markerHeight="10" refX="5" refY="5" markerUnits="userSpaceOnUse"><circle cx="5" cy="5" r="2.5" fill="none" stroke="#00e001" stroke-width="1.0"/></marker><marker id="c36" markerWidth="10" markerHeight="10" refX="5" refY="5" markerUnits="userSpaceOnUse"><circle cx="5" cy="5" r="2.5" fill="none" stroke="#00db02" stroke-width="1.1"/></marker><marker id="cu36" markerWidth="10" markerHeight="10" refX="5" refY="5" markerUnits="userSpaceOnUse"><circle cx="5" cy="5" r="2.5" fill="none" stroke="#00db02" stroke-width="1.0"/></marker><marker id="c37" markerWidth="10" markerHeight="10" refX="5" refY="5" markerUnits="userSpaceOnUse"><circle cx="5" cy="5" r="2.5" fill="none" stroke="#00d702" stroke-width="1.1"/></marker><marker id="cu37" markerWidth="10" markerHeight="10" refX="5" refY="5" markerUnits="userSpaceOnUse"><circle cx="5" cy="5" r="2.5" fill="none" stroke="#00d702" stroke-width="1.0"/></marker><marker id="c38" markerWidth="10" markerHeight="10" refX="5" refY="5" markerUnits="userSpaceOnUse"><circle cx="5" cy="5" r="2.5" fill="none" stroke="#00d203" stroke-width="1.1"/></marker><marker id="cu38" markerWidth="10" markerHeight="10" refX="5" refY="5" markerUnits="userSpaceOnUse"><circle cx="5" cy="5" r="2.5" fill="none" stroke="#00d203" stroke-width="1.0"/></marker><marker id="c39" markerWidth="10" markerHeight="10" refX="5" refY="5" markerUnits="userSpaceOnUse"><circle cx="5" cy="5" r="2.5" fill="none" stroke="#00ce04" stroke-width="1.1"/></marker><marker id="cu39" markerWidth="10" markerHeight="10" refX="5" refY="5" markerUnits="userSpaceOnUse"><circle cx="5" cy="5" r="2.5" fill="none" stroke="#00ce04" stroke-width="1.0"/></marker><marker id="c40" markerWidth="10" markerHeight="10" refX="5" refY="5" markerUnits="userSpaceOnUse"><circle cx="5" cy="5" r="2.5" fill="none" stroke="#00c904" stroke-width="1.1"/></marker><marker id="cu40" markerWidth="10" markerHeight="10" refX="5" refY="5" markerUnits="userSpaceOnUse"><circle cx="5" cy="5" r="2.5" fill="none" stroke="#00c904" stroke-width="1.0"/></marker><marker id="c41" markerWidth="10" markerHeight="10" refX="5" refY="5" markerUnits="userSpaceOnUse"><circle cx="5" cy="5" r="2.5" fill="none" stroke="#00c505" stroke-width="1.1"/></marker><marker id="cu41" markerWidth="10" markerHeight="10" refX="5" refY="5" markerUnits="userSpaceOnUse"><circle cx="5" cy="5" r="2.5" fill="none" stroke="#00c505" stroke-width="1.0"/></marker><marker id="c42" markerWidth="10" markerHeight="10" refX="5" refY="5" markerUnits="userSpaceOnUse"><circle cx="5" cy="5" r="2.5" fill="none" stroke="#00c007" stroke-width="1.1"/></marker><marker id="cu42" markerWidth="10" markerHeight="10" refX="5" refY="5" markerUnits="userSpaceOnUse"><circle cx="5" cy="5" r="2.5" fill="none" stroke="#00c007" stroke-width="1.0"/></marker><marker id="c43" markerWidth="10" markerHeight="10" refX="5" refY="5" markerUnits="userSpaceOnUse"><circle cx="5" cy="5" r="2.5" fill="none" stroke="#00bc08" stroke-width="1.1"/></marker><marker id="cu43" markerWidth="10" markerHeight="10" refX="5" refY="5" markerUnits="userSpaceOnUse"><circle cx="5" cy="5" r="2.5" fill="none" stroke="#00bc08" stroke-width="1.0"/></marker><marker id="c44" markerWidth="10" markerHeight="10" refX="5" refY="5" markerUnits="userSpaceOnUse"><circle cx="5" cy="5" r="2.5" fill="none" stroke="#00b709" stroke-width="1.1"/></marker><marker id="cu44" markerWidth="10" markerHeight="10" refX="5" refY="5" markerUnits="userSpaceOnUse"><circle cx="5" cy="5" r="2.5" fill="none" stroke="#00b709" stroke-width="1.0"/></marker><marker id="c45" markerWidth="10" markerHeight="10" refX="5" refY="5" markerUnits="userSpaceOnUse"><circle cx="5" cy="5" r="2.5" fill="none" stroke="#00b30b" stroke-width="1.1"/></marker><marker id="cu45" markerWidth="10" markerHeight="10" refX="5" refY="5" markerUnits="userSpaceOnUse"><circle cx="5" cy="5" r="2.5" fill="none" stroke="#00b30b" stroke-width="1.0"/></marker><marker id="c46" markerWidth="10" markerHeight="10" refX="5" refY="5" markerUnits="userSpaceOnUse"><circle cx="5" cy="5" r="2.5" fill="none" stroke="#00ae0d" stroke-width="1.1"/></marker><marker id="cu46" markerWidth="10" markerHeight="10" refX="5" refY="5" markerUnits="userSpaceOnUse"><circle cx="5" cy="5" r="2.5" fill="none" stroke="#00ae0d" stroke-width="1.0"/></marker><marker id="c47" markerWidth="10" markerHeight="10" refX="5" refY="5" markerUnits="userSpaceOnUse"><circle cx="5" cy="5" r="2.5" fill="none" stroke="#00aa0f" stroke-width="1.1"/></marker><marker id="cu47" markerWidth="10" markerHeight="10" refX="5" refY="5" markerUnits="userSpaceOnUse"><circle cx="5" cy="5" r="2.5" fill="none" stroke="#00aa0f" stroke-width="1.0"/></marker><marker id="c48" markerWidth="10" markerHeight="10" refX="5" refY="5" markerUnits="userSpaceOnUse"><circle cx="5" cy="5" r="2.5" fill="none" stroke="#00a611" stroke-width="1.1"/></marker><marker id="cu48" markerWidth="10" markerHeight="10" refX="5" refY="5" markerUnits="userSpaceOnUse"><circle cx="5" cy="5" r="2.5" fill="none" stroke="#00a611" stroke-width="1.0"/></marker><marker id="c49" markerWidth="10" markerHeight="10" refX="5" refY="5" markerUnits="userSpaceOnUse"><circle cx="5" cy="5" r="2.5" fill="none" stroke="#00a113" stroke-width="1.1"/></marker><marker id="cu49" markerWidth="10" markerHeight="10" refX="5" refY="5" markerUnits="userSpaceOnUse"><circle cx="5" cy="5" r="2.5" fill="none" stroke="#00a113" stroke-width="1.0"/></marker><marker id="c50" markerWidth="10" markerHeight="10" refX="5" refY="5" markerUnits="userSpaceOnUse"><circle cx="5" cy="5" r="2.5" fill="none" stroke="#009d15" stroke-width="1.1"/></marker><marker id="cu50" markerWidth="10" markerHeight="10" refX="5" refY="5" markerUnits="userSpaceOnUse"><circle cx="5" cy="5" r="2.5" fill="none" stroke="#009d15" stroke-width="1.0"/></marker><marker id="c51" markerWidth="10" markerHeight="10" refX="5" refY="5" markerUnits="userSpaceOnUse"><circle cx="5" cy="5" r="2.5" fill="none" stroke="#009818" stroke-width="1.1"/></marker><marker id="cu51" markerWidth="10" markerHeight="10" refX="5" refY="5" markerUnits="userSpaceOnUse"><circle cx="5" cy="5" r="2.5" fill="none" stroke="#009818" stroke-width="1.0"/></marker><marker id="c52" markerWidth="10" markerHeight="10" refX="5" refY="5" markerUnits="userSpaceOnUse"><circle cx="5" cy="5" r="2.5" fill="none" stroke="#00941b" stroke-width="1.1"/></marker><marker id="cu52" markerWidth="10" markerHeight="10" refX="5" refY="5" markerUnits="userSpaceOnUse"><circle cx="5" cy="5" r="2.5" fill="none" stroke="#00941b" stroke-width="1.0"/></marker><marker id="c53" markerWidth="10" markerHeight="10" refX="5" refY="5" markerUnits="userSpaceOnUse"><circle cx="5" cy="5" r="2.5" fill="none" stroke="#008f1e" stroke-width="1.1"/></marker><marker id="cu53" markerWidth="10" markerHeight="10" refX="5" refY="5" markerUnits="userSpaceOnUse"><circle cx="5" cy="5" r="2.5" fill="none" stroke="#008f1e" stroke-width="1.0"/></marker><marker id="c54" markerWidth="10" markerHeight="10" refX="5" refY="5" markerUnits="userSpaceOnUse"><circle cx="5" cy="5" r="2.5" fill="none" stroke="#008b21" stroke-width="1.1"/></marker><marker id="cu54" markerWidth="10" markerHeight="10" refX="5" refY="5" markerUnits="userSpaceOnUse"><circle cx="5" cy="5" r="2.5" fill="none" stroke="#008b21" stroke-width="1.0"/></marker><marker id="c55" markerWidth="10" markerHeight="10" refX="5" refY="5" markerUnits="userSpaceOnUse"><circle cx="5" cy="5" r="2.5" fill="none" stroke="#008625" stroke-width="1.1"/></marker><marker id="cu55" markerWidth="10" markerHeight="10" refX="5" refY="5" markerUnits="userSpaceOnUse"><circle cx="5" cy="5" r="2.5" fill="none" stroke="#008625" stroke-width="1.0"/></marker><marker id="c56" markerWidth="10" markerHeight="10" refX="5" refY="5" markerUnits="userSpaceOnUse"><circle cx="5" cy="5" r="2.5" fill="none" stroke="#008228" stroke-width="1.1"/></marker><marker id="cu56" markerWidth="10" markerHeight="10" refX="5" refY="5" markerUnits="userSpaceOnUse"><circle cx="5" cy="5" r="2.5" fill="none" stroke="#008228" stroke-width="1.0"/></marker><marker id="c57" markerWidth="10" markerHeight="10" refX="5" refY="5" markerUnits="userSpaceOnUse"><circle cx="5" cy="5" r="2.5" fill="none" stroke="#007d2c" stroke-width="1.1"/></marker><marker id="cu57" markerWidth="10" markerHeight="10" refX="5" refY="5" markerUnits="userSpaceOnUse"><circle cx="5" cy="5" r="2.5" fill="none" stroke="#007d2c" stroke-width="1.0"/></marker><marker id="c58" markerWidth="10" markerHeight="10" refX="5" refY="5" markerUnits="userSpaceOnUse"><circle cx="5" cy="5" r="2.5" fill="none" stroke="#007930" stroke-width="1.1"/></marker><marker id="cu58" markerWidth="10" markerHeight="10" refX="5" refY="5" markerUnits="userSpaceOnUse"><circle cx="5" cy="5" r="2.5" fill="none" stroke="#007930" stroke-width="1.0"/></marker><marker id="c59" markerWidth="10" markerHeight="10" refX="5" refY="5" markerUnits="userSpaceOnUse"><circle cx="5" cy="5" r="2.5" fill="none" stroke="#007434" stroke-width="1.1"/></marker><marker id="cu59" markerWidth="10" markerHeight="10" refX="5" refY="5" markerUnits="userSpaceOnUse"><circle cx="5" cy="5" r="2.5" fill="none" stroke="#007434" stroke-width="1.0"/></marker><marker id="c60" markerWidth="10" markerHeight="10" refX="5" refY="5" markerUnits="userSpaceOnUse"><circle cx="5" cy="5" r="2.5" fill="none" stroke="#007039" stroke-width="1.1"/></marker><marker id="cu60" markerWidth="10" markerHeight="10" refX="5" refY="5" markerUnits="userSpaceOnUse"><circle cx="5" cy="5" r="2.5" fill="none" stroke="#007039" stroke-width="1.0"/></marker><marker id="c61" markerWidth="10" markerHeight="10" refX="5" refY="5" markerUnits="userSpaceOnUse"><circle cx="5" cy="5" r="2.5" fill="none" stroke="#006b3e" stroke-width="1.1"/></marker><marker id="cu61" markerWidth="10" markerHeight="10" refX="5" refY="5" markerUnits="userSpaceOnUse"><circle cx="5" cy="5" r="2.5" fill="none" stroke="#006b3e" stroke-width="1.0"/></marker><marker id="c62" markerWidth="10" markerHeight="10" refX="5" refY="5" markerUnits="userSpaceOnUse"><circle cx="5" cy="5" r="2.5" fill="none" stroke="#006743" stroke-width="1.1"/></marker><marker id="cu62" markerWidth="10" markerHeight="10" refX="5" refY="5" markerUnits="userSpaceOnUse"><circle cx="5" cy="5" r="2.5" fill="none" stroke="#006743" stroke-width="1.0"/></marker><marker id="c63" markerWidth="10" markerHeight="10" refX="5" refY="5" markerUnits="userSpaceOnUse"><circle cx="5" cy="5" r="2.5" fill="none" stroke="#006248" stroke-width="1.1"/></marker><marker id="cu63" markerWidth="10" markerHeight="10" refX="5" refY="5" markerUnits="userSpaceOnUse"><circle cx="5" cy="5" r="2.5" fill="none" stroke="#006248" stroke-width="1.0"/></marker><marker id="c64" markerWidth="10" markerHeight="10" refX="5" refY="5" markerUnits="userSpaceOnUse"><circle cx="5" cy="5" r="2.5" fill="none" stroke="#005e4d" stroke-width="1.1"/></marker><marker id="cu64" markerWidth="10" markerHeight="10" refX="5" refY="5" markerUnits="userSpaceOnUse"><circle cx="5" cy="5" r="2.5" fill="none" stroke="#005e4d" stroke-width="1.0"/></marker><marker id="c65" markerWidth="10" markerHeight="10" refX="5" refY="5" markerUnits="userSpaceOnUse"><circle cx="5" cy="5" r="2.5" fill="none" stroke="#005953" stroke-width="1.1"/></marker><marker id="cu65" markerWidth="10" markerHeight="10" refX="5" refY="5" markerUnits="userSpaceOnUse"><circle cx="5" cy="5" r="2.5" fill="none" stroke="#005953" stroke-width="1.0"/></marker><marker id="c66" markerWidth="10" markerHeight="10" refX="5" refY="5" markerUnits="userSpaceOnUse"><circle cx="5" cy="5" r="2.5" fill="none" stroke="#005559" stroke-width="1.1"/></marker><marker id="cu66" markerWidth="10" markerHeight="10" refX="5" refY="5" markerUnits="userSpaceOnUse"><circle cx="5" cy="5" r="2.5" fill="none" stroke="#005559" stroke-width="1.0"/></marker><marker id="c67" markerWidth="10" markerHeight="10" refX="5" refY="5" markerUnits="userSpaceOnUse"><circle cx="5" cy="5" r="2.5" fill="none" stroke="#00515f" stroke-width="1.1"/></marker><marker id="cu67" markerWidth="10" markerHeight="10" refX="5" refY="5" markerUnits="userSpaceOnUse"><circle cx="5" cy="5" r="2.5" fill="none" stroke="#00515f" stroke-width="1.0"/></marker><marker id="c68" markerWidth="10" markerHeight="10" refX="5" refY="5" markerUnits="userSpaceOnUse"><circle cx="5" cy="5" r="2.5" fill="none" stroke="#004c66" stroke-width="1.1"/></marker><marker id="cu68" markerWidth="10" markerHeight="10" refX="5" refY="5" markerUnits="userSpaceOnUse"><circle cx="5" cy="5" r="2.5" fill="none" stroke="#004c66" stroke-width="1.0"/></marker><marker id="c69" markerWidth="10" markerHeight="10" refX="5" refY="5" markerUnits="userSpaceOnUse"><circle cx="5" cy="5" r="2.5" fill="none" stroke="#00486c" stroke-width="1.1"/></marker><marker id="cu69" markerWidth="10" markerHeight="10" refX="5" refY="5" markerUnits="userSpaceOnUse"><circle cx="5" cy="5" r="2.5" fill="none" stroke="#00486c" stroke-width="1.0"/></marker><marker id="c70" markerWidth="10" markerHeight="10" refX="5" refY="5" markerUnits="userSpaceOnUse"><circle cx="5" cy="5" r="2.5" fill="none" stroke="#004373" stroke-width="1.1"/></marker><marker id="cu70" markerWidth="10" markerHeight="10" refX="5" refY="5" markerUnits="userSpaceOnUse"><circle cx="5" cy="5" r="2.5" fill="none" stroke="#004373" stroke-width="1.0"/></marker><marker id="c71" markerWidth="10" markerHeight="10" refX="5" refY="5" markerUnits="userSpaceOnUse"><circle cx="5" cy="5" r="2.5" fill="none" stroke="#003f7b" stroke-width="1.1"/></marker><marker id="cu71" markerWidth="10" markerHeight="10" refX="5" refY="5" markerUnits="userSpaceOnUse"><circle cx="5" cy="5" r="2.5" fill="none" stroke="#003f7b" stroke-width="1.0"/></marker><marker id="c72" markerWidth="10" markerHeight="10" refX="5" refY="5" markerUnits="userSpaceOnUse"><circle cx="5" cy="5" r="2.5" fill="none" stroke="#003a82" stroke-width="1.1"/></marker><marker id="cu72" markerWidth="10" markerHeight="10" refX="5" refY="5" markerUnits="userSpaceOnUse"><circle cx="5" cy="5" r="2.5" fill="none" stroke="#003a82" stroke-width="1.0"/></marker><marker id="c73" markerWidth="10" markerHeight="10" refX="5" refY="5" markerUnits="userSpaceOnUse"><circle cx="5" cy="5" r="2.5" fill="none" stroke="#00368a" stroke-width="1.1"/></marker><marker id="cu73" markerWidth="10" markerHeight="10" refX="5" refY="5" markerUnits="userSpaceOnUse"><circle cx="5" cy="5" r="2.5" fill="none" stroke="#00368a" stroke-width="1.0"/></marker><marker id="c74" markerWidth="10" markerHeight="10" refX="5" refY="5" markerUnits="userSpaceOnUse"><circle cx="5" cy="5" r="2.5" fill="none" stroke="#003192" stroke-width="1.1"/></marker><marker id="cu74" markerWidth="10" markerHeight="10" refX="5" refY="5" markerUnits="userSpaceOnUse"><circle cx="5" cy="5" r="2.5" fill="none" stroke="#003192" stroke-width="1.0"/></marker><marker id="c75" markerWidth="10" markerHeight="10" refX="5" refY="5" markerUnits="userSpaceOnUse"><circle cx="5" cy="5" r="2.5" fill="none" stroke="#002d9a" stroke-width="1.1"/></marker><marker id="cu75" markerWidth="10" markerHeight="10" refX="5" refY="5" markerUnits="userSpaceOnUse"><circle cx="5" cy="5" r="2.5" fill="none" stroke="#002d9a" stroke-width="1.0"/></marker><marker id="c76" markerWidth="10" markerHeight="10" refX="5" refY="5" markerUnits="userSpaceOnUse"><circle cx="5" cy="5" r="2.5" fill="none" stroke="#0028a3" stroke-width="1.1"/></marker><marker id="cu76" markerWidth="10" markerHeight="10" refX="5" refY="5" markerUnits="userSpaceOnUse"><circle cx="5" cy="5" r="2.5" fill="none" stroke="#0028a3" stroke-width="1.0"/></marker><marker id="c77" markerWidth="10" markerHeight="10" refX="5" refY="5" markerUnits="userSpaceOnUse"><circle cx="5" cy="5" r="2.5" fill="none" stroke="#0024ac" stroke-width="1.1"/></marker><marker id="cu77" markerWidth="10" markerHeight="10" refX="5" refY="5" markerUnits="userSpaceOnUse"><circle cx="5" cy="5" r="2.5" fill="none" stroke="#0024ac" stroke-width="1.0"/></marker><marker id="c78" markerWidth="10" markerHeight="10" refX="5" refY="5" markerUnits="userSpaceOnUse"><circle cx="5" cy="5" r="2.5" fill="none" stroke="#001fb5" stroke-width="1.1"/></marker><marker id="cu78" markerWidth="10" markerHeight="10" refX="5" refY="5" markerUnits="userSpaceOnUse"><circle cx="5" cy="5" r="2.5" fill="none" stroke="#001fb5" stroke-width="1.0"/></marker><marker id="c79" markerWidth="10" markerHeight="10" refX="5" refY="5" markerUnits="userSpaceOnUse"><circle cx="5" cy="5" r="2.5" fill="none" stroke="#001bbf" stroke-width="1.1"/></marker><marker id="cu79" markerWidth="10" markerHeight="10" refX="5" refY="5" markerUnits="userSpaceOnUse"><circle cx="5" cy="5" r="2.5" fill="none" stroke="#001bbf" stroke-width="1.0"/></marker><marker id="c80" markerWidth="10" markerHeight="10" refX="5" refY="5" markerUnits="userSpaceOnUse"><circle cx="5" cy="5" r="2.5" fill="none" stroke="#0016c9" stroke-width="1.1"/></marker><marker id="cu80" markerWidth="10" markerHeight="10" refX="5" refY="5" markerUnits="userSpaceOnUse"><circle cx="5" cy="5" r="2.5" fill="none" stroke="#0016c9" stroke-width="1.0"/></marker><marker id="c81" markerWidth="10" markerHeight="10" refX="5" refY="5" markerUnits="userSpaceOnUse"><circle cx="5" cy="5" r="2.5" fill="none" stroke="#0012d3" stroke-width="1.1"/></marker><marker id="cu81" markerWidth="10" markerHeight="10" refX="5" refY="5" markerUnits="userSpaceOnUse"><circle cx="5" cy="5" r="2.5" fill="none" stroke="#0012d3" stroke-width="1.0"/></marker><marker id="c82" markerWidth="10" markerHeight="10" refX="5" refY="5" markerUnits="userSpaceOnUse"><circle cx="5" cy="5" r="2.5" fill="none" stroke="#000dde" stroke-width="1.1"/></marker><marker id="cu82" markerWidth="10" markerHeight="10" refX="5" refY="5" markerUnits="userSpaceOnUse"><circle cx="5" cy="5" r="2.5" fill="none" stroke="#000dde" stroke-width="1.0"/></marker><marker id="c83" markerWidth="10" markerHeight="10" refX="5" refY="5" markerUnits="userSpaceOnUse"><circle cx="5" cy="5" r="2.5" fill="none" stroke="#0009e8" stroke-width="1.1"/></marker><marker id="cu83" markerWidth="10" markerHeight="10" refX="5" refY="5" markerUnits="userSpaceOnUse"><circle cx="5" cy="5" r="2.5" fill="none" stroke="#0009e8" stroke-width="1.0"/></marker><marker id="c84" markerWidth="10" markerHeight="10" refX="5" refY="5" markerUnits="userSpaceOnUse"><circle cx="5" cy="5" r="2.5" fill="none" stroke="#0004f4" stroke-width="1.1"/></marker><marker id="cu84" markerWidth="10" markerHeight="10" refX="5" refY="5" markerUnits="userSpaceOnUse"><circle cx="5" cy="5" r="2.5" fill="none" stroke="#0004f4" stroke-width="1.0"/></marker><marker id="c85" markerWidth="10" markerHeight="10" refX="5" refY="5" markerUnits="userSpaceOnUse"><circle cx="5" cy="5" r="2.5" fill="none" stroke="#0000ff" stroke-width="1.1"/></marker><marker id="cu85" markerWidth="10" markerHeight="10" refX="5" refY="5" markerUnits="userSpaceOnUse"><circle cx="5" cy="5" r="2.5" fill="none" stroke="#0000ff" stroke-width="1.0"/></marker></defs>
<g fill="none" stroke-width="1.1">
<path d="M88.3 919.2 95.3 871.7 102.3 848.1 109.3 835.6 116.4 823.6 123.4 812.9 130.4 805.7 137.4 800.1 144.4 794.8 151.4 787.9 158.4 781.9 165.5 778.0" stroke="#ff0000" marker-start="url(#c0)" marker-mid="url(#c0)" marker-end="url(#c0)"/>
<path d="M165.5 778.0 172.5 776.5 186.5 773.2 200.5 773.2 214.6 767.0 228.6 767.0 242.6 760.0 256.7 760.0 270.7 751.2 284.7 751.2 298.8 745.0 312.8 745.0 319.8 741.7 326.8 740.0 333.8 738.4 340.8 737.1 347.9 735.7 354.9 734.4 361.9 733.3 368.9 732.3 375.9 731.2 382.9 730.0 389.9 728.8 399.7 727.7" stroke="#ff0000" marker-mid="url(#cu0)" marker-end="url(#cu0)"/>
<path d="M102.3 900.0 109.3 863.1 116.4 845.2 123.4 835.6 130.4 823.6 137.4 812.9 144.4 805.7 151.4 800.1 158.5 794.8 165.5 787.9 172.5 781.9 179.5 777.9" stroke="#f60900" marker-start="url(#c1)" marker-mid="url(#c1)" marker-end="url(#c1)"/>
<path d="M179.5 777.9 186.5 776.4 200.5 773.1 214.6 773.0 228.6 766.8 242.6 766.7 256.7 759.7 270.7 759.7 284.7 750.8 298.8 750.8 312.8 744.5 326.8 744.5 333.8 741.1 340.8 739.4 347.9 737.8 354.9 736.4 361.9 735.0 368.9 733.7 375.9 732.6 382.9 731.5 389.9 730.4 397.0 729.2 404.0 727.9 413.7 726.8" stroke="#f60900" marker-mid="url(#cu1)" marker-end="url(#cu1)"/>
<path d="M116.4 900.8 123.4 863.4 130.4 845.3 137.4 835.6 144.4 823.6 151.4 812.9 158.5 805.7 165.5 800.1 172.5 794.8 179.5 787.8 186.5 781.8 193.5 777.8" stroke="#ed1200" marker-start="url(#c2)" marker-mid="url(#c2)" marker-end="url(#c2)"/>
<path d="M193.5 777.8 200.5 776.3 214.6 773.0 228.6 772.9 242.6 766.5 256.7 766.4 270.7 759.4 284.7 759.3 298.8 750.4 312.8 750.3 326.8 744.0 340.8 743.9 347.9 740.5 354.9 738.8 361.9 737.1 368.9 735.7 375.9 734.4 382.9 733.0 389.9 731.9 397.0 730.8 404.0 729.6 411.0 728.4 418.0 727.1 427.8 726.0" stroke="#ed1200" marker-mid="url(#cu2)" marker-end="url(#cu2)"/>
<path d="M130.4 910.8 137.4 867.9 144.4 846.8 151.4 835.6 158.5 823.6 165.5 812.9 172.5 805.7 179.5 800.1 186.5 794.8 193.5 787.8 200.5 781.8 207.6 777.8" stroke="#e41b00" marker-start="url(#c3)" marker-mid="url(#c3)" marker-end="url(#c3)"/>
<path d="M207.6 777.8 214.6 776.2 228.6 772.8 242.6 772.7 256.7 766.3 270.7 766.2 284.7 759.1 298.8 758.9 312.8 750.0 326.8 749.8 340.8 743.5 354.9 743.4 361.9 740.0 368.9 738.2 375.9 736.5 382.9 735.1 389.9 733.7 397.0 732.3 404.0 731.1 411.0 730.0 418.0 728.9 425.0 727.6 432.0 726.3 441.8 725.1" stroke="#e41b00" marker-mid="url(#cu3)" marker-end="url(#cu3)"/>
<path d="M144.4 910.8 151.4 867.9 158.5 846.8 165.5 835.6 172.5 823.6 179.5 812.9 186.5 805.7 193.5 800.1 200.5 794.8 207.6 787.8 214.6 781.8 221.6 777.7" stroke="#db2400" marker-start="url(#c4)" marker-mid="url(#c4)" marker-end="url(#c4)"/>
<path d="M221.6 777.7 228.6 776.1 242.6 772.7 256.7 772.5 270.7 766.1 284.7 765.9 298.8 758.7 312.8 758.5 326.8 749.6 340.8 749.4 354.9 743.0 368.9 742.8 375.9 739.4 382.9 737.6 389.9 735.9 397.0 734.4 404.0 733.0 411.0 731.6 418.0 730.4 425.0 729.2 432.0 728.1 439.1 726.8 446.1 725.4 455.8 724.3" stroke="#db2400" marker-mid="url(#cu4)" marker-end="url(#cu4)"/>
<path d="M158.5 907.5 165.5 866.4 172.5 846.3 179.5 835.6 186.5 823.6 193.5 812.9 200.5 805.7 207.6 800.1 214.6 794.8 221.6 787.8 228.6 781.7 235.6 777.7" stroke="#d12e00" marker-start="url(#c5)" marker-mid="url(#c5)" marker-end="url(#c5)"/>
<path d="M235.6 777.7 242.6 776.1 256.7 772.6 270.7 772.3 284.7 765.8 298.8 765.6 312.8 758.4 326.8 758.2 340.8 749.1 354.9 748.9 368.9 742.5 382.9 742.2 389.9 738.8 397.0 737.0 404.0 735.2 411.0 733.8 418.0 732.3 425.0 730.9 432.0 729.7 439.1 728.5 446.1 727.3 453.1 726.0 460.1 724.6 469.9 723.4" stroke="#d12e00" marker-mid="url(#cu5)" marker-end="url(#cu5)"/>
<path d="M172.5 905.8 179.5 865.7 186.5 846.1 193.5 835.6 200.5 823.6 207.6 812.9 214.6 805.7 221.6 800.1 228.6 794.8 235.6 787.8 242.6 781.7 249.6 777.6" stroke="#c83700" marker-start="url(#c6)" marker-mid="url(#c6)" marker-end="url(#c6)"/>
<path d="M249.6 777.6 256.7 776.0 270.7 772.4 284.7 772.1 298.8 765.6 312.8 765.3 326.8 758.1 340.8 757.8 354.9 748.7 368.9 748.4 382.9 741.9 397.0 741.7 404.0 738.2 411.0 736.4 418.0 734.6 425.0 733.1 432.0 731.6 439.1 730.2 446.1 729.0 453.1 727.7 460.1 726.5 467.1 725.2 474.1 723.8 483.9 722.5" stroke="#c83700" marker-mid="url(#cu6)" marker-end="url(#cu6)"/>
<path d="M186.5 904.0 193.5 864.9 200.5 845.8 207.6 835.6 214.6 823.6 221.6 812.9 228.6 805.7 235.6 800.1 242.6 794.8 249.6 787.8 256.7 781.7 263.7 777.6" stroke="#bf4000" marker-start="url(#c7)" marker-mid="url(#c7)" marker-end="url(#c7)"/>
<path d="M263.7 777.6 270.7 775.9 284.7 772.3 298.8 772.0 312.8 765.4 326.8 765.1 340.8 757.8 354.9 757.4 368.9 748.3 382.9 748.0 397.0 741.4 411.0 741.1 418.0 737.6 425.0 735.8 432.0 733.9 439.1 732.4 446.1 730.9 453.1 729.5 460.1 728.2 467.1 727.0 474.1 725.7 481.1 724.3 488.2 723.0 497.9 721.7" stroke="#bf4000" marker-mid="url(#cu7)" marker-end="url(#cu7)"/>
<path d="M200.5 908.3 207.6 871.2 214.6 847.9 221.6 835.6 228.6 823.6 235.6 812.9 242.6 805.7 249.6 800.1 256.7 794.8 263.7 787.8 270.7 781.7 277.7 777.6" stroke="#b64900" marker-start="url(#c8)" marker-mid="url(#c8)" marker-end="url(#c8)"/>
<path d="M277.7 777.6 284.7 775.9 298.8 772.3 312.8 772.0 326.8 765.4 340.8 765.1 354.9 757.8 368.9 757.4 382.9 748.3 397.0 748.0 411.0 741.4 425.0 741.1 432.0 737.6 439.1 735.8 446.1 733.9 453.1 732.4 460.1 730.9 467.1 729.5 474.1 728.2 481.1 727.0 488.2 725.7 495.2 724.3 502.2 723.0 511.9 721.7" stroke="#b64900" marker-mid="url(#cu8)" marker-end="url(#cu8)"/>
<path d="M214.6 907.9 221.6 871.2 228.6 847.9 235.6 835.6 242.6 823.6 249.7 812.9 256.7 805.7 263.7 800.1 270.7 794.8 277.7 787.8 284.7 781.7 291.7 777.6" stroke="#ad5200" marker-start="url(#c9)" marker-mid="url(#c9)" marker-end="url(#c9)"/>
<path d="M291.7 777.6 298.8 775.9 312.8 772.3 326.8 772.0 340.8 765.4 354.9 765.1 368.9 757.8 382.9 757.4 397.0 748.3 411.0 748.0 425.0 741.4 439.1 741.1 446.1 737.6 453.1 735.8 460.1 733.9 467.1 732.4 474.1 730.9 481.1 729.5 488.2 728.2 495.2 727.0 502.2 725.7 509.2 724.3 516.2 723.0 526.0 721.7" stroke="#ad5200" marker-mid="url(#cu9)" marker-end="url(#cu9)"/>
<path d="M228.6 907.1 235.6 871.2 242.6 847.9 249.7 835.6 256.7 823.6 263.7 812.9 270.7 805.7 277.7 800.1 284.7 794.8 291.7 787.8 298.8 781.7 305.8 777.6" stroke="#a45b00" marker-start="url(#c10)" marker-mid="url(#c10)" marker-end="url(#c10)"/>
<path d="M305.8 777.6 312.8 775.9 326.8 772.3 340.8 772.0 354.9 765.4 368.9 765.1 382.9 757.8 397.0 757.4 411.0 748.3 425.0 748.0 439.1 741.4 453.1 741.1 460.1 737.6 467.1 735.8 474.1 733.9 481.1 732.4 488.2 730.9 495.2 729.5 502.2 728.2 509.2 727.0 516.2 725.7 523.2 724.3 530.3 723.0 540.0 721.7" stroke="#a45b00" marker-mid="url(#cu10)" marker-end="url(#cu10)"/>
<path d="M242.6 907.4 249.7 871.2 256.7 847.9 263.7 835.6 270.7 823.6 277.7 812.9 284.7 805.7 291.7 800.1 298.8 794.8 305.8 787.8 312.8 781.7 319.8 777.6" stroke="#9b6400" marker-start="url(#c11)" marker-mid="url(#c11)" marker-end="url(#c11)"/>
<path d="M319.8 777.6 326.8 775.9 340.8 772.3 354.9 772.0 368.9 765.4 382.9 765.1 397.0 757.8 411.0 757.4 425.0 748.3 439.1 748.0 453.1 741.4 467.1 741.1 474.1 737.6 481.1 735.8 488.2 733.9 495.2 732.4 502.2 730.9 509.2 729.5 516.2 728.2 523.2 727.0 530.3 725.7 537.3 724.3 544.3 723.0 554.0 721.7" stroke="#9b6400" marker-mid="url(#cu11)" marker-end="url(#cu11)"/>
<path d="M256.7 907.7 263.7 871.2 270.7 847.9 277.7 835.6 284.7 823.6 291.7 812.9 298.8 805.7 305.8 800.1 312.8 794.8 319.8 787.8 326.8 781.7 333.8 777.6" stroke="#926d00" marker-start="url(#c12)" marker-mid="url(#c12)" marker-end="url(#c12)"/>
<path d="M333.8 777.6 340.8 775.9 354.9 772.3 368.9 772.0 382.9 765.4 397.0 765.1 411.0 757.8 425.0 757.4 439.1 748.3 453.1 748.0 467.1 741.4 481.1 741.1 488.2 737.6 495.2 735.8 502.2 733.9 509.2 732.4 516.2 730.9 523.2 729.5 530.3 728.2 537.3 727.0 544.3 725.7 551.3 724.3 558.3 723.0 568.1 721.7" stroke="#926d00" marker-mid="url(#cu12)" marker-end="url(#cu12)"/>
<path d="M270.7 908.1 277.7 871.2 284.7 847.9 291.7 835.6 298.8 823.6 305.8 812.9 312.8 805.7 319.8 800.1 326.8 794.8 333.8 787.8 340.8 781.7 347.9 777.6" stroke="#897600" marker-start="url(#c13)" marker-mid="url(#c13)" marker-end="url(#c13)"/>
<path d="M347.9 777.6 354.9 775.9 368.9 772.3 382.9 772.0 397.0 765.4 411.0 765.1 425.0 757.8 439.1 757.4 453.1 748.3 467.1 748.0 481.1 741.4 495.2 741.1 502.2 737.6 509.2 735.8 516.2 733.9 523.2 732.4 530.3 730.9 537.3 729.5 544.3 728.2 551.3 727.0 558.3 725.7 565.3 724.3 572.3 723.0 582.1 721.7" stroke="#897600" marker-mid="url(#cu13)" marker-end="url(#cu13)"/>
<path d="M284.7 906.7 291.7 871.2 298.8 847.9 305.8 835.6 312.8 823.6 319.8 812.9 326.8 805.7 333.8 800.1 340.8 794.8 347.9 787.8 354.9 781.7 361.9 777.6" stroke="#808000" marker-start="url(#c14)" marker-mid="url(#c14)" marker-end="url(#c14)"/>
<path d="M361.9 777.6 368.9 775.9 382.9 772.3 397.0 772.0 411.0 765.4 425.0 765.1 439.1 757.8 453.1 757.4 467.1 748.3 481.1 748.0 495.2 741.4 509.2 741.1 516.2 737.6 523.2 735.8 530.3 733.9 537.3 732.4 544.3 730.9 551.3 729.5 558.3 728.2 565.3 727.0 572.3 725.7 579.4 724.3 586.4 723.0 596.1 721.7" stroke="#808000" marker-mid="url(#cu14)" marker-end="url(#cu14)"/>
<path d="M298.8 907.8 305.8 871.2 312.8 847.9 319.8 835.6 326.8 823.6 333.8 812.9 340.8 805.7 347.9 800.1 354.9 794.8 361.9 787.8 368.9 781.7 375.9 777.6" stroke="#768900" marker-start="url(#c15)" marker-mid="url(#c15)" marker-end="url(#c15)"/>
<path d="M375.9 777.6 382.9 775.9 397.0 772.3 411.0 772.0 425.0 765.4 439.1 765.1 453.1 757.8 467.1 757.4 481.1 748.3 495.2 748.0 509.2 741.4 523.2 741.1 530.3 737.6 537.3 735.8 544.3 733.9 551.3 732.4 558.3 730.9 565.3 729.5 572.3 728.2 579.4 727.0 586.4 725.7 593.4 724.3 600.4 723.0 610.2 721.7" stroke="#768900" marker-mid="url(#cu15)" marker-end="url(#cu15)"/>
<path d="M312.8 907.6 319.8 871.2 326.8 847.9 333.8 835.6 340.8 823.6 347.9 812.9 354.9 805.7 361.9 800.1 368.9 794.8 375.9 787.8 382.9 781.7 390.0 777.6" stroke="#6d9200" marker-start="url(#c16)" marker-mid="url(#c16)" marker-end="url(#c16)"/>
<path d="M390.0 777.6 397.0 775.9 411.0 772.3 425.0 772.0 439.1 765.4 453.1 765.1 467.1 757.8 481.1 757.4 495.2 748.3 509.2 748.0 523.2 741.4 537.3 741.1 544.3 737.6 551.3 735.8 558.3 733.9 565.3 732.4 572.3 730.9 579.4 729.5 586.4 728.2 593.4 727.0 600.4 725.7 607.4 724.3 614.4 723.0 624.2 721.7" stroke="#6d9200" marker-mid="url(#cu16)" marker-end="url(#cu16)"/>
<path d="M326.8 908.1 333.8 871.2 340.9 847.9 347.9 835.6 354.9 823.6 361.9 812.9 368.9 805.7 375.9 800.1 382.9 794.8 390.0 787.8 397.0 781.7 404.0 777.6" stroke="#649b00" marker-start="url(#c17)" marker-mid="url(#c17)" marker-end="url(#c17)"/>
<path d="M404.0 777.6 411.0 775.9 425.0 772.3 439.1 772.0 453.1 765.4 467.1 765.1 481.2 757.8 495.2 757.4 509.2 748.3 523.2 748.0 537.3 741.4 551.3 741.1 558.3 737.6 565.3 735.8 572.3 733.9 579.4 732.4 586.4 730.9 593.4 729.5 600.4 728.2 607.4 727.0 614.4 725.7 621.5 724.3 628.5 723.0 638.2 721.7" stroke="#649b00" marker-mid="url(#cu17)" marker-end="url(#cu17)"/>
<path d="M340.9 907.2 347.9 871.2 354.9 847.9 361.9 835.6 368.9 823.6 375.9 812.9 382.9 805.7 390.0 800.1 397.0 794.8 404.0 787.8 411.0 781.7 418.0 777.6" stroke="#5ba400" marker-start="url(#c18)" marker-mid="url(#c18)" marker-end="url(#c18)"/>
<path d="M418.0 777.6 425.0 775.9 439.1 772.3 453.1 772.0 467.1 765.4 481.2 765.1 495.2 757.8 509.2 757.4 523.2 748.3 537.3 748.0 551.3 741.4 565.3 741.1 572.3 737.6 579.4 735.8 586.4 733.9 593.4 732.4 600.4 730.9 607.4 729.5 614.4 728.2 621.5 727.0 628.5 725.7 635.5 724.3 642.5 723.0 652.3 721.7" stroke="#5ba400" marker-mid="url(#cu18)" marker-end="url(#cu18)"/>
<path d="M354.9 908.2 361.9 871.2 368.9 847.9 375.9 835.6 382.9 823.6 390.0 812.9 397.0 805.7 404.0 800.1 411.0 794.8 418.0 787.8 425.0 781.7 432.0 777.6" stroke="#52ad00" marker-start="url(#c19)" marker-mid="url(#c19)" marker-end="url(#c19)"/>
<path d="M432.0 777.6 439.1 775.9 453.1 772.3 467.1 772.0 481.2 765.4 495.2 765.1 509.2 757.8 523.2 757.4 537.3 748.3 551.3 748.0 565.3 741.4 579.4 741.1 586.4 737.6 593.4 735.8 600.4 733.9 607.4 732.4 614.4 730.9 621.5 729.5 628.5 728.2 635.5 727.0 642.5 725.7 649.5 724.3 656.5 723.0 666.3 721.7" stroke="#52ad00" marker-mid="url(#cu19)" marker-end="url(#cu19)"/>
<path d="M368.9 907.4 375.9 871.2 382.9 847.9 390.0 835.6 397.0 823.6 404.0 812.9 411.0 805.7 418.0 800.1 425.0 794.8 432.0 787.8 439.1 781.7 446.1 777.6" stroke="#49b600" marker-start="url(#c20)" marker-mid="url(#c20)" marker-end="url(#c20)"/>
<path d="M446.1 777.6 453.1 775.9 467.1 772.3 481.2 772.0 495.2 765.4 509.2 765.1 523.2 757.8 537.3 757.4 551.3 748.3 565.3 748.0 579.4 741.4 593.4 741.1 600.4 737.6 607.4 735.8 614.4 733.9 621.5 732.4 628.5 730.9 635.5 729.5 642.5 728.2 649.5 727.0 656.5 725.7 663.5 724.3 670.6 723.0 680.3 721.7" stroke="#49b600" marker-mid="url(#cu20)" marker-end="url(#cu20)"/>
<path d="M382.9 906.8 390.0 871.2 397.0 847.9 404.0 835.6 411.0 823.6 418.0 812.9 425.0 805.7 432.0 800.1 439.1 794.8 446.1 787.8 453.1 781.7 460.1 777.6" stroke="#40bf00" marker-start="url(#c21)" marker-mid="url(#c21)" marker-end="url(#c21)"/>
<path d="M460.1 777.6 467.1 775.9 481.2 772.3 495.2 772.0 509.2 765.4 523.2 765.1 537.3 757.8 551.3 757.4 565.3 748.3 579.4 748.0 593.4 741.4 607.4 741.1 614.4 737.6 621.5 735.8 628.5 733.9 635.5 732.4 642.5 730.9 649.5 729.5 656.5 728.2 663.5 727.0 670.6 725.7 677.6 724.3 684.6 723.0 694.3 721.7" stroke="#40bf00" marker-mid="url(#cu21)" marker-end="url(#cu21)"/>
<path d="M397.0 907.6 404.0 871.2 411.0 847.9 418.0 835.6 425.0 823.6 432.0 812.9 439.1 805.7 446.1 800.1 453.1 794.8 460.1 787.8 467.1 781.7 474.1 777.6" stroke="#37c800" marker-start="url(#c22)" marker-mid="url(#c22)" marker-end="url(#c22)"/>
<path d="M474.1 777.6 481.2 775.9 495.2 772.3 509.2 772.0 523.2 765.4 537.3 765.1 551.3 757.8 565.3 757.4 579.4 748.3 593.4 748.0 607.4 741.4 621.5 741.1 628.5 737.6 635.5 735.8 642.5 733.9 649.5 732.4 656.5 730.9 663.5 729.5 670.6 728.2 677.6 727.0 684.6 725.7 691.6 724.3 698.6 723.0 708.4 721.7" stroke="#37c800" marker-mid="url(#cu22)" marker-end="url(#cu22)"/>
<path d="M411.0 907.7 418.0 871.2 425.0 847.9 432.0 835.6 439.1 823.6 446.1 812.9 453.1 805.7 460.1 800.1 467.1 794.8 474.1 787.8 481.2 781.7 488.2 777.6" stroke="#2ed100" marker-start="url(#c23)" marker-mid="url(#c23)" marker-end="url(#c23)"/>
<path d="M488.2 777.6 495.2 775.9 509.2 772.3 523.2 772.0 537.3 765.4 551.3 765.1 565.3 757.8 579.4 757.4 593.4 748.3 607.4 748.0 621.5 741.4 635.5 741.1 642.5 737.6 649.5 735.8 656.5 733.9 663.5 732.4 670.6 730.9 677.6 729.5 684.6 728.2 691.6 727.0 698.6 725.7 705.6 724.3 712.6 723.0 722.4 721.7" stroke="#2ed100" marker-mid="url(#cu23)" marker-end="url(#cu23)"/>
<path d="M425.0 907.6 432.0 871.2 439.1 847.9 446.1 835.6 453.1 823.6 460.1 812.9 467.1 805.7 474.1 800.1 481.2 794.8 488.2 787.8 495.2 781.7 502.2 777.6" stroke="#24db00" marker-start="url(#c24)" marker-mid="url(#c24)" marker-end="url(#c24)"/>
<path d="M502.2 777.6 509.2 775.9 523.2 772.3 537.3 772.0 551.3 765.4 565.3 765.1 579.4 757.8 593.4 757.4 607.4 748.3 621.5 748.0 635.5 741.4 649.5 741.1 656.5 737.6 663.5 735.8 670.6 733.9 677.6 732.4 684.6 730.9 691.6 729.5 698.6 728.2 705.6 727.0 712.6 725.7 719.7 724.3 726.7 723.0 736.4 721.7" stroke="#24db00" marker-mid="url(#cu24)" marker-end="url(#cu24)"/>
<path d="M439.1 906.7 446.1 871.2 453.1 847.9 460.1 835.6 467.1 823.6 474.1 812.9 481.2 805.7 488.2 800.1 495.2 794.8 502.2 787.8 509.2 781.7 516.2 777.6" stroke="#1be400" marker-start="url(#c25)" marker-mid="url(#c25)" marker-end="url(#c25)"/>
<path d="M516.2 777.6 523.2 775.9 537.3 772.3 551.3 772.0 565.3 765.4 579.4 765.1 593.4 757.8 607.4 757.4 621.5 748.3 635.5 748.0 649.5 741.4 663.5 741.1 670.6 737.6 677.6 735.8 684.6 733.9 691.6 732.4 698.6 730.9 705.6 729.5 712.6 728.2 719.7 727.0 726.7 725.7 733.7 724.3 740.7 723.0 750.5 721.7" stroke="#1be400" marker-mid="url(#cu25)" marker-end="url(#cu25)"/>
<path d="M453.1 906.8 460.1 871.2 467.1 847.9 474.1 835.6 481.2 823.6 488.2 812.9 495.2 805.7 502.2 800.1 509.2 794.8 516.2 787.8 523.2 781.7 530.3 777.6" stroke="#12ed00" marker-start="url(#c26)" marker-mid="url(#c26)" marker-end="url(#c26)"/>
<path d="M530.3 777.6 537.3 775.9 551.3 772.3 565.3 772.0 579.4 765.4 593.4 765.1 607.4 757.8 621.5 757.4 635.5 748.3 649.5 748.0 663.5 741.4 677.6 741.1 684.6 737.6 691.6 735.8 698.6 733.9 705.6 732.4 712.7 730.9 719.7 729.5 726.7 728.2 733.7 727.0 740.7 725.7 747.7 724.3 754.7 723.0 764.5 721.7" stroke="#12ed00" marker-mid="url(#cu26)" marker-end="url(#cu26)"/>
<path d="M467.1 908.3 474.1 871.2 481.2 847.9 488.2 835.6 495.2 823.6 502.2 812.9 509.2 805.7 516.2 800.1 523.2 794.8 530.3 787.8 537.3 781.7 544.3 777.6" stroke="#09f600" marker-start="url(#c27)" marker-mid="url(#c27)" marker-end="url(#c27)"/>
<path d="M544.3 777.6 551.3 775.9 565.3 772.3 579.4 772.0 593.4 765.4 607.4 765.1 621.5 757.8 635.5 757.4 649.5 748.3 663.5 748.0 677.6 741.4 691.6 741.1 698.6 737.6 705.6 735.8 712.7 733.9 719.7 732.4 726.7 730.9 733.7 729.5 740.7 728.2 747.7 727.0 754.7 725.7 761.8 724.3 768.8 723.0 778.5 721.7" stroke="#09f600" marker-mid="url(#cu27)" marker-end="url(#cu27)"/>
<path d="M481.2 907.9 488.2 871.2 495.2 847.9 502.2 835.6 509.2 823.6 516.2 812.9 523.2 805.7 530.3 800.1 537.3 794.8 544.3 787.8 551.3 781.7 558.3 777.6" stroke="#00ff00" marker-start="url(#c28)" marker-mid="url(#c28)" marker-end="url(#c28)"/>
<path d="M558.3 777.6 565.3 775.9 579.4 772.3 593.4 772.0 607.4 765.4 621.5 765.1 635.5 757.8 649.5 757.4 663.5 748.3 677.6 748.0 691.6 741.4 705.6 741.1 712.7 737.6 719.7 735.8 726.7 733.9 733.7 732.4 740.7 730.9 747.7 729.5 754.7 728.2 761.8 727.0 768.8 725.7 775.8 724.3 782.8 723.0 792.6 721.7" stroke="#00ff00" marker-mid="url(#cu28)" marker-end="url(#cu28)"/>
<path d="M495.2 906.5 502.2 871.2 509.2 847.9 516.2 835.6 523.2 823.6 530.3 812.9 537.3 805.7 544.3 800.1 551.3 794.8 558.3 787.8 565.3 781.7 572.4 777.6" stroke="#00fb00" marker-start="url(#c29)" marker-mid="url(#c29)" marker-end="url(#c29)"/>
<path d="M572.4 777.6 579.4 775.9 593.4 772.3 607.4 772.0 621.5 765.4 635.5 765.1 649.5 757.8 663.5 757.4 677.6 748.3 691.6 748.0 705.6 741.4 719.7 741.1 726.7 737.6 733.7 735.8 740.7 733.9 747.7 732.4 754.7 730.9 761.8 729.5 768.8 728.2 775.8 727.0 782.8 725.7 789.8 724.3 796.8 723.0 806.6 721.7" stroke="#00fb00" marker-mid="url(#cu29)" marker-end="url(#cu29)"/>
<path d="M509.2 907.5 516.2 871.2 523.2 847.9 530.3 835.6 537.3 823.6 544.3 812.9 551.3 805.7 558.3 800.1 565.3 794.8 572.4 787.8 579.4 781.7 586.4 777.6" stroke="#00f600" marker-start="url(#c30)" marker-mid="url(#c30)" marker-end="url(#c30)"/>
<path d="M586.4 777.6 593.4 775.9 607.4 772.3 621.5 772.0 635.5 765.4 649.5 765.1 663.5 757.8 677.6 757.4 691.6 748.3 705.6 748.0 719.7 741.4 733.7 741.1 740.7 737.6 747.7 735.8 754.7 733.9 761.8 732.4 768.8 730.9 775.8 729.5 782.8 728.2 789.8 727.0 796.8 725.7 803.8 724.3 810.9 723.0 820.6 721.7" stroke="#00f600" marker-mid="url(#cu30)" marker-end="url(#cu30)"/>
<path d="M523.2 906.7 530.3 871.2 537.3 847.9 544.3 835.6 551.3 823.6 558.3 812.9 565.3 805.7 572.4 800.1 579.4 794.8 586.4 787.8 593.4 781.7 600.4 777.6" stroke="#00f200" marker-start="url(#c31)" marker-mid="url(#c31)" marker-end="url(#c31)"/>
<path d="M600.4 777.6 607.4 775.9 621.5 772.3 635.5 772.0 649.5 765.4 663.5 765.1 677.6 757.8 691.6 757.4 705.6 748.3 719.7 748.0 733.7 741.4 747.7 741.1 754.7 737.6 761.8 735.8 768.8 733.9 775.8 732.4 782.8 730.9 789.8 729.5 796.8 728.2 803.8 727.0 810.9 725.7 817.9 724.3 824.9 723.0 834.6 721.7" stroke="#00f200" marker-mid="url(#cu31)" marker-end="url(#cu31)"/>
<path d="M537.3 908.4 544.3 871.2 551.3 847.9 558.3 835.6 565.3 823.6 572.4 812.9 579.4 805.7 586.4 800.1 593.4 794.8 600.4 787.8 607.4 781.7 614.4 777.6" stroke="#00ed00" marker-start="url(#c32)" marker-mid="url(#c32)" marker-end="url(#c32)"/>
<path d="M614.4 777.6 621.5 775.9 635.5 772.3 649.5 772.0 663.5 765.4 677.6 765.1 691.6 757.8 705.6 757.4 719.7 748.3 733.7 748.0 747.7 741.4 761.8 741.1 768.8 737.6 775.8 735.8 782.8 733.9 789.8 732.4 796.8 730.9 803.8 729.5 810.9 728.2 817.9 727.0 824.9 725.7 831.9 724.3 838.9 723.0 848.7 721.7" stroke="#00ed00" marker-mid="url(#cu32)" marker-end="url(#cu32)"/>
<path d="M551.3 907.0 558.3 871.2 565.3 847.9 572.4 835.6 579.4 823.6 586.4 812.9 593.4 805.7 600.4 800.1 607.4 794.8 614.4 787.8 621.5 781.7 628.5 777.6" stroke="#00e900" marker-start="url(#c33)" marker-mid="url(#c33)" marker-end="url(#c33)"/>
<path d="M628.5 777.6 635.5 775.9 649.5 772.3 663.5 772.0 677.6 765.4 691.6 765.1 705.6 757.8 719.7 757.4 733.7 748.3 747.7 748.0 761.8 741.4 775.8 741.1 782.8 737.6 789.8 735.8 796.8 733.9 803.8 732.4 810.9 730.9 817.9 729.5 824.9 728.2 831.9 727.0 838.9 725.7 845.9 724.3 853.0 723.0 862.7 721.7" stroke="#00e900" marker-mid="url(#cu33)" marker-end="url(#cu33)"/>
<path d="M565.3 908.0 572.4 871.2 579.4 847.9 586.4 835.6 593.4 823.6 600.4 812.9 607.4 805.7 614.4 800.1 621.5 794.8 628.5 787.8 635.5 781.7 642.5 777.6" stroke="#00e401" marker-start="url(#c34)" marker-mid="url(#c34)" marker-end="url(#c34)"/>
<path d="M642.5 777.6 649.5 775.9 663.6 772.3 677.6 772.0 691.6 765.4 705.6 765.1 719.7 757.8 733.7 757.4 747.7 748.3 761.8 748.0 775.8 741.4 789.8 741.1 796.8 737.6 803.9 735.8 810.9 733.9 817.9 732.4 824.9 730.9 831.9 729.5 838.9 728.2 845.9 727.0 853.0 725.7 860.0 724.3 867.0 723.0 876.7 721.7" stroke="#00e401" marker-mid="url(#cu34)" marker-end="url(#cu34)"/>
<path d="M579.4 908.0 586.4 871.2 593.4 847.9 600.4 835.6 607.4 823.6 614.4 812.9 621.5 805.7 628.5 800.1 635.5 794.8 642.5 787.8 649.5 781.7 656.5 777.6" stroke="#00e001" marker-start="url(#c35)" marker-mid="url(#c35)" marker-end="url(#c35)"/>
<path d="M656.5 777.6 663.6 775.9 677.6 772.3 691.6 772.0 705.6 765.4 719.7 765.1 733.7 757.8 747.7 757.4 761.8 748.3 775.8 748.0 789.8 741.4 803.9 741.1 810.9 737.6 817.9 735.8 824.9 733.9 831.9 732.4 838.9 730.9 845.9 729.5 853.0 728.2 860.0 727.0 867.0 725.7 874.0 724.3 881.0 723.0 890.8 721.7" stroke="#00e001" marker-mid="url(#cu35)" marker-end="url(#cu35)"/>
<path d="M593.4 907.0 600.4 871.2 607.4 847.9 614.4 835.6 621.5 823.6 628.5 812.9 635.5 805.7 642.5 800.1 649.5 794.8 656.5 787.8 663.6 781.7 670.6 777.6" stroke="#00db02" marker-start="url(#c36)" marker-mid="url(#c36)" marker-end="url(#c36)"/>
<path d="M670.6 777.6 677.6 775.9 691.6 772.3 705.6 772.0 719.7 765.4 733.7 765.1 747.7 757.8 761.8 757.4 775.8 748.3 789.8 748.0 803.9 741.4 817.9 741.1 824.9 737.6 831.9 735.8 838.9 733.9 845.9 732.4 853.0 730.9 860.0 729.5 867.0 728.2 874.0 727.0 881.0 725.7 888.0 724.3 895.0 723.0 904.8 721.7" stroke="#00db02" marker-mid="url(#cu36)" marker-end="url(#cu36)"/>
<path d="M607.4 907.5 614.4 871.2 621.5 847.9 628.5 835.6 635.5 823.6 642.5 812.9 649.5 805.7 656.5 800.1 663.6 794.8 670.6 787.8 677.6 781.7 684.6 777.6" stroke="#00d702" marker-start="url(#c37)" marker-mid="url(#c37)" marker-end="url(#c37)"/>
<path d="M684.6 777.6 691.6 775.9 705.6 772.3 719.7 772.0 733.7 765.4 747.7 765.1 761.8 757.8 775.8 757.4 789.8 748.3 803.9 748.0 817.9 741.4 831.9 741.1 838.9 737.6 845.9 735.8 853.0 733.9 860.0 732.4 867.0 730.9 874.0 729.5 881.0 728.2 888.0 727.0 895.0 725.7 902.1 724.3 909.1 723.0 918.8 721.7" stroke="#00d702" marker-mid="url(#cu37)" marker-end="url(#cu37)"/>
<path d="M621.5 907.9 628.5 871.2 635.5 847.9 642.5 835.6 649.5 823.6 656.5 812.9 663.6 805.7 670.6 800.1 677.6 794.8 684.6 787.8 691.6 781.7 698.6 777.6" stroke="#00d203" marker-start="url(#c38)" marker-mid="url(#c38)" marker-end="url(#c38)"/>
<path d="M698.6 777.6 705.6 775.9 719.7 772.3 733.7 772.0 747.7 765.4 761.8 765.1 775.8 757.8 789.8 757.4 803.9 748.3 817.9 748.0 831.9 741.4 845.9 741.1 853.0 737.6 860.0 735.8 867.0 733.9 874.0 732.4 881.0 730.9 888.0 729.5 895.0 728.2 902.1 727.0 909.1 725.7 916.1 724.3 923.1 723.0 932.9 721.7" stroke="#00d203" marker-mid="url(#cu38)" marker-end="url(#cu38)"/>
<path d="M635.5 907.6 642.5 871.2 649.5 847.9 656.5 835.6 663.6 823.6 670.6 812.9 677.6 805.7 684.6 800.1 691.6 794.8 698.6 787.8 705.6 781.7 712.7 777.6" stroke="#00ce04" marker-start="url(#c39)" marker-mid="url(#c39)" marker-end="url(#c39)"/>
<path d="M712.7 777.6 719.7 775.9 733.7 772.3 747.7 772.0 761.8 765.4 775.8 765.1 789.8 757.8 803.9 757.4 817.9 748.3 831.9 748.0 845.9 741.4 860.0 741.1 867.0 737.6 874.0 735.8 881.0 733.9 888.0 732.4 895.0 730.9 902.1 729.5 909.1 728.2 916.1 727.0 923.1 725.7 930.1 724.3 937.1 723.0 946.9 721.7" stroke="#00ce04" marker-mid="url(#cu39)" marker-end="url(#cu39)"/>
<path d="M649.5 906.7 656.5 871.2 663.6 847.9 670.6 835.6 677.6 823.6 684.6 812.9 691.6 805.7 698.6 800.1 705.6 794.8 712.7 787.8 719.7 781.7 726.7 777.6" stroke="#00c904" marker-start="url(#c40)" marker-mid="url(#c40)" marker-end="url(#c40)"/>
<path d="M726.7 777.6 733.7 775.9 747.7 772.3 761.8 772.0 775.8 765.4 789.8 765.1 803.9 757.8 817.9 757.4 831.9 748.3 845.9 748.0 860.0 741.4 874.0 741.1 881.0 737.6 888.0 735.8 895.0 733.9 902.1 732.4 909.1 730.9 916.1 729.5 923.1 728.2 930.1 727.0 937.1 725.7 944.2 724.3 951.2 723.0 960.9 721.7" stroke="#00c904" marker-mid="url(#cu40)" marker-end="url(#cu40)"/>
<path d="M663.6 907.3 670.6 871.2 677.6 847.9 684.6 835.6 691.6 823.6 698.6 812.9 705.6 805.7 712.7 800.1 719.7 794.8 726.7 787.8 733.7 781.7 740.7 777.6" stroke="#00c505" marker-start="url(#c41)" marker-mid="url(#c41)" marker-end="url(#c41)"/>
<path d="M740.7 777.6 747.7 775.9 761.8 772.3 775.8 772.0 789.8 765.4 803.9 765.1 817.9 757.8 831.9 757.4 845.9 748.3 860.0 748.0 874.0 741.4 888.0 741.1 895.0 737.6 902.1 735.8 909.1 733.9 916.1 732.4 923.1 730.9 930.1 729.5 937.1 728.2 944.2 727.0 951.2 725.7 958.2 724.3 965.2 723.0 975.0 721.7" stroke="#00c505" marker-mid="url(#cu41)" marker-end="url(#cu41)"/>
<path d="M677.6 906.6 684.6 871.2 691.6 847.9 698.6 835.6 705.6 823.6 712.7 812.9 719.7 805.7 726.7 800.1 733.7 794.8 740.7 787.8 747.7 781.7 754.7 777.6" stroke="#00c007" marker-start="url(#c42)" marker-mid="url(#c42)" marker-end="url(#c42)"/>
<path d="M754.7 777.6 761.8 775.9 775.8 772.3 789.8 772.0 803.9 765.4 817.9 765.1 831.9 757.8 845.9 757.4 860.0 748.3 874.0 748.0 888.0 741.4 902.1 741.1 909.1 737.6 916.1 735.8 923.1 733.9 930.1 732.4 937.1 730.9 944.2 729.5 951.2 728.2 958.2 727.0 965.2 725.7 972.2 724.3 979.2 723.0 989.0 721.7" stroke="#00c007" marker-mid="url(#cu42)" marker-end="url(#cu42)"/>
<path d="M691.6 908.0 698.6 871.2 705.6 847.9 712.7 835.6 719.7 823.6 726.7 812.9 733.7 805.7 740.7 800.1 747.7 794.8 754.8 787.8 761.8 781.7 768.8 777.6" stroke="#00bc08" marker-start="url(#c43)" marker-mid="url(#c43)" marker-end="url(#c43)"/>
<path d="M768.8 777.6 775.8 775.9 789.8 772.3 803.9 772.0 817.9 765.4 831.9 765.1 845.9 757.8 860.0 757.4 874.0 748.3 888.0 748.0 902.1 741.4 916.1 741.1 923.1 737.6 930.1 735.8 937.1 733.9 944.2 732.4 951.2 730.9 958.2 729.5 965.2 728.2 972.2 727.0 979.2 725.7 986.2 724.3 993.3 723.0 1003.0 721.7" stroke="#00bc08" marker-mid="url(#cu43)" marker-end="url(#cu43)"/>
<path d="M705.6 907.9 712.7 871.2 719.7 847.9 726.7 835.6 733.7 823.6 740.7 812.9 747.7 805.7 754.8 800.1 761.8 794.8 768.8 787.8 775.8 781.7 782.8 777.6" stroke="#00b709" marker-start="url(#c44)" marker-mid="url(#c44)" marker-end="url(#c44)"/>
<path d="M782.8 777.6 789.8 775.9 803.9 772.3 817.9 772.0 831.9 765.4 845.9 765.1 860.0 757.8 874.0 757.4 888.0 748.3 902.1 748.0 916.1 741.4 930.1 741.1 937.1 737.6 944.2 735.8 951.2 733.9 958.2 732.4 965.2 730.9 972.2 729.5 979.2 728.2 986.2 727.0 993.3 725.7 1000.3 724.3 1007.3 723.0 1017.0 721.7" stroke="#00b709" marker-mid="url(#cu44)" marker-end="url(#cu44)"/>
<path d="M719.7 908.0 726.7 871.2 733.7 847.9 740.7 835.6 747.7 823.6 754.8 812.9 761.8 805.7 768.8 800.1 775.8 794.8 782.8 787.8 789.8 781.7 796.8 777.6" stroke="#00b30b" marker-start="url(#c45)" marker-mid="url(#c45)" marker-end="url(#c45)"/>
<path d="M796.8 777.6 803.9 775.9 817.9 772.3 831.9 772.0 845.9 765.4 860.0 765.1 874.0 757.8 888.0 757.4 902.1 748.3 916.1 748.0 930.1 741.4 944.2 741.1 951.2 737.6 958.2 735.8 965.2 733.9 972.2 732.4 979.2 730.9 986.2 729.5 993.3 728.2 1000.3 727.0 1007.3 725.7 1014.3 724.3 1021.3 723.0 1031.1 721.7" stroke="#00b30b" marker-mid="url(#cu45)" marker-end="url(#cu45)"/>
<path d="M733.7 907.9 740.7 871.2 747.7 847.9 754.8 835.6 761.8 823.6 768.8 812.9 775.8 805.7 782.8 800.1 789.8 794.8 796.8 787.8 803.9 781.7 810.9 777.6" stroke="#00ae0d" marker-start="url(#c46)" marker-mid="url(#c46)" marker-end="url(#c46)"/>
<path d="M810.9 777.6 817.9 775.9 831.9 772.3 845.9 772.0 860.0 765.4 874.0 765.1 888.0 757.8 902.1 757.4 916.1 748.3 930.1 748.0 944.2 741.4 958.2 741.1 965.2 737.6 972.2 735.8 979.2 733.9 986.2 732.4 993.3 730.9 1000.3 729.5 1007.3 728.2 1014.3 727.0 1021.3 725.7 1028.3 724.3 1035.4 723.0 1045.1 721.7" stroke="#00ae0d" marker-mid="url(#cu46)" marker-end="url(#cu46)"/>
<path d="M747.7 908.2 754.8 871.2 761.8 847.9 768.8 835.6 775.8 823.6 782.8 812.9 789.8 805.7 796.8 800.1 803.9 794.8 810.9 787.8 817.9 781.7 824.9 777.6" stroke="#00aa0f" marker-start="url(#c47)" marker-mid="url(#c47)" marker-end="url(#c47)"/>
<path d="M824.9 777.6 831.9 775.9 845.9 772.3 860.0 772.0 874.0 765.4 888.0 765.1 902.1 757.8 916.1 757.4 930.1 748.3 944.2 748.0 958.2 741.4 972.2 741.1 979.2 737.6 986.2 735.8 993.3 733.9 1000.3 732.4 1007.3 730.9 1014.3 729.5 1021.3 728.2 1028.3 727.0 1035.4 725.7 1042.4 724.3 1049.4 723.0 1059.1 721.7" stroke="#00aa0f" marker-mid="url(#cu47)" marker-end="url(#cu47)"/>
<path d="M761.8 908.5 768.8 871.2 775.8 847.9 782.8 835.6 789.8 823.6 796.8 812.9 803.9 805.7 810.9 800.1 817.9 794.8 824.9 787.8 831.9 781.7 838.9 777.6" stroke="#00a611" marker-start="url(#c48)" marker-mid="url(#c48)" marker-end="url(#c48)"/>
<path d="M838.9 777.6 845.9 775.9 860.0 772.3 874.0 772.0 888.0 765.4 902.1 765.1 916.1 757.8 930.1 757.4 944.2 748.3 958.2 748.0 972.2 741.4 986.2 741.1 993.3 737.6 1000.3 735.8 1007.3 733.9 1014.3 732.4 1021.3 730.9 1028.3 729.5 1035.4 728.2 1042.4 727.0 1049.4 725.7 1056.4 724.3 1063.4 723.0 1073.2 721.7" stroke="#00a611" marker-mid="url(#cu48)" marker-end="url(#cu48)"/>
<path d="M775.8 907.8 782.8 871.2 789.8 847.9 796.8 835.6 803.9 823.6 810.9 812.9 817.9 805.7 824.9 800.1 831.9 794.8 838.9 787.8 845.9 781.7 853.0 777.6" stroke="#00a113" marker-start="url(#c49)" marker-mid="url(#c49)" marker-end="url(#c49)"/>
<path d="M853.0 777.6 860.0 775.9 874.0 772.3 888.0 772.0 902.1 765.4 916.1 765.1 930.1 757.8 944.2 757.4 958.2 748.3 972.2 748.0 986.2 741.4 1000.3 741.1 1007.3 737.6 1014.3 735.8 1021.3 733.9 1028.3 732.4 1035.4 730.9 1042.4 729.5 1049.4 728.2 1056.4 727.0 1063.4 725.7 1070.4 724.3 1077.4 723.0 1087.2 721.7" stroke="#00a113" marker-mid="url(#cu49)" marker-end="url(#cu49)"/>
<path d="M789.8 906.6 796.8 871.2 803.9 847.9 810.9 835.6 817.9 823.6 824.9 812.9 831.9 805.7 838.9 800.1 845.9 794.8 853.0 787.8 860.0 781.7 867.0 777.6" stroke="#009d15" marker-start="url(#c50)" marker-mid="url(#c50)" marker-end="url(#c50)"/>
<path d="M867.0 777.6 874.0 775.9 888.0 772.3 902.1 772.0 916.1 765.4 930.1 765.1 944.2 757.8 958.2 757.4 972.2 748.3 986.2 748.0 1000.3 741.4 1014.3 741.1 1021.3 737.6 1028.3 735.8 1035.4 733.9 1042.4 732.4 1049.4 730.9 1056.4 729.5 1063.4 728.2 1070.4 727.0 1077.4 725.7 1084.5 724.3 1091.5 723.0 1101.2 721.7" stroke="#009d15" marker-mid="url(#cu50)" marker-end="url(#cu50)"/>
<path d="M803.9 908.1 810.9 871.2 817.9 847.9 824.9 835.6 831.9 823.6 838.9 812.9 846.0 805.7 853.0 800.1 860.0 794.8 867.0 787.8 874.0 781.7 881.0 777.6" stroke="#009818" marker-start="url(#c51)" marker-mid="url(#c51)" marker-end="url(#c51)"/>
<path d="M881.0 777.6 888.0 775.9 902.1 772.3 916.1 772.0 930.1 765.4 944.2 765.1 958.2 757.8 972.2 757.4 986.3 748.3 1000.3 748.0 1014.3 741.4 1028.3 741.1 1035.4 737.6 1042.4 735.8 1049.4 733.9 1056.4 732.4 1063.4 730.9 1070.4 729.5 1077.4 728.2 1084.5 727.0 1091.5 725.7 1098.5 724.3 1105.5 723.0 1115.3 721.7" stroke="#009818" marker-mid="url(#cu51)" marker-end="url(#cu51)"/>
<path d="M817.9 907.8 824.9 871.2 831.9 847.9 838.9 835.6 846.0 823.6 853.0 812.9 860.0 805.7 867.0 800.1 874.0 794.8 881.0 787.8 888.0 781.7 895.1 777.6" stroke="#00941b" marker-start="url(#c52)" marker-mid="url(#c52)" marker-end="url(#c52)"/>
<path d="M895.1 777.6 902.1 775.9 916.1 772.3 930.1 772.0 944.2 765.4 958.2 765.1 972.2 757.8 986.3 757.4 1000.3 748.3 1014.3 748.0 1028.3 741.4 1042.4 741.1 1049.4 737.6 1056.4 735.8 1063.4 733.9 1070.4 732.4 1077.4 730.9 1084.5 729.5 1091.5 728.2 1098.5 727.0 1105.5 725.7 1112.5 724.3 1119.5 723.0 1129.3 721.7" stroke="#00941b" marker-mid="url(#cu52)" marker-end="url(#cu52)"/>
<path d="M831.9 907.2 838.9 871.2 846.0 847.9 853.0 835.6 860.0 823.6 867.0 812.9 874.0 805.7 881.0 800.1 888.0 794.8 895.1 787.8 902.1 781.7 909.1 777.6" stroke="#008f1e" marker-start="url(#c53)" marker-mid="url(#c53)" marker-end="url(#c53)"/>
<path d="M909.1 777.6 916.1 775.9 930.1 772.3 944.2 772.0 958.2 765.4 972.2 765.1 986.3 757.8 1000.3 757.4 1014.3 748.3 1028.3 748.0 1042.4 741.4 1056.4 741.1 1063.4 737.6 1070.4 735.8 1077.4 733.9 1084.5 732.4 1091.5 730.9 1098.5 729.5 1105.5 728.2 1112.5 727.0 1119.5 725.7 1126.6 724.3 1133.6 723.0 1143.3 721.7" stroke="#008f1e" marker-mid="url(#cu53)" marker-end="url(#cu53)"/>
<path d="M846.0 906.6 853.0 871.2 860.0 847.9 867.0 835.6 874.0 823.6 881.0 812.9 888.0 805.7 895.1 800.1 902.1 794.8 909.1 787.8 916.1 781.7 923.1 777.6" stroke="#008b21" marker-start="url(#c54)" marker-mid="url(#c54)" marker-end="url(#c54)"/>
<path d="M923.1 777.6 930.1 775.9 944.2 772.3 958.2 772.0 972.2 765.4 986.3 765.1 1000.3 757.8 1014.3 757.4 1028.3 748.3 1042.4 748.0 1056.4 741.4 1070.4 741.1 1077.4 737.6 1084.5 735.8 1091.5 733.9 1098.5 732.4 1105.5 730.9 1112.5 729.5 1119.5 728.2 1126.6 727.0 1133.6 725.7 1140.6 724.3 1147.6 723.0 1157.4 721.7" stroke="#008b21" marker-mid="url(#cu54)" marker-end="url(#cu54)"/>
<path d="M860.0 906.8 867.0 871.2 874.0 847.9 881.0 835.6 888.0 823.6 895.1 812.9 902.1 805.7 909.1 800.1 916.1 794.8 923.1 787.8 930.1 781.7 937.1 777.6" stroke="#008625" marker-start="url(#c55)" marker-mid="url(#c55)" marker-end="url(#c55)"/>
<path d="M937.1 777.6 944.2 775.9 958.2 772.3 972.2 772.0 986.3 765.4 1000.3 765.1 1014.3 757.8 1028.3 757.4 1042.4 748.3 1056.4 748.0 1070.4 741.4 1084.5 741.1 1091.5 737.6 1098.5 735.8 1105.5 733.9 1112.5 732.4 1119.5 730.9 1126.6 729.5 1133.6 728.2 1140.6 727.0 1147.6 725.7 1154.6 724.3 1161.6 723.0 1171.4 721.7" stroke="#008625" marker-mid="url(#cu55)" marker-end="url(#cu55)"/>
<path d="M874.0 907.9 881.0 871.2 888.0 847.9 895.1 835.6 902.1 823.6 909.1 812.9 916.1 805.7 923.1 800.1 930.1 794.8 937.1 787.8 944.2 781.7 951.2 777.6" stroke="#008228" marker-start="url(#c56)" marker-mid="url(#c56)" marker-end="url(#c56)"/>
<path d="M951.2 777.6 958.2 775.9 972.2 772.3 986.3 772.0 1000.3 765.4 1014.3 765.1 1028.3 757.8 1042.4 757.4 1056.4 748.3 1070.4 748.0 1084.5 741.4 1098.5 741.1 1105.5 737.6 1112.5 735.8 1119.5 733.9 1126.6 732.4 1133.6 730.9 1140.6 729.5 1147.6 728.2 1154.6 727.0 1161.6 725.7 1168.6 724.3 1175.7 723.0 1185.4 721.7" stroke="#008228" marker-mid="url(#cu56)" marker-end="url(#cu56)"/>
<path d="M888.0 907.3 895.1 871.2 902.1 847.9 909.1 835.6 916.1 823.6 923.1 812.9 930.1 805.7 937.1 800.1 944.2 794.8 951.2 787.8 958.2 781.7 965.2 777.6" stroke="#007d2c" marker-start="url(#c57)" marker-mid="url(#c57)" marker-end="url(#c57)"/>
<path d="M965.2 777.6 972.2 775.9 986.3 772.3 1000.3 772.0 1014.3 765.4 1028.3 765.1 1042.4 757.8 1056.4 757.4 1070.4 748.3 1084.5 748.0 1098.5 741.4 1112.5 741.1 1119.5 737.6 1126.6 735.8 1133.6 733.9 1140.6 732.4 1147.6 730.9 1154.6 729.5 1161.6 728.2 1168.6 727.0 1175.7 725.7 1182.7 724.3 1189.7 723.0 1199.4 721.7" stroke="#007d2c" marker-mid="url(#cu57)" marker-end="url(#cu57)"/>
<path d="M902.1 908.2 909.1 871.2 916.1 847.9 923.1 835.6 930.1 823.6 937.1 812.9 944.2 805.7 951.2 800.1 958.2 794.8 965.2 787.8 972.2 781.7 979.2 777.6" stroke="#007930" marker-start="url(#c58)" marker-mid="url(#c58)" marker-end="url(#c58)"/>
<path d="M979.2 777.6 986.3 775.9 1000.3 772.3 1014.3 772.0 1028.3 765.4 1042.4 765.1 1056.4 757.8 1070.4 757.4 1084.5 748.3 1098.5 748.0 1112.5 741.4 1126.6 741.1 1133.6 737.6 1140.6 735.8 1147.6 733.9 1154.6 732.4 1161.6 730.9 1168.6 729.5 1175.7 728.2 1182.7 727.0 1189.7 725.7 1196.7 724.3 1203.7 723.0 1213.5 721.7" stroke="#007930" marker-mid="url(#cu58)" marker-end="url(#cu58)"/>
<path d="M916.1 906.7 923.1 871.2 930.1 847.9 937.1 835.6 944.2 823.6 951.2 812.9 958.2 805.7 965.2 800.1 972.2 794.8 979.2 787.8 986.3 781.7 993.3 777.6" stroke="#007434" marker-start="url(#c59)" marker-mid="url(#c59)" marker-end="url(#c59)"/>
<path d="M993.3 777.6 1000.3 775.9 1014.3 772.3 1028.3 772.0 1042.4 765.4 1056.4 765.1 1070.4 757.8 1084.5 757.4 1098.5 748.3 1112.5 748.0 1126.6 741.4 1140.6 741.1 1147.6 737.6 1154.6 735.8 1161.6 733.9 1168.6 732.4 1175.7 730.9 1182.7 729.5 1189.7 728.2 1196.7 727.0 1203.7 725.7 1210.7 724.3 1217.7 723.0 1227.5 721.7" stroke="#007434" marker-mid="url(#cu59)" marker-end="url(#cu59)"/>
<path d="M930.1 906.9 937.2 871.2 944.2 847.9 951.2 835.6 958.2 823.6 965.2 812.9 972.2 805.7 979.2 800.1 986.3 794.8 993.3 787.8 1000.3 781.7 1007.3 777.6" stroke="#007039" marker-start="url(#c60)" marker-mid="url(#c60)" marker-end="url(#c60)"/>
<path d="M1007.3 777.6 1014.3 775.9 1028.3 772.3 1042.4 772.0 1056.4 765.4 1070.4 765.1 1084.5 757.8 1098.5 757.4 1112.5 748.3 1126.6 748.0 1140.6 741.4 1154.6 741.1 1161.6 737.6 1168.6 735.8 1175.7 733.9 1182.7 732.4 1189.7 730.9 1196.7 729.5 1203.7 728.2 1210.7 727.0 1217.8 725.7 1224.8 724.3 1231.8 723.0 1241.5 721.7" stroke="#007039" marker-mid="url(#cu60)" marker-end="url(#cu60)"/>
<path d="M944.2 907.1 951.2 871.2 958.2 847.9 965.2 835.6 972.2 823.6 979.2 812.9 986.3 805.7 993.3 800.1 1000.3 794.8 1007.3 787.8 1014.3 781.7 1021.3 777.6" stroke="#006b3e" marker-start="url(#c61)" marker-mid="url(#c61)" marker-end="url(#c61)"/>
<path d="M1021.3 777.6 1028.3 775.9 1042.4 772.4 1056.4 772.0 1070.4 765.5 1084.5 765.2 1098.5 757.9 1112.5 757.6 1126.6 748.5 1140.6 748.2 1154.6 741.7 1168.6 741.4 1175.7 737.9 1182.7 736.0 1189.7 734.2 1196.7 732.8 1203.7 731.3 1210.7 729.8 1217.8 728.6 1224.8 727.3 1231.8 726.1 1238.8 724.7 1245.8 723.3 1255.6 722.1" stroke="#006b3e" marker-mid="url(#cu61)" marker-end="url(#cu61)"/>
<path d="M958.2 907.2 965.2 871.2 972.2 847.9 979.2 835.6 986.3 823.6 993.3 812.9 1000.3 805.7 1007.3 800.1 1014.3 794.8 1021.3 787.8 1028.3 781.7 1035.4 777.6" stroke="#006743" marker-start="url(#c62)" marker-mid="url(#c62)" marker-end="url(#c62)"/>
<path d="M1035.4 777.6 1042.4 776.0 1056.4 772.4 1070.4 772.1 1084.5 765.6 1098.5 765.3 1112.5 758.1 1126.6 757.8 1140.6 748.7 1154.6 748.4 1168.6 741.9 1182.7 741.6 1189.7 738.1 1196.7 736.3 1203.7 734.5 1210.7 733.1 1217.8 731.6 1224.8 730.1 1231.8 728.9 1238.8 727.7 1245.8 726.5 1252.8 725.1 1259.8 723.7 1269.6 722.5" stroke="#006743" marker-mid="url(#cu62)" marker-end="url(#cu62)"/>
<path d="M972.2 906.9 979.2 871.2 986.3 847.9 993.3 835.6 1000.3 823.6 1007.3 812.9 1014.3 805.7 1021.3 800.1 1028.3 794.8 1035.4 787.8 1042.4 781.7 1049.4 777.6" stroke="#006248" marker-start="url(#c63)" marker-mid="url(#c63)" marker-end="url(#c63)"/>
<path d="M1049.4 777.6 1056.4 776.0 1070.4 772.5 1084.5 772.2 1098.5 765.7 1112.5 765.4 1126.6 758.2 1140.6 757.9 1154.6 748.9 1168.6 748.6 1182.7 742.2 1196.7 741.9 1203.7 738.4 1210.7 736.6 1217.8 734.8 1224.8 733.4 1231.8 731.9 1238.8 730.4 1245.8 729.2 1252.8 728.0 1259.8 726.8 1266.9 725.5 1273.9 724.1 1283.6 722.9" stroke="#006248" marker-mid="url(#cu63)" marker-end="url(#cu63)"/>
<path d="M986.3 907.6 993.3 871.2 1000.3 847.9 1007.3 835.6 1014.3 823.6 1021.3 812.9 1028.3 805.7 1035.4 800.1 1042.4 794.8 1049.4 787.8 1056.4 781.7 1063.4 777.7" stroke="#005e4d" marker-start="url(#c64)" marker-mid="url(#c64)" marker-end="url(#c64)"/>
<path d="M1063.4 777.7 1070.4 776.0 1084.5 772.5 1098.5 772.3 1112.5 765.8 1126.6 765.6 1140.6 758.4 1154.6 758.1 1168.6 749.1 1182.7 748.8 1196.7 742.4 1210.7 742.1 1217.8 738.7 1224.8 736.9 1231.8 735.1 1238.8 733.7 1245.8 732.2 1252.8 730.8 1259.8 729.6 1266.9 728.4 1273.9 727.2 1280.9 725.8 1287.9 724.5 1297.7 723.3" stroke="#005e4d" marker-mid="url(#cu64)" marker-end="url(#cu64)"/>
<path d="M1000.3 906.7 1007.3 871.2 1014.3 847.9 1021.3 835.6 1028.3 823.6 1035.4 812.9 1042.4 805.7 1049.4 800.1 1056.4 794.8 1063.4 787.8 1070.4 781.7 1077.5 777.7" stroke="#005953" marker-start="url(#c65)" marker-mid="url(#c65)" marker-end="url(#c65)"/>
<path d="M1077.5 777.7 1084.5 776.1 1098.5 772.6 1112.5 772.4 1126.6 765.9 1140.6 765.7 1154.6 758.5 1168.6 758.3 1182.7 749.3 1196.7 749.1 1210.7 742.6 1224.8 742.4 1231.8 739.0 1238.8 737.2 1245.8 735.4 1252.8 734.0 1259.8 732.5 1266.9 731.1 1273.9 729.9 1280.9 728.7 1287.9 727.6 1294.9 726.2 1301.9 724.9 1311.7 723.7" stroke="#005953" marker-mid="url(#cu65)" marker-end="url(#cu65)"/>
<path d="M1014.3 907.6 1021.3 871.2 1028.3 847.9 1035.4 835.6 1042.4 823.6 1049.4 812.9 1056.4 805.7 1063.4 800.1 1070.4 794.8 1077.5 787.8 1084.5 781.8 1091.5 777.7" stroke="#005559" marker-start="url(#c66)" marker-mid="url(#c66)" marker-end="url(#c66)"/>
<path d="M1091.5 777.7 1098.5 776.1 1112.5 772.7 1126.6 772.5 1140.6 766.0 1154.6 765.8 1168.6 758.7 1182.7 758.5 1196.7 749.5 1210.7 749.3 1224.8 742.9 1238.8 742.7 1245.8 739.2 1252.8 737.5 1259.8 735.7 1266.9 734.3 1273.9 732.9 1280.9 731.4 1287.9 730.3 1294.9 729.1 1301.9 727.9 1308.9 726.6 1316.0 725.3 1325.7 724.1" stroke="#005559" marker-mid="url(#cu66)" marker-end="url(#cu66)"/>
<path d="M1028.3 907.6 1035.4 871.2 1042.4 847.9 1049.4 835.6 1056.4 823.6 1063.4 812.9 1070.4 805.7 1077.5 800.1 1084.5 794.8 1091.5 787.8 1098.5 781.8 1105.5 777.7" stroke="#00515f" marker-start="url(#c67)" marker-mid="url(#c67)" marker-end="url(#c67)"/>
<path d="M1105.5 777.7 1112.5 776.2 1126.6 772.7 1140.6 772.5 1154.6 766.1 1168.6 766.0 1182.7 758.8 1196.7 758.6 1210.7 749.7 1224.8 749.5 1238.8 743.1 1252.8 742.9 1259.8 739.5 1266.9 737.8 1273.9 736.0 1280.9 734.6 1287.9 733.2 1294.9 731.8 1301.9 730.6 1308.9 729.5 1316.0 728.3 1323.0 727.0 1330.0 725.7 1339.7 724.5" stroke="#00515f" marker-mid="url(#cu67)" marker-end="url(#cu67)"/>
<path d="M1042.4 907.2 1049.4 871.2 1056.4 847.9 1063.4 835.6 1070.4 823.6 1077.5 812.9 1084.5 805.7 1091.5 800.1 1098.5 794.8 1105.5 787.8 1112.5 781.8 1119.5 777.8" stroke="#004c66" marker-start="url(#c68)" marker-mid="url(#c68)" marker-end="url(#c68)"/>
<path d="M1119.5 777.8 1126.6 776.2 1140.6 772.8 1154.6 772.6 1168.7 766.2 1182.7 766.1 1196.7 759.0 1210.7 758.8 1224.8 749.9 1238.8 749.7 1252.8 743.4 1266.9 743.2 1273.9 739.8 1280.9 738.0 1287.9 736.3 1294.9 734.9 1301.9 733.5 1309.0 732.1 1316.0 731.0 1323.0 729.8 1330.0 728.6 1337.0 727.3 1344.0 726.1 1353.8 724.9" stroke="#004c66" marker-mid="url(#cu68)" marker-end="url(#cu68)"/>
<path d="M1056.4 907.3 1063.4 871.2 1070.4 847.9 1077.5 835.6 1084.5 823.6 1091.5 812.9 1098.5 805.7 1105.5 800.1 1112.5 794.8 1119.5 787.8 1126.6 781.8 1133.6 777.8" stroke="#00486c" marker-start="url(#c69)" marker-mid="url(#c69)" marker-end="url(#c69)"/>
<path d="M1133.6 777.8 1140.6 776.2 1154.6 772.8 1168.7 772.7 1182.7 766.3 1196.7 766.2 1210.7 759.1 1224.8 759.0 1238.8 750.1 1252.8 749.9 1266.9 743.6 1280.9 743.5 1287.9 740.1 1294.9 738.3 1301.9 736.6 1309.0 735.2 1316.0 733.8 1323.0 732.4 1330.0 731.3 1337.0 730.2 1344.0 729.0 1351.0 727.7 1358.1 726.4 1367.8 725.3" stroke="#00486c" marker-mid="url(#cu69)" marker-end="url(#cu69)"/>
<path d="M1070.4 907.4 1077.5 871.2 1084.5 847.9 1091.5 835.6 1098.5 823.6 1105.5 812.9 1112.5 805.7 1119.5 800.1 1126.6 794.8 1133.6 787.8 1140.6 781.8 1147.6 777.8" stroke="#004373" marker-start="url(#c70)" marker-mid="url(#c70)" marker-end="url(#c70)"/>
<path d="M1147.6 777.8 1154.6 776.3 1168.7 772.9 1182.7 772.8 1196.7 766.5 1210.7 766.3 1224.8 759.3 1238.8 759.2 1252.8 750.3 1266.9 750.1 1280.9 743.8 1294.9 743.7 1301.9 740.3 1309.0 738.6 1316.0 736.9 1323.0 735.5 1330.0 734.1 1337.0 732.8 1344.0 731.6 1351.0 730.5 1358.1 729.4 1365.1 728.1 1372.1 726.8 1381.8 725.7" stroke="#004373" marker-mid="url(#cu70)" marker-end="url(#cu70)"/>
<path d="M1084.5 907.6 1091.5 871.2 1098.5 847.9 1105.5 835.6 1112.5 823.6 1119.5 812.9 1126.6 805.7 1133.6 800.1 1140.6 794.8 1147.6 787.8 1154.6 781.8 1161.6 777.9" stroke="#003f7b" marker-start="url(#c71)" marker-mid="url(#c71)" marker-end="url(#c71)"/>
<path d="M1161.6 777.9 1168.7 776.3 1182.7 773.0 1196.7 772.9 1210.7 766.6 1224.8 766.5 1238.8 759.4 1252.8 759.3 1266.9 750.5 1280.9 750.4 1294.9 744.1 1309.0 744.0 1316.0 740.6 1323.0 738.9 1330.0 737.2 1337.0 735.8 1344.0 734.5 1351.0 733.1 1358.1 732.0 1365.1 730.9 1372.1 729.7 1379.1 728.5 1386.1 727.2 1395.9 726.1" stroke="#003f7b" marker-mid="url(#cu71)" marker-end="url(#cu71)"/>
<path d="M1098.5 907.6 1105.5 871.2 1112.5 847.9 1119.5 835.6 1126.6 823.6 1133.6 812.9 1140.6 805.7 1147.6 800.1 1154.6 794.8 1161.6 787.8 1168.7 781.9 1175.7 777.9" stroke="#003a82" marker-start="url(#c72)" marker-mid="url(#c72)" marker-end="url(#c72)"/>
<path d="M1175.7 777.9 1182.7 776.4 1196.7 773.0 1210.7 773.0 1224.8 766.7 1238.8 766.6 1252.8 759.6 1266.9 759.5 1280.9 750.6 1294.9 750.6 1309.0 744.3 1323.0 744.3 1330.0 740.9 1337.0 739.2 1344.0 737.5 1351.0 736.1 1358.1 734.8 1365.1 733.4 1372.1 732.3 1379.1 731.2 1386.1 730.1 1393.1 728.9 1400.1 727.6 1409.9 726.5" stroke="#003a82" marker-mid="url(#cu72)" marker-end="url(#cu72)"/>
<path d="M1112.5 906.9 1119.5 871.2 1126.6 847.9 1133.6 835.6 1140.6 823.6 1147.6 812.9 1154.6 805.7 1161.6 800.1 1168.7 794.8 1175.7 787.9 1182.7 781.9 1189.7 777.9" stroke="#00368a" marker-start="url(#c73)" marker-mid="url(#c73)" marker-end="url(#c73)"/>
<path d="M1189.7 777.9 1196.7 776.4 1210.7 773.1 1224.8 773.0 1238.8 766.8 1252.8 766.7 1266.9 759.7 1280.9 759.7 1294.9 750.8 1309.0 750.8 1323.0 744.6 1337.0 744.5 1344.0 741.2 1351.0 739.5 1358.1 737.8 1365.1 736.4 1372.1 735.1 1379.1 733.8 1386.1 732.7 1393.1 731.6 1400.1 730.5 1407.2 729.2 1414.2 728.0 1423.9 726.9" stroke="#00368a" marker-mid="url(#cu73)" marker-end="url(#cu73)"/>
<path d="M1126.6 908.5 1133.6 871.2 1140.6 847.9 1147.6 835.6 1154.6 823.6 1161.6 812.9 1168.7 805.7 1175.7 800.1 1182.7 794.8 1189.7 787.9 1196.7 781.9 1203.7 777.9" stroke="#003192" marker-start="url(#c74)" marker-mid="url(#c74)" marker-end="url(#c74)"/>
<path d="M1203.7 777.9 1210.7 776.4 1224.8 773.2 1238.8 773.1 1252.8 766.9 1266.9 766.9 1280.9 759.9 1294.9 759.9 1309.0 751.0 1323.0 751.0 1337.0 744.8 1351.0 744.8 1358.1 741.4 1365.1 739.8 1372.1 738.1 1379.1 736.8 1386.1 735.4 1393.1 734.1 1400.1 733.0 1407.2 731.9 1414.2 730.8 1421.2 729.6 1428.2 728.4 1438.0 727.3" stroke="#003192" marker-mid="url(#cu74)" marker-end="url(#cu74)"/>
<path d="M1140.6 908.1 1147.6 871.2 1154.6 847.9 1161.6 835.6 1168.7 823.6 1175.7 812.9 1182.7 805.7 1189.7 800.1 1196.7 794.8 1203.7 787.9 1210.7 781.9 1217.8 778.0" stroke="#002d9a" marker-start="url(#c75)" marker-mid="url(#c75)" marker-end="url(#c75)"/>
<path d="M1217.8 778.0 1224.8 776.5 1238.8 773.2 1252.8 773.2 1266.9 767.0 1280.9 767.0 1294.9 760.0 1309.0 760.0 1323.0 751.2 1337.0 751.2 1351.0 745.0 1365.1 745.0 1372.1 741.7 1379.1 740.0 1386.1 738.4 1393.1 737.1 1400.1 735.7 1407.2 734.4 1414.2 733.3 1421.2 732.3 1428.2 731.2 1435.2 730.0 1442.2 728.8 1452.0 727.7" stroke="#002d9a" marker-mid="url(#cu75)" marker-end="url(#cu75)"/>
<path d="M1154.6 908.2 1161.6 871.2 1168.7 847.9 1175.7 835.6 1182.7 823.6 1189.7 812.9 1196.7 805.7 1203.7 800.1 1210.7 794.8 1217.8 787.9 1224.8 781.9 1231.8 778.0" stroke="#0028a3" marker-start="url(#c76)" marker-mid="url(#c76)" marker-end="url(#c76)"/>
<path d="M1231.8 778.0 1238.8 776.5 1252.8 773.2 1266.9 773.2 1280.9 767.0 1294.9 767.0 1309.0 760.0 1323.0 760.0 1337.0 751.2 1351.0 751.2 1365.1 745.0 1379.1 745.0 1386.1 741.7 1393.1 740.0 1400.1 738.4 1407.2 737.1 1414.2 735.7 1421.2 734.4 1428.2 733.3 1435.2 732.3 1442.2 731.2 1449.3 730.0 1456.3 728.8 1466.0 727.7" stroke="#0028a3" marker-mid="url(#cu76)" marker-end="url(#cu76)"/>
<path d="M1168.7 907.5 1175.7 871.2 1182.7 847.9 1189.7 835.6 1196.7 823.6 1203.7 812.9 1210.7 805.7 1217.8 800.1 1224.8 794.8 1231.8 787.9 1238.8 781.9 1245.8 778.0" stroke="#0024ac" marker-start="url(#c77)" marker-mid="url(#c77)" marker-end="url(#c77)"/>
<path d="M1245.8 778.0 1252.8 776.5 1266.9 773.2 1280.9 773.2 1294.9 767.0 1309.0 767.0 1323.0 760.0 1337.0 760.0 1351.0 751.2 1365.1 751.2 1379.1 745.0 1393.1 745.0 1400.2 741.7 1407.2 740.0 1414.2 738.4 1421.2 737.1 1428.2 735.7 1435.2 734.4 1442.2 733.3 1449.3 732.3 1456.3 731.2 1463.3 730.0 1470.3 728.8 1480.1 727.7" stroke="#0024ac" marker-mid="url(#cu77)" marker-end="url(#cu77)"/>
<path d="M1182.7 906.7 1189.7 871.2 1196.7 847.9 1203.7 835.6 1210.7 823.6 1217.8 812.9 1224.8 805.7 1231.8 800.1 1238.8 794.8 1245.8 787.9 1252.8 781.9 1259.9 778.0" stroke="#001fb5" marker-start="url(#c78)" marker-mid="url(#c78)" marker-end="url(#c78)"/>
<path d="M1259.9 778.0 1266.9 776.5 1280.9 773.2 1294.9 773.2 1309.0 767.0 1323.0 767.0 1337.0 760.0 1351.0 760.0 1365.1 751.2 1379.1 751.2 1393.1 745.0 1407.2 745.0 1414.2 741.7 1421.2 740.0 1428.2 738.4 1435.2 737.1 1442.2 735.7 1449.3 734.4 1456.3 733.3 1463.3 732.3 1470.3 731.2 1477.3 730.0 1484.3 728.8 1494.1 727.7" stroke="#001fb5" marker-mid="url(#cu78)" marker-end="url(#cu78)"/>
<path d="M1196.7 907.4 1203.7 871.2 1210.7 847.9 1217.8 835.6 1224.8 823.6 1231.8 812.9 1238.8 805.7 1245.8 800.1 1252.8 794.8 1259.9 787.9 1266.9 781.9 1273.9 778.0" stroke="#001bbf" marker-start="url(#c79)" marker-mid="url(#c79)" marker-end="url(#c79)"/>
<path d="M1273.9 778.0 1280.9 776.5 1294.9 773.2 1309.0 773.2 1323.0 767.0 1337.0 767.0 1351.0 760.0 1365.1 760.0 1379.1 751.2 1393.1 751.2 1407.2 745.0 1421.2 745.0 1428.2 741.7 1435.2 740.0 1442.2 738.4 1449.3 737.1 1456.3 735.7 1463.3 734.4 1470.3 733.3 1477.3 732.3 1484.3 731.2 1491.3 730.0 1498.4 728.8 1508.1 727.7" stroke="#001bbf" marker-mid="url(#cu79)" marker-end="url(#cu79)"/>
<path d="M1210.7 907.4 1217.8 871.2 1224.8 847.9 1231.8 835.6 1238.8 823.6 1245.8 812.9 1252.8 805.7 1259.9 800.1 1266.9 794.8 1273.9 787.9 1280.9 781.9 1287.9 778.0" stroke="#0016c9" marker-start="url(#c80)" marker-mid="url(#c80)" marker-end="url(#c80)"/>
<path d="M1287.9 778.0 1294.9 776.5 1309.0 773.2 1323.0 773.2 1337.0 767.0 1351.0 767.0 1365.1 760.0 1379.1 760.0 1393.1 751.2 1407.2 751.2 1421.2 745.0 1435.2 745.0 1442.2 741.7 1449.3 740.0 1456.3 738.4 1463.3 737.1 1470.3 735.7 1477.3 734.4 1484.3 733.3 1491.3 732.3 1498.4 731.2 1505.4 730.0 1512.4 728.8 1522.1 727.7" stroke="#0016c9" marker-mid="url(#cu80)" marker-end="url(#cu80)"/>
<path d="M1224.8 906.7 1231.8 871.2 1238.8 847.9 1245.8 835.6 1252.8 823.6 1259.9 812.9 1266.9 805.7 1273.9 800.1 1280.9 794.8 1287.9 787.9 1294.9 781.9 1301.9 778.0" stroke="#0012d3" marker-start="url(#c81)" marker-mid="url(#c81)" marker-end="url(#c81)"/>
<path d="M1301.9 778.0 1309.0 776.5 1323.0 773.2 1337.0 773.2 1351.0 767.0 1365.1 767.0 1379.1 760.0 1393.1 760.0 1407.2 751.2 1421.2 751.2 1435.2 745.0 1449.3 745.0 1456.3 741.7 1463.3 740.0 1470.3 738.4 1477.3 737.1 1484.3 735.7 1491.3 734.4 1498.4 733.3 1505.4 732.3 1512.4 731.2 1519.4 730.0 1526.4 728.8 1536.2 727.7" stroke="#0012d3" marker-mid="url(#cu81)" marker-end="url(#cu81)"/>
<path d="M1238.8 906.5 1245.8 871.2 1252.8 847.9 1259.9 835.6 1266.9 823.6 1273.9 812.9 1280.9 805.7 1287.9 800.1 1294.9 794.8 1301.9 787.9 1309.0 781.9 1316.0 778.0" stroke="#000dde" marker-start="url(#c82)" marker-mid="url(#c82)" marker-end="url(#c82)"/>
<path d="M1316.0 778.0 1323.0 776.5 1337.0 773.2 1351.0 773.2 1365.1 767.0 1379.1 767.0 1393.1 760.0 1407.2 760.0 1421.2 751.2 1435.2 751.2 1449.3 745.0 1463.3 745.0 1470.3 741.7 1477.3 740.0 1484.3 738.4 1491.3 737.1 1498.4 735.7 1505.4 734.4 1512.4 733.3 1519.4 732.3 1526.4 731.2 1533.4 730.0 1540.5 728.8 1550.2 727.7" stroke="#000dde" marker-mid="url(#cu82)" marker-end="url(#cu82)"/>
<path d="M1252.8 908.1 1259.9 871.2 1266.9 847.9 1273.9 835.6 1280.9 823.6 1287.9 812.9 1294.9 805.7 1301.9 800.1 1309.0 794.8 1316.0 787.9 1323.0 781.9 1330.0 778.0" stroke="#0009e8" marker-start="url(#c83)" marker-mid="url(#c83)" marker-end="url(#c83)"/>
<path d="M1330.0 778.0 1337.0 776.5 1351.0 773.2 1365.1 773.2 1379.1 767.0 1393.1 767.0 1407.2 760.0 1421.2 760.0 1435.2 751.2 1449.3 751.2 1463.3 745.0 1477.3 745.0 1484.3 741.7 1491.3 740.0 1498.4 738.4 1505.4 737.1 1512.4 735.7 1519.4 734.4 1526.4 733.3 1533.4 732.3 1540.5 731.2 1547.5 730.0 1554.5 728.8 1564.2 727.7" stroke="#0009e8" marker-mid="url(#cu83)" marker-end="url(#cu83)"/>
<path d="M1266.9 911.7 1273.9 871.2 1280.9 847.9 1287.9 835.6 1294.9 823.6 1301.9 812.9 1309.0 805.7 1316.0 800.1 1323.0 794.8 1330.0 787.9 1337.0 781.9 1344.0 778.0" stroke="#0004f4" marker-start="url(#c84)" marker-mid="url(#c84)" marker-end="url(#c84)"/>
<path d="M1344.0 778.0 1351.0 776.5 1365.1 773.2 1379.1 773.2 1393.1 767.0 1407.2 767.0 1421.2 760.0 1435.2 760.0 1449.3 751.2 1463.3 751.2 1477.3 745.0 1491.3 745.0 1498.4 741.7 1505.4 740.0 1512.4 738.4 1519.4 737.1 1526.4 735.7 1533.4 734.4 1540.5 733.3 1547.5 732.3 1554.5 731.2 1561.5 730.0 1568.5 728.8 1578.3 727.7" stroke="#0004f4" marker-mid="url(#cu84)" marker-end="url(#cu84)"/>
<path d="M1280.9 911.9 1287.9 871.2 1294.9 847.9 1301.9 835.6 1309.0 823.6 1316.0 812.9 1323.0 805.7 1330.0 800.1 1337.0 794.8 1344.0 787.9 1351.1 781.9 1358.1 778.0" stroke="#0000ff" marker-start="url(#c85)" marker-mid="url(#c85)" marker-end="url(#c85)"/>
<path d="M1358.1 778.0 1365.1 776.5 1379.1 773.2 1393.1 773.2 1407.2 767.0 1421.2 767.0 1435.2 760.0 1449.3 760.0 1463.3 751.2 1477.3 751.2 1491.4 745.0 1505.4 745.0 1512.4 741.7 1519.4 740.0 1526.4 738.4 1533.4 737.1 1540.5 735.7 1547.5 734.4 1554.5 733.3 1561.5 732.3 1568.5 731.2 1575.5 730.0 1582.5 728.8 1592.3 727.7" stroke="#0000ff" marker-mid="url(#cu85)" marker-end="url(#cu85)"/>
</g>
<g font-size="16" fill="#000" text-anchor="middle" letter-spacing="-1.6" stroke="#000" stroke-width="0.3">
<text x="189.8" y="774">1</text>
<text x="203.8" y="774">2</text>
<text x="217.9" y="774">3</text>
<text x="231.9" y="774">4</text>
<text x="245.9" y="774">5</text>
<text x="259.9" y="774">6</text>
<text x="274.0" y="774">7</text>
<text x="288.0" y="774">8</text>
<text x="302.0" y="774">9</text>
<text x="316.1" y="774">10</text>
<text x="330.1" y="774">11</text>
<text x="344.1" y="774">12</text>
<text x="358.2" y="774">13</text>
<text x="372.2" y="774">14</text>
<text x="386.2" y="774">15</text>
<text x="400.2" y="774">16</text>
<text x="414.3" y="774">17</text>
<text x="428.3" y="774">18</text>
<text x="442.3" y="774">19</text>
<text x="456.4" y="774">20</text>
<text x="470.4" y="774">21</text>
<text x="484.4" y="774">22</text>
<text x="498.5" y="774">23</text>
<text x="512.5" y="774">24</text>
<text x="526.5" y="774">25</text>
<text x="540.5" y="774">26</text>
<text x="554.6" y="774">27</text>
<text x="568.6" y="774">28</text>
<text x="582.6" y="774">29</text>
<text x="596.7" y="774">30</text>
<text x="610.7" y="774">31</text>
<text x="624.7" y="774">32</text>
<text x="638.8" y="774">33</text>
<text x="652.8" y="774">34</text>
<text x="666.8" y="774">35</text>
<text x="680.8" y="774">36</text>
<text x="694.9" y="774">37</text>
<text x="708.9" y="774">38</text>
<text x="722.9" y="774">39</text>
<text x="737.0" y="774">40</text>
<text x="751.0" y="774">41</text>
<text x="765.0" y="774">42</text>
<text x="779.1" y="774">43</text>
<text x="793.1" y="774">44</text>
<text x="807.1" y="774">45</text>
<text x="821.1" y="774">46</text>
<text x="835.2" y="774">47</text>
<text x="849.2" y="774">48</text>
<text x="863.2" y="774">49</text>
<text x="877.3" y="774">50</text>
<text x="891.3" y="774">51</text>
<text x="905.3" y="774">52</text>
<text x="919.4" y="774">53</text>
<text x="933.4" y="774">54</text>
<text x="947.4" y="774">55</text>
<text x="961.4" y="774">56</text>
<text x="975.5" y="774">57</text>
<text x="989.5" y="774">58</text>
<text x="1003.5" y="774">59</text>
<text x="1017.6" y="774">60</text>
<text x="1031.6" y="774">61</text>
<text x="1045.6" y="774">62</text>
<text x="1059.7" y="774">63</text>
<text x="1073.7" y="774">64</text>
<text x="1087.7" y="774">65</text>
<text x="1101.8" y="774">66</text>
<text x="1115.8" y="774">67</text>
<text x="1129.8" y="774">68</text>
<text x="1143.8" y="774">69</text>
<text x="1157.9" y="774">70</text>
<text x="1171.9" y="774">71</text>
<text x="1185.9" y="774">72</text>
<text x="1200.0" y="774">73</text>
<text x="1214.0" y="774">74</text>
<text x="1228.0" y="774">75</text>
<text x="1242.1" y="774">76</text>
<text x="1256.1" y="774">77</text>
<text x="1270.1" y="774">78</text>
<text x="1284.1" y="774">79</text>
<text x="1298.2" y="774">80</text>
<text x="1312.2" y="774">81</text>
<text x="1326.2" y="774">82</text>
<text x="1340.3" y="774">83</text>
<text x="1354.3" y="774">84</text>
<text x="1368.3" y="774">85</text>
<text x="1382.4" y="774">86</text>
</g>
<path d="M52.5 599.5 H1681.5 V942 H52.5 Z" fill="none" stroke="#000" stroke-width="1.5"/>
<line x1="52" y1="942.5" x2="1682" y2="942.5" stroke="#000" stroke-width="1"/>
<path d="M48 729.9H52 M48 701.2H52 M48 680.9H52 M48 665.1H52 M48 652.2H52 M48 641.2H52 M48 631.8H52 M48 623.5H52 M48 892.9H52 M48 864.2H52 M48 843.9H52 M48 828.1H52 M48 815.2H52 M48 804.2H52 M48 794.8H52 M48 786.5H52 M45 616.5H52 M45 779.5H52 M45 942.5H52" stroke="#444" stroke-width="1.6"/>
<text x="35.5" y="622.0" font-size="18" fill="#000" text-anchor="end" >10</text>
<text x="38.0" y="610.0" font-size="13" fill="#000" text-anchor="start" >2</text>
<text x="35.5" y="785.0" font-size="18" fill="#000" text-anchor="end" >10</text>
<text x="38.0" y="773.0" font-size="13" fill="#000" text-anchor="start" >1</text>
<text x="35.5" y="948.0" font-size="18" fill="#000" text-anchor="end" >10</text>
<text x="38.0" y="936.0" font-size="13" fill="#000" text-anchor="start" >0</text>
<path d="M101.0 942V949.5 M171.2 942V946.5 M241.5 942V949.5 M311.8 942V946.5 M382.0 942V949.5 M452.2 942V946.5 M522.5 942V949.5 M592.8 942V946.5 M663.0 942V949.5 M733.2 942V946.5 M803.5 942V949.5 M873.8 942V946.5 M944.0 942V949.5 M1014.2 942V946.5 M1084.5 942V949.5 M1154.8 942V946.5 M1225.0 942V949.5 M1295.2 942V946.5 M1365.5 942V949.5 M1435.8 942V946.5 M1506.0 942V949.5 M1576.2 942V946.5 M1646.5 942V946.5" stroke="#444" stroke-width="1.4"/>
<text x="101.0" y="967.0" font-size="18" fill="#000" text-anchor="middle" >0</text>
<text x="241.5" y="967.0" font-size="18" fill="#000" text-anchor="middle" >20</text>
<text x="382.0" y="967.0" font-size="18" fill="#000" text-anchor="middle" >40</text>
<text x="522.5" y="967.0" font-size="18" fill="#000" text-anchor="middle" >60</text>
<text x="663.0" y="967.0" font-size="18" fill="#000" text-anchor="middle" >80</text>
<text x="803.5" y="967.0" font-size="18" fill="#000" text-anchor="middle" >100</text>
<text x="944.0" y="967.0" font-size="18" fill="#000" text-anchor="middle" >120</text>
<text x="1084.5" y="967.0" font-size="18" fill="#000" text-anchor="middle" >140</text>
<text x="1225.0" y="967.0" font-size="18" fill="#000" text-anchor="middle" >160</text>
<text x="1365.5" y="967.0" font-size="18" fill="#000" text-anchor="middle" >180</text>
<text x="1506.0" y="967.0" font-size="18" fill="#000" text-anchor="middle" >200</text>
<text x="27.0" y="588.0" font-size="19" fill="#101840" text-anchor="start" >ρ</text>
<text x="39.5" y="590.0" font-size="11" fill="#4060a0" text-anchor="start" >a</text>
<text x="1685.0" y="966.0" font-size="18" fill="#1c2050" text-anchor="start" >X</text>
<text x="1697.0" y="966.0" font-size="12" fill="#5070b0" text-anchor="start" >m</text>
<text x="1107.5" y="581.5" font-size="18" fill="#0000ff" text-anchor="middle" >Calculated apparent resistivity data</text>
<path d="M1773.5 599 H1716.5 Q1706.5 599 1706.5 609 V882 Q1706.5 892 1716.5 892 H1773.5" fill="#fff" stroke="#000" stroke-width="1.5"/>
<rect x="1774" y="599" width="12" height="293" fill="#c8c8c8" stroke="#808080" stroke-width="1.2"/>
<rect x="1775" y="610" width="10" height="34" fill="#c0c0c0" stroke="#fff" stroke-width="1"/>
<line x1="1774" y1="610" x2="1786" y2="610" stroke="#808080" stroke-width="1"/>
<path d="M1777 607 L1780 603 L1783 607z" fill="#a0a0a0"/>
<line x1="1774" y1="881" x2="1786" y2="881" stroke="#808080" stroke-width="1"/>
<path d="M1776.5 884 L1780 889 L1783.5 884z" fill="#000"/>
<rect x="1714" y="608.8" width="17.5" height="18" fill="#fff" stroke="#e0e0e0" stroke-width="2"/>
<path d="M1713 626.8 V607.8 H1732" fill="none" stroke="#909090" stroke-width="2"/>
<path d="M1717 616.3 L1721 622.8 L1728.5 611.8" fill="none" stroke="#000" stroke-width="3.2"/>
<path d="M1741 618.3 L1748 617.3 M1744.5 614.8 V620.8" stroke="#ff0000" stroke-width="2.2"/>
<text x="1755.5" y="621.3" font-size="16.5" textLength="7" lengthAdjust="spacingAndGlyphs">1</text>
<rect x="1714" y="637.25" width="17.5" height="18" fill="#fff" stroke="#e0e0e0" stroke-width="2"/>
<path d="M1713 655.25 V636.25 H1732" fill="none" stroke="#909090" stroke-width="2"/>
<path d="M1717 644.75 L1721 651.25 L1728.5 640.25" fill="none" stroke="#000" stroke-width="3.2"/>
<path d="M1741 646.75 L1748 645.75 M1744.5 643.25 V649.25" stroke="#f60900" stroke-width="2.2"/>
<text x="1755.5" y="649.75" font-size="16.5" textLength="7" lengthAdjust="spacingAndGlyphs">2</text>
<rect x="1714" y="665.6999999999999" width="17.5" height="18" fill="#fff" stroke="#e0e0e0" stroke-width="2"/>
<path d="M1713 683.6999999999999 V664.6999999999999 H1732" fill="none" stroke="#909090" stroke-width="2"/>
<path d="M1717 673.1999999999999 L1721 679.6999999999999 L1728.5 668.6999999999999" fill="none" stroke="#000" stroke-width="3.2"/>
<path d="M1741 675.1999999999999 L1748 674.1999999999999 M1744.5 671.6999999999999 V677.6999999999999" stroke="#ed1200" stroke-width="2.2"/>
<text x="1755.5" y="678.1999999999999" font-size="16.5" textLength="7" lengthAdjust="spacingAndGlyphs">3</text>
<rect x="1714" y="694.15" width="17.5" height="18" fill="#fff" stroke="#e0e0e0" stroke-width="2"/>
<path d="M1713 712.15 V693.15 H1732" fill="none" stroke="#909090" stroke-width="2"/>
<path d="M1717 701.65 L1721 708.15 L1728.5 697.15" fill="none" stroke="#000" stroke-width="3.2"/>
<path d="M1741 703.65 L1748 702.65 M1744.5 700.15 V706.15" stroke="#e41b00" stroke-width="2.2"/>
<text x="1755.5" y="706.65" font-size="16.5" textLength="7" lengthAdjust="spacingAndGlyphs">4</text>
<rect x="1714" y="722.5999999999999" width="17.5" height="18" fill="#fff" stroke="#e0e0e0" stroke-width="2"/>
<path d="M1713 740.5999999999999 V721.5999999999999 H1732" fill="none" stroke="#909090" stroke-width="2"/>
<path d="M1717 730.0999999999999 L1721 736.5999999999999 L1728.5 725.5999999999999" fill="none" stroke="#000" stroke-width="3.2"/>
<path d="M1741 732.0999999999999 L1748 731.0999999999999 M1744.5 728.5999999999999 V734.5999999999999" stroke="#db2400" stroke-width="2.2"/>
<text x="1755.5" y="735.0999999999999" font-size="16.5" textLength="7" lengthAdjust="spacingAndGlyphs">5</text>
<rect x="1714" y="751.05" width="17.5" height="18" fill="#fff" stroke="#e0e0e0" stroke-width="2"/>
<path d="M1713 769.05 V750.05 H1732" fill="none" stroke="#909090" stroke-width="2"/>
<path d="M1717 758.55 L1721 765.05 L1728.5 754.05" fill="none" stroke="#000" stroke-width="3.2"/>
<path d="M1741 760.55 L1748 759.55 M1744.5 757.05 V763.05" stroke="#d12e00" stroke-width="2.2"/>
<text x="1755.5" y="763.55" font-size="16.5" textLength="7" lengthAdjust="spacingAndGlyphs">6</text>
<rect x="1714" y="779.5" width="17.5" height="18" fill="#fff" stroke="#e0e0e0" stroke-width="2"/>
<path d="M1713 797.5 V778.5 H1732" fill="none" stroke="#909090" stroke-width="2"/>
<path d="M1717 787.0 L1721 793.5 L1728.5 782.5" fill="none" stroke="#000" stroke-width="3.2"/>
<path d="M1741 789.0 L1748 788.0 M1744.5 785.5 V791.5" stroke="#c83700" stroke-width="2.2"/>
<text x="1755.5" y="792.0" font-size="16.5" textLength="7" lengthAdjust="spacingAndGlyphs">7</text>
<rect x="1714" y="807.9499999999999" width="17.5" height="18" fill="#fff" stroke="#e0e0e0" stroke-width="2"/>
<path d="M1713 825.9499999999999 V806.9499999999999 H1732" fill="none" stroke="#909090" stroke-width="2"/>
<path d="M1717 815.4499999999999 L1721 821.9499999999999 L1728.5 810.9499999999999" fill="none" stroke="#000" stroke-width="3.2"/>
<path d="M1741 817.4499999999999 L1748 816.4499999999999 M1744.5 813.9499999999999 V819.9499999999999" stroke="#bf4000" stroke-width="2.2"/>
<text x="1755.5" y="820.4499999999999" font-size="16.5" textLength="7" lengthAdjust="spacingAndGlyphs">8</text>
<rect x="1714" y="836.4" width="17.5" height="18" fill="#fff" stroke="#e0e0e0" stroke-width="2"/>
<path d="M1713 854.4 V835.4 H1732" fill="none" stroke="#909090" stroke-width="2"/>
<path d="M1717 843.9 L1721 850.4 L1728.5 839.4" fill="none" stroke="#000" stroke-width="3.2"/>
<path d="M1741 845.9 L1748 844.9 M1744.5 842.4 V848.4" stroke="#b64900" stroke-width="2.2"/>
<text x="1755.5" y="848.9" font-size="16.5" textLength="7" lengthAdjust="spacingAndGlyphs">9</text>
<rect x="1714" y="864.8499999999999" width="17.5" height="18" fill="#fff" stroke="#e0e0e0" stroke-width="2"/>
<path d="M1713 882.8499999999999 V863.8499999999999 H1732" fill="none" stroke="#909090" stroke-width="2"/>
<path d="M1717 872.3499999999999 L1721 878.8499999999999 L1728.5 867.8499999999999" fill="none" stroke="#000" stroke-width="3.2"/>
<path d="M1741 874.3499999999999 L1748 873.3499999999999 M1744.5 870.8499999999999 V876.8499999999999" stroke="#ad5200" stroke-width="2.2"/>
<text x="1751.5" y="877.3499999999999" font-size="16.5" textLength="15" lengthAdjust="spacingAndGlyphs">10</text>
<path d="M52.5 1025.5 H1681.5 V1384 H52.5 Z" fill="none" stroke="#000" stroke-width="1.5"/>
<line x1="52" y1="1384.5" x2="1682" y2="1384.5" stroke="#000" stroke-width="1"/>
<path d="M44.5 1043.0H52 M48 1056.3H52 M44.5 1069.5H52 M48 1082.8H52 M44.5 1096.0H52 M48 1109.3H52 M44.5 1122.6H52 M48 1135.8H52 M44.5 1149.1H52 M48 1162.3H52 M44.5 1175.6H52 M48 1188.9H52 M44.5 1202.1H52 M48 1215.4H52 M44.5 1228.6H52 M48 1241.9H52 M44.5 1255.2H52 M48 1268.4H52 M44.5 1281.7H52 M48 1294.9H52 M44.5 1308.2H52 M48 1321.5H52 M44.5 1334.7H52 M48 1348.0H52 M44.5 1361.2H52 M48 1374.5H52" stroke="#444" stroke-width="1.4"/>
<text x="44.5" y="1049.5" font-size="18" fill="#000" text-anchor="end" letter-spacing="-0.3">0</text>
<text x="44.5" y="1076.0" font-size="18" fill="#000" text-anchor="end" letter-spacing="-0.3">-2</text>
<text x="44.5" y="1102.5" font-size="18" fill="#000" text-anchor="end" letter-spacing="-0.3">-4</text>
<text x="44.5" y="1129.1" font-size="18" fill="#000" text-anchor="end" letter-spacing="-0.3">-6</text>
<text x="44.5" y="1155.6" font-size="18" fill="#000" text-anchor="end" letter-spacing="-0.3">-8</text>
<text x="44.5" y="1182.1" font-size="18" fill="#000" text-anchor="end" letter-spacing="-0.3">-10</text>
<text x="44.5" y="1208.6" font-size="18" fill="#000" text-anchor="end" letter-spacing="-0.3">-12</text>
<text x="44.5" y="1235.1" font-size="18" fill="#000" text-anchor="end" letter-spacing="-0.3">-14</text>
<text x="44.5" y="1261.7" font-size="18" fill="#000" text-anchor="end" letter-spacing="-0.3">-16</text>
<text x="44.5" y="1288.2" font-size="18" fill="#000" text-anchor="end" letter-spacing="-0.3">-18</text>
<text x="44.5" y="1314.7" font-size="18" fill="#000" text-anchor="end" letter-spacing="-0.3">-20</text>
<text x="44.5" y="1341.2" font-size="18" fill="#000" text-anchor="end" letter-spacing="-0.3">-22</text>
<text x="44.5" y="1367.7" font-size="18" fill="#000" text-anchor="end" letter-spacing="-0.3">-24</text>
<path d="M101.0 1384V1391.5 M171.2 1384V1388.5 M241.5 1384V1391.5 M311.8 1384V1388.5 M382.0 1384V1391.5 M452.2 1384V1388.5 M522.5 1384V1391.5 M592.8 1384V1388.5 M663.0 1384V1391.5 M733.2 1384V1388.5 M803.5 1384V1391.5 M873.8 1384V1388.5 M944.0 1384V1391.5 M1014.2 1384V1388.5 M1084.5 1384V1391.5 M1154.8 1384V1388.5 M1225.0 1384V1391.5 M1295.2 1384V1388.5 M1365.5 1384V1391.5 M1435.8 1384V1388.5 M1506.0 1384V1391.5 M1576.2 1384V1388.5 M1646.5 1384V1388.5" stroke="#444" stroke-width="1.4"/>
<text x="101.0" y="1409.0" font-size="18" fill="#000" text-anchor="middle" >0</text>
<text x="241.5" y="1409.0" font-size="18" fill="#000" text-anchor="middle" >20</text>
<text x="382.0" y="1409.0" font-size="18" fill="#000" text-anchor="middle" >40</text>
<text x="522.5" y="1409.0" font-size="18" fill="#000" text-anchor="middle" >60</text>
<text x="663.0" y="1409.0" font-size="18" fill="#000" text-anchor="middle" >80</text>
<text x="803.5" y="1409.0" font-size="18" fill="#000" text-anchor="middle" >100</text>
<text x="944.0" y="1409.0" font-size="18" fill="#000" text-anchor="middle" >120</text>
<text x="1084.5" y="1409.0" font-size="18" fill="#000" text-anchor="middle" >140</text>
<text x="1225.0" y="1409.0" font-size="18" fill="#000" text-anchor="middle" >160</text>
<text x="1365.5" y="1409.0" font-size="18" fill="#000" text-anchor="middle" >180</text>
<text x="1506.0" y="1409.0" font-size="18" fill="#000" text-anchor="middle" >200</text>
<text x="23.0" y="1015.0" font-size="18" fill="#202840" text-anchor="start" >Z</text>
<text x="35.0" y="1015.0" font-size="12" fill="#5070b0" text-anchor="start" >m</text>
<text x="1686.0" y="1409.0" font-size="18" fill="#1c2050" text-anchor="start" >X</text>
<text x="1698.0" y="1409.0" font-size="12" fill="#5070b0" text-anchor="start" >m</text>
<text x="1723.0" y="1409.0" font-size="15.5" fill="#000" text-anchor="start" >10</text>
<text x="1107.3" y="1007.8" font-size="15" fill="#0000ff" text-anchor="middle" letter-spacing="0.55">Resistivity block-section</text>
<path d="M51 1033h6v11h-6zM63 1033h6v11h-6zM77 1033h6v11h-6zM84 1033h6v11h-6zM91 1033h6v11h-6zM98 1033h6v11h-6zM105 1033h6v11h-6zM112 1033h6v11h-6zM119 1033h6v11h-6zM126 1033h6v11h-6zM133 1033h6v11h-6zM140 1033h6v11h-6zM147 1033h6v11h-6zM154 1033h6v11h-6zM161 1033h6v11h-6zM168 1033h6v11h-6zM175 1033h6v11h-6zM182 1033h6v11h-6zM189 1033h6v11h-6zM196 1033h6v11h-6zM203 1033h6v11h-6zM210 1033h6v11h-6zM217 1033h6v11h-6zM225 1033h6v11h-6zM232 1033h6v11h-6zM239 1033h6v11h-6zM246 1033h6v11h-6zM253 1033h6v11h-6zM260 1033h6v11h-6zM267 1033h6v11h-6zM274 1033h6v11h-6zM281 1033h6v11h-6zM288 1033h6v11h-6zM295 1033h6v11h-6zM302 1033h6v11h-6zM309 1033h6v11h-6zM316 1033h6v11h-6zM323 1033h6v11h-6zM330 1033h6v11h-6zM337 1033h6v11h-6zM344 1033h6v11h-6zM351 1033h6v11h-6zM358 1033h6v11h-6zM365 1033h6v11h-6zM372 1033h6v11h-6zM379 1033h6v11h-6zM386 1033h6v11h-6zM393 1033h6v11h-6zM400 1033h6v11h-6zM407 1033h6v11h-6zM414 1033h6v11h-6zM421 1033h6v11h-6zM428 1033h6v11h-6zM435 1033h6v11h-6zM442 1033h6v11h-6zM449 1033h6v11h-6zM456 1033h6v11h-6zM463 1033h6v11h-6zM470 1033h6v11h-6zM477 1033h6v11h-6zM484 1033h6v11h-6zM491 1033h6v11h-6zM499 1033h6v11h-6zM506 1033h6v11h-6zM513 1033h6v11h-6zM520 1033h6v11h-6zM527 1033h6v11h-6zM534 1033h6v11h-6zM541 1033h6v11h-6zM548 1033h6v11h-6zM555 1033h6v11h-6zM562 1033h6v11h-6zM569 1033h6v11h-6zM576 1033h6v11h-6zM583 1033h6v11h-6zM590 1033h6v11h-6zM597 1033h6v11h-6zM604 1033h6v11h-6zM611 1033h6v11h-6zM618 1033h6v11h-6zM625 1033h6v11h-6zM632 1033h6v11h-6zM639 1033h6v11h-6zM646 1033h6v11h-6zM653 1033h6v11h-6zM660 1033h6v11h-6zM667 1033h6v11h-6zM674 1033h6v11h-6zM681 1033h6v11h-6zM688 1033h6v11h-6zM695 1033h6v11h-6zM702 1033h6v11h-6zM709 1033h6v11h-6zM716 1033h6v11h-6zM723 1033h6v11h-6zM730 1033h6v11h-6zM737 1033h6v11h-6zM744 1033h6v11h-6zM751 1033h6v11h-6zM758 1033h6v11h-6zM765 1033h6v11h-6zM772 1033h6v11h-6zM779 1033h6v11h-6zM787 1033h6v11h-6zM794 1033h6v11h-6zM801 1033h6v11h-6zM808 1033h6v11h-6zM815 1033h6v11h-6zM822 1033h6v11h-6zM829 1033h6v11h-6zM836 1033h6v11h-6zM843 1033h6v11h-6zM850 1033h6v11h-6zM857 1033h6v11h-6zM864 1033h6v11h-6zM871 1033h6v11h-6zM878 1033h6v11h-6zM885 1033h6v11h-6zM892 1033h6v11h-6zM899 1033h6v11h-6zM906 1033h6v11h-6zM913 1033h6v11h-6zM920 1033h6v11h-6zM927 1033h6v11h-6zM934 1033h6v11h-6zM941 1033h6v11h-6zM948 1033h6v11h-6zM955 1033h6v11h-6zM962 1033h6v11h-6zM969 1033h6v11h-6zM976 1033h6v11h-6zM983 1033h6v11h-6zM990 1033h6v11h-6zM997 1033h6v11h-6zM1004 1033h6v11h-6zM1011 1033h6v11h-6zM1018 1033h6v11h-6zM1025 1033h6v11h-6zM1032 1033h6v11h-6zM1039 1033h6v11h-6zM1046 1033h6v11h-6zM1053 1033h6v11h-6zM1061 1033h6v11h-6zM1068 1033h6v11h-6zM1075 1033h6v11h-6zM1082 1033h6v11h-6zM1089 1033h6v11h-6zM1096 1033h6v11h-6zM1103 1033h6v11h-6zM1110 1033h6v11h-6zM1117 1033h6v11h-6zM1124 1033h6v11h-6zM1131 1033h6v11h-6zM1138 1033h6v11h-6zM1145 1033h6v11h-6zM1152 1033h6v11h-6zM1159 1033h6v11h-6zM1166 1033h6v11h-6zM1173 1033h6v11h-6zM1180 1033h6v11h-6zM1187 1033h6v11h-6zM1194 1033h6v11h-6zM1201 1033h6v11h-6zM1208 1033h6v11h-6zM1215 1033h6v11h-6zM1222 1033h6v11h-6zM1229 1033h6v11h-6zM1236 1033h6v11h-6zM1243 1033h6v11h-6zM1250 1033h6v11h-6zM1263 1033h6v11h-6zM1277 1033h6v11h-6zM1291 1033h6v11h-6zM1305 1033h6v11h-6zM1319 1033h6v11h-6zM1333 1033h6v11h-6zM1347 1033h6v11h-6zM1361 1033h6v11h-6zM1375 1033h6v11h-6zM1389 1033h6v11h-6zM1403 1033h6v11h-6zM1417 1033h6v11h-6zM1431 1033h6v11h-6zM1445 1033h6v11h-6zM1459 1033h6v11h-6zM1473 1033h6v11h-6zM1487 1033h6v11h-6zM1501 1033h6v11h-6zM1515 1033h6v11h-6zM1529 1033h6v11h-6zM1543 1033h6v11h-6zM1558 1033h6v11h-6zM1572 1033h6v11h-6zM1586 1033h6v11h-6zM1600 1033h6v11h-6zM1614 1033h6v11h-6zM1628 1033h6v11h-6zM1642 1033h6v11h-6zM1656 1033h6v11h-6zM1670 1033h6v11h-6z" fill="#909090"/>
<path d="M53 1033h2.5v11h-2.5zM65 1033h2.5v11h-2.5zM79 1033h2.5v11h-2.5zM86 1033h2.5v11h-2.5zM93 1033h2.5v11h-2.5zM100 1033h2.5v11h-2.5zM107 1033h2.5v11h-2.5zM114 1033h2.5v11h-2.5zM121 1033h2.5v11h-2.5zM128 1033h2.5v11h-2.5zM135 1033h2.5v11h-2.5zM142 1033h2.5v11h-2.5zM149 1033h2.5v11h-2.5zM156 1033h2.5v11h-2.5zM163 1033h2.5v11h-2.5zM170 1033h2.5v11h-2.5zM177 1033h2.5v11h-2.5zM184 1033h2.5v11h-2.5zM191 1033h2.5v11h-2.5zM198 1033h2.5v11h-2.5zM205 1033h2.5v11h-2.5zM212 1033h2.5v11h-2.5zM219 1033h2.5v11h-2.5zM227 1033h2.5v11h-2.5zM234 1033h2.5v11h-2.5zM241 1033h2.5v11h-2.5zM248 1033h2.5v11h-2.5zM255 1033h2.5v11h-2.5zM262 1033h2.5v11h-2.5zM269 1033h2.5v11h-2.5zM276 1033h2.5v11h-2.5zM283 1033h2.5v11h-2.5zM290 1033h2.5v11h-2.5zM297 1033h2.5v11h-2.5zM304 1033h2.5v11h-2.5zM311 1033h2.5v11h-2.5zM318 1033h2.5v11h-2.5zM325 1033h2.5v11h-2.5zM332 1033h2.5v11h-2.5zM339 1033h2.5v11h-2.5zM346 1033h2.5v11h-2.5zM353 1033h2.5v11h-2.5zM360 1033h2.5v11h-2.5zM367 1033h2.5v11h-2.5zM374 1033h2.5v11h-2.5zM381 1033h2.5v11h-2.5zM388 1033h2.5v11h-2.5zM395 1033h2.5v11h-2.5zM402 1033h2.5v11h-2.5zM409 1033h2.5v11h-2.5zM416 1033h2.5v11h-2.5zM423 1033h2.5v11h-2.5zM430 1033h2.5v11h-2.5zM437 1033h2.5v11h-2.5zM444 1033h2.5v11h-2.5zM451 1033h2.5v11h-2.5zM458 1033h2.5v11h-2.5zM465 1033h2.5v11h-2.5zM472 1033h2.5v11h-2.5zM479 1033h2.5v11h-2.5zM486 1033h2.5v11h-2.5zM493 1033h2.5v11h-2.5zM501 1033h2.5v11h-2.5zM508 1033h2.5v11h-2.5zM515 1033h2.5v11h-2.5zM522 1033h2.5v11h-2.5zM529 1033h2.5v11h-2.5zM536 1033h2.5v11h-2.5zM543 1033h2.5v11h-2.5zM550 1033h2.5v11h-2.5zM557 1033h2.5v11h-2.5zM564 1033h2.5v11h-2.5zM571 1033h2.5v11h-2.5zM578 1033h2.5v11h-2.5zM585 1033h2.5v11h-2.5zM592 1033h2.5v11h-2.5zM599 1033h2.5v11h-2.5zM606 1033h2.5v11h-2.5zM613 1033h2.5v11h-2.5zM620 1033h2.5v11h-2.5zM627 1033h2.5v11h-2.5zM634 1033h2.5v11h-2.5zM641 1033h2.5v11h-2.5zM648 1033h2.5v11h-2.5zM655 1033h2.5v11h-2.5zM662 1033h2.5v11h-2.5zM669 1033h2.5v11h-2.5zM676 1033h2.5v11h-2.5zM683 1033h2.5v11h-2.5zM690 1033h2.5v11h-2.5zM697 1033h2.5v11h-2.5zM704 1033h2.5v11h-2.5zM711 1033h2.5v11h-2.5zM718 1033h2.5v11h-2.5zM725 1033h2.5v11h-2.5zM732 1033h2.5v11h-2.5zM739 1033h2.5v11h-2.5zM746 1033h2.5v11h-2.5zM753 1033h2.5v11h-2.5zM760 1033h2.5v11h-2.5zM767 1033h2.5v11h-2.5zM774 1033h2.5v11h-2.5zM781 1033h2.5v11h-2.5zM789 1033h2.5v11h-2.5zM796 1033h2.5v11h-2.5zM803 1033h2.5v11h-2.5zM810 1033h2.5v11h-2.5zM817 1033h2.5v11h-2.5zM824 1033h2.5v11h-2.5zM831 1033h2.5v11h-2.5zM838 1033h2.5v11h-2.5zM845 1033h2.5v11h-2.5zM852 1033h2.5v11h-2.5zM859 1033h2.5v11h-2.5zM866 1033h2.5v11h-2.5zM873 1033h2.5v11h-2.5zM880 1033h2.5v11h-2.5zM887 1033h2.5v11h-2.5zM894 1033h2.5v11h-2.5zM901 1033h2.5v11h-2.5zM908 1033h2.5v11h-2.5zM915 1033h2.5v11h-2.5zM922 1033h2.5v11h-2.5zM929 1033h2.5v11h-2.5zM936 1033h2.5v11h-2.5zM943 1033h2.5v11h-2.5zM950 1033h2.5v11h-2.5zM957 1033h2.5v11h-2.5zM964 1033h2.5v11h-2.5zM971 1033h2.5v11h-2.5zM978 1033h2.5v11h-2.5zM985 1033h2.5v11h-2.5zM992 1033h2.5v11h-2.5zM999 1033h2.5v11h-2.5zM1006 1033h2.5v11h-2.5zM1013 1033h2.5v11h-2.5zM1020 1033h2.5v11h-2.5zM1027 1033h2.5v11h-2.5zM1034 1033h2.5v11h-2.5zM1041 1033h2.5v11h-2.5zM1048 1033h2.5v11h-2.5zM1055 1033h2.5v11h-2.5zM1063 1033h2.5v11h-2.5zM1070 1033h2.5v11h-2.5zM1077 1033h2.5v11h-2.5zM1084 1033h2.5v11h-2.5zM1091 1033h2.5v11h-2.5zM1098 1033h2.5v11h-2.5zM1105 1033h2.5v11h-2.5zM1112 1033h2.5v11h-2.5zM1119 1033h2.5v11h-2.5zM1126 1033h2.5v11h-2.5zM1133 1033h2.5v11h-2.5zM1140 1033h2.5v11h-2.5zM1147 1033h2.5v11h-2.5zM1154 1033h2.5v11h-2.5zM1161 1033h2.5v11h-2.5zM1168 1033h2.5v11h-2.5zM1175 1033h2.5v11h-2.5zM1182 1033h2.5v11h-2.5zM1189 1033h2.5v11h-2.5zM1196 1033h2.5v11h-2.5zM1203 1033h2.5v11h-2.5zM1210 1033h2.5v11h-2.5zM1217 1033h2.5v11h-2.5zM1224 1033h2.5v11h-2.5zM1231 1033h2.5v11h-2.5zM1238 1033h2.5v11h-2.5zM1245 1033h2.5v11h-2.5zM1252 1033h2.5v11h-2.5zM1265 1033h2.5v11h-2.5zM1279 1033h2.5v11h-2.5zM1293 1033h2.5v11h-2.5zM1307 1033h2.5v11h-2.5zM1321 1033h2.5v11h-2.5zM1335 1033h2.5v11h-2.5zM1349 1033h2.5v11h-2.5zM1363 1033h2.5v11h-2.5zM1377 1033h2.5v11h-2.5zM1391 1033h2.5v11h-2.5zM1405 1033h2.5v11h-2.5zM1419 1033h2.5v11h-2.5zM1433 1033h2.5v11h-2.5zM1447 1033h2.5v11h-2.5zM1461 1033h2.5v11h-2.5zM1475 1033h2.5v11h-2.5zM1489 1033h2.5v11h-2.5zM1503 1033h2.5v11h-2.5zM1517 1033h2.5v11h-2.5zM1531 1033h2.5v11h-2.5zM1545 1033h2.5v11h-2.5zM1560 1033h2.5v11h-2.5zM1574 1033h2.5v11h-2.5zM1588 1033h2.5v11h-2.5zM1602 1033h2.5v11h-2.5zM1616 1033h2.5v11h-2.5zM1630 1033h2.5v11h-2.5zM1644 1033h2.5v11h-2.5zM1658 1033h2.5v11h-2.5zM1672 1033h2.5v11h-2.5z" fill="#000"/>
<rect x="1698.5" y="1025.5" width="25" height="358" fill="none" stroke="#000" stroke-width="1.6"/>
<text x="1733.0" y="1058.4" font-size="14.5" fill="#000" text-anchor="start" letter-spacing="-0.3">100</text>
<text x="1733.0" y="1091.5" font-size="14.5" fill="#000" text-anchor="start" letter-spacing="-0.3">60</text>
<text x="1733.0" y="1124.6" font-size="14.5" fill="#000" text-anchor="start" letter-spacing="-0.3">40</text>
<text x="1733.0" y="1157.7" font-size="14.5" fill="#000" text-anchor="start" letter-spacing="-0.3">25</text>
<text x="1733.0" y="1190.8" font-size="14.5" fill="#000" text-anchor="start" letter-spacing="-0.3">16</text>
<text x="1733.0" y="1223.9" font-size="14.5" fill="#000" text-anchor="start" letter-spacing="-0.3">10</text>
<text x="1733.0" y="1257.0" font-size="14.5" fill="#000" text-anchor="start" letter-spacing="-0.3">6</text>
<text x="1733.0" y="1290.1" font-size="14.5" fill="#000" text-anchor="start" letter-spacing="-0.3">4</text>
<text x="1733.0" y="1323.2" font-size="14.5" fill="#000" text-anchor="start" letter-spacing="-0.3">2.5</text>
<text x="1733.0" y="1356.3" font-size="14.5" fill="#000" text-anchor="start" letter-spacing="-0.3">1.6</text>
<text x="1733.0" y="1389.4" font-size="14.5" fill="#000" text-anchor="start" letter-spacing="-0.3">1</text>
<path d="M1724 1053.9h6 M1724 1070.5h4 M1724 1087.0h6 M1724 1103.5h4 M1724 1120.1h6 M1724 1136.7h4 M1724 1153.2h6 M1724 1169.8h4 M1724 1186.3h6 M1724 1202.9h4 M1724 1219.4h6 M1724 1236.0h4 M1724 1252.5h6 M1724 1269.0h4 M1724 1285.6h6 M1724 1302.2h4 M1724 1318.7h6 M1724 1335.2h4 M1724 1351.8h6 M1724 1368.4h4 M1724 1384.9h6 M1724 1384.5h6" stroke="#000" stroke-width="1.6"/>
<text x="1698.0" y="1016.5" font-size="18" fill="#101840" text-anchor="start" >ρ</text>
<text x="1709.0" y="1018.0" font-size="12" fill="#5070b0" text-anchor="start" >m</text>
<path d="M1688 1212 L1697 1218.5 L1688 1225z" fill="#000"/>
<path d="M15.5 1437 L10 1444 h3 v8 h5 v-8 h3z" fill="#fff" stroke="#000" stroke-width="1.3"/>
<rect x="383" y="1435" width="4.5" height="4" fill="#1040c0"/><path d="M381 1442 h6.5 v10 h3 v2.5 h-10 v-2.5 h2.5 v-7.5 h-2z" fill="#1040c0"/></svg>
</body></html>
